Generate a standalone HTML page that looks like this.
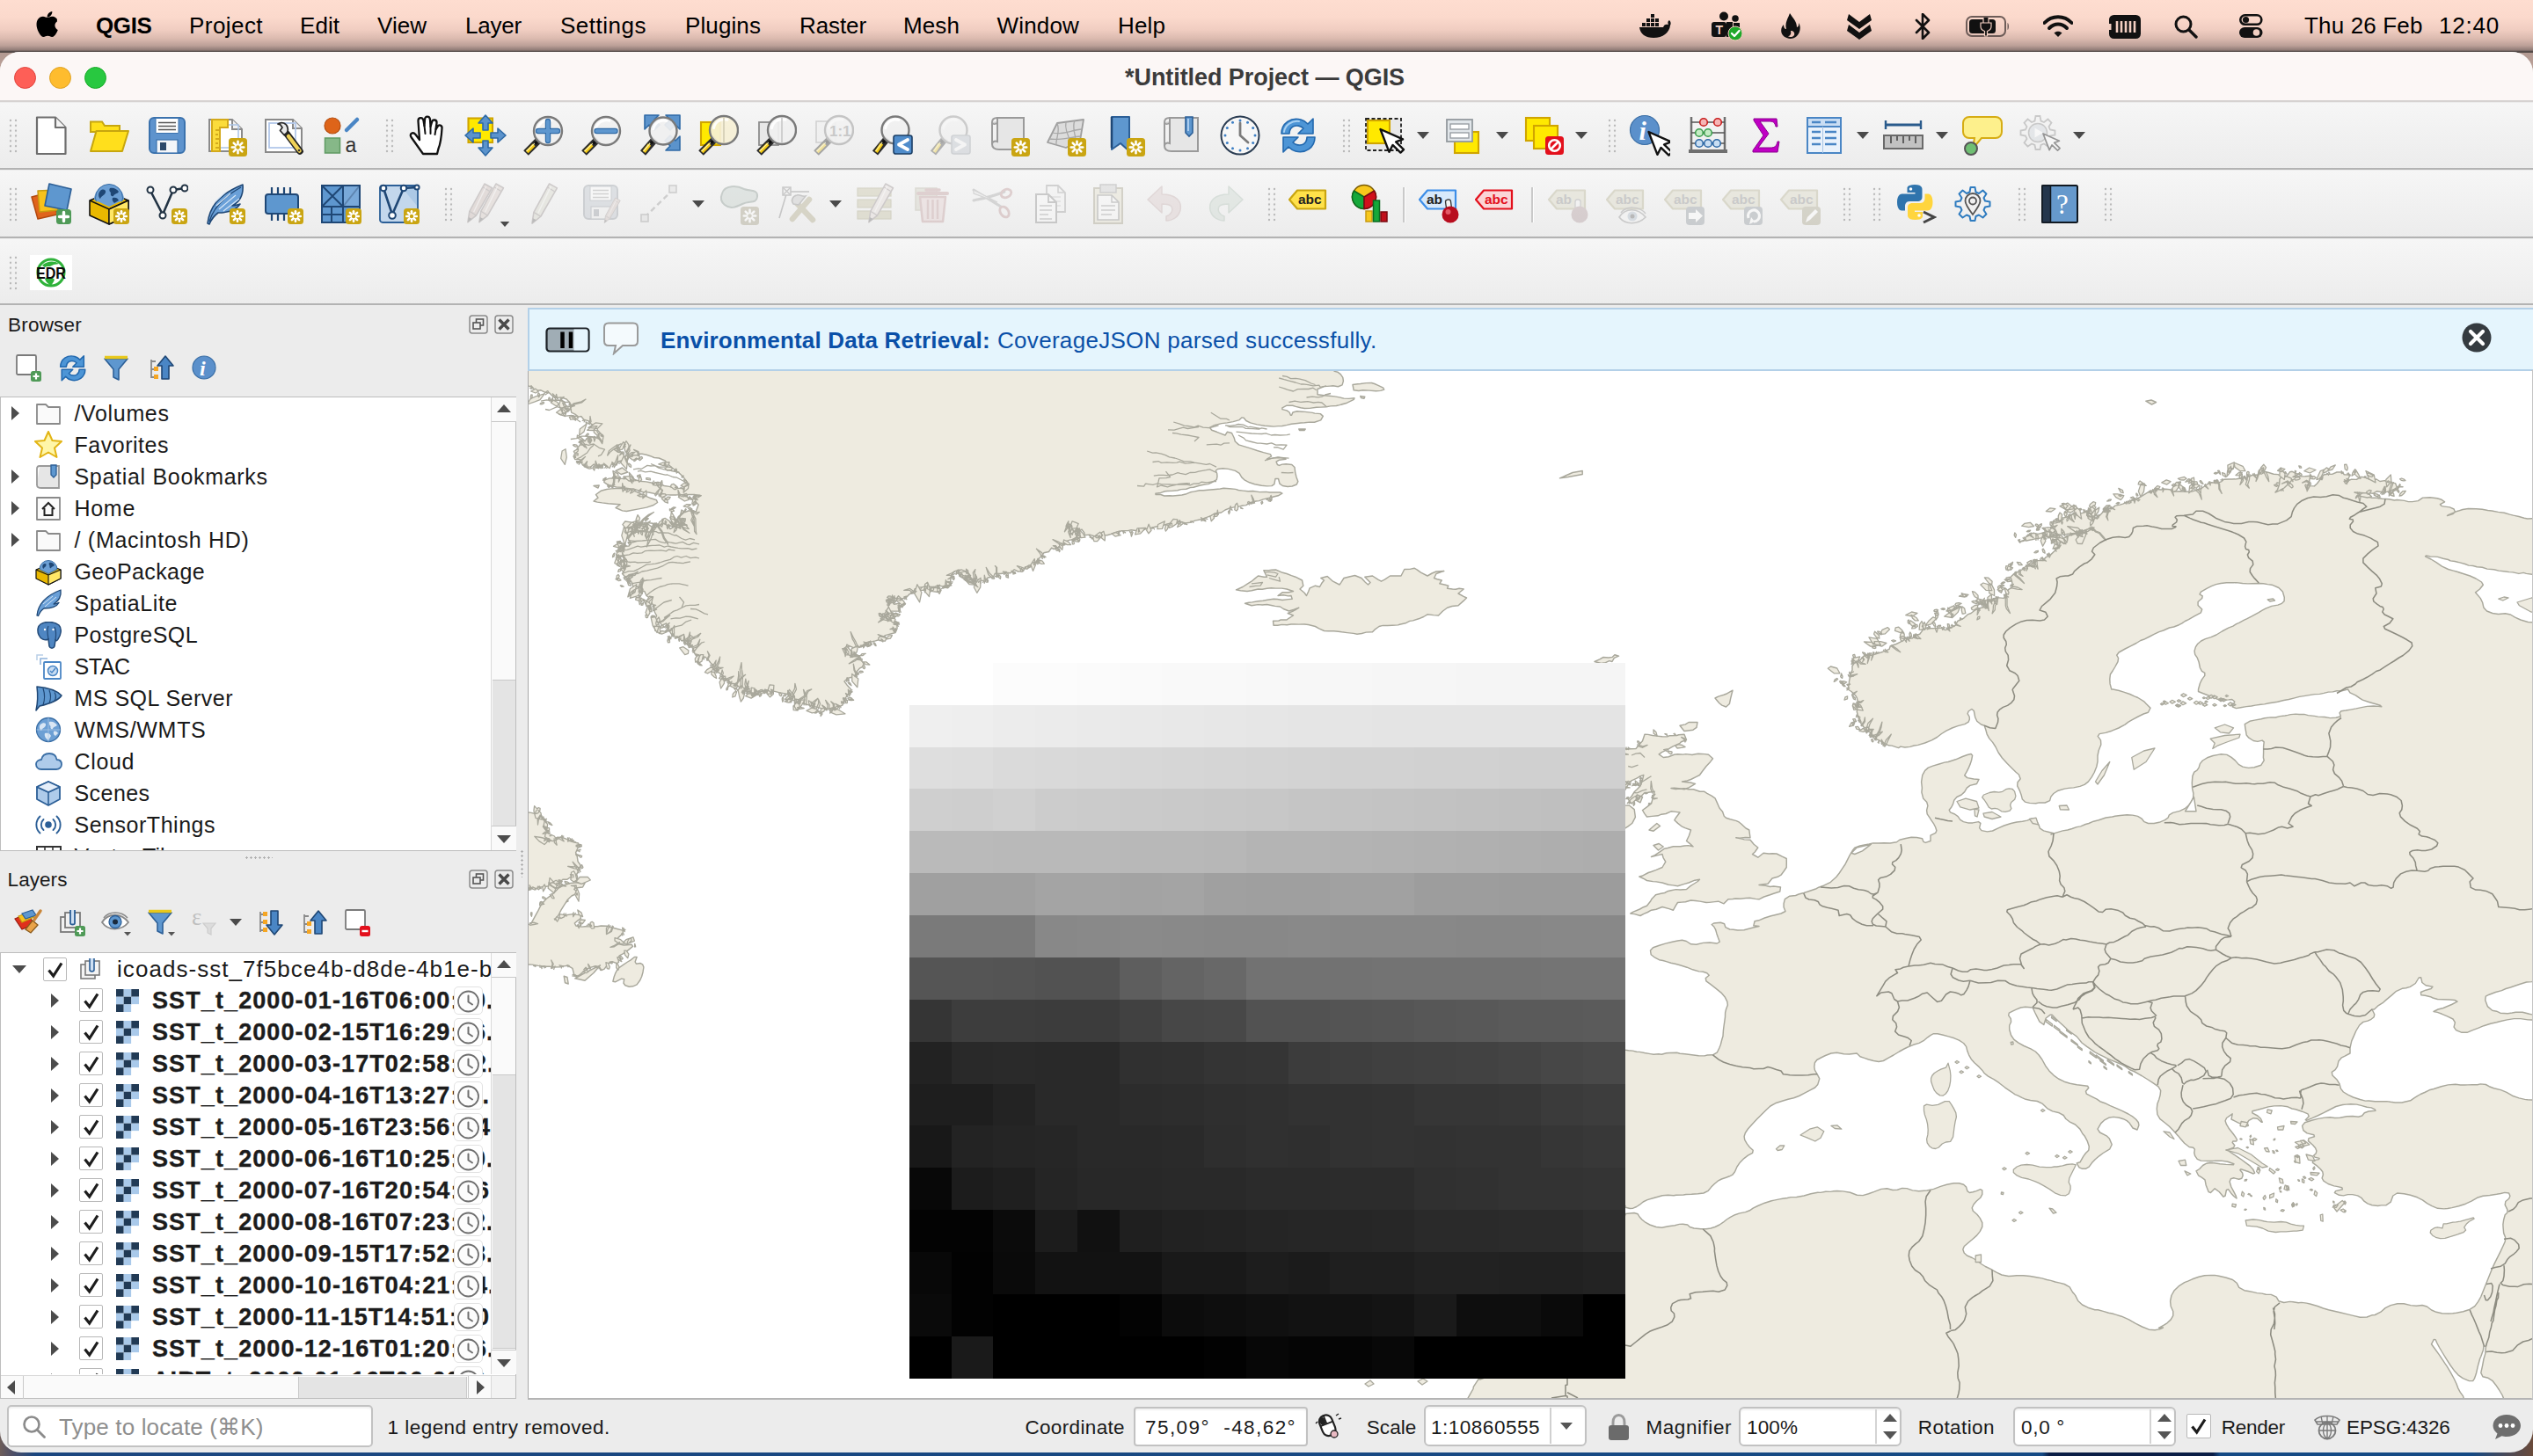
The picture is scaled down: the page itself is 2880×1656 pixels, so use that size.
<!DOCTYPE html><html><head><meta charset="utf-8"><title>QGIS</title><style>
*{box-sizing:border-box}
html,body{margin:0;padding:0}
body{width:2880px;height:1656px;position:relative;overflow:hidden;background:#0e3c78;font-family:"Liberation Sans",sans-serif}
.t{position:absolute;white-space:pre;line-height:1}
.menubar{position:absolute;left:0;top:0;width:2880px;height:100px;background:linear-gradient(#feddd0 0px,#fbd9cc 20px,#f0cdc1 34px,#dbbaaf 44px,#bb9f97 52px,#8f7b76 57px,#3a3433 59.2px,#b39a92 60.5px,#c4a79e 100px)}
.deskbottom{position:absolute;left:0;top:1600px;width:2880px;height:56px;background:linear-gradient(90deg,#6d5d5a 0px,#4f4f66 14px,#1b467f 40px,#154a84 2322px,#0a1d45 2330px,#0a1d45 2516px,#154a84 2524px,#154a84 2810px,#4a4a58 2850px,#6a4a3a 2880px)}
.win{position:absolute;left:0;top:59px;width:2880px;height:1593px;border-radius:22px 24px 26px 24px;background:#ececec;overflow:hidden}
.win>*{position:absolute}
.titlebar{left:0;top:0;width:2880px;height:57px;background:#fcf7f6;border-bottom:2px solid #d6d2d1}
.tl{top:17px;width:25px;height:25px;border-radius:50%}
.win .tb{left:0;width:2880px;background:linear-gradient(#f6f6f6,#ececec)}
.win .tb,.win .hl{margin-top:-59px}
.hl{left:0;width:2880px;height:2.2px;background:#b3b3b3}
.handle{position:absolute;width:12px;height:41px;background-image:radial-gradient(circle,#b9b9b9 1.1px,transparent 1.6px);background-size:6px 5.85px;background-position:0 0}
.vsep{position:absolute;width:3px;height:40px;background:linear-gradient(90deg,#c9c9c9 0 1.5px,#fdfdfd 1.5px 3px)}
.dd{position:absolute;width:0;height:0;border-left:7.5px solid transparent;border-right:7.5px solid transparent;border-top:8.5px solid #4a4a4a}
.ic{position:absolute}
</style></head><body><div class="menubar"></div>
<div class="deskbottom"></div>
<svg style="position:absolute;left:40px;top:11px" width="28" height="34" viewBox="0 0 28 34"><path fill="#000" d="M19.2 0c.2 1.7-.5 3.4-1.5 4.6-1 1.3-2.700 2.200-4.300 2.100-.2-1.600.600-3.400 1.500-4.400C15.900 1.100 17.700.200 19.200 0zM24.900 11.600c-2.900 1.700-3.700 6.300-.100 8.800.300.200.700.400 1.000.600-.500 1.500-1.200 2.900-2.100 4.200-1.300 1.900-2.600 3.800-4.700 3.800-2.000.000-2.600-1.200-4.900-1.200-2.300.000-3.000 1.200-4.900 1.200-2.000.100-3.600-2.100-4.900-4.000C1.700 21.200-.400 14.300 2.300 9.600 3.600 7.300 6.000 5.800 8.600 5.800c2.000.000 3.800 1.300 5.000 1.300 1.200.000 3.400-1.600 5.800-1.400 1.000.000 3.800.400 5.500 3.000z" transform="translate(0.5,2) scale(0.98,1.0)"/></svg>
<span class="t " id="t0" style="left:109px;top:16.3px;font-size:26px;letter-spacing:-0.379px;color:#000;font-weight:bold">QGIS</span>
<span class="t " id="t1" style="left:215px;top:16.3px;font-size:26px;letter-spacing:0.440px;color:#000;">Project</span>
<span class="t " id="t2" style="left:341px;top:16.3px;font-size:26px;letter-spacing:0.047px;color:#000;">Edit</span>
<span class="t " id="t3" style="left:429px;top:16.3px;font-size:26px;letter-spacing:0.027px;color:#000;">View</span>
<span class="t " id="t4" style="left:529px;top:16.3px;font-size:26px;letter-spacing:-0.209px;color:#000;">Layer</span>
<span class="t " id="t5" style="left:637px;top:16.3px;font-size:26px;letter-spacing:0.506px;color:#000;">Settings</span>
<span class="t " id="t6" style="left:779px;top:16.3px;font-size:26px;letter-spacing:0.103px;color:#000;">Plugins</span>
<span class="t " id="t7" style="left:909px;top:16.3px;font-size:26px;letter-spacing:-0.096px;color:#000;">Raster</span>
<span class="t " id="t8" style="left:1027px;top:16.3px;font-size:26px;letter-spacing:0.105px;color:#000;">Mesh</span>
<span class="t " id="t9" style="left:1133.6px;top:16.3px;font-size:26px;letter-spacing:0.153px;color:#000;">Window</span>
<span class="t " id="t10" style="left:1271px;top:16.3px;font-size:26px;letter-spacing:0.129px;color:#000;">Help</span>
<span class="t " id="t11" style="left:2620px;top:16.3px;font-size:26px;letter-spacing:0.162px;color:#000">Thu 26 Feb</span>
<span class="t " id="t12" style="left:2773px;top:16.3px;font-size:26px;letter-spacing:0.784px;color:#000">12:40</span>
<svg class="ic" style="left:1862.5px;top:15.0px" width="37" height="30" viewBox="0 0 37 30"><path d="M1 16H28C29 13 31 12 34 13C33 11 33 9 35 8C37 10 37 12 36 14C35 22 28 28 17 28C8 28 2 24 1 16Z" fill="#111"/><g fill="#111"><rect x="4" y="11" width="4" height="4"/><rect x="9" y="11" width="4" height="4"/><rect x="14" y="11" width="4" height="4"/><rect x="19" y="11" width="4" height="4"/><rect x="9" y="6" width="4" height="4"/><rect x="14" y="6" width="4" height="4"/><rect x="19" y="6" width="4" height="4"/><rect x="14" y="1" width="4" height="4"/></g></svg>
<svg class="ic" style="left:1946.0px;top:13.0px" width="36" height="34" viewBox="0 0 36 34"><circle cx="14" cy="5.500" r="5" fill="#111"/><circle cx="27" cy="8" r="3.800" fill="#111"/><rect x="0" y="12" width="17" height="17" rx="3" fill="#111"/><path d="M17 12H24V24C24 27 21 29 17 29Z" fill="#111"/><path d="M25 13H32V21C32 25 29 27 25 26Z" fill="#111"/><text x="4.500" y="26" font-family="Liberation Sans,sans-serif" font-weight="bold" font-size="14" fill="#f6d3c6">T</text><circle cx="27" cy="25" r="8" fill="#1fa82a" stroke="#f1c9bc" stroke-width="1"/><path d="M23 25L26 28L31.500 22" fill="none" stroke="#fff" stroke-width="2.400" stroke-linecap="round" stroke-linejoin="round"/></svg>
<svg class="ic" style="left:2024.0px;top:15.0px" width="24" height="30" viewBox="0 0 24 30"><path d="M11 0C14 5 19 9 19 16C22 15 21 11 21 11C24 15 23 22 19 26C15 30 7 30 3 25C0 21 1 16 4 13C4 16 5 18 7 18C5 11 9 6 11 0Z" fill="#111"/><path d="M12 20C15 20 17 22 16 25C15 27 11 28 9 26C11 26 13 24 12 20Z" fill="#efc6b9"/></svg>
<svg class="ic" style="left:2100.0px;top:14.5px" width="28" height="31" viewBox="0 0 28 31"><path d="M2 2L14 11L26 2L28 9L14 19L0 9Z" fill="#111" transform="translate(0,-1)"/><path d="M2 14L14 23L26 14L28 21L14 31L0 21Z" fill="#111" transform="translate(0,-1)"/></svg>
<svg class="ic" style="left:2177.0px;top:15.0px" width="18" height="30" viewBox="0 0 18 30"><path d="M2 8L16 22L9 29V1L16 8L2 22" fill="none" stroke="#111" stroke-width="2.600" stroke-linejoin="round" stroke-linecap="round"/></svg>
<svg class="ic" style="left:2234.5px;top:18.0px" width="51" height="24" viewBox="0 0 51 24"><rect x="1" y="1" width="44" height="22" rx="6" fill="none" stroke="#6d5c58" stroke-width="2"/><path d="M47.500 8C49.500 9 49.500 15 47.500 16Z" fill="#6d5c58"/><rect x="4" y="4" width="30" height="16" rx="3.500" fill="#111"/><path d="M20 2V8H26V2M17 8H29V12C29 16 26 17 24.500 17.500V23H21.500V17.500C20 17 17 16 17 12Z" fill="#111" stroke="#f3cfc2" stroke-width="1.200"/></svg>
<svg class="ic" style="left:2323.0px;top:17.0px" width="34" height="26" viewBox="0 0 34 26"><path d="M1.500 9C10 0 24 0 32.500 9" fill="none" stroke="#111" stroke-width="4" stroke-linecap="round"/><path d="M7 15C13 9 21 9 27 15" fill="none" stroke="#111" stroke-width="4" stroke-linecap="round"/><path d="M12.500 20.500C15 18 19 18 21.500 20.500L17 25Z" fill="#111"/></svg>
<svg class="ic" style="left:2397.5px;top:16.5px" width="36" height="27" viewBox="0 0 36 27"><rect x="0" y="0" width="36" height="27" rx="5.500" fill="#111"/><path d="M9 7V20M14 7V20M19 7V20M24 7V20M29 7V20" stroke="#f3cfc2" stroke-width="2.600"/><path d="M0 10H2.500V17H0Z" fill="#f3cfc2"/></svg>
<svg class="ic" style="left:2471.5px;top:16.5px" width="27" height="27" viewBox="0 0 27 27"><circle cx="10.500" cy="10.500" r="8.500" fill="none" stroke="#111" stroke-width="3"/><path d="M17 17L25 25" stroke="#111" stroke-width="3.400" stroke-linecap="round"/></svg>
<svg class="ic" style="left:2545.5px;top:16.0px" width="27" height="28" viewBox="0 0 27 28"><rect x="1.300" y="1.300" width="24" height="10.500" rx="5.250" fill="none" stroke="#111" stroke-width="2.600"/><circle cx="7.500" cy="6.500" r="3.600" fill="#111"/><rect x="0" y="15" width="26.500" height="12" rx="6" fill="#111"/><circle cx="19.500" cy="21" r="3.800" fill="#f3cfc2"/></svg>
<div class="win">
<div class="titlebar"></div>
<div class="tl" style="left:16px;background:#fe5f57;border:1px solid #e0443e"></div><div class="tl" style="left:56px;background:#febc2e;border:1px solid #dea123"></div><div class="tl" style="left:96px;background:#28c840;border:1px solid #1aab29"></div>
<div class="tb" style="top:117px;height:75px"></div><div class="hl" style="top:191px"></div>
<div class="tb" style="top:193.5px;height:76px"></div><div class="hl" style="top:269px"></div>
<div class="tb" style="top:271.5px;height:74px"></div><div class="hl" style="top:345px"></div>
</div>
<span class="t " id="t13" style="left:1279px;top:75.1px;font-size:27px;letter-spacing:-0.064px;color:#3b3b3b;font-weight:bold">*Untitled Project — QGIS</span>
<div class="handle" style="left:9px;top:134px"></div>
<div class="handle" style="left:437px;top:134px"></div>
<div class="handle" style="left:1525px;top:134px"></div>
<div class="handle" style="left:1827px;top:134px"></div>
<div class="handle" style="left:9px;top:212px"></div>
<div class="handle" style="left:504px;top:212px"></div>
<div class="handle" style="left:1440px;top:212px"></div>
<div class="handle" style="left:2094px;top:212px"></div>
<div class="handle" style="left:2128px;top:212px"></div>
<div class="handle" style="left:2293px;top:212px"></div>
<div class="handle" style="left:2391px;top:212px"></div>
<div class="handle" style="left:9px;top:290px"></div>
<div class="vsep" style="left:1595px;top:213px"></div><div class="vsep" style="left:1741px;top:213px"></div>
<svg class="ic" style="left:34.0px;top:130.0px" width="48" height="48" viewBox="0 0 48 48"><path d="M8 3.500H29L40.500 15V45H8Z" fill="#fff" stroke="#6e6e6e" stroke-width="2.200" stroke-linejoin="round"/><path d="M29 3.500V15H40.500" fill="#f4f4f4" stroke="#6e6e6e" stroke-width="2.200" stroke-linejoin="round"/></svg>
<svg class="ic" style="left:100.0px;top:130.0px" width="48" height="48" viewBox="0 0 48 48"><path d="M3 8.500H16L19 13H36V20H3Z" fill="#ffe01a" stroke="#c7a60e" stroke-width="2"/><path d="M3 42L9.500 19H46L39 42Z" fill="#ffdf1c" stroke="#c7a60e" stroke-width="2" stroke-linejoin="round"/></svg>
<svg class="ic" style="left:166.0px;top:130.0px" width="48" height="48" viewBox="0 0 48 48"><rect x="4" y="4" width="40" height="40" rx="5" fill="#5e93cd" stroke="#3b72ad" stroke-width="2"/><rect x="11" y="4.500" width="26" height="17" rx="1" fill="#fff" stroke="#3b72ad" stroke-width="1"/><path d="M14 9.500H34M14 13.500H34M14 17.500H34" stroke="#555" stroke-width="1.600"/><rect x="12" y="29" width="24" height="15" fill="#f4f6f9" stroke="#3b72ad" stroke-width="1.200"/><rect x="16" y="32" width="7" height="9" fill="#2d4a6b"/></svg>
<svg class="ic" style="left:233.0px;top:130.0px" width="48" height="48" viewBox="0 0 48 48"><path d="M5 6H31L42 17V42H5Z" fill="#fff" stroke="#8a8a8a" stroke-width="2"/><path d="M31 6V17H42" fill="#f1f1f1" stroke="#8a8a8a" stroke-width="2"/><rect x="10" y="12" width="28" height="26" fill="none" stroke="#aac4e6" stroke-width="1.500"/><path d="M8 6H26V15H17V42H8Z" fill="#fbdc3c" stroke="#d3a91a" stroke-width="2"/><path d="M12 18H16M12 23H15M12 28H16M12 33H15M12 38H16" stroke="#c79a10" stroke-width="1.500"/><g opacity="1"><rect x="27" y="27" width="21" height="21" rx="3.5" fill="#caa512"/><path d="M37.5 37.5L44.2 37.5" stroke="#fff" stroke-width="2.6" stroke-linecap="round"/><path d="M37.5 37.5L42.3 42.3" stroke="#fff" stroke-width="2.6" stroke-linecap="round"/><path d="M37.5 37.5L37.5 44.2" stroke="#fff" stroke-width="2.6" stroke-linecap="round"/><path d="M37.5 37.5L32.7 42.3" stroke="#fff" stroke-width="2.6" stroke-linecap="round"/><path d="M37.5 37.5L30.8 37.5" stroke="#fff" stroke-width="2.6" stroke-linecap="round"/><path d="M37.5 37.5L32.7 32.7" stroke="#fff" stroke-width="2.6" stroke-linecap="round"/><path d="M37.5 37.5L37.5 30.8" stroke="#fff" stroke-width="2.6" stroke-linecap="round"/><path d="M37.5 37.5L42.3 32.7" stroke="#fff" stroke-width="2.6" stroke-linecap="round"/><circle cx="37.5" cy="37.5" r="2.2" fill="#caa512"/></g></svg>
<svg class="ic" style="left:298.0px;top:130.0px" width="48" height="48" viewBox="0 0 48 48"><path d="M4 6H35L45 16V43H4Z" fill="#fff" stroke="#8a8a8a" stroke-width="2"/><path d="M35 6V16H45" fill="#f1f1f1" stroke="#8a8a8a" stroke-width="2"/><rect x="8" y="10" width="30" height="28" fill="none" stroke="#b3c8ea" stroke-width="1.800"/><path d="M28 22L43 42" stroke="#222" stroke-width="7.500" stroke-linecap="round"/><path d="M30 25L42.500 41.500" stroke="#f0d257" stroke-width="4.500" stroke-linecap="round"/><path d="M18 11C22 8 28 10 29 15C30 19 28 22 25 23.500L20.500 18.500L23 15L20.500 11.500Z" fill="#e9e9e9" stroke="#2a2a2a" stroke-width="1.800" stroke-linejoin="round"/><circle cx="42" cy="41" r="1.300" fill="#333"/></svg>
<svg class="ic" style="left:364.0px;top:130.0px" width="48" height="48" viewBox="0 0 48 48"><circle cx="14" cy="13" r="9" fill="#de6419" stroke="#b54d0e" stroke-width="1.200"/><path d="M30 18L42 6" stroke="#4a86c5" stroke-width="4.500" stroke-linecap="round"/><rect x="5.500" y="27" width="17" height="17" fill="#86b888" stroke="#5f9a63" stroke-width="1.500"/><text x="28.500" y="43" font-family="Liberation Sans,sans-serif" font-size="23" fill="#333">a</text></svg>
<svg class="ic" style="left:462.0px;top:130.0px" width="48" height="48" viewBox="0 0 48 48"><path d="M19 45C14 38 9 31 5.500 26C3 22 7.500 19.500 10.500 23L15 29L13.500 8C13 3.500 18.500 2.500 19.500 7L20.500 13L21 6C21 1.500 26.500 1.500 27 6L27.500 14L29 9C30 5 35 6 34.500 10L33.500 17L35.500 14C37 11 41 12.500 40.500 16C40 24 39 33 36.500 39L35 45Z" fill="#fff" stroke="#111" stroke-width="2.300" stroke-linejoin="round"/><path d="M20.500 13L21.500 22M27.500 14L27.500 22M33.500 17L32.500 23" stroke="#111" stroke-width="2" stroke-linecap="round"/></svg>
<svg class="ic" style="left:528.0px;top:130.0px" width="48" height="48" viewBox="0 0 48 48"><rect x="4.500" y="4.500" width="27.500" height="27.500" fill="#ffe900" stroke="#d0a500" stroke-width="2.100"/><g fill="#5b93cc" stroke="#2f6aa6" stroke-width="1.600" stroke-linejoin="round"><path d="M24 1L32 10H27V18H21V10H16Z"/><path d="M24 47L32 38H27V30H21V38H16Z"/><path d="M1 24L10 16V21H18V27H10V32Z"/><path d="M47 24L38 16V21H30V27H38V32Z"/></g></svg>
<svg class="ic" style="left:593.0px;top:130.0px" width="48" height="48" viewBox="0 0 48 48"><g opacity="1"><path d="M20.6 28.4L5 44" stroke="#2c2c2c" stroke-width="8" stroke-linecap="butt"/><path d="M14.1 34.9L6.200 42.800" stroke="#f5cb14" stroke-width="4" stroke-linecap="butt"/><path d="M15.1 32.9L5.500 42" stroke="#fff3a8" stroke-width="1.200" stroke-linecap="butt"/><circle cx="30" cy="19" r="16" fill="#f0f0f0" fill-opacity="0.93" stroke="#7a7a7a" stroke-width="2.400"/><circle cx="16.5" cy="32.5" r="1.900" fill="#111"/><path d="M18.5 16.6A12.2 12.2 0 0 1 34.0 7.2" fill="none" stroke="#fff" stroke-width="3" stroke-linecap="round" opacity="0.9"/></g><path d="M30 8V30M19 19H41" stroke="#2f6aa6" stroke-width="6.400" stroke-linecap="round"/><path d="M30 8V30M19 19H41" stroke="#5e97cf" stroke-width="4.200" stroke-linecap="round"/></svg>
<svg class="ic" style="left:659.0px;top:130.0px" width="48" height="48" viewBox="0 0 48 48"><g opacity="1"><path d="M20.6 28.4L5 44" stroke="#2c2c2c" stroke-width="8" stroke-linecap="butt"/><path d="M14.1 34.9L6.200 42.800" stroke="#f5cb14" stroke-width="4" stroke-linecap="butt"/><path d="M15.1 32.9L5.500 42" stroke="#fff3a8" stroke-width="1.200" stroke-linecap="butt"/><circle cx="30" cy="19" r="16" fill="#f0f0f0" fill-opacity="0.93" stroke="#7a7a7a" stroke-width="2.400"/><circle cx="16.5" cy="32.5" r="1.900" fill="#111"/><path d="M18.5 16.6A12.2 12.2 0 0 1 34.0 7.2" fill="none" stroke="#fff" stroke-width="3" stroke-linecap="round" opacity="0.9"/></g><path d="M19.500 19H40.500" stroke="#2f6aa6" stroke-width="6.400" stroke-linecap="round"/><path d="M19.500 19H40.500" stroke="#5e97cf" stroke-width="4.200" stroke-linecap="round"/></svg>
<svg class="ic" style="left:726.0px;top:130.0px" width="48" height="48" viewBox="0 0 48 48"><g fill="#5b93cc" stroke="#2f6aa6" stroke-width="1.600" stroke-linejoin="round"><path d="M7 1H23L18 6L24 12L18 18L12 12L7 17Z"/><path d="M47 1V17L42 12L36 18L30 12L36 6L31 1Z"/><path d="M47 41V25L42 30L36 24L30 30L36 36L31 41Z"/></g><g opacity="1"><path d="M19.0 28.0L5 44" stroke="#2c2c2c" stroke-width="8" stroke-linecap="butt"/><path d="M12.5 34.5L6.200 42.800" stroke="#f5cb14" stroke-width="4" stroke-linecap="butt"/><path d="M13.5 32.5L5.500 42" stroke="#fff3a8" stroke-width="1.200" stroke-linecap="butt"/><circle cx="28" cy="19" r="15.5" fill="#f0f0f0" fill-opacity="0.93" stroke="#7a7a7a" stroke-width="2.400"/><circle cx="14.9" cy="32.1" r="1.900" fill="#111"/><path d="M16.8 16.7A11.8 11.8 0 0 1 31.9 7.5" fill="none" stroke="#fff" stroke-width="3" stroke-linecap="round" opacity="0.9"/></g></svg>
<svg class="ic" style="left:792.0px;top:130.0px" width="48" height="48" viewBox="0 0 48 48"><rect x="5" y="9" width="22" height="26" fill="#ffe900" stroke="#d0a500" stroke-width="2.100"/><g opacity="1"><path d="M21.6 27.4L5 44" stroke="#2c2c2c" stroke-width="8" stroke-linecap="butt"/><path d="M15.1 33.9L6.200 42.800" stroke="#f5cb14" stroke-width="4" stroke-linecap="butt"/><path d="M16.1 31.9L5.500 42" stroke="#fff3a8" stroke-width="1.200" stroke-linecap="butt"/><circle cx="31" cy="18" r="16" fill="#f6f0d6" fill-opacity="0.93" stroke="#7a7a7a" stroke-width="2.400"/><circle cx="17.5" cy="31.5" r="1.900" fill="#111"/><path d="M19.5 15.6A12.2 12.2 0 0 1 35.0 6.2" fill="none" stroke="#fff" stroke-width="3" stroke-linecap="round" opacity="0.9"/></g><path d="M31 3V33" stroke="#cfcab0" stroke-width="1.500"/></svg>
<svg class="ic" style="left:858.0px;top:130.0px" width="48" height="48" viewBox="0 0 48 48"><rect x="5" y="9" width="22" height="26" fill="#e8e8e8" stroke="#8d8d8d" stroke-width="1.800"/><g opacity="1"><path d="M21.6 27.4L5 44" stroke="#2c2c2c" stroke-width="8" stroke-linecap="butt"/><path d="M15.1 33.9L6.200 42.800" stroke="#f5cb14" stroke-width="4" stroke-linecap="butt"/><path d="M16.1 31.9L5.500 42" stroke="#fff3a8" stroke-width="1.200" stroke-linecap="butt"/><circle cx="31" cy="18" r="16" fill="#f0f0f0" fill-opacity="0.93" stroke="#7a7a7a" stroke-width="2.400"/><circle cx="17.5" cy="31.5" r="1.900" fill="#111"/><path d="M19.5 15.6A12.2 12.2 0 0 1 35.0 6.2" fill="none" stroke="#fff" stroke-width="3" stroke-linecap="round" opacity="0.9"/></g><path d="M31 3V33" stroke="#c4c4c4" stroke-width="1.500"/></svg>
<svg class="ic" style="left:923.0px;top:130.0px" width="48" height="48" viewBox="0 0 48 48"><g opacity="0.38"><rect x="5" y="8" width="22" height="24" fill="#eee" stroke="#999" stroke-width="1.500"/><g opacity="1"><path d="M21.6 27.4L5 44" stroke="#2c2c2c" stroke-width="8" stroke-linecap="butt"/><path d="M15.1 33.9L6.200 42.800" stroke="#f5cb14" stroke-width="4" stroke-linecap="butt"/><path d="M16.1 31.9L5.500 42" stroke="#fff3a8" stroke-width="1.200" stroke-linecap="butt"/><circle cx="31" cy="18" r="16" fill="#f0f0f0" fill-opacity="0.93" stroke="#7a7a7a" stroke-width="2.400"/><circle cx="17.5" cy="31.5" r="1.900" fill="#111"/><path d="M19.5 15.6A12.2 12.2 0 0 1 35.0 6.2" fill="none" stroke="#fff" stroke-width="3" stroke-linecap="round" opacity="0.9"/></g><text x="20" y="25" font-family="Liberation Sans,sans-serif" font-weight="bold" font-size="17" fill="#888">1:1</text></g></svg>
<svg class="ic" style="left:990.0px;top:130.0px" width="48" height="48" viewBox="0 0 48 48"><g opacity="1"><path d="M19.0 27.0L5 44" stroke="#2c2c2c" stroke-width="8" stroke-linecap="butt"/><path d="M12.5 33.5L6.200 42.800" stroke="#f5cb14" stroke-width="4" stroke-linecap="butt"/><path d="M13.5 31.5L5.500 42" stroke="#fff3a8" stroke-width="1.200" stroke-linecap="butt"/><circle cx="28" cy="18" r="15.5" fill="#f0f0f0" fill-opacity="0.93" stroke="#7a7a7a" stroke-width="2.400"/><circle cx="14.9" cy="31.1" r="1.900" fill="#111"/><path d="M16.8 15.7A11.8 11.8 0 0 1 31.9 6.5" fill="none" stroke="#fff" stroke-width="3" stroke-linecap="round" opacity="0.9"/></g><rect x="26" y="24" width="21" height="21" rx="2.500" fill="#4f8ccb" stroke="#1c3f66" stroke-width="1.600"/><path d="M42 29L32 34.500L42 40" fill="none" stroke="#fff" stroke-width="3.800" stroke-linecap="round" stroke-linejoin="round"/></svg>
<svg class="ic" style="left:1056.0px;top:130.0px" width="48" height="48" viewBox="0 0 48 48"><g opacity="0.32"><g opacity="1"><path d="M19.0 27.0L5 44" stroke="#2c2c2c" stroke-width="8" stroke-linecap="butt"/><path d="M12.5 33.5L6.200 42.800" stroke="#f5cb14" stroke-width="4" stroke-linecap="butt"/><path d="M13.5 31.5L5.500 42" stroke="#fff3a8" stroke-width="1.200" stroke-linecap="butt"/><circle cx="28" cy="18" r="15.5" fill="#f0f0f0" fill-opacity="0.93" stroke="#7a7a7a" stroke-width="2.400"/><circle cx="14.9" cy="31.1" r="1.900" fill="#111"/><path d="M16.8 15.7A11.8 11.8 0 0 1 31.9 6.5" fill="none" stroke="#fff" stroke-width="3" stroke-linecap="round" opacity="0.9"/></g><rect x="26" y="24" width="21" height="21" rx="2.500" fill="#b5bcc6" stroke="#8d949c" stroke-width="1.600"/><path d="M31 29L41 34.500L31 40" fill="none" stroke="#fff" stroke-width="3.800" stroke-linecap="round" stroke-linejoin="round"/></g></svg>
<svg class="ic" style="left:1124.0px;top:130.0px" width="48" height="48" viewBox="0 0 48 48"><path d="M10 4H40V40H12C7 40 4 38 4 34C4 31 7 30 10 31Z" fill="#e6e6e6" stroke="#9a9a9a" stroke-width="2"/><path d="M10 4C6 4 4 6 4 9V34" fill="none" stroke="#9a9a9a" stroke-width="2"/><path d="M4 9C4 12 10 12 10 8" fill="#cfcfcf" stroke="#9a9a9a" stroke-width="1.500"/><g opacity="1"><rect x="26" y="27" width="21" height="21" rx="3.5" fill="#caa512"/><path d="M36.5 37.5L43.2 37.5" stroke="#fff" stroke-width="2.6" stroke-linecap="round"/><path d="M36.5 37.5L41.3 42.3" stroke="#fff" stroke-width="2.6" stroke-linecap="round"/><path d="M36.5 37.5L36.5 44.2" stroke="#fff" stroke-width="2.6" stroke-linecap="round"/><path d="M36.5 37.5L31.7 42.3" stroke="#fff" stroke-width="2.6" stroke-linecap="round"/><path d="M36.5 37.5L29.8 37.5" stroke="#fff" stroke-width="2.6" stroke-linecap="round"/><path d="M36.5 37.5L31.7 32.7" stroke="#fff" stroke-width="2.6" stroke-linecap="round"/><path d="M36.5 37.5L36.5 30.8" stroke="#fff" stroke-width="2.6" stroke-linecap="round"/><path d="M36.5 37.5L41.3 32.7" stroke="#fff" stroke-width="2.6" stroke-linecap="round"/><circle cx="36.5" cy="37.5" r="2.2" fill="#caa512"/></g></svg>
<svg class="ic" style="left:1188.0px;top:130.0px" width="48" height="48" viewBox="0 0 48 48"><path d="M3 32L14 10L44 6L40 30L24 38Z" fill="#dcdcdc" stroke="#9e9e9e" stroke-width="1.800" stroke-linejoin="round"/><path d="M9 21C18 24 30 18 42 17M24 9C22 18 28 28 31 34M14 10C18 20 12 28 13 35M34 7C30 16 36 24 35 33M5 28C16 30 28 26 41 25" fill="none" stroke="#a8a8a8" stroke-width="1.300"/><g opacity="1"><rect x="26" y="27" width="21" height="21" rx="3.5" fill="#caa512"/><path d="M36.5 37.5L43.2 37.5" stroke="#fff" stroke-width="2.6" stroke-linecap="round"/><path d="M36.5 37.5L41.3 42.3" stroke="#fff" stroke-width="2.6" stroke-linecap="round"/><path d="M36.5 37.5L36.5 44.2" stroke="#fff" stroke-width="2.6" stroke-linecap="round"/><path d="M36.5 37.5L31.7 42.3" stroke="#fff" stroke-width="2.6" stroke-linecap="round"/><path d="M36.5 37.5L29.8 37.5" stroke="#fff" stroke-width="2.6" stroke-linecap="round"/><path d="M36.5 37.5L31.7 32.7" stroke="#fff" stroke-width="2.6" stroke-linecap="round"/><path d="M36.5 37.5L36.5 30.8" stroke="#fff" stroke-width="2.6" stroke-linecap="round"/><path d="M36.5 37.5L41.3 32.7" stroke="#fff" stroke-width="2.6" stroke-linecap="round"/><circle cx="36.5" cy="37.5" r="2.2" fill="#caa512"/></g></svg>
<svg class="ic" style="left:1256.0px;top:130.0px" width="48" height="48" viewBox="0 0 48 48"><path d="M10 3H30V42L20 33L10 40Z" fill="#5e97cf" stroke="#2c5f97" stroke-width="2" stroke-linejoin="round" transform="translate(-2,0)"/><path d="M8 3V38" stroke="#1f4775" stroke-width="2.500"/><g opacity="1"><rect x="25" y="27" width="21" height="21" rx="3.5" fill="#caa512"/><path d="M35.5 37.5L42.2 37.5" stroke="#fff" stroke-width="2.6" stroke-linecap="round"/><path d="M35.5 37.5L40.3 42.3" stroke="#fff" stroke-width="2.6" stroke-linecap="round"/><path d="M35.5 37.5L35.5 44.2" stroke="#fff" stroke-width="2.6" stroke-linecap="round"/><path d="M35.5 37.5L30.7 42.3" stroke="#fff" stroke-width="2.6" stroke-linecap="round"/><path d="M35.5 37.5L28.8 37.5" stroke="#fff" stroke-width="2.6" stroke-linecap="round"/><path d="M35.5 37.5L30.7 32.7" stroke="#fff" stroke-width="2.6" stroke-linecap="round"/><path d="M35.5 37.5L35.5 30.8" stroke="#fff" stroke-width="2.6" stroke-linecap="round"/><path d="M35.5 37.5L40.3 32.7" stroke="#fff" stroke-width="2.6" stroke-linecap="round"/><circle cx="35.5" cy="37.5" r="2.2" fill="#caa512"/></g></svg>
<svg class="ic" style="left:1320.0px;top:130.0px" width="48" height="48" viewBox="0 0 48 48"><path d="M10 4H42V42H12C7 42 4 40 4 36C4 33 7 32 10 33Z" fill="#e6e6e6" stroke="#9a9a9a" stroke-width="2"/><path d="M10 4C6 4 4 6 4 9V36" fill="none" stroke="#9a9a9a" stroke-width="2"/><path d="M4 9C4 12 10 12 10 8" fill="#cfcfcf" stroke="#9a9a9a" stroke-width="1.500"/><path d="M28 3H36V21L32 25L28 21Z" fill="#5e97cf" stroke="#2c5f97" stroke-width="1.600"/><path d="M31 5V19" stroke="#a9cbee" stroke-width="2"/></svg>
<svg class="ic" style="left:1386.0px;top:130.0px" width="48" height="48" viewBox="0 0 48 48"><circle cx="24" cy="24" r="21.500" fill="#f7f7f7" stroke="#2a3c52" stroke-width="2"/><circle cx="41.0" cy="24.0" r="1.500" fill="#3d7fc4"/><circle cx="38.7" cy="32.5" r="1.500" fill="#3d7fc4"/><circle cx="32.5" cy="38.7" r="1.500" fill="#3d7fc4"/><circle cx="24.0" cy="41.0" r="1.500" fill="#3d7fc4"/><circle cx="15.5" cy="38.7" r="1.500" fill="#3d7fc4"/><circle cx="9.3" cy="32.5" r="1.500" fill="#3d7fc4"/><circle cx="7.0" cy="24.0" r="1.500" fill="#3d7fc4"/><circle cx="9.3" cy="15.5" r="1.500" fill="#3d7fc4"/><circle cx="15.5" cy="9.3" r="1.500" fill="#3d7fc4"/><circle cx="24.0" cy="7.0" r="1.500" fill="#3d7fc4"/><circle cx="32.5" cy="9.3" r="1.500" fill="#3d7fc4"/><circle cx="38.7" cy="15.5" r="1.500" fill="#3d7fc4"/><path d="M24 10V24L33 32" fill="none" stroke="#7b7b7b" stroke-width="2.800" stroke-linecap="round" stroke-linejoin="round"/></svg>
<svg class="ic" style="left:1452.0px;top:130.0px" width="48" height="48" viewBox="0 0 48 48"><g fill="#4d95d6" stroke="#2268ae" stroke-width="1.600" stroke-linejoin="round"><path d="M5 22C5 10 16 3 27 6C31 7 33 9 35 11L41 5V22H24L30 16C27 13 22 12 18 14C15 16 14 19 14 22Z"/><path d="M43 26C43 38 32 45 21 42C17 41 15 39 13 37L7 43V26H24L18 32C21 35 26 36 30 34C33 32 34 29 34 26Z"/></g><path d="M8 20C9 12 17 7 25 8" fill="none" stroke="#a9d1f3" stroke-width="2" stroke-linecap="round"/></svg>
<svg class="ic" style="left:1550.0px;top:130.0px" width="48" height="48" viewBox="0 0 48 48"><rect x="3" y="5" width="40" height="36" fill="#e9e9e9" stroke="#222" stroke-width="1.800" stroke-dasharray="4 2.500"/><rect x="5" y="7" width="25" height="26" fill="#ffe900" stroke="#d0a500" stroke-width="2.100"/><path transform="translate(19.5,17) scale(1.32) rotate(-21)" d="M0 0L0 21L5 16.500L9 25L12.500 23.500L8.500 15L15 15Z" fill="#fff" stroke="#111" stroke-width="1.800" stroke-linejoin="round" opacity="1"/></svg>
<svg class="ic" style="left:1641.0px;top:130.0px" width="48" height="48" viewBox="0 0 48 48"><rect x="13" y="20" width="27" height="24" fill="#ffe900" stroke="#d0a500" stroke-width="2.100"/><rect x="4" y="6" width="29" height="25" fill="#e1e6ea" stroke="#93999e" stroke-width="1.800"/><rect x="8" y="11" width="21" height="6" fill="#fff" stroke="#93999e" stroke-width="1.300"/><rect x="8" y="21" width="21" height="6" fill="#fff" stroke="#93999e" stroke-width="1.300"/></svg>
<svg class="ic" style="left:1732.0px;top:130.0px" width="48" height="48" viewBox="0 0 48 48"><rect x="3" y="4" width="27" height="26" fill="#ffe900" stroke="#d0a500" stroke-width="2.100"/><rect x="12" y="13" width="27" height="26" fill="#ffe900" stroke="#d0a500" stroke-width="2.100"/><rect x="25" y="25" width="21" height="21" rx="3.500" fill="#e3101c"/><circle cx="35.500" cy="35.500" r="6.300" fill="none" stroke="#fff" stroke-width="2.600"/><path d="M31 40L40 31" stroke="#fff" stroke-width="2.600"/></svg>
<svg class="ic" style="left:1851.0px;top:130.0px" width="48" height="48" viewBox="0 0 48 48"><circle cx="19" cy="18" r="16.500" fill="#5b90cb" stroke="#3a6ea5" stroke-width="1.200"/><text x="12.500" y="29" font-family="Liberation Serif,serif" font-style="italic" font-weight="bold" font-size="30" fill="#fff">i</text><path transform="translate(23.5,20) scale(1.32) rotate(-21)" d="M0 0L0 21L5 16.500L9 25L12.500 23.500L8.500 15L15 15Z" fill="#fff" stroke="#111" stroke-width="1.800" stroke-linejoin="round" opacity="1"/></svg>
<svg class="ic" style="left:1918.0px;top:130.0px" width="48" height="48" viewBox="0 0 48 48"><path d="M5 3V40M43 3V40" stroke="#6f6f6f" stroke-width="2.500"/><path d="M2 42H46" stroke="#6f6f6f" stroke-width="4"/><path d="M5 9H43M5 21H43M5 33H43" stroke="#555" stroke-width="1.500"/><g stroke-width="1.600"><circle cx="19" cy="9" r="4.300" fill="#f6b5b5" stroke="#c81e1e"/><circle cx="35" cy="9" r="4.300" fill="#f6b5b5" stroke="#c81e1e"/><circle cx="14" cy="21" r="4.300" fill="#c4ecc4" stroke="#3c9c4c"/><circle cx="24" cy="21" r="4.300" fill="#c4ecc4" stroke="#3c9c4c"/><circle cx="14" cy="33" r="4.300" fill="#c9def2" stroke="#2f6aa6"/><circle cx="24" cy="33" r="4.300" fill="#c9def2" stroke="#2f6aa6"/><circle cx="34" cy="33" r="4.300" fill="#c9def2" stroke="#2f6aa6"/></g></svg>
<svg class="ic" style="left:1984.0px;top:130.0px" width="48" height="48" viewBox="0 0 48 48"><path d="M10 5H36L37 14H35C34 9 32 8 27 8H17L27 22L15 38H29C34 38 36 36 37 31H39L37 43H9V41L21 24L10 7Z" fill="#c000c4" stroke="#8a008e" stroke-width="1"/></svg>
<svg class="ic" style="left:2050.0px;top:130.0px" width="48" height="48" viewBox="0 0 48 48"><rect x="5" y="4" width="38" height="40" fill="#eaf2fb" stroke="#4a86c5" stroke-width="2"/><rect x="5" y="4" width="38" height="10" fill="#c9ddf3" stroke="#4a86c5" stroke-width="2"/><g stroke="#4a86c5" stroke-width="2.400"><path d="M10 9H20M25 9H38M10 20H20M25 20H38M10 27H20M25 27H38M10 34H20M25 34H38"/></g><path d="M22.500 14V44" stroke="#a9c6e6" stroke-width="1"/></svg>
<svg class="ic" style="left:2140.0px;top:130.0px" width="48" height="48" viewBox="0 0 48 48"><path d="M3 12H45" stroke="#2a5b8c" stroke-width="2.800"/><path d="M4 7V17M44 7V17" stroke="#2a5b8c" stroke-width="2.400"/><rect x="2" y="24" width="44" height="15" fill="#c2c2c2" stroke="#6a6a6a" stroke-width="2"/><path d="M10 25V33M17 25V30M24 25V33M31 25V30M38 25V33" stroke="#555" stroke-width="1.800"/></svg>
<svg class="ic" style="left:2230.0px;top:130.0px" width="48" height="48" viewBox="0 0 48 48"><path d="M8 3H38C42 3 45 6 45 10V20C45 24 42 27 38 27H22L12 39L14 27H8C4 27 1 24 1 20V10C1 6 4 3 8 3Z" fill="#fdf08c" stroke="#d6ac14" stroke-width="2" transform="translate(1,0)"/><circle cx="11" cy="39" r="7" fill="#6fbf73" stroke="#555" stroke-width="2"/></svg>
<svg class="ic" style="left:2296.0px;top:130.0px" width="48" height="48" viewBox="0 0 48 48"><g opacity="0.4"><path d="M21.500 3H26.500L27.500 8.500L31 10L35.500 6.500L39.500 10.500L36.500 15L38 18.500L43.500 19.500V24.500L38 25.500L36.500 29L39.500 33.500L35.500 37.500L31 34.500L27.500 36L26.500 41H21.500L20.500 36L17 34.500L12.500 37.500L8.500 33.500L11.500 29L10 25.500L4.500 24.500V19.500L10 18.500L11.500 15L8.500 10.500L12.500 6.500L17 10L20.500 8.500Z" fill="#f2f2f2" stroke="#8c8c8c" stroke-width="1.800" transform="translate(-3,-1)"/><circle cx="21" cy="21" r="10.500" fill="#d0d6dc" stroke="#8c8c8c" stroke-width="1.500"/><path d="M17.500 15.500V26.500L27 21Z" fill="#fff"/><path transform="translate(27,22) scale(0.95) rotate(-21)" d="M0 0L0 21L5 16.500L9 25L12.500 23.500L8.500 15L15 15Z" fill="#fff" stroke="#111" stroke-width="1.800" stroke-linejoin="round" opacity="1"/></g></svg>
<div class="dd" style="left:1611px;top:150px"></div>
<div class="dd" style="left:1701px;top:150px"></div>
<div class="dd" style="left:1791px;top:150px"></div>
<div class="dd" style="left:2111px;top:150px"></div>
<div class="dd" style="left:2201px;top:150px"></div>
<div class="dd" style="left:2357px;top:150px"></div>
<svg class="ic" style="left:34.0px;top:208.0px" width="48" height="48" viewBox="0 0 48 48"><g stroke-linejoin="round"><path d="M2 16L25 10L31 36L9 41Z" fill="#e0641c" stroke="#b24a10" stroke-width="1.500"/><path d="M9 9L31 8L32 31L11 33Z" fill="#f8c21c" stroke="#c79a10" stroke-width="1.500"/><path d="M22 1L47 7L42 31L17 26Z" fill="#5e97cf" stroke="#2c5f97" stroke-width="1.600"/></g><rect x="30" y="30" width="17" height="17" rx="3.500" fill="#4f9a57"/><path d="M38.500 33.500V43.500M33.500 38.500H43.500" stroke="#fff" stroke-width="3.400" stroke-linecap="round"/></svg>
<svg class="ic" style="left:100.0px;top:208.0px" width="48" height="48" viewBox="0 0 48 48"><path d="M2 20L24 11L46 20V37L24 47L2 37Z" fill="#e9b800" stroke="#111" stroke-width="1.600" stroke-linejoin="round"/><path d="M2 20L24 30L46 20" fill="none" stroke="#111" stroke-width="1.400"/><path d="M24 30V47" stroke="#111" stroke-width="1.400"/><path d="M24 30L46 20V37L24 47Z" fill="#ffe766" stroke="#111" stroke-width="1.400" stroke-linejoin="round"/><path d="M7 19A17 17 0 0 1 41 19L24 27Z" fill="#6c9fd4"/><circle cx="24" cy="17" r="15.500" fill="#6c9fd4" stroke="#3a6ea5" stroke-width="1" clip-path="inset(0 0 37% 0)"/><path d="M14 9C17 6 21 8 20 11C19 14 15 15 14 18C12 17 11 12 14 9ZM25 6C29 5 33 7 35 10C33 13 30 12 29 15C27 16 25 14 26 11C24 10 24 7 25 6ZM28 17C31 16 34 17 35 20L30 23C28 21 27 19 28 17Z" fill="#1f4775"/><g opacity="1"><rect x="29" y="29" width="18" height="18" rx="3.5" fill="#caa512"/><path d="M38.0 38.0L43.8 38.0" stroke="#fff" stroke-width="2.6" stroke-linecap="round"/><path d="M38.0 38.0L42.1 42.1" stroke="#fff" stroke-width="2.6" stroke-linecap="round"/><path d="M38.0 38.0L38.0 43.8" stroke="#fff" stroke-width="2.6" stroke-linecap="round"/><path d="M38.0 38.0L33.9 42.1" stroke="#fff" stroke-width="2.6" stroke-linecap="round"/><path d="M38.0 38.0L32.2 38.0" stroke="#fff" stroke-width="2.6" stroke-linecap="round"/><path d="M38.0 38.0L33.9 33.9" stroke="#fff" stroke-width="2.6" stroke-linecap="round"/><path d="M38.0 38.0L38.0 32.2" stroke="#fff" stroke-width="2.6" stroke-linecap="round"/><path d="M38.0 38.0L42.1 33.9" stroke="#fff" stroke-width="2.6" stroke-linecap="round"/><circle cx="38.0" cy="38.0" r="2.2" fill="#caa512"/></g></svg>
<svg class="ic" style="left:166.0px;top:208.0px" width="48" height="48" viewBox="0 0 48 48"><path d="M5 9L19 36L31 8L44 6" fill="none" stroke="#234" stroke-width="2.600" stroke-linejoin="round"/><g fill="#fff" stroke="#234" stroke-width="2"><circle cx="5" cy="8" r="3.500"/><circle cx="19" cy="37" r="3.500"/><circle cx="31" cy="8" r="3.500"/><circle cx="44" cy="6" r="3.500"/></g><g opacity="1"><rect x="29" y="29" width="18" height="18" rx="3.5" fill="#caa512"/><path d="M38.0 38.0L43.8 38.0" stroke="#fff" stroke-width="2.6" stroke-linecap="round"/><path d="M38.0 38.0L42.1 42.1" stroke="#fff" stroke-width="2.6" stroke-linecap="round"/><path d="M38.0 38.0L38.0 43.8" stroke="#fff" stroke-width="2.6" stroke-linecap="round"/><path d="M38.0 38.0L33.9 42.1" stroke="#fff" stroke-width="2.6" stroke-linecap="round"/><path d="M38.0 38.0L32.2 38.0" stroke="#fff" stroke-width="2.6" stroke-linecap="round"/><path d="M38.0 38.0L33.9 33.9" stroke="#fff" stroke-width="2.6" stroke-linecap="round"/><path d="M38.0 38.0L38.0 32.2" stroke="#fff" stroke-width="2.6" stroke-linecap="round"/><path d="M38.0 38.0L42.1 33.9" stroke="#fff" stroke-width="2.6" stroke-linecap="round"/><circle cx="38.0" cy="38.0" r="2.2" fill="#caa512"/></g></svg>
<svg class="ic" style="left:232.0px;top:208.0px" width="48" height="48" viewBox="0 0 48 48"><path d="M4 46C6 30 14 14 44 2C45 14 40 22 32 26C36 26 38 25 41 24C36 32 26 34 16 34C12 37 8 42 6 47Z" fill="#6aa0d8" stroke="#1f4775" stroke-width="1.600" stroke-linejoin="round"/><path d="M6 44C10 30 22 16 42 5" fill="none" stroke="#1f4775" stroke-width="1.300"/><path d="M14 26L30 12M17 30L36 14M22 32L40 18M12 22L24 11" stroke="#d6e6f6" stroke-width="1.200"/><g opacity="1"><rect x="29" y="29" width="18" height="18" rx="3.5" fill="#caa512"/><path d="M38.0 38.0L43.8 38.0" stroke="#fff" stroke-width="2.6" stroke-linecap="round"/><path d="M38.0 38.0L42.1 42.1" stroke="#fff" stroke-width="2.6" stroke-linecap="round"/><path d="M38.0 38.0L38.0 43.8" stroke="#fff" stroke-width="2.6" stroke-linecap="round"/><path d="M38.0 38.0L33.9 42.1" stroke="#fff" stroke-width="2.6" stroke-linecap="round"/><path d="M38.0 38.0L32.2 38.0" stroke="#fff" stroke-width="2.6" stroke-linecap="round"/><path d="M38.0 38.0L33.9 33.9" stroke="#fff" stroke-width="2.6" stroke-linecap="round"/><path d="M38.0 38.0L38.0 32.2" stroke="#fff" stroke-width="2.6" stroke-linecap="round"/><path d="M38.0 38.0L42.1 33.9" stroke="#fff" stroke-width="2.6" stroke-linecap="round"/><circle cx="38.0" cy="38.0" r="2.2" fill="#caa512"/></g></svg>
<svg class="ic" style="left:298.0px;top:208.0px" width="48" height="48" viewBox="0 0 48 48"><rect x="4" y="13" width="37" height="22" rx="3" fill="#5e97cf" stroke="#1f4775" stroke-width="2"/><path d="M11 5V13M18 5V13M25 5V13M32 5V13M11 35V43M18 35V43M25 35V43" stroke="#1f4775" stroke-width="2.200"/><g opacity="1"><rect x="29" y="29" width="18" height="18" rx="3.5" fill="#caa512"/><path d="M38.0 38.0L43.8 38.0" stroke="#fff" stroke-width="2.6" stroke-linecap="round"/><path d="M38.0 38.0L42.1 42.1" stroke="#fff" stroke-width="2.6" stroke-linecap="round"/><path d="M38.0 38.0L38.0 43.8" stroke="#fff" stroke-width="2.6" stroke-linecap="round"/><path d="M38.0 38.0L33.9 42.1" stroke="#fff" stroke-width="2.6" stroke-linecap="round"/><path d="M38.0 38.0L32.2 38.0" stroke="#fff" stroke-width="2.6" stroke-linecap="round"/><path d="M38.0 38.0L33.9 33.9" stroke="#fff" stroke-width="2.6" stroke-linecap="round"/><path d="M38.0 38.0L38.0 32.2" stroke="#fff" stroke-width="2.6" stroke-linecap="round"/><path d="M38.0 38.0L42.1 33.9" stroke="#fff" stroke-width="2.6" stroke-linecap="round"/><circle cx="38.0" cy="38.0" r="2.2" fill="#caa512"/></g></svg>
<svg class="ic" style="left:364.0px;top:208.0px" width="48" height="48" viewBox="0 0 48 48"><rect x="2" y="3" width="43" height="42" fill="#5e97cf" stroke="#1f4775" stroke-width="2"/><path d="M2 3L26 27M26 3L2 27M26 27L45 3M2 27H45M26 3V45M13 27V45M2 36H26" stroke="#1f4775" stroke-width="2"/><path d="M27 4H44V26H27Z" fill="#8fb8e2" opacity="0.55"/><g opacity="1"><rect x="29" y="29" width="18" height="18" rx="3.5" fill="#caa512"/><path d="M38.0 38.0L43.8 38.0" stroke="#fff" stroke-width="2.6" stroke-linecap="round"/><path d="M38.0 38.0L42.1 42.1" stroke="#fff" stroke-width="2.6" stroke-linecap="round"/><path d="M38.0 38.0L38.0 43.8" stroke="#fff" stroke-width="2.6" stroke-linecap="round"/><path d="M38.0 38.0L33.9 42.1" stroke="#fff" stroke-width="2.6" stroke-linecap="round"/><path d="M38.0 38.0L32.2 38.0" stroke="#fff" stroke-width="2.6" stroke-linecap="round"/><path d="M38.0 38.0L33.9 33.9" stroke="#fff" stroke-width="2.6" stroke-linecap="round"/><path d="M38.0 38.0L38.0 32.2" stroke="#fff" stroke-width="2.6" stroke-linecap="round"/><path d="M38.0 38.0L42.1 33.9" stroke="#fff" stroke-width="2.6" stroke-linecap="round"/><circle cx="38.0" cy="38.0" r="2.2" fill="#caa512"/></g></svg>
<svg class="ic" style="left:430.0px;top:208.0px" width="48" height="48" viewBox="0 0 48 48"><rect x="2" y="3" width="43" height="42" rx="3" fill="#c3d7ec" stroke="#2c5f97" stroke-width="1.800"/><path d="M26 4H44V26Z" fill="#9dbfe2" opacity="0.6"/><path d="M6 6L16 36L29 6L44 5" fill="none" stroke="#1f4775" stroke-width="2.600" stroke-linejoin="round"/><g fill="#fff" stroke="#1f4775" stroke-width="2"><circle cx="6" cy="6" r="3.300"/><circle cx="16" cy="37" r="3.800"/><circle cx="29" cy="6" r="3.300"/><circle cx="44" cy="5" r="2.600"/></g><g opacity="1"><rect x="29" y="29" width="18" height="18" rx="3.5" fill="#caa512"/><path d="M38.0 38.0L43.8 38.0" stroke="#fff" stroke-width="2.6" stroke-linecap="round"/><path d="M38.0 38.0L42.1 42.1" stroke="#fff" stroke-width="2.6" stroke-linecap="round"/><path d="M38.0 38.0L38.0 43.8" stroke="#fff" stroke-width="2.6" stroke-linecap="round"/><path d="M38.0 38.0L33.9 42.1" stroke="#fff" stroke-width="2.6" stroke-linecap="round"/><path d="M38.0 38.0L32.2 38.0" stroke="#fff" stroke-width="2.6" stroke-linecap="round"/><path d="M38.0 38.0L33.9 33.9" stroke="#fff" stroke-width="2.6" stroke-linecap="round"/><path d="M38.0 38.0L38.0 32.2" stroke="#fff" stroke-width="2.6" stroke-linecap="round"/><path d="M38.0 38.0L42.1 33.9" stroke="#fff" stroke-width="2.6" stroke-linecap="round"/><circle cx="38.0" cy="38.0" r="2.2" fill="#caa512"/></g></svg>
<svg class="ic" style="left:528.0px;top:208.0px" width="48" height="48" viewBox="0 0 48 48"><g opacity="0.42"><g transform="translate(2,1) scale(0.95)" opacity="1"><path d="M22 0L31 5L12 38L2 46L4 33Z" fill="#cdbdb8" stroke="#9c9494" stroke-width="1.600" stroke-linejoin="round"/><path d="M4 33L12 38" stroke="#9c9494" stroke-width="1.300"/><path d="M2 46L3 40L7 42Z" fill="#777"/><path d="M20 4L28 9" stroke="#9c9494" stroke-width="1.300"/><path d="M24 3L9 34" stroke="#fff" stroke-width="1.500" opacity="0.6"/></g><g transform="translate(15,1) scale(0.95)" opacity="1"><path d="M22 0L31 5L12 38L2 46L4 33Z" fill="#d8ccc6" stroke="#9c9494" stroke-width="1.600" stroke-linejoin="round"/><path d="M4 33L12 38" stroke="#9c9494" stroke-width="1.300"/><path d="M2 46L3 40L7 42Z" fill="#777"/><path d="M20 4L28 9" stroke="#9c9494" stroke-width="1.300"/><path d="M24 3L9 34" stroke="#fff" stroke-width="1.500" opacity="0.6"/></g></g></svg>
<svg class="ic" style="left:594.0px;top:208.0px" width="48" height="48" viewBox="0 0 48 48"><g opacity="0.42"><g transform="translate(9,1) scale(0.98)" opacity="1"><path d="M22 0L31 5L12 38L2 46L4 33Z" fill="#d8d8cc" stroke="#9c9494" stroke-width="1.600" stroke-linejoin="round"/><path d="M4 33L12 38" stroke="#9c9494" stroke-width="1.300"/><path d="M2 46L3 40L7 42Z" fill="#777"/><path d="M20 4L28 9" stroke="#9c9494" stroke-width="1.300"/><path d="M24 3L9 34" stroke="#fff" stroke-width="1.500" opacity="0.6"/></g></g></svg>
<svg class="ic" style="left:660.0px;top:208.0px" width="48" height="48" viewBox="0 0 48 48"><g opacity="0.36"><rect x="4" y="3" width="38" height="38" rx="5" fill="#b9c0c9" stroke="#8d949c" stroke-width="2"/><rect x="11" y="4" width="24" height="16" fill="#fff" stroke="#8d949c" stroke-width="1"/><path d="M14 8.500H32M14 12.500H32M14 16.500H32" stroke="#999" stroke-width="1.500"/><rect x="12" y="27" width="22" height="14" fill="#eee" stroke="#8d949c" stroke-width="1.200"/><rect x="15" y="30" width="6" height="8" fill="#8d949c"/><g transform="translate(26,17) scale(0.62)" opacity="1"><path d="M22 0L31 5L12 38L2 46L4 33Z" fill="#cdbdb8" stroke="#9c9494" stroke-width="1.600" stroke-linejoin="round"/><path d="M4 33L12 38" stroke="#9c9494" stroke-width="1.300"/><path d="M2 46L3 40L7 42Z" fill="#777"/><path d="M20 4L28 9" stroke="#9c9494" stroke-width="1.300"/><path d="M24 3L9 34" stroke="#fff" stroke-width="1.500" opacity="0.6"/></g></g></svg>
<svg class="ic" style="left:726.0px;top:208.0px" width="48" height="48" viewBox="0 0 48 48"><g opacity="0.4"><path d="M7 39L39 8" stroke="#9a9a9a" stroke-width="2.400" stroke-dasharray="6 4"/><rect x="3" y="36" width="8" height="8" fill="#ddd" stroke="#9a9a9a" stroke-width="1.600"/><rect x="35" y="3" width="8" height="8" fill="#ddd" stroke="#9a9a9a" stroke-width="1.600"/></g></svg>
<svg class="ic" style="left:816.0px;top:208.0px" width="48" height="48" viewBox="0 0 48 48"><g opacity="0.42"><path d="M5 12C8 2 22 3 30 7C38 10 46 7 45 16C44 24 36 20 28 24C20 28 14 30 8 25C3 21 3 17 5 12Z" fill="#c5d0cb" stroke="#8c9a94" stroke-width="2"/><g opacity="1"><rect x="26" y="27" width="21" height="21" rx="3.5" fill="#a9a48c"/><path d="M36.5 37.5L43.2 37.5" stroke="#fff" stroke-width="2.6" stroke-linecap="round"/><path d="M36.5 37.5L41.3 42.3" stroke="#fff" stroke-width="2.6" stroke-linecap="round"/><path d="M36.5 37.5L36.5 44.2" stroke="#fff" stroke-width="2.6" stroke-linecap="round"/><path d="M36.5 37.5L31.7 42.3" stroke="#fff" stroke-width="2.6" stroke-linecap="round"/><path d="M36.5 37.5L29.8 37.5" stroke="#fff" stroke-width="2.6" stroke-linecap="round"/><path d="M36.5 37.5L31.7 32.7" stroke="#fff" stroke-width="2.6" stroke-linecap="round"/><path d="M36.5 37.5L36.5 30.8" stroke="#fff" stroke-width="2.6" stroke-linecap="round"/><path d="M36.5 37.5L41.3 32.7" stroke="#fff" stroke-width="2.6" stroke-linecap="round"/><circle cx="36.5" cy="37.5" r="2.2" fill="#a9a48c"/></g></g></svg>
<svg class="ic" style="left:882.0px;top:208.0px" width="48" height="48" viewBox="0 0 48 48"><g opacity="0.42"><path d="M9 10H38" stroke="#8e8e8e" stroke-width="1.600"/><path d="M12 13L4 40" stroke="#8e8e8e" stroke-width="1.600"/><rect x="8" y="5" width="9" height="9" fill="#eee" stroke="#8e8e8e" stroke-width="1.500"/><path d="M9 6L16 13M16 6L9 13" stroke="#8e8e8e" stroke-width="1.300"/><path d="M19 41L38 19" stroke="#b4ae8e" stroke-width="6.500" stroke-linecap="round"/><path d="M21 20L42 42" stroke="#b4ae8e" stroke-width="6.500" stroke-linecap="round"/><path d="M20 24C17 20 19 15 24 14C28 13 30 16 34 15L26 25Z" fill="#c9c9c9" stroke="#8e8e8e" stroke-width="1.500"/></g></svg>
<svg class="ic" style="left:972.0px;top:208.0px" width="48" height="48" viewBox="0 0 48 48"><g opacity="0.42"><rect x="3" y="6" width="38" height="9" fill="#c9c5a8" stroke="#b1ad90" stroke-width="1.200"/><rect x="3" y="19" width="38" height="9" fill="#c9c5a8" stroke="#b1ad90" stroke-width="1.200"/><rect x="3" y="32" width="38" height="9" fill="#c9c5a8" stroke="#b1ad90" stroke-width="1.200"/><g transform="translate(14,1) scale(0.95)" opacity="1"><path d="M22 0L31 5L12 38L2 46L4 33Z" fill="#e4dcd8" stroke="#9c9494" stroke-width="1.600" stroke-linejoin="round"/><path d="M4 33L12 38" stroke="#9c9494" stroke-width="1.300"/><path d="M2 46L3 40L7 42Z" fill="#777"/><path d="M20 4L28 9" stroke="#9c9494" stroke-width="1.300"/><path d="M24 3L9 34" stroke="#fff" stroke-width="1.500" opacity="0.6"/></g></g></svg>
<svg class="ic" style="left:1036.0px;top:208.0px" width="48" height="48" viewBox="0 0 48 48"><g opacity="0.38"><rect x="5" y="6" width="24" height="25" fill="#d0cfc0" stroke="#b6b4a2" stroke-width="1.500"/><path d="M8 12H41" stroke="#c09a9a" stroke-width="4" stroke-linecap="round"/><path d="M17 8H32" stroke="#c09a9a" stroke-width="3.500" stroke-linecap="round"/><path d="M10 16H39L36 44H13Z" fill="#e4cfcf" stroke="#c09a9a" stroke-width="2.500" stroke-linejoin="round"/><path d="M19 19V41M24.500 19V41M30 19V41" stroke="#c09a9a" stroke-width="2.500"/></g></svg>
<svg class="ic" style="left:1104.0px;top:208.0px" width="48" height="48" viewBox="0 0 48 48"><g opacity="0.4"><path d="M3 8L34 27M3 20C12 18 24 16 38 10" stroke="#a9a9a9" stroke-width="3" stroke-linecap="round"/><path d="M3 8L30 22L3 12Z" fill="#e6e6e6" stroke="#a9a9a9" stroke-width="1.200"/><ellipse cx="40" cy="12" rx="6" ry="4.500" fill="none" stroke="#c09a9a" stroke-width="2.800" transform="rotate(-25 40 12)"/><ellipse cx="38" cy="33" rx="4.500" ry="6.500" fill="none" stroke="#c09a9a" stroke-width="2.800" transform="rotate(-35 38 33)"/></g></svg>
<svg class="ic" style="left:1170.0px;top:208.0px" width="48" height="48" viewBox="0 0 48 48"><g opacity="0.4"><path d="M20 3H33L41 11V33H20Z" fill="#f4f4f4" stroke="#9e9e9e" stroke-width="1.800"/><path d="M33 3V11H41" fill="none" stroke="#9e9e9e" stroke-width="1.500"/><path d="M24 16H36M24 21H36M24 26H36" stroke="#c4c4c4" stroke-width="1.500"/><path d="M8 13H22L31 22V45H8Z" fill="#fafafa" stroke="#8e8e8e" stroke-width="2"/><path d="M22 13V22H31" fill="none" stroke="#8e8e8e" stroke-width="1.800"/><path d="M12 26H26M12 31H26M12 36H22M12 41H26" stroke="#9a9a9a" stroke-width="1.600"/></g></svg>
<svg class="ic" style="left:1236.0px;top:208.0px" width="48" height="48" viewBox="0 0 48 48"><g opacity="0.4"><rect x="8" y="6" width="32" height="40" fill="#e4e0cc" stroke="#a5a08a" stroke-width="2"/><rect x="15" y="2" width="18" height="9" fill="#cfcfcf" stroke="#9a9a9a" stroke-width="1.500"/><path d="M12 14H28L36 22V42H12Z" fill="#fafafa" stroke="#8e8e8e" stroke-width="1.600"/><path d="M28 14V22H36" fill="none" stroke="#8e8e8e" stroke-width="1.400"/><path d="M16 26H32M16 31H32M16 36H28" stroke="#9a9a9a" stroke-width="1.600"/></g></svg>
<svg class="ic" style="left:1302.0px;top:208.0px" width="48" height="48" viewBox="0 0 48 48"><g opacity="0.36"><path d="M3 19L19 4V13C34 13 42 20 40 31C38 39 31 43 24 43V38C30 36 32 31 30 27C28 24 24 24 19 24V34Z" fill="#d9c6c6" stroke="#c2aaaa" stroke-width="1.500" stroke-linejoin="round"/></g></svg>
<svg class="ic" style="left:1368.0px;top:208.0px" width="48" height="48" viewBox="0 0 48 48"><g opacity="0.36"><path d="M45 19L29 4V13C14 13 6 20 8 31C10 39 17 43 24 43V38C18 36 16 31 18 27C20 24 24 24 29 24V34Z" fill="#c9d6cd" stroke="#aabdb0" stroke-width="1.500" stroke-linejoin="round"/></g></svg>
<svg class="ic" style="left:1463.0px;top:208.0px" width="48" height="48" viewBox="0 0 48 48"><g opacity="1"><path d="M12 8.5H44V29.5H12L3 19.0Z" fill="#ffe14a" stroke="#c9a510" stroke-width="2.200" stroke-linejoin="round"/><text x="13" y="24.3" font-family="Liberation Sans,sans-serif" font-weight="bold" font-size="15.5" fill="#222">abc</text></g></svg>
<svg class="ic" style="left:1532.0px;top:208.0px" width="48" height="48" viewBox="0 0 48 48"><circle cx="19" cy="16" r="13.500" fill="#f8c81c" stroke="#7a5a00" stroke-width="1.500"/><path d="M19 16L7.500 9A13.500 13.500 0 0 0 19 29.500Z" fill="#16a83a" stroke="#0b6a20" stroke-width="1.500" stroke-linejoin="round"/><path d="M19 16L19 29.500A13.500 13.500 0 0 0 30.500 9Z" fill="#d1101c" stroke="#7a0a10" stroke-width="1.500" stroke-linejoin="round"/><rect x="21" y="32" width="7" height="12" fill="#f8c81c" stroke="#c79a10" stroke-width="1.500"/><rect x="29.500" y="20" width="7" height="24" fill="#16a83a" stroke="#0b6a20" stroke-width="1.500"/><rect x="38" y="33" width="7" height="11" fill="#c1101c" stroke="#7a0a10" stroke-width="1.500"/></svg>
<svg class="ic" style="left:1611.0px;top:208.0px" width="48" height="48" viewBox="0 0 48 48"><g opacity="1"><path d="M12 8.5H44V29.5H12L3 19.0Z" fill="#d7e9fb" stroke="#3c8ee8" stroke-width="2.200" stroke-linejoin="round"/><text x="11" y="24.3" font-family="Liberation Sans,sans-serif" font-weight="bold" font-size="15.5" fill="#222">ab</text></g><rect x="33" y="19" width="6" height="13" rx="2.500" fill="#f2f2f2" stroke="#333" stroke-width="1.300" transform="rotate(-8 36 25)"/><circle cx="38" cy="36" r="9.500" fill="#b80d1e"/><circle cx="35.500" cy="33" r="3" fill="#e45a68"/></svg>
<svg class="ic" style="left:1675.0px;top:208.0px" width="48" height="48" viewBox="0 0 48 48"><g opacity="1"><path d="M12 8.5H44V29.5H12L3 19.0Z" fill="#fbd4d6" stroke="#e3101c" stroke-width="2.200" stroke-linejoin="round"/><text x="13" y="24.3" font-family="Liberation Sans,sans-serif" font-weight="bold" font-size="15.5" fill="#e3101c">abc</text></g></svg>
<svg class="ic" style="left:1758.0px;top:208.0px" width="48" height="48" viewBox="0 0 48 48"><g opacity="0.45"><g opacity="1"><path d="M12 8.5H44V29.5H12L3 19.0Z" fill="#dcdac8" stroke="#bdb99c" stroke-width="2.200" stroke-linejoin="round"/><text x="11" y="24.3" font-family="Liberation Sans,sans-serif" font-weight="bold" font-size="15.5" fill="#9a9a9a">ab</text></g><rect x="33" y="19" width="6" height="13" rx="2.500" fill="#f2f2f2" stroke="#aaa" stroke-width="1.300"/><circle cx="38" cy="36" r="9.500" fill="#b9a5a8"/></g></svg>
<svg class="ic" style="left:1824.0px;top:208.0px" width="48" height="48" viewBox="0 0 48 48"><g opacity="0.45"><g opacity="1"><path d="M12 8.5H44V29.5H12L3 19.0Z" fill="#dcdac8" stroke="#bdb99c" stroke-width="2.200" stroke-linejoin="round"/><text x="13" y="24.3" font-family="Liberation Sans,sans-serif" font-weight="bold" font-size="15.5" fill="#9a9a9a">abc</text></g><path d="M17 39C24 28 38 28 47 39C38 48 24 48 17 39Z" fill="#f4f4f4" stroke="#9e9e9e" stroke-width="1.600"/><circle cx="32" cy="38" r="5.500" fill="#b9c4d0"/><circle cx="32" cy="38" r="2.500" fill="#777"/><path d="M19 34C25 26 40 26 47 35" fill="none" stroke="#9e9e9e" stroke-width="1.500"/></g></svg>
<svg class="ic" style="left:1890.0px;top:208.0px" width="48" height="48" viewBox="0 0 48 48"><g opacity="0.45"><g opacity="1"><path d="M12 8.5H44V29.5H12L3 19.0Z" fill="#dcdac8" stroke="#bdb99c" stroke-width="2.200" stroke-linejoin="round"/><text x="13" y="24.3" font-family="Liberation Sans,sans-serif" font-weight="bold" font-size="15.5" fill="#9a9a9a">abc</text></g><rect x="27" y="27" width="21" height="21" rx="4" fill="#9ea4aa"/><path d="M30 34H38V30L46 37.500L38 45V41H30Z" fill="#fff"/></g></svg>
<svg class="ic" style="left:1956.0px;top:208.0px" width="48" height="48" viewBox="0 0 48 48"><g opacity="0.45"><g opacity="1"><path d="M12 8.5H44V29.5H12L3 19.0Z" fill="#dcdac8" stroke="#bdb99c" stroke-width="2.200" stroke-linejoin="round"/><text x="13" y="24.3" font-family="Liberation Sans,sans-serif" font-weight="bold" font-size="15.5" fill="#9a9a9a">abc</text></g><rect x="27" y="27" width="21" height="21" rx="4" fill="#9ea4aa"/><path d="M32 40A6.500 6.500 0 1 1 38 44" fill="none" stroke="#fff" stroke-width="3.200"/><path d="M33 47L39 44L35 39Z" fill="#fff"/></g></svg>
<svg class="ic" style="left:2022.0px;top:208.0px" width="48" height="48" viewBox="0 0 48 48"><g opacity="0.45"><g opacity="1"><path d="M12 8.5H44V29.5H12L3 19.0Z" fill="#dcdac8" stroke="#bdb99c" stroke-width="2.200" stroke-linejoin="round"/><text x="13" y="24.3" font-family="Liberation Sans,sans-serif" font-weight="bold" font-size="15.5" fill="#9a9a9a">abc</text></g><rect x="27" y="27" width="21" height="21" rx="4" fill="#b4b09a"/><path d="M31 45L33 39L42 30L45 33L36 42Z" fill="#fff"/></g></svg>
<svg class="ic" style="left:2154.0px;top:208.0px" width="48" height="48" viewBox="0 0 48 48"><path d="M23 2C14 2 14.500 6 14.500 6V11H23.500V12.500H9C9 12.500 3 12 3 22C3 32 8.500 31.500 8.500 31.500H12V26.500C12 26.500 11.700 21 17.500 21H26.500C26.500 21 31.500 21 31.500 16V7.500C31.500 7.500 32.500 2 23 2Z" fill="#2f74ad"/><circle cx="18.500" cy="7" r="1.800" fill="#fff"/><path d="M23.500 42C32.500 42 32 38 32 38V33H23V31.500H37.500C37.500 31.500 43.500 32 43.500 22C43.500 12 38 12.500 38 12.500H34.500V17.500C34.500 17.500 34.800 23 29 23H20C20 23 15 23 15 28V36.500C15 36.500 14 42 23.500 42Z" fill="#ffd53d"/><circle cx="28" cy="37" r="1.800" fill="#fff"/><path d="M33 33L45 39L33 45" fill="none" stroke="#444" stroke-width="3"/></svg>
<svg class="ic" style="left:2219.0px;top:208.0px" width="48" height="48" viewBox="0 0 48 48"><path d="M21.500 3H26.500L27.500 8.500L31 10L35.500 6.500L39.500 10.500L36.500 15L38 18.500L43.500 19.500V24.500L38 25.500L36.500 29L39.500 33.500L35.500 37.500L31 34.500L27.500 36L26.500 41H21.500L20.500 36L17 34.500L12.500 37.500L8.500 33.500L11.500 29L10 25.500L4.500 24.500V19.500L10 18.500L11.500 15L8.500 10.500L12.500 6.500L17 10L20.500 8.500Z" fill="none" stroke="#2f7cc0" stroke-width="2" stroke-linejoin="round" transform="translate(0,2) scale(1.0)"/><path d="M24 36C18 28 15.500 24 15.500 20.500A8.500 8.500 0 0 1 32.500 20.500C32.500 24 30 28 24 36Z" fill="none" stroke="#555" stroke-width="1.800"/><circle cx="24" cy="20.500" r="4" fill="none" stroke="#555" stroke-width="1.800"/></svg>
<svg class="ic" style="left:2318.0px;top:208.0px" width="48" height="48" viewBox="0 0 48 48"><rect x="4" y="3" width="40" height="42" rx="1.500" fill="#6699cc" stroke="#101820" stroke-width="2"/><rect x="4" y="3" width="9.500" height="42" fill="#24364c" stroke="#101820" stroke-width="1.500"/><text x="20" y="35" font-family="Liberation Serif,serif" font-size="31" fill="#fff">?</text></svg>
<div class="dd" style="left:787px;top:228px"></div>
<div class="dd" style="left:943px;top:228px"></div>
<div class="dd" style="left:567px;top:251px;transform:scale(0.75)"></div>
<svg class="ic" style="left:34.0px;top:290.0px" width="48" height="40" viewBox="0 0 48 40"><rect x="0" y="0" width="48" height="40" fill="#fff"/><circle cx="24" cy="20" r="15" fill="#fff" stroke="#2fb23a" stroke-width="3"/><path d="M14 12C18 7 28 6 33 10C30 11 28 10 25 12C22 14 20 12 17 14ZM17 27C20 24 26 25 28 28C27 31 25 33 24 35C21 33 18 31 17 27Z" fill="#2fb23a"/><text x="7" y="27" font-family="Liberation Sans,sans-serif" font-weight="bold" font-size="17.500" fill="#0a0a0a" textLength="34" lengthAdjust="spacingAndGlyphs">EDR</text></svg><span class="t " id="t14" style="left:9px;top:358.5px;font-size:22.5px;letter-spacing:0.210px;color:#1a1a1a">Browser</span>
<svg class="ic" style="left:533.0px;top:358.0px" width="22" height="22" viewBox="0 0 22 22"><rect x="1" y="1" width="20" height="20" rx="3" fill="#ececec" stroke="#8a8a8a" stroke-width="1.500"/><rect x="8.500" y="5" width="8" height="7" fill="none" stroke="#555" stroke-width="1.600"/><rect x="5" y="9" width="8" height="7" fill="#ececec" stroke="#555" stroke-width="1.600"/></svg>
<svg class="ic" style="left:562.0px;top:358.0px" width="22" height="22" viewBox="0 0 22 22"><rect x="1" y="1" width="20" height="20" rx="3" fill="#ececec" stroke="#8a8a8a" stroke-width="1.500"/><path d="M5.500 5.500L16.500 16.500M16.500 5.500L5.500 16.500" stroke="#4a4a4a" stroke-width="3.400"/></svg>
<svg class="ic" style="left:16.0px;top:402.0px" width="32" height="32" viewBox="0 0 32 32"><rect x="3" y="2" width="22" height="22" rx="1.500" fill="#fff" stroke="#7a7a7a" stroke-width="1.800"/><rect x="19" y="20" width="12" height="12" rx="2.500" fill="#4f9a57"/><path d="M25.0 22.5V29.5M21.5 26.0H28.5" stroke="#fff" stroke-width="2.200"/></svg>
<svg class="ic" style="left:66.5px;top:402.5px" width="31" height="31" viewBox="0 0 31 31"><g transform="translate(-2,-2) scale(0.74)" fill="#4d95d6" stroke="#2268ae" stroke-width="2" stroke-linejoin="round"><path d="M5 22C5 10 16 3 27 6C31 7 33 9 35 11L41 5V22H24L30 16C27 13 22 12 18 14C15 16 14 19 14 22Z"/><path d="M43 26C43 38 32 45 21 42C17 41 15 39 13 37L7 43V26H24L18 32C21 35 26 36 30 34C33 32 34 29 34 26Z"/></g></svg>
<svg class="ic" style="left:117.0px;top:402.5px" width="30" height="31" viewBox="0 0 30 31"><path d="M2 5H28L18 17V29L12 26V17Z" fill="#5e97cf" stroke="#2c5f97" stroke-width="1.600" stroke-linejoin="round"/><path d="M2 3.500H28" stroke="#e8c81c" stroke-width="3.500"/></svg>
<svg class="ic" style="left:166.5px;top:403.0px" width="32" height="30" viewBox="0 0 32 30"><path d="M5 6V27M5 8H10M5 17H10M5 26H10" stroke="#8a8a8a" stroke-width="1.800" fill="none"/><rect x="8" y="14" width="5" height="5" fill="#f5a623"/><rect x="8" y="23" width="5" height="5" fill="#f5a623"/><path d="M21 2L30 13H25V28H17V13H12Z" fill="#4a86c5" stroke="#1f4775" stroke-width="1.600" stroke-linejoin="round"/></svg>
<svg class="ic" style="left:218.0px;top:404.0px" width="28" height="28" viewBox="0 0 28 28"><circle cx="14" cy="14" r="13" fill="#5b90cb" stroke="#3a6ea5" stroke-width="1.200"/><text x="9" y="23" font-family="Liberation Serif,serif" font-style="italic" font-weight="bold" font-size="24" fill="#fff">i</text></svg>
<div class="tree" style="left:0;top:451px;width:587px;height:517px"></div>
<div class="clip" style="left:1px;top:452px;width:557px;height:515px">
<div class="arr-r" style="left:12px;top:10px"></div>
<svg class="ic" style="left:39.0px;top:3.0px" width="30" height="30" viewBox="0 0 30 30"><path d="M2 5H12L15 8H28V27H2Z" fill="#fafafa" stroke="#8a8a8a" stroke-width="1.800" stroke-linejoin="round"/></svg>
<span class="t " id="t15" style="left:83.5px;top:5.8px;font-size:25px;letter-spacing:0.657px;color:#1a1a1a">/Volumes</span>
<svg class="ic" style="left:38.0px;top:38.0px" width="32" height="32" viewBox="0 0 32 32"><path d="M16 1L20.500 11L31 12L23 19.500L25.500 30L16 24.500L6.500 30L9 19.500L1 12L11.500 11Z" fill="#fff6a8" stroke="#e2b414" stroke-width="2" stroke-linejoin="round"/></svg>
<span class="t " id="t16" style="left:83.5px;top:41.8px;font-size:25px;letter-spacing:0.521px;color:#1a1a1a">Favorites</span>
<div class="arr-r" style="left:12px;top:82px"></div>
<svg class="ic" style="left:39.0px;top:75.0px" width="30" height="30" viewBox="0 0 30 30"><path d="M5 3H27V28H7C4 28 2 27 2 24.500" fill="#e6e6e6" stroke="#9a9a9a" stroke-width="1.800"/><path d="M5 3C3 3 2 4 2 6V25" fill="none" stroke="#9a9a9a" stroke-width="1.800"/><path d="M18 2H24V13L21 16L18 13Z" fill="#5e97cf" stroke="#2c5f97" stroke-width="1.300"/></svg>
<span class="t " id="t17" style="left:83.5px;top:77.8px;font-size:25px;letter-spacing:0.692px;color:#1a1a1a">Spatial Bookmarks</span>
<div class="arr-r" style="left:12px;top:118px"></div>
<svg class="ic" style="left:39.0px;top:111.0px" width="30" height="30" viewBox="0 0 30 30"><path d="M2 3H28V28H2Z" fill="#fafafa" stroke="#8a8a8a" stroke-width="1.800" stroke-linejoin="round"/><path d="M8 16L15 9L22 16M10.500 15V23H19.500V15" fill="none" stroke="#222" stroke-width="2"/></svg>
<span class="t " id="t18" style="left:83.5px;top:113.8px;font-size:25px;letter-spacing:0.703px;color:#1a1a1a">Home</span>
<div class="arr-r" style="left:12px;top:154px"></div>
<svg class="ic" style="left:39.0px;top:147.0px" width="30" height="30" viewBox="0 0 30 30"><path d="M2 5H12L15 8H28V27H2Z" fill="#fafafa" stroke="#8a8a8a" stroke-width="1.800" stroke-linejoin="round"/></svg>
<span class="t " id="t19" style="left:83.5px;top:149.8px;font-size:25px;letter-spacing:0.722px;color:#1a1a1a">/ (Macintosh HD)</span>
<svg class="ic" style="left:39.0px;top:182.5px" width="30" height="31" viewBox="0 0 30 31"><path d="M1 13L15 7L29 13V23L15 30L1 23Z" fill="#e9b800" stroke="#111" stroke-width="1.200" stroke-linejoin="round"/><path d="M15 19L29 13V23L15 30Z" fill="#ffe766" stroke="#111" stroke-width="1.100" stroke-linejoin="round"/><path d="M1 13L15 19" stroke="#111" stroke-width="1.100"/><path d="M5 12.500A10 10 0 0 1 25 12.500L15 17.500Z" fill="#6c9fd4" stroke="#3a6ea5" stroke-width="1"/><path d="M9 7C11 5 13 6 12.500 8C12 10 10 10 9.500 12C8 11 8 8 9 7ZM16 5C19 4 21 6 22 8C20 10 19 9 18 11C17 12 16 10 16.500 8.500C15.500 7.500 15.500 6 16 5Z" fill="#1f4775"/></svg>
<span class="t " id="t20" style="left:83.5px;top:185.8px;font-size:25px;letter-spacing:0.395px;color:#1a1a1a">GeoPackage</span>
<svg class="ic" style="left:38.5px;top:218.0px" width="31" height="32" viewBox="0 0 31 32"><path d="M2 30C3 20 8 9 29 1C30 9 26 14 21 17C24 17 25 16 27 15.500C24 21 17 22 10 22C7 24 5 27 3.500 30.500Z" fill="#6aa0d8" stroke="#1f4775" stroke-width="1.300" stroke-linejoin="round"/><path d="M9 17L20 8M11 20L24 9" stroke="#d6e6f6" stroke-width="1"/></svg>
<span class="t " id="t21" style="left:83.5px;top:221.8px;font-size:25px;letter-spacing:0.630px;color:#1a1a1a">SpatiaLite</span>
<svg class="ic" style="left:38.5px;top:254.5px" width="31" height="31" viewBox="0 0 31 31"><path d="M6 3C12 -1 22 0 27 4C31 8 29 16 26 20C25 22 24 22 23 21L22 28C21 31 17 31 16 28L15 20C11 22 6 20 4 15C2 10 3 5 6 3Z" fill="#4f86c2" stroke="#234a78" stroke-width="1.500"/><path d="M15 5C13 9 14 14 15 20M22 6C24 10 24 15 23 21" fill="none" stroke="#234a78" stroke-width="1.200"/><circle cx="11" cy="9" r="1.200" fill="#fff"/><circle cx="20.500" cy="9" r="1.200" fill="#fff"/></svg>
<span class="t " id="t22" style="left:83.5px;top:257.8px;font-size:25px;letter-spacing:0.431px;color:#1a1a1a">PostgreSQL</span>
<svg class="ic" style="left:38.5px;top:290.5px" width="31" height="31" viewBox="0 0 31 31"><path d="M2 8V2H9" fill="none" stroke="#b9cfe8" stroke-width="1.500"/><path d="M6 13V6H14" fill="none" stroke="#8fb3db" stroke-width="1.600"/><rect x="10" y="10" width="19" height="19" rx="1" fill="#fff" stroke="#4a86c5" stroke-width="1.800"/><circle cx="20" cy="20" r="5.500" fill="#c9ddf3" stroke="#4a86c5" stroke-width="1.500"/><path d="M17 20L19 22L23 17" fill="none" stroke="#4a86c5" stroke-width="1.500"/></svg>
<span class="t " id="t23" style="left:83.5px;top:293.8px;font-size:25px;letter-spacing:-0.457px;color:#1a1a1a">STAC</span>
<svg class="ic" style="left:38.5px;top:326.5px" width="31" height="31" viewBox="0 0 31 31"><path d="M2 2C14 3 24 6 30 12C26 18 14 22 5 24L1 29C3 20 3 10 2 2Z" fill="#5e97cf" stroke="#1f4775" stroke-width="1.500" stroke-linejoin="round"/><path d="M9 4C11 10 11 17 9 23M16 6C18 11 18 16 16 21M22 8.500C24 12 24 15 22 18" fill="none" stroke="#1f4775" stroke-width="1.200"/></svg>
<span class="t " id="t24" style="left:83.5px;top:329.8px;font-size:25px;letter-spacing:0.490px;color:#1a1a1a">MS SQL Server</span>
<svg class="ic" style="left:39.0px;top:363.0px" width="30" height="30" viewBox="0 0 30 30"><circle cx="15" cy="15" r="13.500" fill="#6c9fd4" stroke="#3a6ea5" stroke-width="1.300"/><path d="M6 9C9 6 13 7 12 10C11 13 8 13 7 16C5 15 4 11 6 9ZM16 6C20 5 23 7 25 10C23 12 21 11 20 14C18 15 17 13 17.500 11C16 10 15.500 7 16 6ZM11 19C14 18 17 19 18 22L15 27C12 25 10 22 11 19ZM21 17C23 16 25 17 26 19L23 22C21 21 20.500 19 21 17Z" fill="#d9e6f4"/><path d="M1.500 15H28.500M15 1.500V28.500" stroke="#a9c6e6" stroke-width="0.800"/></svg>
<span class="t " id="t25" style="left:83.5px;top:365.8px;font-size:25px;letter-spacing:0.697px;color:#1a1a1a">WMS/WMTS</span>
<svg class="ic" style="left:38.5px;top:399.0px" width="31" height="30" viewBox="0 0 31 30"><path d="M7 24C3 24 1 21 1 18C1 15 4 13 7 13C8 8 12 6 16 6C21 6 24 9 24.500 13C28 13 30 15 30 18.500C30 22 27 24 24 24Z" fill="#aecbea" stroke="#3a6ea5" stroke-width="1.800" stroke-linejoin="round"/></svg>
<span class="t " id="t26" style="left:83.5px;top:401.8px;font-size:25px;letter-spacing:0.634px;color:#1a1a1a">Cloud</span>
<svg class="ic" style="left:39.0px;top:434.5px" width="30" height="31" viewBox="0 0 30 31"><path d="M15 2L28 8V22L15 29L2 22V8Z" fill="#aecbea" stroke="#2c5f97" stroke-width="1.800" stroke-linejoin="round"/><path d="M2 8L15 14L28 8M15 14V29" fill="none" stroke="#2c5f97" stroke-width="1.600"/><path d="M15 2L28 8L15 14L2 8Z" fill="#e4eef9" stroke="#2c5f97" stroke-width="1.600" stroke-linejoin="round"/></svg>
<span class="t " id="t27" style="left:83.5px;top:437.8px;font-size:25px;letter-spacing:0.435px;color:#1a1a1a">Scenes</span>
<svg class="ic" style="left:39.0px;top:471.0px" width="30" height="30" viewBox="0 0 30 30"><circle cx="15" cy="15" r="3.800" fill="#2c5f97"/><path d="M9.500 9A8 8 0 0 0 9.500 21M20.500 9A8 8 0 0 1 20.500 21M5.500 5.500A13 13 0 0 0 5.500 24.500M24.500 5.500A13 13 0 0 1 24.500 24.500" fill="none" stroke="#2c5f97" stroke-width="1.900" stroke-linecap="round"/></svg>
<span class="t " id="t28" style="left:83.5px;top:473.8px;font-size:25px;letter-spacing:0.521px;color:#1a1a1a">SensorThings</span>
<svg class="ic" style="left:38.5px;top:506.5px" width="31" height="31" viewBox="0 0 31 31"><rect x="2" y="4" width="27" height="24" fill="#fff" stroke="#333" stroke-width="2"/><path d="M11 4V28M20 4V28M2 12H29M2 20H29" stroke="#333" stroke-width="1.600"/></svg>
<span class="t " id="t29" style="left:83.5px;top:509.8px;font-size:25px;letter-spacing:0.022px;color:#1a1a1a">Vector Tiles</span>
</div>
<div class="vsb" style="left:558px;top:452px;height:515px"><div class="sbu"></div><div class="thumb" style="top:321px;height:167px"></div><div class="sbd"></div></div>
<div class="splitdots" style="left:278px;top:974px"></div>
<span class="t " id="t30" style="left:8.6px;top:990.0px;font-size:22.5px;letter-spacing:0.059px;color:#1a1a1a">Layers</span>
<svg class="ic" style="left:533.0px;top:988.5px" width="22" height="22" viewBox="0 0 22 22"><rect x="1" y="1" width="20" height="20" rx="3" fill="#ececec" stroke="#8a8a8a" stroke-width="1.500"/><rect x="8.500" y="5" width="8" height="7" fill="none" stroke="#555" stroke-width="1.600"/><rect x="5" y="9" width="8" height="7" fill="#ececec" stroke="#555" stroke-width="1.600"/></svg>
<svg class="ic" style="left:562.0px;top:988.5px" width="22" height="22" viewBox="0 0 22 22"><rect x="1" y="1" width="20" height="20" rx="3" fill="#ececec" stroke="#8a8a8a" stroke-width="1.500"/><path d="M5.500 5.500L16.500 16.500M16.500 5.500L5.500 16.500" stroke="#4a4a4a" stroke-width="3.400"/></svg>
<svg class="ic" style="left:15.0px;top:1033.0px" width="34" height="32" viewBox="0 0 34 32"><path d="M2 12L16 6L24 18L10 24Z" fill="#e0301c" stroke="#9a1c10" stroke-width="1.200"/><path d="M6 9L20 4L24 10L10 16Z" fill="#f8c21c" stroke="#c79a10" stroke-width="1.200"/><path d="M10 6L22 2L26 8L14 12Z" fill="#5e97cf" stroke="#2c5f97" stroke-width="1.200"/><path d="M14 24L22 14L28 19L20 28Z" fill="#e9a44a" stroke="#8a5a1c" stroke-width="1.300"/><path d="M24 13L31 3" stroke="#c9863a" stroke-width="3.500" stroke-linecap="round"/></svg>
<svg class="ic" style="left:66.0px;top:1032.5px" width="32" height="33" viewBox="0 0 32 33"><rect x="3" y="10" width="17" height="17" fill="#f1f1f1" stroke="#7a7a7a" stroke-width="1.800"/><rect x="8" y="5" width="17" height="17" fill="#f1f1f1" stroke="#7a7a7a" stroke-width="1.800"/><path d="M14 2V17C14 19 19 19 19 17V2" fill="#cfe0f3" stroke="#2c5f97" stroke-width="1.800"/><rect x="19" y="20" width="12" height="12" rx="2.500" fill="#4f9a57"/><path d="M25.0 22.5V29.5M21.5 26.0H28.5" stroke="#fff" stroke-width="2.200"/></svg>
<svg class="ic" style="left:114.0px;top:1032.5px" width="36" height="33" viewBox="0 0 36 33"><path d="M2 16C9 5 24 5 32 16C24 26 9 26 2 16Z" fill="#fff" stroke="#8a8a8a" stroke-width="1.800"/><circle cx="17" cy="15.500" r="7" fill="#5e97cf" stroke="#2c5f97" stroke-width="1.300"/><circle cx="17" cy="15.500" r="3" fill="#1a2a3c"/><path d="M4 11C10 3 24 3 31 11" fill="none" stroke="#8a8a8a" stroke-width="1.600"/><path d="M27 27H35L31 31.500Z" fill="#555"/></svg>
<svg class="ic" style="left:166.5px;top:1032.5px" width="33" height="33" viewBox="0 0 33 33"><path d="M2 5H28L18 17V29L12 26V17Z" fill="#5e97cf" stroke="#2c5f97" stroke-width="1.600" stroke-linejoin="round"/><path d="M2 3.500H28" stroke="#e8c81c" stroke-width="3.500"/><path d="M24 27H32L28 31.500Z" fill="#555"/></svg>
<svg class="ic" style="left:217.0px;top:1033.0px" width="30" height="32" viewBox="0 0 30 32"><g opacity="0.45"><text x="1" y="19" font-family="Liberation Serif,serif" font-size="27" fill="#8a8a8a">ε</text><path d="M14 17H28L23 23V30L19 28V23Z" fill="#c9c9c9" stroke="#a9a9a9" stroke-width="1.200"/></g></svg>
<svg class="ic" style="left:291.0px;top:1033.0px" width="32" height="32" viewBox="0 0 32 32"><path d="M5 4V27M5 7H10M5 16H10M5 25H10" stroke="#8a8a8a" stroke-width="1.800" fill="none"/><rect x="8" y="13" width="5" height="5" fill="#f5a623"/><rect x="8" y="22" width="5" height="5" fill="#f5a623"/><rect x="8" y="4" width="5" height="5" fill="#f5a623"/><path d="M21 30L30 19H25V3H17V19H12Z" fill="#4a86c5" stroke="#1f4775" stroke-width="1.600" stroke-linejoin="round"/></svg>
<svg class="ic" style="left:341.0px;top:1034.0px" width="32" height="30" viewBox="0 0 32 30"><path d="M5 6V27M5 8H10M5 17H10M5 26H10" stroke="#8a8a8a" stroke-width="1.800" fill="none"/><rect x="8" y="14" width="5" height="5" fill="#f5a623"/><rect x="8" y="23" width="5" height="5" fill="#f5a623"/><path d="M21 2L30 13H25V28H17V13H12Z" fill="#4a86c5" stroke="#1f4775" stroke-width="1.600" stroke-linejoin="round"/></svg>
<svg class="ic" style="left:390.0px;top:1032.5px" width="32" height="33" viewBox="0 0 32 33"><rect x="3" y="2" width="22" height="22" rx="1.500" fill="#fff" stroke="#7a7a7a" stroke-width="1.800"/><rect x="19" y="20" width="12" height="12" rx="2.500" fill="#e3101c"/><path d="M21.500 26H28.500" stroke="#fff" stroke-width="2.400"/></svg>
<div class="dd" style="left:261px;top:1045px"></div>
<div class="tree" style="left:0;top:1083px;width:587px;height:508px"></div>
<div class="clip" style="left:1px;top:1084px;width:557px;height:479px">
<div class="arr-d" style="left:13px;top:14px"></div>
<div class="cb" style="left:48px;top:5px"><svg width="26" height="26" viewBox="0 0 26 26" style="position:absolute;left:0;top:0"><path d="M5.500 13.500l5.200 6.500L20 5.500" fill="none" stroke="#1d1d1d" stroke-width="3.200" stroke-linecap="butt" stroke-linejoin="miter"/></svg></div>
<svg class="ic" style="left:89.0px;top:4.0px" width="26" height="28" viewBox="0 0 26 28"><rect x="2" y="9" width="16" height="16" fill="#f4f4f4" stroke="#7a7a7a" stroke-width="1.600"/><rect x="7" y="5" width="16" height="16" fill="#f4f4f4" stroke="#7a7a7a" stroke-width="1.600"/><path d="M12 2V15C12 17.500 17 17.500 17 15V2" fill="#cfe0f3" stroke="#2c5f97" stroke-width="1.600"/></svg>
<span class="t " id="t31" style="left:132px;top:5.3px;font-size:26px;letter-spacing:0.000px;color:#1a1a1a;letter-spacing:1.05px">icoads-sst_7f5bce4b-d8de-4b1e-b3a2</span>
<div class="arr-r" style="left:56.5px;top:46px"></div>
<div class="cb" style="left:88.5px;top:40px"><svg width="26" height="26" viewBox="0 0 26 26" style="position:absolute;left:0;top:0"><path d="M5.500 13.500l5.200 6.500L20 5.500" fill="none" stroke="#1d1d1d" stroke-width="3.200" stroke-linecap="butt" stroke-linejoin="miter"/></svg></div>
<svg class="ic" style="left:131.0px;top:41.0px" width="26" height="26" viewBox="0 0 26 26"><rect x="0.0" y="0.0" width="8.700" height="8.700" fill="#213a55"/><rect x="8.7" y="0.0" width="8.700" height="8.700" fill="#a9c9ea"/><rect x="17.3" y="0.0" width="8.700" height="8.700" fill="#213a55"/><rect x="0.0" y="8.7" width="8.700" height="8.700" fill="#a9c9ea"/><rect x="8.7" y="8.7" width="8.700" height="8.700" fill="#213a55"/><rect x="17.3" y="8.7" width="8.700" height="8.700" fill="#a9c9ea"/><rect x="0.0" y="17.3" width="8.700" height="8.700" fill="#213a55"/><rect x="8.7" y="17.3" width="8.700" height="8.700" fill="#a9c9ea"/><rect x="17.3" y="17.3" width="8.700" height="8.700" fill="#ffffff"/></svg>
<span class="t " id="t32" style="left:172px;top:40.7px;font-size:27px;letter-spacing:0.000px;color:#1c1c1c;font-weight:bold;letter-spacing:1.1px;-webkit-text-stroke:0.35px #1c1c1c">SST_t_2000-01-16T06:00:</span>
<span class="t " id="t33" style="left:536px;top:40.7px;font-size:27px;letter-spacing:0.000px;color:#1c1c1c;font-weight:bold;letter-spacing:1.1px;-webkit-text-stroke:0.35px #1c1c1c">0.</span>
<div class="clk" style="left:515px;top:38px"><svg width="32" height="32" viewBox="0 0 32 32"><circle cx="15.500" cy="16" r="11.500" fill="#fcfcfc" stroke="#6f6f6f" stroke-width="1.800"/><path d="M15.500 9.500v7l4.500 3" fill="none" stroke="#6f6f6f" stroke-width="2" stroke-linecap="round"/></svg></div>
<div class="arr-r" style="left:56.5px;top:82px"></div>
<div class="cb" style="left:88.5px;top:76px"><svg width="26" height="26" viewBox="0 0 26 26" style="position:absolute;left:0;top:0"><path d="M5.500 13.500l5.200 6.500L20 5.500" fill="none" stroke="#1d1d1d" stroke-width="3.200" stroke-linecap="butt" stroke-linejoin="miter"/></svg></div>
<svg class="ic" style="left:131.0px;top:77.0px" width="26" height="26" viewBox="0 0 26 26"><rect x="0.0" y="0.0" width="8.700" height="8.700" fill="#213a55"/><rect x="8.7" y="0.0" width="8.700" height="8.700" fill="#a9c9ea"/><rect x="17.3" y="0.0" width="8.700" height="8.700" fill="#213a55"/><rect x="0.0" y="8.7" width="8.700" height="8.700" fill="#a9c9ea"/><rect x="8.7" y="8.7" width="8.700" height="8.700" fill="#213a55"/><rect x="17.3" y="8.7" width="8.700" height="8.700" fill="#a9c9ea"/><rect x="0.0" y="17.3" width="8.700" height="8.700" fill="#213a55"/><rect x="8.7" y="17.3" width="8.700" height="8.700" fill="#a9c9ea"/><rect x="17.3" y="17.3" width="8.700" height="8.700" fill="#ffffff"/></svg>
<span class="t " id="t34" style="left:172px;top:76.7px;font-size:27px;letter-spacing:0.000px;color:#1c1c1c;font-weight:bold;letter-spacing:1.1px;-webkit-text-stroke:0.35px #1c1c1c">SST_t_2000-02-15T16:29:</span>
<span class="t " id="t35" style="left:536px;top:76.7px;font-size:27px;letter-spacing:0.000px;color:#1c1c1c;font-weight:bold;letter-spacing:1.1px;-webkit-text-stroke:0.35px #1c1c1c">6.</span>
<div class="clk" style="left:515px;top:74px"><svg width="32" height="32" viewBox="0 0 32 32"><circle cx="15.500" cy="16" r="11.500" fill="#fcfcfc" stroke="#6f6f6f" stroke-width="1.800"/><path d="M15.500 9.500v7l4.500 3" fill="none" stroke="#6f6f6f" stroke-width="2" stroke-linecap="round"/></svg></div>
<div class="arr-r" style="left:56.5px;top:118px"></div>
<div class="cb" style="left:88.5px;top:112px"><svg width="26" height="26" viewBox="0 0 26 26" style="position:absolute;left:0;top:0"><path d="M5.500 13.500l5.200 6.500L20 5.500" fill="none" stroke="#1d1d1d" stroke-width="3.200" stroke-linecap="butt" stroke-linejoin="miter"/></svg></div>
<svg class="ic" style="left:131.0px;top:113.0px" width="26" height="26" viewBox="0 0 26 26"><rect x="0.0" y="0.0" width="8.700" height="8.700" fill="#213a55"/><rect x="8.7" y="0.0" width="8.700" height="8.700" fill="#a9c9ea"/><rect x="17.3" y="0.0" width="8.700" height="8.700" fill="#213a55"/><rect x="0.0" y="8.7" width="8.700" height="8.700" fill="#a9c9ea"/><rect x="8.7" y="8.7" width="8.700" height="8.700" fill="#213a55"/><rect x="17.3" y="8.7" width="8.700" height="8.700" fill="#a9c9ea"/><rect x="0.0" y="17.3" width="8.700" height="8.700" fill="#213a55"/><rect x="8.7" y="17.3" width="8.700" height="8.700" fill="#a9c9ea"/><rect x="17.3" y="17.3" width="8.700" height="8.700" fill="#ffffff"/></svg>
<span class="t " id="t36" style="left:172px;top:112.7px;font-size:27px;letter-spacing:0.000px;color:#1c1c1c;font-weight:bold;letter-spacing:1.1px;-webkit-text-stroke:0.35px #1c1c1c">SST_t_2000-03-17T02:58:</span>
<span class="t " id="t37" style="left:537px;top:112.7px;font-size:27px;letter-spacing:0.000px;color:#1c1c1c;font-weight:bold;letter-spacing:1.1px;-webkit-text-stroke:0.35px #1c1c1c">2.</span>
<div class="clk" style="left:515px;top:110px"><svg width="32" height="32" viewBox="0 0 32 32"><circle cx="15.500" cy="16" r="11.500" fill="#fcfcfc" stroke="#6f6f6f" stroke-width="1.800"/><path d="M15.500 9.500v7l4.500 3" fill="none" stroke="#6f6f6f" stroke-width="2" stroke-linecap="round"/></svg></div>
<div class="arr-r" style="left:56.5px;top:154px"></div>
<div class="cb" style="left:88.5px;top:148px"><svg width="26" height="26" viewBox="0 0 26 26" style="position:absolute;left:0;top:0"><path d="M5.500 13.500l5.200 6.500L20 5.500" fill="none" stroke="#1d1d1d" stroke-width="3.200" stroke-linecap="butt" stroke-linejoin="miter"/></svg></div>
<svg class="ic" style="left:131.0px;top:149.0px" width="26" height="26" viewBox="0 0 26 26"><rect x="0.0" y="0.0" width="8.700" height="8.700" fill="#213a55"/><rect x="8.7" y="0.0" width="8.700" height="8.700" fill="#a9c9ea"/><rect x="17.3" y="0.0" width="8.700" height="8.700" fill="#213a55"/><rect x="0.0" y="8.7" width="8.700" height="8.700" fill="#a9c9ea"/><rect x="8.7" y="8.7" width="8.700" height="8.700" fill="#213a55"/><rect x="17.3" y="8.7" width="8.700" height="8.700" fill="#a9c9ea"/><rect x="0.0" y="17.3" width="8.700" height="8.700" fill="#213a55"/><rect x="8.7" y="17.3" width="8.700" height="8.700" fill="#a9c9ea"/><rect x="17.3" y="17.3" width="8.700" height="8.700" fill="#ffffff"/></svg>
<span class="t " id="t38" style="left:172px;top:148.7px;font-size:27px;letter-spacing:0.000px;color:#1c1c1c;font-weight:bold;letter-spacing:1.1px;-webkit-text-stroke:0.35px #1c1c1c">SST_t_2000-04-16T13:27:</span>
<span class="t " id="t39" style="left:547.5px;top:148.7px;font-size:27px;letter-spacing:0.000px;color:#1c1c1c;font-weight:bold;letter-spacing:1.1px;-webkit-text-stroke:0.35px #1c1c1c">.1</span>
<div class="clk" style="left:515px;top:146px"><svg width="32" height="32" viewBox="0 0 32 32"><circle cx="15.500" cy="16" r="11.500" fill="#fcfcfc" stroke="#6f6f6f" stroke-width="1.800"/><path d="M15.500 9.500v7l4.500 3" fill="none" stroke="#6f6f6f" stroke-width="2" stroke-linecap="round"/></svg></div>
<div class="arr-r" style="left:56.5px;top:190px"></div>
<div class="cb" style="left:88.5px;top:184px"><svg width="26" height="26" viewBox="0 0 26 26" style="position:absolute;left:0;top:0"><path d="M5.500 13.500l5.200 6.500L20 5.500" fill="none" stroke="#1d1d1d" stroke-width="3.200" stroke-linecap="butt" stroke-linejoin="miter"/></svg></div>
<svg class="ic" style="left:131.0px;top:185.0px" width="26" height="26" viewBox="0 0 26 26"><rect x="0.0" y="0.0" width="8.700" height="8.700" fill="#213a55"/><rect x="8.7" y="0.0" width="8.700" height="8.700" fill="#a9c9ea"/><rect x="17.3" y="0.0" width="8.700" height="8.700" fill="#213a55"/><rect x="0.0" y="8.7" width="8.700" height="8.700" fill="#a9c9ea"/><rect x="8.7" y="8.7" width="8.700" height="8.700" fill="#213a55"/><rect x="17.3" y="8.7" width="8.700" height="8.700" fill="#a9c9ea"/><rect x="0.0" y="17.3" width="8.700" height="8.700" fill="#213a55"/><rect x="8.7" y="17.3" width="8.700" height="8.700" fill="#a9c9ea"/><rect x="17.3" y="17.3" width="8.700" height="8.700" fill="#ffffff"/></svg>
<span class="t " id="t40" style="left:172px;top:184.7px;font-size:27px;letter-spacing:0.000px;color:#1c1c1c;font-weight:bold;letter-spacing:1.1px;-webkit-text-stroke:0.35px #1c1c1c">SST_t_2000-05-16T23:56:</span>
<span class="t " id="t41" style="left:541px;top:184.7px;font-size:27px;letter-spacing:0.000px;color:#1c1c1c;font-weight:bold;letter-spacing:1.1px;-webkit-text-stroke:0.35px #1c1c1c">4</span>
<div class="clk" style="left:515px;top:182px"><svg width="32" height="32" viewBox="0 0 32 32"><circle cx="15.500" cy="16" r="11.500" fill="#fcfcfc" stroke="#6f6f6f" stroke-width="1.800"/><path d="M15.500 9.500v7l4.500 3" fill="none" stroke="#6f6f6f" stroke-width="2" stroke-linecap="round"/></svg></div>
<div class="arr-r" style="left:56.5px;top:226px"></div>
<div class="cb" style="left:88.5px;top:220px"><svg width="26" height="26" viewBox="0 0 26 26" style="position:absolute;left:0;top:0"><path d="M5.500 13.500l5.200 6.500L20 5.500" fill="none" stroke="#1d1d1d" stroke-width="3.200" stroke-linecap="butt" stroke-linejoin="miter"/></svg></div>
<svg class="ic" style="left:131.0px;top:221.0px" width="26" height="26" viewBox="0 0 26 26"><rect x="0.0" y="0.0" width="8.700" height="8.700" fill="#213a55"/><rect x="8.7" y="0.0" width="8.700" height="8.700" fill="#a9c9ea"/><rect x="17.3" y="0.0" width="8.700" height="8.700" fill="#213a55"/><rect x="0.0" y="8.7" width="8.700" height="8.700" fill="#a9c9ea"/><rect x="8.7" y="8.7" width="8.700" height="8.700" fill="#213a55"/><rect x="17.3" y="8.7" width="8.700" height="8.700" fill="#a9c9ea"/><rect x="0.0" y="17.3" width="8.700" height="8.700" fill="#213a55"/><rect x="8.7" y="17.3" width="8.700" height="8.700" fill="#a9c9ea"/><rect x="17.3" y="17.3" width="8.700" height="8.700" fill="#ffffff"/></svg>
<span class="t " id="t42" style="left:172px;top:220.7px;font-size:27px;letter-spacing:0.000px;color:#1c1c1c;font-weight:bold;letter-spacing:1.1px;-webkit-text-stroke:0.35px #1c1c1c">SST_t_2000-06-16T10:25:</span>
<span class="t " id="t43" style="left:536px;top:220.7px;font-size:27px;letter-spacing:0.000px;color:#1c1c1c;font-weight:bold;letter-spacing:1.1px;-webkit-text-stroke:0.35px #1c1c1c">0.</span>
<div class="clk" style="left:515px;top:218px"><svg width="32" height="32" viewBox="0 0 32 32"><circle cx="15.500" cy="16" r="11.500" fill="#fcfcfc" stroke="#6f6f6f" stroke-width="1.800"/><path d="M15.500 9.500v7l4.500 3" fill="none" stroke="#6f6f6f" stroke-width="2" stroke-linecap="round"/></svg></div>
<div class="arr-r" style="left:56.5px;top:262px"></div>
<div class="cb" style="left:88.5px;top:256px"><svg width="26" height="26" viewBox="0 0 26 26" style="position:absolute;left:0;top:0"><path d="M5.500 13.500l5.200 6.500L20 5.500" fill="none" stroke="#1d1d1d" stroke-width="3.200" stroke-linecap="butt" stroke-linejoin="miter"/></svg></div>
<svg class="ic" style="left:131.0px;top:257.0px" width="26" height="26" viewBox="0 0 26 26"><rect x="0.0" y="0.0" width="8.700" height="8.700" fill="#213a55"/><rect x="8.7" y="0.0" width="8.700" height="8.700" fill="#a9c9ea"/><rect x="17.3" y="0.0" width="8.700" height="8.700" fill="#213a55"/><rect x="0.0" y="8.7" width="8.700" height="8.700" fill="#a9c9ea"/><rect x="8.7" y="8.7" width="8.700" height="8.700" fill="#213a55"/><rect x="17.3" y="8.7" width="8.700" height="8.700" fill="#a9c9ea"/><rect x="0.0" y="17.3" width="8.700" height="8.700" fill="#213a55"/><rect x="8.7" y="17.3" width="8.700" height="8.700" fill="#a9c9ea"/><rect x="17.3" y="17.3" width="8.700" height="8.700" fill="#ffffff"/></svg>
<span class="t " id="t44" style="left:172px;top:256.7px;font-size:27px;letter-spacing:0.000px;color:#1c1c1c;font-weight:bold;letter-spacing:1.1px;-webkit-text-stroke:0.35px #1c1c1c">SST_t_2000-07-16T20:54:</span>
<span class="t " id="t45" style="left:540px;top:256.7px;font-size:27px;letter-spacing:0.000px;color:#1c1c1c;font-weight:bold;letter-spacing:1.1px;-webkit-text-stroke:0.35px #1c1c1c">6</span>
<div class="clk" style="left:515px;top:254px"><svg width="32" height="32" viewBox="0 0 32 32"><circle cx="15.500" cy="16" r="11.500" fill="#fcfcfc" stroke="#6f6f6f" stroke-width="1.800"/><path d="M15.500 9.500v7l4.500 3" fill="none" stroke="#6f6f6f" stroke-width="2" stroke-linecap="round"/></svg></div>
<div class="arr-r" style="left:56.5px;top:298px"></div>
<div class="cb" style="left:88.5px;top:292px"><svg width="26" height="26" viewBox="0 0 26 26" style="position:absolute;left:0;top:0"><path d="M5.500 13.500l5.200 6.500L20 5.500" fill="none" stroke="#1d1d1d" stroke-width="3.200" stroke-linecap="butt" stroke-linejoin="miter"/></svg></div>
<svg class="ic" style="left:131.0px;top:293.0px" width="26" height="26" viewBox="0 0 26 26"><rect x="0.0" y="0.0" width="8.700" height="8.700" fill="#213a55"/><rect x="8.7" y="0.0" width="8.700" height="8.700" fill="#a9c9ea"/><rect x="17.3" y="0.0" width="8.700" height="8.700" fill="#213a55"/><rect x="0.0" y="8.7" width="8.700" height="8.700" fill="#a9c9ea"/><rect x="8.7" y="8.7" width="8.700" height="8.700" fill="#213a55"/><rect x="17.3" y="8.7" width="8.700" height="8.700" fill="#a9c9ea"/><rect x="0.0" y="17.3" width="8.700" height="8.700" fill="#213a55"/><rect x="8.7" y="17.3" width="8.700" height="8.700" fill="#a9c9ea"/><rect x="17.3" y="17.3" width="8.700" height="8.700" fill="#ffffff"/></svg>
<span class="t " id="t46" style="left:172px;top:292.7px;font-size:27px;letter-spacing:0.000px;color:#1c1c1c;font-weight:bold;letter-spacing:1.1px;-webkit-text-stroke:0.35px #1c1c1c">SST_t_2000-08-16T07:23:</span>
<span class="t " id="t47" style="left:536px;top:292.7px;font-size:27px;letter-spacing:0.000px;color:#1c1c1c;font-weight:bold;letter-spacing:1.1px;-webkit-text-stroke:0.35px #1c1c1c">2.</span>
<div class="clk" style="left:515px;top:290px"><svg width="32" height="32" viewBox="0 0 32 32"><circle cx="15.500" cy="16" r="11.500" fill="#fcfcfc" stroke="#6f6f6f" stroke-width="1.800"/><path d="M15.500 9.500v7l4.500 3" fill="none" stroke="#6f6f6f" stroke-width="2" stroke-linecap="round"/></svg></div>
<div class="arr-r" style="left:56.5px;top:334px"></div>
<div class="cb" style="left:88.5px;top:328px"><svg width="26" height="26" viewBox="0 0 26 26" style="position:absolute;left:0;top:0"><path d="M5.500 13.500l5.200 6.500L20 5.500" fill="none" stroke="#1d1d1d" stroke-width="3.200" stroke-linecap="butt" stroke-linejoin="miter"/></svg></div>
<svg class="ic" style="left:131.0px;top:329.0px" width="26" height="26" viewBox="0 0 26 26"><rect x="0.0" y="0.0" width="8.700" height="8.700" fill="#213a55"/><rect x="8.7" y="0.0" width="8.700" height="8.700" fill="#a9c9ea"/><rect x="17.3" y="0.0" width="8.700" height="8.700" fill="#213a55"/><rect x="0.0" y="8.7" width="8.700" height="8.700" fill="#a9c9ea"/><rect x="8.7" y="8.7" width="8.700" height="8.700" fill="#213a55"/><rect x="17.3" y="8.7" width="8.700" height="8.700" fill="#a9c9ea"/><rect x="0.0" y="17.3" width="8.700" height="8.700" fill="#213a55"/><rect x="8.7" y="17.3" width="8.700" height="8.700" fill="#a9c9ea"/><rect x="17.3" y="17.3" width="8.700" height="8.700" fill="#ffffff"/></svg>
<span class="t " id="t48" style="left:172px;top:328.7px;font-size:27px;letter-spacing:0.000px;color:#1c1c1c;font-weight:bold;letter-spacing:1.1px;-webkit-text-stroke:0.35px #1c1c1c">SST_t_2000-09-15T17:52:</span>
<span class="t " id="t49" style="left:536px;top:328.7px;font-size:27px;letter-spacing:0.000px;color:#1c1c1c;font-weight:bold;letter-spacing:1.1px;-webkit-text-stroke:0.35px #1c1c1c">8.</span>
<div class="clk" style="left:515px;top:326px"><svg width="32" height="32" viewBox="0 0 32 32"><circle cx="15.500" cy="16" r="11.500" fill="#fcfcfc" stroke="#6f6f6f" stroke-width="1.800"/><path d="M15.500 9.500v7l4.500 3" fill="none" stroke="#6f6f6f" stroke-width="2" stroke-linecap="round"/></svg></div>
<div class="arr-r" style="left:56.5px;top:370px"></div>
<div class="cb" style="left:88.5px;top:364px"><svg width="26" height="26" viewBox="0 0 26 26" style="position:absolute;left:0;top:0"><path d="M5.500 13.500l5.200 6.500L20 5.500" fill="none" stroke="#1d1d1d" stroke-width="3.200" stroke-linecap="butt" stroke-linejoin="miter"/></svg></div>
<svg class="ic" style="left:131.0px;top:365.0px" width="26" height="26" viewBox="0 0 26 26"><rect x="0.0" y="0.0" width="8.700" height="8.700" fill="#213a55"/><rect x="8.7" y="0.0" width="8.700" height="8.700" fill="#a9c9ea"/><rect x="17.3" y="0.0" width="8.700" height="8.700" fill="#213a55"/><rect x="0.0" y="8.7" width="8.700" height="8.700" fill="#a9c9ea"/><rect x="8.7" y="8.7" width="8.700" height="8.700" fill="#213a55"/><rect x="17.3" y="8.7" width="8.700" height="8.700" fill="#a9c9ea"/><rect x="0.0" y="17.3" width="8.700" height="8.700" fill="#213a55"/><rect x="8.7" y="17.3" width="8.700" height="8.700" fill="#a9c9ea"/><rect x="17.3" y="17.3" width="8.700" height="8.700" fill="#ffffff"/></svg>
<span class="t " id="t50" style="left:172px;top:364.7px;font-size:27px;letter-spacing:0.000px;color:#1c1c1c;font-weight:bold;letter-spacing:1.1px;-webkit-text-stroke:0.35px #1c1c1c">SST_t_2000-10-16T04:21:</span>
<span class="t " id="t51" style="left:538px;top:364.7px;font-size:27px;letter-spacing:0.000px;color:#1c1c1c;font-weight:bold;letter-spacing:1.1px;-webkit-text-stroke:0.35px #1c1c1c">4.</span>
<div class="clk" style="left:515px;top:362px"><svg width="32" height="32" viewBox="0 0 32 32"><circle cx="15.500" cy="16" r="11.500" fill="#fcfcfc" stroke="#6f6f6f" stroke-width="1.800"/><path d="M15.500 9.500v7l4.500 3" fill="none" stroke="#6f6f6f" stroke-width="2" stroke-linecap="round"/></svg></div>
<div class="arr-r" style="left:56.5px;top:406px"></div>
<div class="cb" style="left:88.5px;top:400px"><svg width="26" height="26" viewBox="0 0 26 26" style="position:absolute;left:0;top:0"><path d="M5.500 13.500l5.200 6.500L20 5.500" fill="none" stroke="#1d1d1d" stroke-width="3.200" stroke-linecap="butt" stroke-linejoin="miter"/></svg></div>
<svg class="ic" style="left:131.0px;top:401.0px" width="26" height="26" viewBox="0 0 26 26"><rect x="0.0" y="0.0" width="8.700" height="8.700" fill="#213a55"/><rect x="8.7" y="0.0" width="8.700" height="8.700" fill="#a9c9ea"/><rect x="17.3" y="0.0" width="8.700" height="8.700" fill="#213a55"/><rect x="0.0" y="8.7" width="8.700" height="8.700" fill="#a9c9ea"/><rect x="8.7" y="8.7" width="8.700" height="8.700" fill="#213a55"/><rect x="17.3" y="8.7" width="8.700" height="8.700" fill="#a9c9ea"/><rect x="0.0" y="17.3" width="8.700" height="8.700" fill="#213a55"/><rect x="8.7" y="17.3" width="8.700" height="8.700" fill="#a9c9ea"/><rect x="17.3" y="17.3" width="8.700" height="8.700" fill="#ffffff"/></svg>
<span class="t " id="t52" style="left:172px;top:400.7px;font-size:27px;letter-spacing:0.000px;color:#1c1c1c;font-weight:bold;letter-spacing:1.1px;-webkit-text-stroke:0.35px #1c1c1c">SST_t_2000-11-15T14:51:</span>
<span class="t " id="t53" style="left:540px;top:400.7px;font-size:27px;letter-spacing:0.000px;color:#1c1c1c;font-weight:bold;letter-spacing:1.1px;-webkit-text-stroke:0.35px #1c1c1c">0</span>
<div class="clk" style="left:515px;top:398px"><svg width="32" height="32" viewBox="0 0 32 32"><circle cx="15.500" cy="16" r="11.500" fill="#fcfcfc" stroke="#6f6f6f" stroke-width="1.800"/><path d="M15.500 9.500v7l4.500 3" fill="none" stroke="#6f6f6f" stroke-width="2" stroke-linecap="round"/></svg></div>
<div class="arr-r" style="left:56.5px;top:442px"></div>
<div class="cb" style="left:88.5px;top:436px"><svg width="26" height="26" viewBox="0 0 26 26" style="position:absolute;left:0;top:0"><path d="M5.500 13.500l5.200 6.500L20 5.500" fill="none" stroke="#1d1d1d" stroke-width="3.200" stroke-linecap="butt" stroke-linejoin="miter"/></svg></div>
<svg class="ic" style="left:131.0px;top:437.0px" width="26" height="26" viewBox="0 0 26 26"><rect x="0.0" y="0.0" width="8.700" height="8.700" fill="#213a55"/><rect x="8.7" y="0.0" width="8.700" height="8.700" fill="#a9c9ea"/><rect x="17.3" y="0.0" width="8.700" height="8.700" fill="#213a55"/><rect x="0.0" y="8.7" width="8.700" height="8.700" fill="#a9c9ea"/><rect x="8.7" y="8.7" width="8.700" height="8.700" fill="#213a55"/><rect x="17.3" y="8.7" width="8.700" height="8.700" fill="#a9c9ea"/><rect x="0.0" y="17.3" width="8.700" height="8.700" fill="#213a55"/><rect x="8.7" y="17.3" width="8.700" height="8.700" fill="#a9c9ea"/><rect x="17.3" y="17.3" width="8.700" height="8.700" fill="#ffffff"/></svg>
<span class="t " id="t54" style="left:172px;top:436.7px;font-size:27px;letter-spacing:0.000px;color:#1c1c1c;font-weight:bold;letter-spacing:1.1px;-webkit-text-stroke:0.35px #1c1c1c">SST_t_2000-12-16T01:20:</span>
<span class="t " id="t55" style="left:537px;top:436.7px;font-size:27px;letter-spacing:0.000px;color:#1c1c1c;font-weight:bold;letter-spacing:1.1px;-webkit-text-stroke:0.35px #1c1c1c">6.</span>
<div class="clk" style="left:515px;top:434px"><svg width="32" height="32" viewBox="0 0 32 32"><circle cx="15.500" cy="16" r="11.500" fill="#fcfcfc" stroke="#6f6f6f" stroke-width="1.800"/><path d="M15.500 9.500v7l4.500 3" fill="none" stroke="#6f6f6f" stroke-width="2" stroke-linecap="round"/></svg></div>
<div class="arr-r" style="left:56.5px;top:478px"></div>
<div class="cb" style="left:88.5px;top:472px"><svg width="26" height="26" viewBox="0 0 26 26" style="position:absolute;left:0;top:0"><path d="M5.500 13.500l5.200 6.500L20 5.500" fill="none" stroke="#1d1d1d" stroke-width="3.200" stroke-linecap="butt" stroke-linejoin="miter"/></svg></div>
<svg class="ic" style="left:131.0px;top:473.0px" width="26" height="26" viewBox="0 0 26 26"><rect x="0.0" y="0.0" width="8.700" height="8.700" fill="#213a55"/><rect x="8.7" y="0.0" width="8.700" height="8.700" fill="#a9c9ea"/><rect x="17.3" y="0.0" width="8.700" height="8.700" fill="#213a55"/><rect x="0.0" y="8.7" width="8.700" height="8.700" fill="#a9c9ea"/><rect x="8.7" y="8.7" width="8.700" height="8.700" fill="#213a55"/><rect x="17.3" y="8.7" width="8.700" height="8.700" fill="#a9c9ea"/><rect x="0.0" y="17.3" width="8.700" height="8.700" fill="#213a55"/><rect x="8.7" y="17.3" width="8.700" height="8.700" fill="#a9c9ea"/><rect x="17.3" y="17.3" width="8.700" height="8.700" fill="#ffffff"/></svg>
<span class="t " id="t56" style="left:172px;top:472.7px;font-size:27px;letter-spacing:0.000px;color:#1c1c1c;font-weight:bold;letter-spacing:1.1px;-webkit-text-stroke:0.35px #1c1c1c">AIRT_t_2000-01-16T06:00:</span>
<span class="t " id="t57" style="left:536px;top:472.7px;font-size:27px;letter-spacing:0.000px;color:#1c1c1c;font-weight:bold;letter-spacing:1.1px;-webkit-text-stroke:0.35px #1c1c1c">0.</span>
<div class="clk" style="left:515px;top:470px"><svg width="32" height="32" viewBox="0 0 32 32"><circle cx="15.500" cy="16" r="11.500" fill="#fcfcfc" stroke="#6f6f6f" stroke-width="1.800"/><path d="M15.500 9.500v7l4.500 3" fill="none" stroke="#6f6f6f" stroke-width="2" stroke-linecap="round"/></svg></div>
</div>
<div class="vsb" style="left:558px;top:1084px;height:479px"><div class="sbu"></div><div class="thumb" style="top:138px;height:312px"></div><div class="sbd"></div></div>
<div class="hsb" style="left:1px;top:1564px;width:557px"><div class="sbl"></div><div class="thumbh" style="left:338px;width:192px"></div><div class="sbr"></div></div>
<div class="sbcorner" style="left:558px;top:1564px"></div>
<div class="splitdotsv" style="left:592px;top:966px"></div>
<div class="msgbar"></div>
<svg class="ic" style="left:619.5px;top:371.5px" width="51" height="29" viewBox="0 0 51 29"><rect x="1.500" y="1.500" width="48" height="26" rx="3.500" fill="#a0adb5" stroke="#1c2126" stroke-width="2.200"/><path d="M32.500 2.600H46C47.500 2.600 48.400 3.500 48.400 5V24C48.400 25.500 47.500 26.400 46 26.400H32.500Z" fill="#e6f5fd"/><path d="M19.500 5.500V24M29 5.500V24" stroke="#000" stroke-width="4.500"/></svg>
<svg class="ic" style="left:686.0px;top:366.0px" width="40" height="38" viewBox="0 0 40 38"><path d="M6 1.500H34C37 1.500 39 3.500 39 6.500V22C39 25 37 27 34 27H22L12 36L14 27H6C3 27 1 25 1 22V6.500C1 3.500 3 1.500 6 1.500Z" fill="#f4fafd" stroke="#9a9a9a" stroke-width="2"/></svg>
<span class="t " id="t58" style="left:751px;top:373.5px;font-size:26px;letter-spacing:0.169px;color:#0a50a8;font-weight:bold">Environmental Data Retrieval:</span>
<span class="t " id="t59" style="left:1134px;top:373.5px;font-size:26px;letter-spacing:0.304px;color:#0a50a8">CoverageJSON parsed successfully.</span>
<svg class="ic" style="left:2798px;top:366px" width="36" height="36" viewBox="0 0 36 36"><circle cx="18" cy="18" r="16.500" fill="#353b40"/><path d="M11 11l14 14M25 11l-14 14" stroke="#fff" stroke-width="4.200" stroke-linecap="round"/></svg>
<div style="position:absolute;left:600px;top:422px;width:1.500px;height:1169px;background:#a9a9a9"></div>
<div style="position:absolute;left:600px;top:1590px;width:2280px;height:2px;background:#b4b4b4"></div>
<div style="position:absolute;left:2878px;top:421px;width:2px;height:1170px;background:#c4c4c4"></div>
<div class="inp" style="left:8px;top:1598px;width:416px;height:48px;border-radius:5px"></div>
<svg class="ic" style="left:24px;top:1608px" width="30" height="30" viewBox="0 0 30 30"><circle cx="12" cy="12" r="8.500" fill="none" stroke="#8b8b8b" stroke-width="2.600"/><path d="M18.500 18.500l8 8" stroke="#8b8b8b" stroke-width="2.800" stroke-linecap="round"/></svg>
<span class="t " id="t60" style="left:67px;top:1609.5px;font-size:26px;letter-spacing:0.149px;color:#8e8e8e">Type to locate (⌘K)</span>
<span class="t " id="t61" style="left:440.6px;top:1612.5px;font-size:22.5px;letter-spacing:0.450px;color:#1a1a1a">1 legend entry removed.</span>
<span class="t " id="t62" style="left:1165.4px;top:1612.5px;font-size:22.5px;letter-spacing:0.352px;color:#1a1a1a">Coordinate</span>
<div class="inp" style="left:1289px;top:1600px;width:198px;height:45px"></div>
<span class="t " id="t63" style="left:1302px;top:1612.5px;font-size:22.5px;letter-spacing:1.426px;color:#1a1a1a">75,09°  -48,62°</span>
<svg class="ic" style="left:1495.0px;top:1604.0px" width="32" height="36" viewBox="0 0 32 36"><g transform="rotate(-22 15 18)"><rect x="7" y="5" width="15" height="24" rx="7" fill="#fff" stroke="#222" stroke-width="2.200"/><path d="M14.500 5V15M7 15H22" stroke="#222" stroke-width="1.800"/><rect x="8" y="6" width="6" height="9" rx="3" fill="#222"/></g><circle cx="22" cy="27" r="4" fill="#e9b9c2" stroke="#222" stroke-width="1.300"/><path d="M24 6L27 4M27 10L30 9M3 13L1 15" stroke="#222" stroke-width="1.500"/></svg>
<span class="t " id="t64" style="left:1553.7px;top:1612.5px;font-size:22.5px;letter-spacing:0.101px;color:#1a1a1a">Scale</span>
<div class="inp" style="left:1619px;top:1598px;width:185px;height:47px;border-radius:6px"></div>
<div style="position:absolute;left:1762px;top:1601px;width:2px;height:41px;background:#d0d0d0"></div>
<div class="dd" style="left:1774px;top:1618px;border-top-color:#555"></div>
<span class="t " id="t65" style="left:1627px;top:1612.5px;font-size:22.5px;letter-spacing:0.512px;color:#1a1a1a">1:10860555</span>
<svg class="ic" style="left:1827.5px;top:1607.5px" width="25" height="31" viewBox="0 0 25 31"><path d="M6 14V10C6 4 9 1.500 12.500 1.500C16 1.500 19 4 19 10V14" fill="none" stroke="#9b9b9b" stroke-width="3"/><rect x="1" y="13" width="23" height="17" rx="3" fill="#6b6b6b"/></svg>
<span class="t " id="t66" style="left:1871.5px;top:1612.5px;font-size:22.5px;letter-spacing:0.550px;color:#1a1a1a">Magnifier</span>
<div class="inp" style="left:1976.500px;top:1600px;width:185px;height:45px;border-radius:6px"></div>
<span class="t " id="t67" style="left:1986px;top:1612.5px;font-size:22.5px;letter-spacing:0.113px;color:#1a1a1a">100%</span>
<div style="position:absolute;left:2132px;top:1603px;width:2px;height:39px;background:#d4d4d4"></div><div class="du" style="left:2132px;top:1608px"></div><div class="ddn" style="left:2132px;top:1628px"></div>
<span class="t " id="t68" style="left:2180.8px;top:1612.5px;font-size:22.5px;letter-spacing:0.423px;color:#1a1a1a">Rotation</span>
<div class="inp" style="left:2289px;top:1600px;width:185px;height:45px;border-radius:6px"></div>
<span class="t " id="t69" style="left:2298px;top:1612.5px;font-size:22.5px;letter-spacing:0.694px;color:#1a1a1a">0,0 °</span>
<div style="position:absolute;left:2444px;top:1603px;width:2px;height:39px;background:#d4d4d4"></div><div class="du" style="left:2444px;top:1608px"></div><div class="ddn" style="left:2444px;top:1628px"></div>
<div class="cb" style="left:2486px;top:1608px;width:28px;height:28px"><svg width="26" height="26" viewBox="0 0 26 26" style="position:absolute;left:0;top:0"><path d="M5.500 13.500l5.200 6.500L20 5.500" fill="none" stroke="#1d1d1d" stroke-width="3.200" stroke-linecap="butt" stroke-linejoin="miter"/></svg></div>
<span class="t " id="t70" style="left:2525.75px;top:1612.5px;font-size:22.5px;letter-spacing:-0.258px;color:#1a1a1a">Render</span>
<svg class="ic" style="left:2630.0px;top:1606.0px" width="32" height="32" viewBox="0 0 32 32"><path d="M2 9C8 3 24 3 30 9L27 14H5Z" fill="none" stroke="#7a7a7a" stroke-width="1.600"/><path d="M16 4V14M9 5L11 14M23 5L21 14M4 11H28" stroke="#7a7a7a" stroke-width="1.300" fill="none"/><circle cx="16" cy="21" r="9.500" fill="none" stroke="#7a7a7a" stroke-width="1.800"/><path d="M16 11.500V30.500M6.500 21H25.500M16 11.500C10 16 10 26 16 30.500C22 26 22 16 16 11.500" fill="none" stroke="#7a7a7a" stroke-width="1.400"/></svg>
<span class="t " id="t71" style="left:2668px;top:1612.5px;font-size:22.5px;letter-spacing:-0.120px;color:#1a1a1a">EPSG:4326</span>
<svg class="ic" style="left:2834.0px;top:1608.0px" width="33" height="30" viewBox="0 0 33 30"><path d="M16 1C25 1 32 6.500 32 13.500C32 20.500 25 26 16 26C14 26 12 25.700 10.500 25.200L3 29L5.500 22.500C2.500 20 0.500 17 0.500 13.500C0.500 6.500 7 1 16 1Z" fill="#6e6e6e"/><circle cx="9" cy="13.500" r="2.400" fill="#fff"/><circle cx="16" cy="13.500" r="2.400" fill="#fff"/><circle cx="23" cy="13.500" r="2.400" fill="#fff"/></svg><style>
.tree{position:absolute;background:#fff;border:1px solid #bdbdbd}
.clip{position:absolute;overflow:hidden}
.clip>*{position:absolute}
.arr-r{position:absolute;width:0;height:0;border-top:8px solid transparent;border-bottom:8px solid transparent;border-left:9.500px solid #4c4c4c}
.arr-d{position:absolute;width:0;height:0;border-left:8px solid transparent;border-right:8px solid transparent;border-top:9.500px solid #4c4c4c}
.cb{position:absolute;width:27px;height:27px;background:#fff;border:1.500px solid #b8b8b8;border-radius:2px}
.clk{position:absolute;width:33px;height:32px;background:#fff;border:1px solid #e2e2e2;border-radius:5px}
.vsb{position:absolute;width:28px;background:#fafafa;border-left:1px solid #d9d9d9}
.vsb .thumb{position:absolute;left:1px;width:26px;background:#e4e4e4;border-top:1px solid #c9c9c9;border-bottom:1px solid #c9c9c9}
.sbu,.sbd{position:absolute;left:0;width:28px;height:28px;background:#fafafa}
.sbu{top:0;border-bottom:1px solid #c9c9c9}.sbd{bottom:0;border-top:1px solid #c9c9c9}
.sbu:after{content:"";position:absolute;left:6px;top:8px;border-left:8px solid transparent;border-right:8px solid transparent;border-bottom:9px solid #4c4c4c}
.sbd:after{content:"";position:absolute;left:6px;top:10px;border-left:8px solid transparent;border-right:8px solid transparent;border-top:9px solid #4c4c4c}
.hsb{position:absolute;height:26px;background:#fafafa;border-top:1px solid #d9d9d9}
.hsb .thumbh{position:absolute;top:1px;height:24px;background:#e4e4e4;border-left:1px solid #c9c9c9;border-right:1px solid #c9c9c9}
.sbl,.sbr{position:absolute;top:0;width:26px;height:26px}
.sbl{left:0;border-right:1px solid #c9c9c9}.sbr{right:0;border-left:1px solid #c9c9c9}
.sbl:after{content:"";position:absolute;left:7px;top:5px;border-top:8px solid transparent;border-bottom:8px solid transparent;border-right:9px solid #4c4c4c}
.sbr:after{content:"";position:absolute;left:9px;top:5px;border-top:8px solid transparent;border-bottom:8px solid transparent;border-left:9px solid #4c4c4c}
.sbcorner{position:absolute;width:28px;height:26px;background:#f2f2f2;border-left:1px solid #d9d9d9;border-top:1px solid #d9d9d9}
.splitdots{position:absolute;width:32px;height:3px;background-image:radial-gradient(circle,#b0b0b0 1px,transparent 1.400px);background-size:5px 3px}
.splitdotsv{position:absolute;width:3px;height:32px;background-image:radial-gradient(circle,#b0b0b0 1px,transparent 1.400px);background-size:3px 5px}
.msgbar{position:absolute;left:600px;top:350px;width:2280px;height:72px;background:#e5f5fd;border:2px solid #b3d0e8;border-right:none}
.inp{position:absolute;background:#fff;border:2px solid #c2c2c2;border-radius:4px;box-shadow:inset 0 2px 2px rgba(0,0,0,0.06)}
.du{position:absolute;margin-left:9px;border-left:8px solid transparent;border-right:8px solid transparent;border-bottom:9px solid #555;width:0;height:0}
.ddn{position:absolute;margin-left:9px;border-left:8px solid transparent;border-right:8px solid transparent;border-top:9px solid #555;width:0;height:0}
</style><svg class="mapsvg" width="2278" height="1168" viewBox="0 0 2278 1168" style="position:absolute;left:601px;top:422px;background:#fff;overflow:hidden">
<g fill="#eeebe0" stroke="#a9a89c" stroke-width="1.45" stroke-linejoin="round">
<path d="M2299.0,169.0 L2293.8,164.5 L2288.0,166.4 L2282.5,167.8 L2278.6,167.8 L2272.8,168.0 L2269.0,167.3 L2263.0,165.5 L2256.6,164.1 L2252.6,163.1 L2246.4,161.2 L2239.4,160.4 L2232.2,159.0 L2227.6,158.5 L2221.2,157.3 L2214.4,156.8 L2205.5,156.5 L2199.0,157.5 L2191.8,159.8 L2188.7,161.1 L2182.7,163.7 L2181.5,164.6 L2188.0,162.6 L2190.4,160.2 L2189.1,157.0 L2184.3,154.9 L2178.4,154.1 L2175.2,153.6 L2173.4,151.7 L2178.6,148.8 L2175.1,146.3 L2170.1,144.8 L2161.9,143.7 L2153.6,144.1 L2148.4,147.6 L2141.8,148.6 L2137.2,148.6 L2132.7,147.4 L2124.3,146.5 L2121.4,147.0 L2115.2,145.8 L2107.4,145.2 L2101.1,144.3 L2096.0,144.2 L2092.0,143.3 L2084.1,141.8 L2080.3,139.2 L2076.0,138.0 L2081.0,138.1 L2087.1,138.7 L2092.9,138.9 L2097.4,139.2 L2101.7,136.7 L2108.5,138.0 L2113.0,137.4 L2118.6,135.7 L2121.7,134.2 L2126.0,131.3 L2131.0,131.8 L2124.0,131.5 L2122.5,127.6 L2116.0,126.8 L2110.3,124.6 L2105.0,125.5 L2101.0,123.0 L2093.3,123.4 L2087.5,120.6 L2083.5,120.5 L2078.3,123.4 L2072.8,123.1 L2069.8,124.2 L2066.0,128.0 L2068.9,122.7 L2071.0,118.0 L2064.3,117.8 L2062.0,114.9 L2056.0,115.0 L2050.6,117.4 L2045.4,117.3 L2041.0,118.0 L2037.5,122.7 L2033.5,128.0 L2030.4,130.9 L2025.2,130.6 L2023.8,128.9 L2024.9,124.0 L2026.0,119.2 L2020.0,119.7 L2014.5,119.9 L2011.7,119.8 L2006.0,120.5 L2009.4,118.6 L2014.8,116.8 L2010.4,116.9 L2005.2,114.3 L2002.5,114.8 L1999.4,119.1 L1993.5,119.3 L1991.0,123.0 L1990.6,129.1 L1988.5,134.9 L1986.0,138.0 L1992.1,135.4 L1996.0,133.0 L1999.7,129.5 L2002.1,127.1 L2004.8,124.3 L2004.3,122.2 L1999.1,119.8 L1995.0,120.9 L1989.0,117.6 L1984.1,117.2 L1978.5,115.5 L1973.3,114.2 L1966.2,118.2 L1961.0,118.0 L1953.4,121.0 L1948.5,121.8 L1941.8,122.8 L1937.0,123.0 L1933.5,123.0 L1927.4,123.3 L1925.0,125.6 L1920.1,127.5 L1913.5,126.8 L1909.0,128.5 L1902.0,133.5 L1896.0,135.5 L1890.9,137.1 L1883.7,137.3 L1878.5,136.8 L1870.5,137.1 L1866.0,134.8 L1861.0,134.2 L1856.0,135.0 L1849.1,134.2 L1846.0,136.8 L1841.3,137.8 L1835.6,141.4 L1832.7,143.2 L1828.5,145.5 L1822.5,147.3 L1817.9,148.9 L1812.7,151.1 L1809.3,152.1 L1803.9,153.1 L1799.8,156.8 L1793.5,156.8 L1790.4,159.9 L1785.4,165.2 L1783.5,168.0 L1778.3,165.3 L1772.8,165.5 L1771.6,163.7 L1772.9,159.8 L1771.9,158.8 L1766.9,161.5 L1760.9,161.9 L1757.0,162.0 L1751.0,165.5 L1745.9,166.8 L1738.3,168.1 L1733.5,170.5 L1733.1,176.3 L1731.0,181.8 L1727.0,182.1 L1721.2,184.1 L1716.2,185.4 L1711.0,184.2 L1705.3,186.1 L1702.7,188.3 L1700.0,193.2 L1694.8,194.2 L1700.2,192.5 L1702.9,193.0 L1709.0,191.8 L1714.1,190.6 L1718.3,190.1 L1722.2,189.6 L1728.7,188.1 L1733.7,187.7 L1738.3,186.6 L1743.7,185.6 L1748.7,185.4 L1753.5,185.0 L1757.7,184.5 L1763.4,184.0 L1766.8,183.8 L1773.2,182.2 L1780.0,178.0 L1775.5,179.0 L1767.5,181.8 L1763.8,183.9 L1757.5,185.5 L1750.3,187.5 L1745.0,190.5 L1741.7,193.2 L1740.0,200.5 L1736.6,203.2 L1730.6,208.9 L1725.0,211.8 L1722.0,215.5 L1714.7,215.6 L1710.0,218.0 L1706.1,222.0 L1702.6,221.7 L1698.7,225.5 L1695.7,227.5 L1691.8,229.1 L1688.8,230.9 L1685.0,234.2 L1686.4,238.4 L1687.5,245.5 L1682.4,248.7 L1680.0,255.5 L1677.1,258.4 L1669.1,257.6 L1665.0,260.5 L1659.7,260.3 L1656.5,260.8 L1651.5,262.4 L1647.5,263.0 L1652.8,265.3 L1657.5,268.0 L1650.7,269.5 L1644.9,271.7 L1640.0,275.5 L1636.2,276.9 L1632.4,280.6 L1629.7,282.4 L1625.0,284.2 L1622.1,289.4 L1615.0,293.0 L1610.8,294.6 L1605.6,292.2 L1601.1,292.6 L1593.2,292.7 L1590.0,291.8 L1585.2,294.6 L1581.7,299.2 L1577.5,300.5 L1572.9,304.1 L1566.7,303.6 L1563.6,304.6 L1559.9,308.2 L1555.0,310.5 L1548.3,312.7 L1547.1,316.3 L1540.0,319.2 L1535.2,320.9 L1526.8,323.2 L1522.5,323.0 L1517.8,324.4 L1513.8,328.7 L1508.4,330.7 L1505.0,335.5 L1505.0,340.0 L1503.1,345.1 L1501.5,352.9 L1501.4,355.6 L1500.0,362.0 L1504.0,364.5 L1508.6,368.9 L1510.4,371.9 L1511.5,377.0 L1512.4,382.0 L1510.2,387.0 L1512.0,394.5 L1514.0,399.5 L1517.8,404.5 L1521.5,409.5 L1526.7,411.4 L1529.0,417.0 L1536.2,420.3 L1541.5,423.4 L1546.5,425.8 L1550.2,426.1 L1557.6,428.6 L1559.9,427.1 L1564.9,428.0 L1570.7,427.4 L1575.3,426.0 L1579.8,425.4 L1587.6,423.0 L1595.4,419.8 L1601.4,416.5 L1606.6,412.5 L1612.0,409.2 L1618.5,406.0 L1625.1,403.6 L1632.9,401.6 L1637.1,399.2 L1638.4,396.0 L1638.1,393.0 L1636.2,389.8 L1637.1,387.0 L1640.9,384.5 L1643.3,386.5 L1644.7,393.7 L1646.8,398.2 L1651.5,402.0 L1655.2,403.2 L1656.9,408.2 L1658.1,412.8 L1660.8,417.9 L1664.7,422.4 L1668.0,427.5 L1671.2,434.0 L1675.4,440.0 L1681.3,446.5 L1687.3,452.5 L1691.1,456.3 L1694.4,459.0 L1696.2,463.8 L1693.0,467.7 L1692.7,471.9 L1695.3,477.1 L1697.1,481.9 L1698.4,487.1 L1701.4,490.1 L1706.6,491.4 L1713.8,491.7 L1717.7,490.9 L1724.2,491.0 L1729.6,488.6 L1730.9,484.1 L1733.9,480.5 L1739.1,477.2 L1746.3,475.1 L1750.9,474.4 L1756.7,473.9 L1763.9,472.4 L1769.1,470.4 L1773.3,467.1 L1777.2,461.9 L1780.2,456.5 L1782.8,450.0 L1784.0,444.0 L1784.0,437.5 L1785.2,431.5 L1787.8,425.0 L1787.5,419.9 L1784.2,415.4 L1786.1,412.6 L1793.2,411.4 L1800.1,409.2 L1807.9,406.0 L1815.1,402.1 L1819.0,399.1 L1822.9,396.9 L1830.1,393.0 L1836.2,390.0 L1841.5,388.2 L1844.0,383.2 L1839.5,378.8 L1836.4,375.6 L1829.8,371.5 L1825.7,369.9 L1820.7,367.5 L1812.9,364.9 L1808.5,363.5 L1801.5,362.0 L1799.8,362.0 L1798.1,355.9 L1797.8,350.4 L1798.4,345.0 L1801.1,341.0 L1803.8,336.5 L1807.0,330.7 L1807.6,326.5 L1805.7,323.2 L1808.1,320.0 L1815.2,316.0 L1821.5,312.8 L1828.0,309.5 L1832.8,306.5 L1836.4,305.3 L1843.1,302.0 L1848.1,299.4 L1853.9,296.6 L1858.9,295.0 L1865.5,292.0 L1870.6,291.0 L1876.5,288.7 L1879.6,287.1 L1883.4,284.5 L1887.4,282.6 L1894.3,278.7 L1901.4,274.8 L1902.7,270.9 L1898.1,266.4 L1898.1,262.5 L1902.7,258.5 L1903.2,255.9 L1900.0,253.9 L1901.5,251.2 L1908.0,247.3 L1913.4,244.6 L1918.6,242.6 L1924.0,241.5 L1930.5,240.8 L1938.3,240.8 L1941.8,240.6 L1948.7,241.5 L1954.9,241.9 L1959.5,241.8 L1967.4,241.5 L1972.5,241.8 L1977.4,242.6 L1982.1,243.2 L1989.9,246.5 L1994.4,251.0 L1996.3,257.5 L1996.1,261.7 L1993.4,264.3 L1988.9,266.1 L1981.8,267.4 L1974.9,270.1 L1971.2,272.2 L1967.1,274.6 L1959.3,278.9 L1954.0,281.6 L1950.2,283.4 L1944.8,286.3 L1941.8,287.6 L1937.9,290.1 L1932.7,292.1 L1925.5,296.0 L1919.0,300.0 L1913.0,302.6 L1906.5,304.6 L1901.7,307.0 L1897.8,310.2 L1895.4,313.9 L1894.1,318.4 L1894.7,322.3 L1897.3,326.2 L1899.1,331.0 L1900.4,337.5 L1902.5,341.4 L1905.8,343.4 L1905.8,346.4 L1902.5,350.9 L1900.4,355.2 L1898.5,362.0 L1898.5,364.5 L1903.4,366.5 L1908.0,368.3 L1914.0,370.7 L1920.5,373.3 L1927.7,374.2 L1933.0,373.9 L1936.8,373.5 L1939.8,376.0 L1937.2,381.8 L1941.4,383.6 L1946.6,382.7 L1953.1,381.6 L1958.8,381.0 L1963.3,380.1 L1969.6,379.3 L1973.7,378.9 L1978.8,377.8 L1983.9,377.0 L1988.5,376.3 L1995.6,374.5 L2001.3,373.5 L2006.9,372.1 L2013.5,370.4 L2020.1,369.4 L2026.1,368.4 L2030.8,367.6 L2036.6,367.4 L2041.2,366.4 L2046.2,365.1 L2051.4,364.9 L2055.9,363.7 L2061.6,363.9 L2068.5,362.0 L2071.0,365.8 L2077.4,368.8 L2082.4,372.4 L2085.3,374.1 L2091.7,376.2 L2096.7,377.7 L2100.3,378.8 L2105.3,380.3 L2106.8,381.7 L2103.1,381.4 L2097.7,381.0 L2090.5,381.4 L2084.0,382.6 L2078.0,383.9 L2071.5,385.1 L2066.1,386.0 L2060.9,386.7 L2059.1,388.8 L2060.4,392.7 L2055.0,394.2 L2048.3,394.6 L2042.0,393.5 L2034.5,393.1 L2030.6,392.4 L2023.4,391.6 L2018.9,390.4 L2013.0,390.5 L2009.3,390.1 L2003.4,390.6 L2000.2,391.4 L1997.0,392.0 L1991.2,392.6 L1986.2,394.0 L1980.8,393.9 L1973.8,394.8 L1970.1,395.7 L1962.4,397.1 L1956.9,398.3 L1951.3,401.6 L1951.9,406.1 L1952.6,410.0 L1953.2,414.0 L1955.9,417.2 L1961.1,420.5 L1965.9,421.4 L1971.1,420.1 L1973.2,421.9 L1972.6,427.1 L1972.6,433.7 L1972.4,439.7 L1973.2,442.8 L1969.9,448.2 L1962.1,450.8 L1955.5,451.4 L1949.0,450.1 L1944.2,447.4 L1940.3,442.9 L1936.1,439.4 L1930.9,436.4 L1924.3,435.8 L1921.1,436.4 L1915.2,437.5 L1908.6,439.8 L1903.4,443.0 L1900.4,446.6 L1899.1,451.1 L1897.0,454.1 L1893.8,456.1 L1891.9,460.6 L1891.3,468.4 L1891.6,474.7 L1892.9,480.5 L1892.6,485.4 L1890.7,489.9 L1887.7,493.8 L1883.1,497.7 L1877.4,500.4 L1869.6,502.4 L1865.4,504.8 L1864.1,508.0 L1860.5,510.7 L1854.0,513.3 L1848.0,514.5 L1841.5,514.5 L1837.0,512.7 L1833.8,508.8 L1829.6,506.4 L1823.7,505.1 L1817.4,504.8 L1809.6,505.5 L1803.7,506.2 L1800.6,507.0 L1793.3,508.0 L1788.9,509.5 L1785.2,510.7 L1779.3,512.2 L1773.9,514.5 L1770.2,515.5 L1764.6,517.9 L1760.2,518.6 L1755.0,520.5 L1749.8,522.0 L1744.3,522.9 L1736.7,525.1 L1731.0,527.0 L1734.0,525.8 L1728.9,524.5 L1722.6,522.9 L1718.4,520.2 L1717.1,516.3 L1715.3,513.0 L1712.7,509.8 L1709.1,509.1 L1703.9,511.1 L1698.5,512.3 L1692.0,513.0 L1685.4,514.5 L1677.6,517.0 L1671.0,519.8 L1664.5,523.0 L1658.5,523.9 L1652.0,522.6 L1649.6,519.6 L1650.9,514.4 L1648.5,512.6 L1642.0,513.9 L1636.6,513.9 L1631.4,512.6 L1627.8,510.3 L1625.2,506.7 L1621.6,504.0 L1616.4,501.8 L1615.2,499.2 L1617.8,496.0 L1619.6,492.4 L1620.9,487.9 L1623.9,484.5 L1629.1,482.0 L1632.7,478.6 L1635.3,474.1 L1638.9,471.4 L1646.5,469.5 L1649.0,464.5 L1643.2,464.0 L1635.7,462.6 L1632.7,459.9 L1635.3,455.4 L1637.4,451.1 L1639.3,446.6 L1640.7,442.2 L1641.6,437.3 L1640.1,435.5 L1635.9,436.5 L1630.4,438.5 L1622.6,441.8 L1614.2,444.5 L1610.0,445.1 L1603.8,447.0 L1596.6,449.1 L1591.4,451.1 L1587.7,454.4 L1584.8,459.6 L1583.6,467.4 L1584.4,474.1 L1583.9,479.1 L1585.8,486.3 L1589.7,490.2 L1590.9,494.4 L1589.6,499.6 L1590.2,503.8 L1592.8,507.7 L1595.2,511.3 L1597.8,515.2 L1599.6,518.8 L1600.9,522.7 L1599.7,525.4 L1594.0,528.2 L1594.0,534.5 L1588.3,536.4 L1585.9,535.3 L1584.6,531.7 L1578.3,530.5 L1572.2,530.3 L1565.9,531.5 L1558.8,533.2 L1555.5,535.8 L1548.0,537.0 L1541.3,536.8 L1535.0,537.0 L1528.6,536.9 L1524.2,537.9 L1517.5,539.2 L1513.8,539.9 L1507.8,542.2 L1505.2,545.5 L1502.2,550.6 L1498.3,558.4 L1497.0,561.0 L1493.5,566.2 L1490.3,571.0 L1487.0,575.3 L1480.4,581.3 L1472.6,585.2 L1466.9,587.2 L1464.2,588.7 L1459.0,590.5 L1453.8,592.3 L1450.0,593.5 L1444.2,595.0 L1440.6,596.5 L1433.8,597.2 L1428.4,600.6 L1427.1,605.8 L1427.1,609.8 L1429.0,614.5 L1424.0,617.0 L1416.9,618.8 L1412.6,619.8 L1405.4,622.0 L1398.7,624.8 L1394.0,625.8 L1392.8,630.8 L1399.0,631.5 L1393.3,632.8 L1388.5,634.0 L1382.0,635.7 L1374.8,636.0 L1369.5,635.3 L1365.7,635.0 L1360.9,632.7 L1359.6,628.8 L1355.4,627.3 L1347.6,628.0 L1345.2,629.5 L1347.8,632.0 L1349.6,635.3 L1350.9,639.9 L1352.4,644.3 L1354.3,649.2 L1351.3,651.0 L1342.9,650.0 L1335.4,650.4 L1327.6,652.3 L1321.6,651.8 L1316.4,648.5 L1311.6,647.3 L1306.4,648.0 L1300.4,649.2 L1292.6,651.1 L1285.7,653.2 L1278.5,655.8 L1275.5,659.1 L1276.2,663.7 L1280.7,667.2 L1285.5,669.7 L1289.8,670.5 L1293.6,671.6 L1298.8,673.2 L1303.7,674.2 L1309.2,675.8 L1317.0,678.2 L1323.5,680.8 L1330.7,682.9 L1335.4,683.3 L1339.8,684.8 L1342.2,687.2 L1338.3,690.5 L1338.9,693.8 L1344.1,697.7 L1349.5,701.9 L1356.0,707.1 L1360.2,711.9 L1362.8,717.1 L1363.4,721.1 L1361.5,726.0 L1361.5,726.0 L1360.6,729.8 L1360.5,734.6 L1359.6,741.2 L1358.9,746.0 L1358.4,750.2 L1358.0,756.5 L1357.1,759.3 L1355.3,766.2 L1353.8,770.0 L1351.5,774.8 L1346.5,777.8 L1340.3,778.0 L1337.0,778.9 L1330.4,778.8 L1322.6,777.7 L1314.8,776.7 L1309.0,776.2 L1305.7,775.3 L1297.3,775.5 L1293.6,775.7 L1288.2,777.2 L1284.9,776.7 L1279.2,777.2 L1275.3,776.6 L1268.8,775.5 L1263.1,774.4 L1259.8,774.2 L1255.4,773.1 L1250.7,772.8 L1244.2,771.9 L1240.5,772.0 L1234.3,771.6 L1230.3,772.2 L1224.5,770.5 L1219.0,770.9 L1215.0,770.4 L1209.5,770.0 L1205.1,770.2 L1200.6,770.5 L1193.8,772.7 L1188.0,775.5 L1185.4,776.7 L1183.0,779.4 L1178.2,780.3 L1173.3,783.8 L1170.7,792.0 L1173.3,797.7 L1174.5,800.7 L1177.3,805.2 L1178.2,810.4 L1180.0,816.3 L1180.3,822.7 L1180.0,828.8 L1180.1,833.3 L1178.4,840.3 L1177.2,844.7 L1175.8,849.5 L1175.0,852.8 L1174.0,858.8 L1171.2,864.1 L1171.1,866.2 L1170.2,870.8 L1167.9,876.8 L1167.2,881.4 L1167.6,886.1 L1167.2,893.0 L1168.9,897.0 L1169.3,900.4 L1170.7,907.7 L1172.2,910.2 L1173.4,916.6 L1174.1,919.4 L1176.0,924.5 L1181.4,927.4 L1183.5,929.5 L1187.9,929.1 L1192.8,928.5 L1198.2,927.3 L1201.5,927.1 L1207.5,926.3 L1214.2,926.4 L1219.1,927.7 L1223.4,929.2 L1227.6,931.2 L1231.9,932.9 L1235.1,935.2 L1239.7,938.5 L1242.4,943.7 L1247.0,949.5 L1246.5,951.0 L1246.5,958.5 L1247.0,959.0 L1246.1,962.1 L1243.1,966.2 L1242.1,970.8 L1239.2,977.3 L1237.1,981.6 L1236.4,983.3 L1233.8,987.3 L1232.9,992.3 L1230.3,996.6 L1225.9,1001.9 L1222.3,1004.4 L1218.2,1006.6 L1214.8,1007.1 L1210.9,1009.0 L1204.0,1011.7 L1200.9,1012.8 L1198.2,1014.0 L1192.7,1016.6 L1188.6,1018.5 L1182.9,1023.1 L1180.0,1026.0 L1175.4,1029.6 L1172.2,1033.8 L1168.4,1040.4 L1165.3,1043.4 L1163.1,1047.0 L1160.7,1052.4 L1158.7,1056.6 L1157.0,1061.6 L1156.4,1068.0 L1157.2,1072.0 L1157.0,1078.3 L1157.7,1081.7 L1157.8,1087.0 L1158.0,1091.9 L1157.6,1095.9 L1155.5,1101.9 L1152.5,1106.2 L1149.3,1110.6 L1144.8,1114.3 L1141.3,1117.8 L1136.3,1120.8 L1133.8,1122.3 L1128.5,1125.7 L1125.8,1128.1 L1120.4,1130.6 L1115.0,1133.7 L1109.7,1136.0 L1104.9,1137.7 L1101.1,1139.7 L1097.1,1141.2 L1092.3,1142.7 L1086.3,1145.3 L1081.8,1147.0 L1080.5,1146.0 L1078.7,1148.7 L1074.3,1155.4 L1074.1,1157.5 L1071.0,1162.8 L1066.8,1170.4 L1064.2,1175.6 L1059.6,1182.8 L1054.7,1189.2 L1052.4,1193.2 L1055.0,1198.0 L1060.1,1197.6 L1064.1,1197.9 L1066.8,1198.0 L1072.5,1198.6 L1079.2,1198.4 L1080.6,1197.6 L1085.5,1198.7 L1091.2,1198.3 L1095.7,1197.9 L1100.9,1198.0 L1102.9,1198.5 L1108.2,1197.8 L1113.0,1197.5 L1118.8,1197.8 L1122.2,1198.0 L1126.8,1197.5 L1132.7,1197.8 L1137.3,1198.2 L1139.9,1198.2 L1144.3,1197.4 L1147.9,1198.0 L1155.4,1198.1 L1157.8,1198.7 L1163.4,1197.5 L1166.2,1198.1 L1173.5,1197.4 L1178.2,1197.5 L1181.1,1197.6 L1183.9,1198.7 L1190.2,1198.1 L1193.1,1198.1 L1197.6,1197.5 L1202.2,1198.0 L1209.4,1197.7 L1214.3,1198.0 L1216.1,1198.1 L1221.6,1197.5 L1225.3,1198.5 L1231.1,1198.7 L1234.3,1198.1 L1240.0,1198.2 L1243.3,1198.0 L1247.1,1198.0 L1254.1,1197.9 L1259.3,1198.5 L1262.4,1198.2 L1264.8,1197.4 L1270.9,1197.9 L1275.4,1197.6 L1280.0,1197.6 L1285.8,1197.8 L1288.6,1198.4 L1292.6,1197.3 L1299.0,1197.8 L1301.2,1198.1 L1308.8,1198.0 L1311.2,1197.8 L1316.7,1197.7 L1318.9,1198.0 L1324.8,1198.3 L1330.3,1197.8 L1333.1,1197.8 L1338.4,1198.6 L1341.5,1198.4 L1347.7,1197.6 L1353.2,1198.0 L1356.1,1198.0 L1361.0,1197.4 L1366.4,1198.2 L1370.7,1198.1 L1374.7,1197.8 L1377.6,1198.4 L1384.9,1198.2 L1388.2,1198.3 L1391.0,1198.4 L1396.5,1198.0 L1403.1,1197.8 L1407.6,1197.5 L1410.7,1198.5 L1414.5,1198.0 L1419.2,1197.9 L1424.3,1197.8 L1429.0,1198.1 L1432.0,1197.5 L1438.5,1197.9 L1440.8,1198.0 L1445.3,1197.5 L1453.0,1197.3 L1454.7,1198.0 L1460.7,1198.0 L1464.5,1198.0 L1470.8,1197.3 L1473.5,1197.5 L1479.0,1198.3 L1482.9,1198.7 L1486.7,1197.3 L1491.2,1197.5 L1496.3,1197.8 L1499.9,1197.9 L1506.9,1197.4 L1509.0,1197.9 L1515.0,1198.7 L1517.8,1198.0 L1522.6,1197.8 L1529.3,1198.0 L1530.8,1198.1 L1537.8,1197.5 L1542.8,1197.5 L1546.2,1198.6 L1551.8,1198.7 L1556.2,1198.7 L1559.8,1198.3 L1563.2,1198.6 L1569.1,1197.5 L1573.4,1197.6 L1578.2,1198.3 L1581.3,1197.4 L1588.0,1198.3 L1591.1,1198.0 L1594.0,1197.8 L1600.3,1198.5 L1602.7,1198.1 L1607.5,1198.2 L1611.4,1198.3 L1619.3,1198.8 L1624.0,1197.9 L1625.9,1198.2 L1632.6,1197.8 L1636.6,1197.7 L1639.6,1197.5 L1643.0,1198.2 L1649.2,1197.5 L1655.2,1198.0 L1658.4,1197.6 L1663.3,1197.4 L1668.5,1197.5 L1670.7,1198.0 L1674.6,1198.5 L1680.6,1197.7 L1684.6,1198.1 L1688.3,1198.7 L1694.3,1197.8 L1697.4,1198.6 L1704.9,1197.9 L1707.8,1198.0 L1711.5,1197.9 L1717.8,1198.5 L1720.1,1198.0 L1725.4,1198.4 L1728.5,1198.3 L1736.5,1197.8 L1739.2,1197.9 L1743.7,1198.7 L1749.7,1197.3 L1753.0,1198.0 L1757.6,1197.6 L1761.2,1197.7 L1767.5,1198.8 L1771.9,1197.4 L1775.9,1198.7 L1778.4,1198.0 L1785.1,1197.7 L1787.6,1198.4 L1794.6,1197.5 L1798.3,1197.9 L1801.2,1197.3 L1806.4,1198.1 L1809.9,1198.0 L1814.0,1197.3 L1819.4,1198.6 L1826.2,1198.2 L1828.3,1198.2 L1834.7,1198.0 L1839.4,1198.1 L1844.5,1198.1 L1845.5,1198.2 L1851.7,1197.7 L1856.1,1197.4 L1860.7,1198.1 L1866.9,1197.3 L1869.9,1197.6 L1874.8,1197.5 L1879.1,1197.6 L1883.0,1198.5 L1888.7,1197.6 L1892.1,1197.6 L1897.2,1197.9 L1901.8,1198.6 L1905.5,1198.4 L1909.9,1198.4 L1913.7,1198.5 L1918.3,1198.4 L1925.6,1197.7 L1927.1,1198.8 L1934.6,1197.4 L1938.7,1197.4 L1942.7,1197.8 L1946.6,1198.6 L1951.1,1198.5 L1953.7,1198.4 L1961.1,1197.8 L1964.6,1197.7 L1968.9,1198.5 L1971.9,1197.7 L1976.7,1198.0 L1982.8,1197.6 L1987.4,1198.1 L1990.3,1198.0 L1997.0,1198.3 L2001.1,1198.2 L2003.1,1198.1 L2010.1,1197.2 L2015.4,1197.8 L2019.3,1197.8 L2024.2,1198.1 L2028.1,1197.8 L2033.2,1197.6 L2035.7,1197.9 L2041.5,1198.1 L2047.1,1198.0 L2050.7,1198.3 L2053.1,1197.4 L2060.4,1198.0 L2061.8,1197.8 L2068.3,1198.0 L2071.1,1198.7 L2076.5,1198.0 L2082.3,1197.5 L2087.3,1198.0 L2090.3,1197.9 L2096.2,1198.0 L2097.7,1198.0 L2102.5,1198.3 L2107.4,1198.6 L2111.4,1198.6 L2118.7,1197.8 L2122.4,1197.9 L2125.1,1198.7 L2132.5,1197.5 L2134.9,1198.6 L2141.0,1197.6 L2145.0,1198.2 L2147.5,1198.2 L2152.8,1198.2 L2157.6,1197.6 L2160.9,1198.0 L2167.4,1198.0 L2173.1,1198.1 L2177.3,1198.3 L2181.4,1197.3 L2184.1,1198.7 L2191.0,1198.6 L2195.0,1198.1 L2198.1,1198.7 L2203.0,1198.0 L2207.4,1197.9 L2210.3,1197.7 L2218.0,1198.1 L2221.8,1198.0 L2223.8,1197.9 L2229.3,1197.3 L2233.7,1197.4 L2238.2,1198.0 L2242.5,1198.0 L2249.1,1197.9 L2253.7,1197.7 L2257.1,1198.7 L2262.0,1198.6 L2264.2,1197.9 L2271.6,1197.4 L2274.9,1197.9 L2278.7,1197.9 L2282.9,1197.8 L2289.6,1198.1 L2293.0,1198.0 L2299.0,1192.0 L2298.3,1185.8 L2299.2,1184.0 L2298.5,1179.9 L2299.6,1173.9 L2298.9,1169.2 L2299.6,1165.5 L2299.2,1160.4 L2298.6,1157.1 L2298.8,1151.1 L2298.3,1145.4 L2298.9,1144.2 L2299.5,1136.6 L2299.1,1132.0 L2299.3,1128.7 L2298.8,1124.2 L2298.8,1118.7 L2299.0,1115.9 L2299.0,1111.6 L2298.9,1105.3 L2299.6,1100.8 L2299.3,1098.9 L2299.5,1093.6 L2299.7,1089.9 L2298.6,1085.1 L2298.8,1080.3 L2299.3,1074.2 L2299.1,1071.8 L2299.2,1065.7 L2299.6,1059.9 L2299.2,1055.4 L2298.7,1053.7 L2299.0,1048.6 L2299.2,1044.6 L2299.0,1037.2 L2299.0,1035.2 L2299.0,1031.0 L2298.9,1024.4 L2299.1,1021.5 L2299.1,1017.9 L2298.6,1013.2 L2299.0,1007.0 L2299.3,1002.7 L2299.7,997.6 L2299.6,994.9 L2298.3,989.2 L2299.2,984.0 L2299.2,980.7 L2299.3,974.7 L2298.7,971.1 L2298.5,968.2 L2299.8,961.9 L2298.4,959.4 L2299.3,952.5 L2299.0,947.0 L2298.3,942.7 L2298.8,940.7 L2299.5,933.9 L2298.8,931.0 L2298.9,924.4 L2299.0,920.5 L2298.3,918.5 L2299.1,911.1 L2298.2,909.0 L2299.3,903.5 L2298.4,898.6 L2299.2,895.1 L2299.0,891.6 L2298.3,886.9 L2298.3,879.7 L2299.2,878.0 L2299.2,872.2 L2299.0,868.8 L2298.9,862.0 L2298.7,859.2 L2299.0,853.9 L2298.7,849.9 L2298.8,846.2 L2299.0,839.7 L2299.0,836.9 L2298.4,832.2 L2298.7,827.8 L2299.2,823.9 L2298.5,818.5 L2298.3,814.6 L2298.3,809.0 L2299.5,805.7 L2298.9,800.4 L2299.6,794.6 L2298.7,791.3 L2298.4,788.2 L2298.6,780.9 L2299.1,778.1 L2299.0,774.1 L2299.6,769.4 L2298.9,762.9 L2298.5,758.0 L2298.4,754.0 L2299.5,751.9 L2298.7,746.6 L2298.5,740.3 L2299.3,738.2 L2299.0,733.1 L2299.0,728.1 L2298.9,724.4 L2298.9,717.7 L2298.7,714.7 L2299.3,709.8 L2298.5,705.2 L2299.4,702.1 L2299.5,695.2 L2299.2,692.6 L2298.9,687.3 L2298.3,682.3 L2298.9,678.7 L2299.7,674.1 L2299.0,669.9 L2299.7,663.0 L2298.9,659.6 L2299.4,654.4 L2298.8,651.4 L2299.1,645.0 L2299.4,641.9 L2298.9,638.7 L2299.6,631.4 L2299.0,627.9 L2299.5,623.8 L2299.0,619.3 L2299.7,616.6 L2299.5,609.0 L2299.0,607.7 L2298.8,603.3 L2299.3,597.1 L2299.0,590.9 L2299.0,588.9 L2299.0,582.1 L2298.9,578.8 L2299.1,574.9 L2298.9,568.8 L2298.6,566.5 L2299.0,561.8 L2298.4,557.5 L2299.3,551.1 L2298.4,547.5 L2299.0,541.6 L2298.3,538.9 L2299.0,533.0 L2299.5,528.5 L2299.0,525.4 L2298.6,521.6 L2298.3,515.2 L2299.0,512.7 L2299.7,505.3 L2298.8,500.8 L2298.8,498.1 L2299.7,494.7 L2299.0,488.8 L2299.3,483.3 L2298.9,479.6 L2299.6,474.2 L2299.0,471.7 L2299.4,467.3 L2298.8,461.5 L2298.7,458.4 L2298.3,453.5 L2299.0,448.6 L2298.3,444.7 L2299.5,438.8 L2299.0,434.9 L2298.4,430.5 L2298.7,425.2 L2299.0,422.0 L2298.9,415.4 L2298.5,411.5 L2299.7,408.2 L2298.7,404.8 L2298.3,399.2 L2299.6,392.9 L2298.9,391.0 L2299.0,386.1 L2298.7,379.0 L2299.5,375.7 L2299.3,373.3 L2298.5,367.1 L2298.7,362.1 L2299.0,359.9 L2299.5,353.0 L2298.5,349.0 L2299.6,346.5 L2299.2,340.1 L2299.1,336.9 L2299.5,330.4 L2298.4,327.1 L2299.0,320.5 L2299.0,317.1 L2299.4,313.7 L2299.3,310.0 L2299.1,304.5 L2299.1,298.3 L2298.8,294.1 L2299.0,289.7 L2299.0,285.0 L2299.0,281.5 L2299.6,277.1 L2298.6,272.3 L2299.2,266.6 L2298.9,264.3 L2299.2,258.1 L2298.8,255.1 L2299.2,248.3 L2298.3,246.4 L2299.7,239.7 L2299.3,236.6 L2299.5,232.7 L2299.5,228.4 L2299.7,223.0 L2298.7,220.2 L2299.5,214.9 L2298.4,210.0 L2299.6,203.8 L2298.6,200.1 L2298.9,195.2 L2299.3,191.8 L2298.7,186.1 L2298.3,184.1 L2299.1,178.2 L2299.1,173.0Z M-35.0,-22.0 L-36.7,-17.8 L-31.8,-14.0 L-29.5,-10.5 L-27.0,-7.8 L-24.9,-6.1 L-20.2,-1.9 L-17.8,0.1 L-15.1,2.9 L-10.6,7.4 L-8.2,9.5 L-3.9,14.4 L-1.0,16.8 L4.2,18.4 L8.2,22.3 L14.0,21.8 L18.6,24.1 L23.5,24.8 L27.8,29.1 L31.5,30.5 L36.6,29.9 L43.1,32.0 L46.5,35.5 L47.3,39.0 L48.7,47.2 L52.8,49.2 L56.6,52.1 L59.8,51.5 L62.8,55.3 L67.8,56.6 L71.5,60.5 L76.5,61.6 L78.6,67.4 L81.2,70.2 L84.0,73.0 L79.3,74.4 L76.4,75.4 L69.1,74.4 L66.2,76.6 L64.2,79.6 L59.0,80.5 L58.9,83.4 L55.5,87.8 L53.7,91.6 L51.2,96.8 L52.8,100.5 L58.1,100.6 L61.5,106.8 L65.1,109.5 L68.8,110.5 L74.2,106.0 L76.6,109.9 L81.5,109.2 L85.4,106.5 L92.0,110.5 L94.5,105.5 L100.2,106.8 L100.6,103.1 L106.4,101.8 L109.0,96.8 L106.3,93.1 L101.6,89.6 L100.2,85.5 L104.8,82.9 L109.0,84.2 L112.4,87.4 L113.3,91.4 L114.0,96.8 L120.4,98.5 L125.1,94.2 L129.0,94.2 L133.9,95.3 L138.5,96.7 L142.8,98.5 L148.2,99.0 L155.2,102.0 L157.8,105.2 L162.6,109.5 L167.0,113.0 L170.4,115.3 L175.8,120.4 L179.1,124.7 L181.5,128.0 L180.2,134.2 L174.4,133.5 L168.0,133.1 L164.1,132.4 L160.0,131.4 L154.2,130.5 L150.6,128.9 L143.8,128.0 L139.4,127.0 L133.6,125.9 L126.2,125.3 L121.9,123.9 L115.5,122.3 L111.1,122.6 L104.9,122.2 L99.4,121.7 L91.6,122.1 L86.4,124.1 L85.8,126.3 L89.7,129.2 L96.3,131.1 L99.7,131.9 L106.7,132.4 L109.9,133.0 L115.7,133.9 L119.0,133.9 L124.8,135.9 L129.4,137.5 L133.8,137.6 L137.7,138.2 L144.2,139.6 L152.6,140.6 L160.4,140.9 L168.2,140.9 L173.8,140.7 L177.3,140.6 L183.3,140.5 L189.0,140.5 L189.3,145.0 L188.8,147.4 L193.1,151.9 L191.1,157.4 L190.2,160.5 L186.0,159.0 L181.6,159.0 L177.9,160.7 L174.0,158.0 L172.5,164.3 L171.0,168.7 L166.5,170.5 L172.7,167.8 L177.8,170.5 L175.3,174.4 L171.5,178.0 L168.8,175.7 L160.9,179.7 L159.3,176.6 L152.5,172.5 L149.0,175.5 L144.6,177.7 L140.3,177.3 L136.3,174.5 L132.1,173.9 L125.0,176.3 L121.5,174.2 L125.6,175.9 L129.6,178.6 L134.0,180.5 L131.1,181.6 L123.3,181.8 L119.3,180.4 L116.5,184.9 L111.5,185.5 L113.5,191.4 L116.5,195.5 L114.0,199.1 L108.3,199.3 L104.0,200.5 L100.5,205.6 L100.2,211.8 L107.9,210.9 L111.5,215.5 L110.0,220.6 L109.6,225.7 L106.5,230.5 L110.5,234.7 L114.8,236.5 L117.7,241.1 L119.0,245.5 L123.9,245.0 L127.2,250.2 L131.8,250.5 L134.0,255.5 L137.8,258.2 L140.7,265.0 L142.8,268.0 L143.3,274.0 L145.6,278.3 L144.0,281.8 L147.3,283.6 L151.8,289.1 L156.7,287.0 L159.0,293.0 L161.5,298.0 L164.5,301.8 L169.3,301.9 L174.0,306.8 L179.9,306.2 L182.3,314.6 L186.5,313.0 L187.3,315.9 L189.0,321.8 L193.9,323.0 L196.2,326.8 L200.9,325.2 L204.0,328.0 L206.8,331.7 L210.8,335.4 L208.9,338.9 L214.0,341.8 L218.9,344.7 L222.4,347.7 L224.0,350.5 L228.3,353.0 L230.2,355.2 L235.1,355.8 L239.0,359.2 L243.6,361.1 L249.0,359.2 L251.5,362.0 L247.0,361.3 L239.1,362.0 L237.4,362.6 L241.9,363.9 L250.0,364.3 L252.9,363.8 L259.4,364.4 L263.8,363.5 L268.0,363.5 L273.4,363.7 L279.9,364.4 L284.8,365.6 L293.1,367.1 L300.2,370.0 L302.8,374.0 L308.2,377.0 L311.3,378.0 L317.3,379.5 L325.1,381.6 L332.9,383.6 L341.3,383.9 L345.4,383.2 L351.7,382.6 L357.1,379.9 L358.4,375.4 L360.8,371.1 L366.5,364.5 L366.5,362.0 L361.9,356.9 L359.0,353.0 L363.2,349.3 L368.6,348.0 L371.5,345.5 L373.2,341.7 L376.3,338.2 L381.5,335.5 L380.4,331.9 L377.0,327.9 L374.0,323.0 L370.1,321.9 L366.9,317.6 L362.1,320.3 L359.0,315.5 L364.3,312.5 L369.3,314.7 L373.6,313.9 L378.5,313.8 L381.5,310.5 L386.7,308.0 L391.0,307.8 L394.4,306.9 L399.0,305.5 L402.6,302.8 L405.6,300.6 L412.6,298.8 L417.0,297.6 L419.0,293.0 L419.0,285.5 L414.3,283.6 L409.8,284.1 L407.9,281.5 L402.4,280.8 L399.0,278.0 L403.1,276.0 L407.7,276.4 L412.1,273.1 L415.9,273.1 L421.5,273.0 L420.1,269.1 L421.5,264.2 L415.5,265.2 L412.5,259.3 L406.5,260.5 L412.5,260.7 L414.1,257.0 L421.2,260.3 L423.5,259.1 L429.0,258.0 L433.0,253.7 L437.8,252.1 L439.0,248.0 L444.3,245.9 L448.4,246.3 L453.4,244.1 L456.5,245.5 L461.7,245.5 L465.8,243.7 L470.3,244.9 L475.2,244.0 L479.0,244.2 L479.5,240.7 L480.1,235.1 L480.5,232.3 L484.0,228.0 L489.7,226.1 L494.1,229.0 L499.0,229.2 L500.4,234.2 L496.5,238.0 L499.7,237.7 L507.3,235.6 L509.5,236.7 L514.9,238.1 L519.0,239.2 L522.2,235.0 L528.5,234.0 L530.3,230.3 L536.5,230.5 L542.0,229.8 L544.4,229.5 L547.9,229.7 L552.2,225.8 L556.5,228.0 L562.2,227.7 L564.6,222.8 L568.6,223.9 L572.2,220.4 L576.5,218.0 L579.0,214.5 L582.8,211.0 L585.8,206.8 L591.5,205.5 L594.6,201.1 L597.3,202.5 L601.7,201.0 L605.6,197.4 L609.0,195.5 L611.9,193.4 L615.4,192.1 L620.0,192.1 L624.0,188.0 L621.5,183.0 L619.8,179.8 L614.7,178.8 L611.5,175.5 L615.6,174.3 L619.7,178.5 L624.5,183.2 L629.0,180.1 L632.0,184.2 L632.0,186.8 L637.9,186.1 L643.7,188.0 L647.0,188.0 L651.0,186.8 L657.7,186.7 L662.0,185.5 L668.8,183.0 L674.5,181.8 L681.4,181.6 L685.1,180.7 L692.0,181.8 L697.3,181.7 L704.3,178.5 L707.6,178.5 L714.5,176.8 L720.8,175.8 L726.2,173.9 L730.6,173.0 L737.0,173.0 L740.7,171.2 L746.8,173.0 L752.0,172.3 L758.5,169.9 L762.0,169.2 L765.6,168.4 L772.5,165.9 L777.0,164.2 L780.2,162.0 L787.5,161.0 L792.0,158.0 L796.6,156.1 L803.0,154.6 L805.5,154.6 L812.0,153.0 L815.7,152.6 L820.1,149.8 L827.0,148.0 L830.6,147.6 L835.4,145.9 L842.7,144.1 L847.0,143.0 L852.2,141.8 L856.9,139.2 L854.5,138.0 L847.3,138.0 L842.5,138.0 L838.5,137.4 L831.0,137.6 L823.6,136.5 L818.0,136.7 L812.3,136.1 L807.2,135.5 L803.8,134.4 L796.8,133.8 L790.2,133.3 L786.3,134.0 L778.5,134.7 L775.1,135.0 L767.1,135.7 L763.0,135.8 L756.2,137.1 L752.5,137.8 L748.1,139.7 L742.8,141.0 L738.0,141.5 L732.3,142.0 L728.9,141.8 L722.8,142.0 L718.1,140.2 L713.0,140.5 L712.9,139.1 L718.8,138.4 L723.7,136.8 L726.4,136.5 L731.1,136.4 L737.8,135.8 L741.8,134.6 L747.7,134.2 L752.2,132.6 L756.0,132.2 L762.8,130.3 L768.8,129.0 L772.7,128.6 L776.2,127.0 L782.3,123.7 L783.0,119.8 L782.7,116.5 L781.3,113.2 L783.5,111.5 L789.3,110.8 L795.6,111.4 L803.4,113.4 L808.2,116.4 L810.8,120.9 L814.4,124.2 L819.6,126.8 L825.6,128.7 L833.4,130.3 L839.5,130.9 L845.0,130.6 L847.9,128.6 L849.0,122.5 L852.5,122.5 L854.0,128.2 L857.2,130.5 L863.0,131.5 L868.2,131.0 L873.3,129.0 L874.8,125.6 L872.9,120.4 L871.7,115.3 L871.0,109.5 L867.8,106.5 L861.2,105.8 L856.8,106.1 L853.5,107.4 L851.4,106.5 L850.1,103.2 L853.1,101.3 L860.9,100.4 L860.9,99.5 L853.1,98.5 L846.5,98.9 L840.0,100.9 L839.4,100.2 L844.6,97.0 L843.4,94.6 L835.6,92.6 L828.4,90.5 L820.6,87.9 L814.0,85.9 L807.5,83.9 L803.3,80.0 L802.2,76.0 L799.5,70.5 L794.5,69.2 L792.0,73.0 L785.7,70.6 L782.5,69.3 L776.8,67.3 L774.4,64.3 L779.6,61.7 L787.9,59.6 L794.3,58.9 L801.1,57.6 L808.2,55.6 L810.8,52.9 L813.2,53.2 L815.8,56.5 L820.6,58.9 L828.4,60.9 L836.8,62.2 L843.4,62.7 L847.2,63.1 L852.1,62.6 L856.8,62.5 L862.4,61.4 L867.2,60.3 L874.2,59.5 L878.0,59.0 L882.3,58.7 L888.1,58.1 L893.5,58.3 L900.7,55.9 L903.3,51.4 L900.3,48.6 L893.9,48.1 L891.2,47.4 L882.8,46.4 L879.5,46.2 L873.7,45.8 L868.9,47.0 L867.6,50.2 L866.4,50.2 L865.1,47.0 L862.1,44.9 L856.9,43.6 L856.9,41.8 L862.1,39.2 L868.7,39.2 L872.2,40.4 L877.8,41.8 L882.3,42.5 L888.0,42.4 L895.9,41.2 L901.0,41.1 L906.9,40.7 L911.8,39.9 L918.4,39.5 L922.2,38.6 L930.6,36.2 L938.4,32.3 L939.0,30.8 L932.5,31.4 L927.1,31.1 L921.9,29.9 L916.5,28.9 L910.0,28.3 L904.6,27.7 L897.0,26.8 L897.0,20.5 L904.6,17.6 L911.2,17.1 L914.6,16.8 L920.3,17.7 L925.1,15.9 L926.4,11.4 L925.8,7.4 L923.2,3.6 L920.2,1.3 L916.3,0.4 L913.9,-2.9 L912.6,-9.1 L908.9,-14.4 L902.1,-19.6 L896.5,-21.9 L893.0,-22.0 L887.3,-22.0 L883.9,-22.5 L879.8,-22.1 L873.8,-22.2 L870.9,-22.6 L864.4,-22.3 L861.5,-21.7 L857.4,-22.5 L851.9,-22.3 L847.7,-22.3 L842.9,-22.0 L838.4,-22.5 L834.9,-22.7 L829.4,-22.8 L824.5,-22.6 L821.9,-22.2 L816.2,-22.3 L812.1,-21.5 L806.6,-22.1 L804.4,-21.7 L798.1,-22.8 L794.8,-22.0 L787.7,-21.5 L784.5,-21.6 L780.1,-21.7 L776.0,-21.4 L770.2,-22.3 L767.9,-22.4 L763.5,-22.5 L758.3,-22.0 L752.2,-22.0 L748.7,-22.0 L742.9,-22.0 L738.1,-22.3 L737.1,-22.2 L730.3,-22.7 L726.9,-21.7 L720.6,-21.9 L716.7,-21.7 L712.5,-21.5 L707.4,-22.0 L705.4,-22.1 L698.4,-21.8 L695.8,-22.0 L691.7,-21.5 L684.2,-21.3 L680.4,-21.9 L678.3,-22.6 L672.7,-22.0 L667.0,-21.7 L662.2,-21.4 L659.0,-21.9 L653.1,-22.0 L648.9,-21.7 L643.7,-22.5 L639.4,-21.8 L634.5,-22.3 L630.7,-22.1 L627.3,-21.8 L623.9,-21.6 L616.9,-21.2 L612.1,-22.8 L608.8,-22.8 L605.4,-21.7 L599.8,-22.1 L596.1,-22.0 L592.3,-22.7 L585.8,-21.4 L582.2,-22.3 L576.8,-22.5 L573.0,-21.8 L568.5,-21.4 L565.2,-22.5 L558.7,-21.3 L556.4,-21.7 L551.7,-21.6 L546.2,-22.0 L541.0,-21.4 L537.1,-22.5 L532.1,-22.1 L527.7,-22.5 L522.9,-21.6 L517.9,-22.6 L513.9,-22.4 L509.5,-22.0 L507.3,-21.6 L502.5,-22.4 L496.7,-22.1 L491.4,-21.8 L488.6,-22.1 L481.3,-22.2 L480.1,-21.4 L474.1,-22.4 L468.6,-22.4 L463.9,-22.0 L459.5,-22.4 L456.0,-21.7 L450.6,-22.0 L445.9,-22.6 L442.8,-22.0 L439.4,-22.5 L433.6,-22.3 L427.4,-22.1 L425.8,-22.0 L421.6,-22.7 L414.8,-22.2 L410.0,-22.0 L408.3,-21.4 L401.0,-22.0 L398.3,-22.0 L393.7,-21.9 L387.4,-22.3 L383.4,-22.1 L378.6,-22.1 L375.3,-21.6 L370.8,-22.0 L366.0,-21.7 L362.4,-22.3 L357.2,-21.5 L351.6,-21.8 L348.6,-22.3 L343.9,-21.3 L340.4,-21.8 L334.6,-22.6 L329.8,-22.0 L323.8,-22.3 L321.3,-22.3 L317.5,-22.4 L310.9,-22.1 L306.0,-21.6 L303.6,-21.8 L298.4,-22.2 L293.7,-22.0 L288.1,-22.5 L284.6,-22.0 L279.2,-21.9 L275.1,-22.7 L270.3,-22.2 L265.8,-22.1 L262.6,-22.0 L256.6,-22.5 L252.2,-21.7 L247.5,-22.5 L243.7,-22.6 L240.4,-21.9 L233.5,-21.6 L230.1,-21.4 L227.8,-21.7 L222.5,-22.1 L215.6,-22.1 L213.0,-21.6 L208.0,-21.8 L204.1,-22.0 L197.9,-22.5 L194.2,-21.7 L190.2,-22.4 L187.3,-21.6 L180.0,-22.3 L176.6,-21.9 L173.7,-22.2 L168.6,-22.1 L162.7,-21.7 L158.5,-22.2 L153.1,-22.1 L148.5,-22.6 L144.0,-22.4 L141.3,-22.6 L137.9,-22.1 L133.0,-22.0 L128.8,-22.0 L123.4,-22.0 L116.9,-21.6 L113.7,-21.3 L109.8,-22.3 L104.5,-21.9 L100.2,-21.4 L95.7,-21.8 L92.0,-22.4 L87.7,-21.6 L81.0,-22.2 L77.4,-22.1 L74.5,-21.9 L70.2,-22.1 L65.6,-22.3 L60.1,-21.3 L55.4,-22.2 L50.0,-21.3 L47.7,-22.6 L39.8,-21.5 L36.8,-22.2 L32.4,-21.9 L27.8,-21.7 L24.6,-22.1 L17.4,-21.7 L12.9,-22.0 L9.1,-21.4 L5.0,-21.5 L0.5,-22.0 L-3.8,-21.6 L-9.5,-22.5 L-12.9,-22.1 L-15.6,-22.2 L-22.5,-22.1 L-26.7,-22.1 L-30.8,-22.1Z M76.5,140.5 L82.2,136.3 L88.8,134.5 L93.9,133.9 L99.2,133.5 L107.6,133.6 L115.4,134.9 L122.6,137.3 L130.4,141.2 L137.6,144.2 L145.4,146.8 L146.6,149.5 L141.4,152.8 L134.2,155.1 L129.2,156.1 L123.8,157.1 L116.6,158.5 L111.4,159.5 L106.6,158.9 L99.0,155.5 L104.0,151.8 L96.8,151.3 L90.7,150.8 L83.5,149.9 L78.2,149.1 L74.0,148.0 L79.0,144.2Z M99.0,113.5 L106.5,110.0 L112.8,115.0 L105.2,117.5Z M74.0,130.5 L80.2,130.0 L79.0,133.0Z M937.0,15.5 L942.6,14.8 L945.9,14.5 L952.2,13.6 L958.5,13.5 L961.8,14.5 L966.0,16.3 L971.8,19.2 L972.7,21.1 L968.8,22.4 L963.4,22.7 L955.6,22.1 L948.7,21.8 L943.9,22.5 L938.2,21.8Z M945.8,28.5 L950.8,29.2 L950.0,31.2 L946.5,30.5Z M875.8,66.0 L883.2,66.0 L882.0,67.5 L876.5,67.5Z M804.5,248.8 L812.0,245.5 L817.2,242.2 L822.0,239.2 L826.0,235.9 L829.5,233.0 L836.1,234.2 L839.5,234.2 L835.8,226.8 L841.5,226.6 L844.8,226.3 L849.5,226.0 L857.3,229.3 L862.0,230.5 L867.4,232.6 L872.0,234.2 L879.5,238.0 L880.8,244.2 L877.0,248.0 L882.1,252.2 L884.5,255.5 L886.7,250.7 L888.2,246.8 L894.5,244.2 L899.5,245.5 L901.8,241.3 L904.5,238.0 L900.8,235.5 L908.2,233.5 L914.5,239.2 L922.0,243.0 L923.9,240.3 L927.0,235.5 L934.1,233.7 L939.5,232.5 L947.0,235.5 L951.1,240.0 L954.5,243.0 L957.0,240.5 L950.8,234.2 L959.5,233.0 L965.8,237.1 L969.5,239.2 L973.4,237.2 L979.5,233.0 L984.1,232.9 L992.0,233.0 L995.8,225.5 L1002.1,225.4 L1007.0,224.2 L1010.0,225.8 L1014.5,229.2 L1022.0,233.0 L1027.2,230.0 L1032.0,228.0 L1040.8,227.5 L1038.1,228.4 L1032.0,230.5 L1029.5,235.5 L1033.1,236.7 L1038.2,238.0 L1035.8,241.8 L1042.5,243.2 L1045.8,244.2 L1044.5,247.2 L1050.5,248.0 L1054.1,248.2 L1058.1,247.2 L1063.2,248.0 L1057.0,253.0 L1063.1,256.3 L1066.5,258.0 L1063.0,261.4 L1057.0,266.8 L1049.9,267.5 L1044.5,269.2 L1039.2,273.3 L1034.5,278.0 L1028.9,277.6 L1022.0,276.8 L1017.6,279.5 L1012.0,281.8 L1005.4,283.9 L1001.8,284.4 L997.0,286.8 L990.4,288.2 L988.6,288.9 L982.0,289.2 L976.6,289.5 L971.3,289.4 L967.0,290.5 L962.0,294.2 L959.5,296.8 L952.2,297.1 L947.3,298.5 L942.0,299.2 L937.9,298.4 L930.7,297.6 L924.5,296.8 L920.6,296.2 L915.5,295.8 L909.3,295.8 L904.5,295.5 L898.7,292.8 L894.5,290.5 L886.6,288.5 L882.0,288.0 L875.5,288.1 L870.9,287.9 L867.0,288.0 L862.2,288.7 L856.5,288.4 L851.7,289.3 L847.0,289.2 L846.5,284.2 L852.9,284.0 L855.3,282.9 L862.0,283.0 L864.2,281.3 L869.5,278.0 L863.2,275.5 L868.6,273.4 L871.9,271.5 L875.8,269.2 L870.3,271.2 L864.5,273.0 L858.2,270.5 L854.5,268.0 L848.6,267.4 L845.7,266.7 L839.5,265.5 L834.3,266.0 L829.4,265.6 L822.0,266.8 L814.5,264.2 L819.2,263.3 L822.8,262.9 L829.5,261.8 L834.9,261.3 L840.2,260.3 L847.0,259.2 L851.3,259.5 L857.0,260.5 L864.0,259.6 L868.2,259.2 L867.0,255.5 L863.8,255.9 L858.0,254.8 L852.0,255.5 L857.0,251.8 L863.9,251.7 L869.5,250.5 L862.0,248.0 L856.4,247.1 L849.3,247.1 L844.5,246.8 L839.6,247.2 L834.1,248.2 L829.5,248.0 L822.0,249.8 L817.0,250.5 L809.5,249.7Z M1172.5,121.8 L1187.0,115.5 L1198.2,113.5 L1198.2,117.5 L1182.0,120.5Z M1838.8,34.2 L1845.0,33.0 L1850.5,35.5 L1845.5,38.0Z M1212.0,330.5 L1217.8,327.9 L1222.0,325.5 L1227.9,326.0 L1232.1,325.4 L1234.9,322.7 L1239.5,324.2 L1234.3,326.4 L1232.0,330.5 L1228.8,329.6 L1224.5,331.7 L1219.5,332.5Z M-41.0,504.0 L-35.0,498.6 L-31.3,498.9 L-25.7,499.7 L-21.2,500.5 L-16.2,500.7 L-8.7,501.8 L-5.0,501.4 L2.8,502.4 L8.6,503.7 L14.0,507.0 L19.7,510.8 L20.3,513.5 L16.5,518.2 L20.0,522.7 L24.0,527.0 L18.6,532.1 L14.0,534.5 L19.0,535.5 L24.0,534.5 L28.0,533.5 L33.0,530.2 L39.0,530.8 L43.2,532.4 L47.9,534.7 L51.1,535.8 L56.5,537.0 L57.0,540.2 L53.6,547.8 L55.2,552.0 L56.1,557.9 L59.0,562.0 L56.5,569.5 L53.9,573.5 L49.4,574.5 L44.0,578.2 L38.9,578.3 L33.2,583.5 L27.9,585.7 L24.0,585.8 L18.0,586.5 L12.6,587.3 L8.7,588.4 L2.8,588.3 L-5.0,588.2 L-10.5,588.7 L-15.0,588.5 L-18.8,587.7 L-23.5,588.4 L-30.0,588.7 L-35.0,588.0 L-41.0,582.0 L-41.4,578.7 L-40.8,573.6 L-41.1,568.8 L-40.6,564.5 L-40.9,557.5 L-41.0,555.3 L-41.5,549.3 L-41.4,545.6 L-40.6,539.7 L-41.2,536.6 L-41.2,532.3 L-41.0,528.3 L-41.5,523.6 L-41.2,517.6 L-41.2,513.4 L-40.7,507.6Z M-41.0,634.0 L-35.0,628.6 L-30.9,629.0 L-25.9,629.5 L-18.3,630.2 L-15.6,629.8 L-11.5,631.0 L-5.0,631.4 L2.9,628.4 L7.1,620.6 L11.1,613.4 L13.6,608.3 L15.6,605.6 L19.9,600.5 L24.4,597.2 L28.9,593.4 L34.1,588.1 L40.1,584.7 L47.9,582.5 L54.5,581.7 L58.5,582.8 L64.0,582.5 L61.5,587.0 L53.0,588.0 L51.8,589.5 L55.0,592.0 L54.1,594.5 L48.9,597.0 L44.7,601.0 L40.8,606.8 L36.9,613.1 L34.1,618.7 L32.4,620.9 L34.1,622.7 L38.6,620.5 L42.6,618.8 L50.4,617.6 L58.9,618.9 L59.5,622.2 L55.5,625.4 L52.3,628.0 L53.8,631.0 L60.6,632.1 L64.2,631.7 L69.9,631.9 L73.2,631.7 L78.3,631.7 L82.3,631.0 L88.9,631.3 L94.1,632.7 L99.8,634.2 L107.0,636.1 L107.5,639.4 L101.7,644.6 L100.2,648.5 L102.8,651.8 L108.2,653.0 L111.8,652.7 L117.3,652.3 L118.5,654.4 L112.0,659.6 L107.2,662.9 L103.3,664.8 L101.8,667.8 L102.5,672.4 L100.4,673.6 L95.1,671.7 L90.6,673.8 L86.1,680.2 L82.8,681.5 L80.2,677.5 L76.0,676.7 L69.5,678.6 L63.2,682.2 L58.6,686.3 L56.0,688.0 L51.9,687.2 L49.9,679.3 L44.8,676.3 L41.6,676.6 L35.7,677.7 L27.3,678.0 L23.6,677.1 L18.2,677.3 L10.9,676.4 L4.1,675.1 L-0.3,674.9 L-5.0,675.0 L-8.9,675.6 L-14.7,675.8 L-20.7,676.2 L-26.3,676.4 L-31.7,677.1 L-35.0,677.5 L-41.0,672.0 L-41.0,665.9 L-40.6,661.4 L-41.5,657.5 L-41.0,654.5 L-41.1,648.2 L-41.8,645.3 L-40.9,639.1Z M100.6,681.3 L103.3,678.3 L107.2,675.7 L112.6,672.0 L115.8,670.1 L120.4,666.5 L123.1,666.5 L121.1,672.0 L122.4,674.2 L126.9,673.5 L129.6,674.8 L130.9,678.0 L130.0,683.7 L128.6,688.7 L126.8,692.8 L123.1,697.9 L118.6,699.8 L114.4,700.2 L109.9,698.8 L108.0,696.2 L108.7,691.6 L105.7,691.2 L98.5,694.8 L95.9,694.2 L97.1,689.3 L98.6,685.2Z M52.8,690.8 L64.0,684.5 L81.5,675.8 L74.0,684.5 L64.0,693.2Z M40.2,688.2 L44.0,689.5 L45.2,697.0 L41.5,695.8Z M1269.0,413.2 L1272.6,413.4 L1278.1,414.5 L1282.8,415.1 L1289.0,415.8 L1294.7,415.9 L1297.4,414.7 L1305.5,414.5 L1307.6,413.7 L1314.0,413.2 L1316.5,419.5 L1310.5,421.7 L1309.0,423.3 L1301.7,426.6 L1299.0,428.2 L1294.9,430.7 L1288.8,433.3 L1285.2,435.8 L1290.2,439.5 L1296.2,438.7 L1302.6,436.3 L1306.5,435.8 L1312.8,436.1 L1315.8,435.6 L1323.0,436.5 L1326.5,435.8 L1330.0,435.3 L1337.1,435.6 L1341.5,436.2 L1346.5,440.8 L1343.7,444.4 L1339.0,449.5 L1334.2,455.8 L1331.5,459.5 L1327.8,461.3 L1321.5,464.5 L1317.3,466.0 L1311.5,467.0 L1315.5,467.5 L1321.0,468.0 L1326.5,469.5 L1323.4,471.4 L1318.2,474.3 L1314.0,475.8 L1309.6,475.1 L1304.2,475.5 L1299.0,474.5 L1302.7,474.1 L1310.5,475.0 L1314.0,474.8 L1319.0,475.8 L1324.4,475.8 L1331.8,478.3 L1336.5,478.2 L1339.9,480.3 L1345.1,483.1 L1349.0,485.8 L1351.2,490.6 L1354.0,497.0 L1357.6,501.2 L1359.3,506.3 L1361.5,508.2 L1366.2,509.8 L1373.3,511.6 L1376.5,513.2 L1379.0,515.2 L1384.0,520.0 L1387.8,522.0 L1389.0,530.8 L1383.5,530.5 L1377.1,531.1 L1372.8,530.8 L1378.2,531.9 L1382.3,532.9 L1389.0,533.2 L1393.1,538.3 L1397.8,542.0 L1394.3,547.0 L1391.5,549.5 L1397.8,553.2 L1404.0,548.2 L1410.1,549.0 L1414.4,548.7 L1419.0,549.0 L1425.3,552.2 L1430.2,554.5 L1430.3,558.1 L1430.2,564.5 L1427.5,568.5 L1424.0,573.2 L1420.3,575.3 L1414.0,577.0 L1409.0,583.2 L1403.9,583.7 L1399.0,584.5 L1406.5,585.3 L1411.5,586.5 L1415.7,586.0 L1423.5,587.0 L1422.8,592.0 L1415.7,594.2 L1411.5,595.8 L1404.6,598.0 L1399.0,600.8 L1394.9,600.4 L1388.5,599.2 L1384.0,599.5 L1377.7,600.3 L1372.3,600.0 L1369.2,600.5 L1364.0,600.8 L1359.0,605.8 L1352.8,603.2 L1348.9,603.6 L1342.1,604.4 L1339.0,604.5 L1331.8,603.1 L1326.8,602.5 L1321.5,602.0 L1315.5,603.7 L1311.1,604.1 L1306.5,604.5 L1304.4,607.9 L1301.5,613.2 L1296.8,611.6 L1289.0,609.5 L1282.0,612.2 L1276.5,613.2 L1272.4,615.5 L1268.0,617.4 L1264.0,619.5 L1257.4,617.6 L1252.8,617.0 L1256.0,615.2 L1263.5,612.0 L1267.6,609.7 L1271.5,608.2 L1275.8,602.8 L1277.0,600.4 L1281.5,595.8 L1287.6,594.3 L1291.7,593.5 L1294.7,591.8 L1299.0,590.8 L1304.6,589.6 L1309.2,590.0 L1316.5,589.5 L1321.1,585.6 L1324.5,583.5 L1329.3,580.5 L1331.5,578.2 L1326.0,579.2 L1319.0,582.0 L1314.2,583.4 L1306.5,585.8 L1301.0,584.9 L1296.0,584.2 L1289.0,582.0 L1282.1,580.9 L1278.5,580.6 L1271.5,579.5 L1268.3,577.7 L1262.8,575.0 L1265.9,574.3 L1273.2,570.5 L1276.5,569.5 L1282.2,567.4 L1289.0,564.5 L1292.8,558.2 L1290.1,553.6 L1289.0,549.5 L1284.3,550.6 L1276.5,552.5 L1280.6,550.7 L1286.6,546.6 L1291.5,543.2 L1295.1,542.5 L1301.5,540.8 L1309.5,540.7 L1314.0,540.0 L1318.5,539.6 L1324.0,540.8 L1320.2,537.4 L1316.5,534.5 L1319.5,528.3 L1321.5,522.0 L1314.8,519.6 L1311.5,518.2 L1306.7,514.4 L1302.8,510.8 L1304.7,507.7 L1309.0,502.0 L1304.3,501.4 L1299.0,500.8 L1293.1,503.5 L1288.0,504.2 L1284.0,505.8 L1277.3,506.4 L1271.5,507.0 L1268.8,503.4 L1266.5,499.5 L1271.5,495.8 L1276.5,492.0 L1277.7,487.8 L1278.3,483.8 L1280.2,478.2 L1273.0,479.3 L1269.0,479.5 L1266.0,482.6 L1262.3,485.8 L1258.3,488.2 L1254.0,492.0 L1250.2,487.0 L1253.9,484.0 L1257.6,478.2 L1260.3,475.7 L1264.0,472.0 L1266.1,466.5 L1267.8,459.5 L1264.4,460.6 L1259.5,463.3 L1254.0,465.8 L1251.3,468.7 L1248.3,473.7 L1246.5,477.0 L1243.9,470.8 L1243.6,467.4 L1241.5,462.0 L1241.8,455.7 L1242.7,454.4 L1243.4,449.1 L1244.2,442.8 L1245.2,438.5 L1246.1,435.4 L1246.5,429.5 L1252.7,429.7 L1259.0,429.5 L1263.5,424.1 L1266.5,420.8Z M1254.9,514.2 L1258.4,507.3 L1257.2,498.6 L1251.4,494.0 L1247.1,494.1 L1240.2,492.8 L1235.8,492.5 L1229.0,492.2 L1224.4,492.7 L1220.5,492.2 L1213.4,492.3 L1211.0,492.7 L1206.1,492.9 L1200.3,492.2 L1193.2,494.6 L1189.1,495.1 L1183.6,498.4 L1179.9,500.8 L1176.3,502.2 L1173.4,503.6 L1168.3,507.0 L1166.4,508.3 L1160.0,510.9 L1156.5,513.2 L1153.6,517.9 L1150.5,522.1 L1149.4,526.0 L1149.7,531.4 L1149.1,536.1 L1148.5,542.3 L1147.0,545.6 L1146.9,550.0 L1145.2,556.9 L1145.5,559.3 L1144.8,565.3 L1147.5,570.4 L1148.7,574.1 L1154.4,577.2 L1158.6,580.3 L1162.2,580.8 L1169.1,581.9 L1175.1,580.2 L1178.9,579.6 L1182.7,579.2 L1188.9,577.6 L1192.4,577.0 L1196.7,575.9 L1202.1,574.6 L1207.4,573.2 L1209.8,572.8 L1213.9,572.8 L1220.2,570.6 L1225.8,569.4 L1229.4,568.9 L1234.0,567.7 L1238.5,562.4 L1241.5,560.7 L1243.2,554.9 L1245.3,548.2 L1245.2,544.1 L1245.9,537.9 L1244.4,534.3 L1243.4,527.9 L1246.2,520.4 L1250.1,517.9Z M1274.0,522.0 L1282.8,514.5 L1286.5,517.5 L1279.0,523.2Z M1279.0,539.5 L1285.2,537.5 L1290.2,541.0 L1284.5,545.0Z M1309.0,403.2 L1315.3,401.9 L1319.0,399.5 L1323.2,399.5 L1329.0,399.5 L1328.0,405.3 L1324.0,408.2 L1318.2,409.0 L1314.0,409.5Z M1349.0,372.0 L1352.8,370.1 L1359.0,368.2 L1362.9,366.7 L1369.0,363.2 L1367.8,367.8 L1366.5,373.2 L1365.4,378.5 L1361.5,382.0 L1356.8,380.1 L1353.8,377.7Z M1260.2,482.0 L1266.5,484.5 L1264.0,490.8 L1259.0,488.2Z"/>
</g>
<g fill="#fff" stroke="#a9a89c" stroke-width="1.45" stroke-linejoin="round">
<path d="M1229.0,951.6 L1233.2,949.5 L1239.5,950.5 L1242.3,950.5 L1248.3,951.5 L1252.2,952.5 L1255.8,952.2 L1259.7,950.5 L1263.3,948.2 L1267.2,945.0 L1272.0,942.6 L1278.5,940.7 L1283.9,939.2 L1289.1,937.8 L1295.7,937.2 L1301.9,937.8 L1304.8,937.2 L1313.2,937.0 L1316.0,936.5 L1322.3,936.3 L1329.5,935.7 L1336.0,935.0 L1340.8,932.7 L1344.7,928.1 L1348.3,924.5 L1352.2,921.2 L1356.4,919.0 L1361.6,917.3 L1365.5,915.8 L1368.8,914.2 L1371.5,910.8 L1374.0,905.0 L1377.3,900.2 L1381.9,895.6 L1386.4,892.2 L1391.6,889.3 L1392.2,886.3 L1388.3,882.7 L1385.3,878.9 L1382.7,874.3 L1382.1,870.5 L1383.4,866.5 L1386.4,862.0 L1391.6,856.2 L1396.7,850.8 L1402.5,845.0 L1407.3,840.3 L1411.9,836.0 L1417.6,832.8 L1425.4,830.2 L1432.0,828.3 L1438.5,826.7 L1444.5,824.5 L1451.0,821.2 L1456.7,818.2 L1462.6,815.0 L1465.8,811.4 L1467.8,804.8 L1465.2,799.8 L1462.4,795.0 L1461.8,791.4 L1462.4,786.8 L1464.8,783.5 L1469.4,781.0 L1474.5,778.5 L1481.0,776.0 L1487.6,775.3 L1495.4,776.7 L1501.7,777.0 L1510.2,776.0 L1514.0,779.8 L1518.8,781.4 L1523.5,783.0 L1529.2,784.5 L1535.1,785.5 L1540.4,784.5 L1546.3,781.2 L1552.0,778.0 L1558.5,774.0 L1563.9,771.0 L1569.1,768.5 L1574.5,766.3 L1581.0,764.4 L1586.1,761.7 L1590.7,757.8 L1594.2,755.3 L1597.5,753.7 L1602.0,753.7 L1608.5,755.3 L1614.5,756.9 L1621.0,758.8 L1626.4,761.2 L1631.6,764.5 L1634.6,768.4 L1635.9,773.6 L1637.7,778.1 L1640.3,782.7 L1643.9,786.8 L1649.1,791.4 L1652.7,795.2 L1655.3,798.8 L1659.5,802.1 L1666.0,805.6 L1672.0,809.7 L1678.5,814.8 L1685.1,819.3 L1690.2,822.8 L1692.9,823.9 L1698.3,826.7 L1702.2,828.3 L1707.6,829.5 L1715.4,830.5 L1721.4,833.4 L1726.6,838.6 L1732.6,841.9 L1740.4,843.8 L1745.2,846.5 L1747.8,850.5 L1752.0,853.8 L1758.5,857.0 L1763.9,862.1 L1766.9,867.5 L1769.1,869.9 L1772.4,876.2 L1774.3,882.0 L1773.8,886.2 L1770.5,889.5 L1767.8,893.1 L1764.0,899.8 L1760.2,901.0 L1763.1,905.8 L1766.1,907.2 L1770.7,907.2 L1774.2,905.2 L1777.5,900.6 L1781.1,896.7 L1785.7,892.8 L1790.2,889.5 L1797.8,884.8 L1800.2,879.8 L1797.4,873.1 L1794.1,869.8 L1786.5,866.0 L1784.0,862.2 L1787.8,855.6 L1791.4,852.2 L1796.6,849.3 L1802.0,848.4 L1808.5,849.3 L1813.3,850.7 L1817.2,852.6 L1820.2,855.3 L1824.0,861.0 L1829.0,863.0 L1830.9,857.7 L1830.3,854.5 L1827.7,851.2 L1824.1,848.2 L1818.9,845.0 L1811.7,841.4 L1805.5,838.6 L1801.3,836.8 L1797.8,835.4 L1792.3,832.7 L1786.7,830.7 L1783.2,828.1 L1776.6,824.8 L1771.4,822.2 L1770.5,819.2 L1773.8,815.3 L1772.6,813.2 L1766.7,812.5 L1760.4,811.7 L1752.6,810.3 L1746.0,808.2 L1739.5,805.0 L1734.1,801.1 L1728.9,795.9 L1724.7,790.2 L1720.8,783.0 L1717.2,778.0 L1713.3,774.0 L1707.9,770.8 L1700.1,767.5 L1694.1,764.2 L1688.9,760.3 L1685.6,755.5 L1683.7,749.0 L1683.7,744.2 L1685.6,740.3 L1685.3,736.7 L1682.7,732.8 L1683.3,730.1 L1687.2,728.2 L1691.4,726.2 L1696.6,724.0 L1701.7,723.2 L1710.2,724.0 L1712.8,729.8 L1715.6,735.4 L1717.8,739.8 L1722.8,743.5 L1725.2,736.0 L1730.2,732.2 L1732.2,732.2 L1736.5,736.7 L1740.8,740.8 L1747.1,746.5 L1751.5,750.9 L1754.9,753.0 L1760.2,756.9 L1762.7,759.9 L1766.0,764.0 L1771.8,768.3 L1777.6,772.3 L1780.8,774.7 L1785.0,776.8 L1791.2,779.8 L1794.5,781.7 L1799.6,783.8 L1807.4,787.0 L1812.1,789.2 L1815.8,791.2 L1820.2,794.5 L1826.2,797.0 L1831.6,800.1 L1834.0,801.5 L1840.5,805.5 L1846.5,809.3 L1853.0,813.9 L1855.7,818.4 L1855.1,823.6 L1853.8,828.4 L1851.9,833.6 L1851.3,839.0 L1851.9,845.5 L1854.9,850.6 L1860.8,855.2 L1865.6,859.3 L1870.2,863.9 L1875.6,869.9 L1878.3,873.2 L1882.7,878.3 L1888.1,882.5 L1892.7,883.2 L1894.4,885.3 L1893.8,889.2 L1894.7,892.7 L1897.3,896.3 L1901.5,898.1 L1908.0,898.4 L1915.2,898.4 L1918.2,898.3 L1924.3,898.1 L1931.8,899.2 L1938.9,901.8 L1938.3,902.8 L1929.9,902.4 L1923.0,901.8 L1916.5,900.7 L1911.7,900.5 L1907.8,901.2 L1903.6,903.5 L1899.8,907.5 L1896.0,909.8 L1898.5,914.8 L1902.3,917.2 L1906.0,919.8 L1907.2,926.0 L1910.1,933.6 L1912.5,934.5 L1917.2,929.8 L1922.2,933.5 L1927.0,939.2 L1929.1,938.0 L1930.4,931.5 L1932.5,930.6 L1935.8,935.2 L1938.8,938.5 L1942.0,941.0 L1941.1,937.8 L1938.8,933.3 L1935.9,928.0 L1934.1,922.0 L1935.4,918.8 L1938.7,917.8 L1944.6,919.2 L1947.8,918.2 L1949.2,915.0 L1948.6,912.0 L1945.9,908.8 L1946.8,907.8 L1951.4,909.2 L1955.9,910.8 L1961.1,913.0 L1962.6,912.1 L1960.7,907.9 L1957.3,904.2 L1952.2,900.3 L1947.7,897.0 L1943.1,893.8 L1938.6,890.8 L1933.4,887.5 L1933.4,885.1 L1938.6,883.2 L1939.8,880.8 L1937.2,877.5 L1937.8,876.0 L1941.7,876.0 L1942.6,874.5 L1940.7,871.2 L1937.7,867.0 L1933.1,861.2 L1930.4,856.7 L1929.1,852.8 L1930.6,849.5 L1937.2,844.8 L1936.0,851.0 L1943.6,854.8 L1948.4,856.9 L1953.6,858.8 L1955.4,858.2 L1954.1,855.0 L1955.9,852.3 L1961.1,849.7 L1965.6,850.3 L1970.2,854.2 L1971.3,854.2 L1969.4,850.3 L1965.8,847.0 L1959.9,843.8 L1959.9,841.7 L1965.8,840.3 L1971.5,838.8 L1978.0,836.9 L1984.6,835.9 L1992.4,835.6 L2000.2,836.8 L2005.1,839.0 L2009.3,839.7 L2016.5,842.2 L2023.0,844.8 L2024.2,847.8 L2020.3,851.7 L2021.5,852.3 L2028.0,849.7 L2034.0,847.0 L2040.5,843.8 L2047.1,840.5 L2054.9,836.5 L2062.7,834.5 L2066.8,834.1 L2071.8,833.8 L2078.4,834.1 L2083.6,835.4 L2090.2,837.2 L2095.2,837.9 L2099.3,839.8 L2099.9,841.3 L2092.1,842.0 L2087.3,843.8 L2084.7,847.0 L2080.5,848.2 L2074.0,847.5 L2067.4,847.8 L2059.6,849.2 L2053.6,849.5 L2048.4,848.8 L2042.4,849.1 L2034.6,850.4 L2027.4,852.2 L2019.6,854.8 L2016.6,858.4 L2017.9,863.6 L2022.1,866.9 L2029.9,868.8 L2030.5,870.7 L2024.0,872.6 L2023.4,875.6 L2028.6,880.2 L2031.6,883.8 L2032.9,887.0 L2032.3,889.7 L2029.7,892.3 L2030.9,894.1 L2036.1,895.4 L2035.5,896.6 L2029.0,897.9 L2028.4,900.3 L2033.6,904.2 L2037.2,907.5 L2039.8,910.8 L2040.4,914.0 L2039.1,918.0 L2040.9,921.2 L2046.1,924.5 L2052.7,926.9 L2055.8,927.4 L2061.8,928.8 L2062.4,930.7 L2054.6,932.6 L2053.4,934.7 L2058.6,937.3 L2063.4,937.9 L2068.6,936.6 L2073.7,936.6 L2079.6,937.9 L2083.8,940.3 L2087.0,944.2 L2090.9,946.9 L2096.1,948.8 L2102.7,949.5 L2106.4,948.9 L2111.8,948.8 L2117.2,945.2 L2119.8,938.0 L2124.6,935.0 L2132.4,935.7 L2139.6,937.2 L2147.4,939.8 L2153.4,942.8 L2158.6,946.7 L2164.0,949.7 L2170.5,952.3 L2177.7,952.9 L2181.9,952.5 L2186.8,951.6 L2194.6,949.8 L2202.4,947.2 L2209.0,944.2 L2215.5,940.3 L2222.1,938.2 L2229.9,937.5 L2237.7,936.3 L2242.2,935.5 L2246.8,934.4 L2251.6,935.0 L2252.9,938.2 L2251.7,941.2 L2247.8,944.5 L2247.2,948.4 L2249.8,953.6 L2249.8,957.2 L2247.2,959.8 L2245.7,965.2 L2244.9,970.7 L2245.1,974.3 L2245.7,980.6 L2247.6,985.2 L2247.3,990.0 L2244.7,995.8 L2242.3,1000.9 L2239.7,1006.1 L2237.3,1010.9 L2234.7,1016.1 L2232.3,1021.5 L2229.7,1028.0 L2227.3,1034.0 L2224.7,1040.5 L2222.3,1046.5 L2219.7,1053.0 L2216.7,1058.4 L2212.8,1063.6 L2207.4,1067.2 L2199.6,1069.8 L2191.8,1071.3 L2187.7,1071.7 L2182.7,1072.0 L2175.5,1071.7 L2169.0,1070.3 L2163.6,1068.0 L2158.4,1064.0 L2153.0,1062.5 L2146.5,1063.2 L2139.9,1062.6 L2132.1,1060.7 L2124.9,1060.7 L2117.1,1062.6 L2111.1,1065.6 L2105.9,1070.2 L2099.3,1073.5 L2095.8,1073.8 L2090.2,1076.0 L2082.4,1076.3 L2074.6,1074.4 L2067.4,1072.6 L2059.6,1070.7 L2053.0,1069.2 L2046.5,1067.8 L2040.5,1066.0 L2034.0,1063.5 L2026.2,1061.3 L2021.6,1060.1 L2015.8,1059.4 L2012.2,1059.7 L2006.2,1058.8 L2002.5,1058.4 L1995.8,1059.5 L1989.8,1057.7 L1987.2,1053.1 L1981.2,1050.4 L1975.3,1050.3 L1970.8,1049.1 L1965.2,1048.6 L1961.2,1047.6 L1955.5,1046.5 L1950.8,1045.7 L1944.8,1042.3 L1942.2,1037.2 L1937.4,1033.5 L1929.6,1031.0 L1921.8,1029.3 L1917.2,1028.4 L1912.7,1028.4 L1905.5,1028.7 L1899.0,1030.3 L1891.8,1032.8 L1886.6,1035.1 L1882.7,1036.7 L1876.1,1040.9 L1870.9,1046.1 L1867.9,1051.5 L1866.6,1058.0 L1867.2,1063.7 L1869.8,1069.5 L1869.8,1074.3 L1867.2,1078.9 L1863.0,1082.8 L1859.3,1085.2 L1853.5,1088.5 L1858.5,1088.0 L1854.5,1089.9 L1849.0,1090.8 L1842.4,1090.2 L1834.6,1087.0 L1827.4,1083.4 L1823.0,1080.9 L1819.6,1078.8 L1814.0,1076.4 L1811.2,1075.2 L1804.4,1073.1 L1800.8,1072.0 L1796.5,1071.2 L1791.2,1069.6 L1784.4,1067.8 L1780.8,1067.7 L1773.0,1065.2 L1766.5,1062.0 L1761.7,1057.5 L1758.7,1051.4 L1756.0,1048.0 L1756.0,1048.5 L1752.2,1041.8 L1746.2,1038.5 L1740.9,1037.1 L1735.8,1036.0 L1730.6,1034.4 L1726.2,1033.5 L1720.8,1031.9 L1715.8,1031.0 L1707.4,1029.5 L1699.6,1028.8 L1691.8,1028.8 L1686.8,1029.2 L1682.7,1029.5 L1674.9,1028.0 L1669.0,1025.1 L1663.5,1022.2 L1664.0,1022.2 L1656.4,1018.5 L1651.6,1015.5 L1646.4,1011.5 L1641.3,1008.5 L1635.4,1006.0 L1632.2,1003.0 L1630.8,999.0 L1632.3,995.5 L1636.9,991.5 L1641.4,987.7 L1646.6,983.1 L1650.2,978.6 L1652.8,973.4 L1652.8,968.6 L1650.2,963.4 L1646.9,959.2 L1642.3,955.3 L1641.2,951.7 L1643.1,947.8 L1646.1,944.2 L1650.7,940.3 L1652.8,936.4 L1652.8,931.8 L1650.7,930.7 L1646.1,932.6 L1642.2,933.8 L1638.3,934.5 L1635.9,932.7 L1634.6,928.1 L1631.6,925.3 L1626.4,923.7 L1620.4,923.7 L1612.6,925.3 L1605.4,927.4 L1597.6,930.4 L1589.8,932.0 L1583.8,932.5 L1580.7,932.7 L1573.5,931.9 L1567.0,929.6 L1561.6,929.4 L1556.4,931.3 L1551.0,931.5 L1544.5,929.8 L1537.9,930.4 L1530.1,933.4 L1523.5,935.7 L1517.0,937.6 L1510.4,937.2 L1502.6,934.3 L1494.2,932.9 L1487.8,932.5 L1483.8,932.8 L1480.3,933.4 L1474.8,933.2 L1468.9,934.4 L1465.7,934.3 L1457.9,935.8 L1450.1,938.0 L1441.7,939.5 L1435.1,939.6 L1431.3,940.5 L1425.9,941.3 L1422.3,941.9 L1416.2,943.1 L1413.2,943.8 L1405.4,946.2 L1397.6,949.5 L1392.2,952.2 L1388.3,954.8 L1383.5,956.6 L1377.0,957.9 L1371.6,959.7 L1366.4,962.3 L1362.2,965.0 L1358.3,968.2 L1354.1,971.0 L1348.9,973.5 L1344.1,975.0 L1338.9,975.7 L1332.9,975.7 L1325.1,975.0 L1320.3,973.5 L1317.7,971.0 L1312.3,970.3 L1308.3,970.4 L1303.2,971.7 L1295.7,972.8 L1288.5,974.2 L1282.0,973.5 L1274.8,971.0 L1269.7,968.2 L1265.8,965.0 L1263.1,962.0 L1261.2,958.8 L1257.0,957.5 L1249.8,958.2 L1242.3,958.9 L1238.8,958.6 L1233.2,959.6 L1229.0,957.4Z M2098.5,726.0 L2102.5,722.2 L2108.1,718.7 L2111.8,715.4 L2118.4,709.9 L2123.6,705.3 L2130.2,702.3 L2134.6,701.7 L2139.3,700.4 L2145.3,696.5 L2149.2,690.0 L2151.6,689.7 L2152.9,695.5 L2157.1,698.8 L2164.9,700.2 L2163.1,702.5 L2157.0,704.2 L2151.4,706.5 L2151.8,709.7 L2156.3,710.2 L2162.4,711.7 L2165.2,713.0 L2170.4,714.5 L2177.0,714.8 L2184.5,715.0 L2190.0,715.5 L2193.0,717.2 L2186.5,720.5 L2180.5,723.0 L2177.0,724.5 L2171.0,726.0 L2166.0,728.5 L2170.3,729.4 L2175.5,731.3 L2181.5,733.8 L2188.0,737.0 L2190.4,740.9 L2189.1,746.1 L2191.5,749.7 L2198.0,752.3 L2204.0,752.3 L2210.5,749.7 L2216.5,747.3 L2223.0,744.7 L2230.8,742.3 L2237.6,740.7 L2241.2,739.7 L2249.6,737.9 L2257.4,736.6 L2264.9,736.6 L2273.3,737.9 L2280.0,738.0 L2283.2,738.5 L2289.2,738.5 L2291.1,738.9 L2295.5,738.6 L2301.0,737.7 L2306.2,738.8 L2311.7,738.1 L2315.0,738.5 L2321.0,744.5 L2320.4,748.2 L2321.0,754.3 L2320.4,757.1 L2321.0,764.8 L2320.9,768.6 L2320.7,772.5 L2321.2,777.5 L2321.0,781.2 L2320.5,786.0 L2321.0,792.1 L2320.6,797.2 L2320.9,799.6 L2320.6,806.6 L2320.8,810.7 L2321.0,814.4 L2320.9,817.8 L2321.0,823.8 L2315.0,829.8 L2309.2,829.6 L2305.0,830.2 L2302.8,829.5 L2296.5,830.4 L2293.0,830.1 L2287.2,829.7 L2283.2,829.8 L2277.8,829.0 L2272.8,828.8 L2269.6,828.4 L2263.0,826.9 L2255.5,824.2 L2249.0,820.3 L2242.4,817.6 L2234.6,815.7 L2229.2,813.7 L2225.3,811.5 L2219.3,810.9 L2215.9,811.8 L2210.2,811.8 L2204.9,811.9 L2201.2,812.0 L2196.4,812.0 L2190.8,811.3 L2182.4,811.9 L2174.6,813.8 L2166.2,816.5 L2161.1,817.8 L2155.8,820.5 L2151.1,822.5 L2147.4,824.7 L2143.5,827.1 L2139.6,829.8 L2134.1,831.0 L2130.0,832.0 L2122.4,832.0 L2117.0,831.3 L2112.7,830.6 L2105.0,830.7 L2099.4,830.8 L2092.0,830.0 L2088.4,830.1 L2082.4,828.5 L2074.6,826.0 L2068.6,823.2 L2063.4,820.0 L2060.4,816.1 L2059.1,810.9 L2056.1,806.1 L2050.9,800.9 L2050.3,797.3 L2054.2,794.7 L2056.6,790.8 L2057.9,785.0 L2061.5,780.8 L2065.1,779.1 L2071.0,776.0 L2071.0,769.8 L2072.8,761.9 L2074.8,757.4 L2077.8,750.5 L2081.7,744.0 L2085.9,740.4 L2091.1,739.1 L2095.0,737.3 L2098.2,734.7 L2098.8,731.7 L2096.0,726.0Z M2321.0,699.2 L2315.0,693.2 L2311.6,692.6 L2306.9,692.5 L2300.0,693.3 L2296.8,693.4 L2290.7,693.7 L2289.0,692.5 L2283.2,693.2 L2277.6,694.6 L2271.6,695.0 L2264.4,697.3 L2259.2,699.0 L2253.4,701.0 L2248.1,702.5 L2243.4,704.6 L2236.4,706.5 L2229.2,709.2 L2225.3,711.1 L2224.7,715.4 L2227.3,722.6 L2232.7,727.3 L2237.6,728.2 L2241.8,730.2 L2250.2,730.8 L2255.2,730.0 L2259.3,729.2 L2267.1,729.3 L2274.9,731.2 L2279.0,732.1 L2284.5,732.0 L2289.5,731.9 L2294.0,732.6 L2299.5,731.8 L2304.0,732.2 L2310.8,731.6 L2315.0,732.0 L2321.0,726.0 L2321.0,720.4 L2320.3,716.2 L2320.5,710.4 L2321.6,702.8Z M2156.5,210.8 L2157.7,209.9 L2162.2,211.0 L2166.8,211.1 L2170.6,211.4 L2176.8,213.2 L2182.6,214.5 L2185.1,215.9 L2190.2,216.5 L2195.9,217.9 L2201.8,219.5 L2205.9,221.1 L2210.8,221.5 L2215.2,222.8 L2221.3,223.2 L2226.9,225.1 L2234.7,225.8 L2240.1,227.1 L2247.6,228.0 L2252.0,228.6 L2256.0,228.9 L2262.9,230.4 L2268.3,229.4 L2271.3,230.4 L2278.8,231.3 L2283.2,231.0 L2288.6,231.0 L2291.7,231.2 L2297.5,230.3 L2300.0,231.7 L2305.9,231.2 L2311.2,230.9 L2315.0,231.0 L2321.0,237.0 L2320.9,242.9 L2321.0,246.6 L2320.9,250.6 L2320.4,254.8 L2320.6,260.0 L2321.4,268.0 L2320.9,270.3 L2320.8,275.2 L2321.0,280.8 L2315.0,286.8 L2311.1,286.5 L2307.3,286.8 L2302.6,286.7 L2297.2,286.7 L2293.3,286.5 L2289.3,286.5 L2283.2,286.8 L2279.7,285.8 L2273.3,285.5 L2264.9,283.0 L2258.6,280.2 L2253.4,277.0 L2247.4,275.8 L2239.6,276.5 L2233.0,275.5 L2226.5,273.0 L2222.9,269.0 L2221.6,263.2 L2219.2,258.4 L2213.5,251.8 L2218.5,248.0 L2222.3,243.2 L2220.5,240.0 L2214.0,236.0 L2207.4,233.0 L2199.6,230.5 L2191.8,228.0 L2188.5,227.1 L2182.7,225.5 L2175.5,222.1 L2169.0,217.6 L2163.0,214.0Z M2163.5,1106.8 L2166.3,1101.4 L2168.2,1101.7 L2170.1,1106.0 L2172.8,1111.0 L2176.7,1117.5 L2180.6,1123.8 L2185.2,1131.0 L2189.3,1136.7 L2193.9,1141.8 L2199.3,1145.6 L2206.4,1148.6 L2210.7,1148.6 L2212.6,1145.6 L2214.4,1140.3 L2216.3,1131.9 L2218.6,1123.5 L2220.0,1120.3 L2222.4,1113.4 L2223.0,1109.2 L2225.5,1109.2 L2225.0,1113.8 L2224.8,1117.6 L2223.0,1123.5 L2221.5,1131.6 L2219.8,1139.4 L2221.9,1143.7 L2228.1,1145.3 L2232.8,1148.3 L2236.7,1153.2 L2240.3,1158.5 L2244.2,1165.0 L2247.2,1172.8 L2248.6,1179.0 L2249.8,1183.2 L2245.0,1188.0 L2239.2,1188.4 L2234.7,1188.1 L2230.7,1187.6 L2225.0,1188.4 L2220.0,1187.3 L2215.7,1187.6 L2209.5,1188.0 L2202.9,1183.2 L2202.4,1176.7 L2201.6,1172.8 L2199.5,1165.9 L2196.2,1161.3 L2193.8,1156.8 L2191.9,1151.7 L2189.2,1146.0 L2185.3,1138.8 L2181.1,1131.9 L2179.0,1128.9 L2175.9,1124.1 L2172.0,1118.4 L2167.2,1111.8Z M1893.5,484.5 L1896.0,500.8 L1883.5,500.8Z M1504.0,548.2 L1510.2,542.0 L1526.5,538.2 L1516.5,545.8 L1507.8,549.5Z"/>
</g>
<g fill="#eeebe0" stroke="#a9a89c" stroke-width="1.3" stroke-linejoin="round">
<path d="M1624.0,489.5 L1634.0,486.2 L1646.5,489.5 L1649.0,497.0 L1639.0,499.0 L1627.8,495.8Z M1652.7,484.8 L1654.5,482.0 L1661.0,479.5 L1666.4,478.5 L1671.6,479.2 L1675.8,478.3 L1679.7,475.7 L1683.3,474.8 L1687.2,475.5 L1689.6,478.1 L1690.9,483.4 L1689.7,487.2 L1685.8,490.5 L1684.6,493.8 L1685.9,497.7 L1684.1,500.1 L1678.9,501.4 L1674.7,500.8 L1670.8,498.2 L1667.2,497.3 L1663.3,498.0 L1660.3,496.1 L1657.7,491.6 L1655.3,488.0Z M1654.0,503.2 L1664.0,501.5 L1674.0,507.0 L1664.0,509.5 L1655.2,507.0Z M1781.5,467.0 L1789.0,454.5 L1797.8,444.5 L1791.5,459.5 L1784.0,470.0Z M1822.8,439.5 L1836.5,432.0 L1849.0,429.0 L1839.0,444.5 L1825.2,453.2Z M1740.2,494.5 L1749.0,494.0 L1751.5,499.0 L1741.5,498.8Z M1706.5,509.5 L1714.0,508.2 L1716.5,515.8 L1710.2,514.5Z M1917.2,405.8 L1928.5,402.0 L1938.5,405.8 L1933.5,412.0 L1923.5,410.8Z M1912.2,418.2 L1928.5,414.5 L1946.0,413.2 L1944.8,417.0 L1931.0,422.0 L1921.0,425.8 L1914.8,429.5 L1917.2,423.2Z M1644.0,498.2 L1649.0,499.0 L1647.0,507.0 L1644.5,505.8Z M2239.8,259.2 L2246.0,257.0 L2251.0,258.0 L2244.8,261.0Z M1977.2,260.0 L1983.5,259.0 L1985.5,261.0 L1979.8,262.0Z M1874.4,375.1 L1876.2,373.7 L1878.7,375.1 L1876.2,376.4Z M1906.0,376.1 L1907.3,375.1 L1909.0,376.1 L1907.3,377.0Z M1855.5,378.7 L1857.1,377.6 L1859.3,378.7 L1857.1,379.9Z M1873.9,380.7 L1875.9,379.3 L1878.6,380.7 L1875.9,382.1Z M1924.7,374.2 L1927.1,372.6 L1930.2,374.2 L1927.1,375.8Z M1866.0,376.2 L1868.8,374.3 L1872.4,376.2 L1868.8,378.1Z M1898.1,377.5 L1900.5,375.8 L1903.6,377.5 L1900.5,379.2Z M1859.2,377.7 L1861.4,376.1 L1864.4,377.7 L1861.4,379.3Z M1878.8,368.6 L1881.6,366.7 L1885.2,368.6 L1881.6,370.6Z M1893.4,377.2 L1896.2,375.3 L1899.8,377.2 L1896.2,379.2Z M1914.8,379.8 L1916.7,378.4 L1919.2,379.8 L1916.7,381.1Z M1921.2,373.8 L1924.1,371.8 L1927.8,373.8 L1924.1,375.8Z M1929.3,369.5 L1930.7,368.5 L1932.6,369.5 L1930.7,370.5Z M1872.5,380.3 L1874.4,378.9 L1877.0,380.3 L1874.4,381.7Z M1907.2,372.0 L1909.3,370.5 L1912.0,372.0 L1909.3,373.5Z M1886.5,372.6 L1888.8,371.1 L1891.7,372.6 L1888.8,374.2Z M1903.2,379.6 L1905.7,377.9 L1908.8,379.6 L1905.7,381.3Z M1932.0,379.0 L1935.0,376.9 L1938.8,379.0 L1935.0,381.0Z M1910.3,370.3 L1913.1,368.4 L1916.6,370.3 L1913.1,372.2Z M1935.8,379.6 L1938.0,378.0 L1940.9,379.6 L1938.0,381.1Z M1914.0,370.9 L1916.7,369.0 L1920.2,370.9 L1916.7,372.8Z M1903.4,371.8 L1904.8,370.9 L1906.5,371.8 L1904.8,372.7Z M1927.2,380.6 L1928.6,379.7 L1930.4,380.6 L1928.6,381.6Z M1922.6,373.4 L1924.1,372.4 L1926.0,373.4 L1924.1,374.4Z M1878.2,377.9 L1881.0,375.9 L1884.6,377.9 L1881.0,379.8Z M1858.5,375.9 L1859.8,375.0 L1861.4,375.9 L1859.8,376.8Z M2261.0,263.0 L2277.2,258.0 L2321.0,258.0 L2321.0,274.2 L2277.2,274.2 L2263.5,266.8Z M1614.0,787.2 L1616.3,795.8 L1616.9,801.5 L1616.6,808.0 L1615.6,813.4 L1613.7,818.6 L1611.2,822.0 L1608.0,824.2 L1604.7,823.9 L1600.8,821.1 L1598.4,818.2 L1597.1,815.0 L1595.9,811.7 L1594.6,807.8 L1594.6,804.5 L1595.9,801.2 L1598.3,798.5 L1602.2,796.0 L1605.8,794.2 L1611.5,792.2Z M1586.5,835.9 L1589.5,834.1 L1596.0,835.4 L1602.6,834.3 L1610.4,830.7 L1615.2,830.7 L1617.8,834.3 L1620.2,838.4 L1622.8,843.6 L1623.4,848.4 L1622.1,853.6 L1620.9,860.8 L1620.3,865.8 L1619.6,871.2 L1616.6,876.3 L1611.4,877.0 L1607.2,879.0 L1603.3,883.0 L1599.7,884.5 L1595.8,883.8 L1592.8,881.7 L1590.2,877.8 L1589.6,873.6 L1590.9,868.4 L1591.2,863.0 L1590.6,856.5 L1589.3,851.1 L1587.4,845.9 L1586.5,841.1Z M1688.3,911.4 L1688.3,908.2 L1692.2,905.0 L1697.0,903.2 L1703.5,902.5 L1710.1,903.2 L1717.9,905.1 L1725.7,905.7 L1731.4,905.6 L1734.8,905.0 L1737.7,905.0 L1744.1,903.8 L1748.9,902.5 L1755.2,901.9 L1759.3,902.8 L1757.4,906.7 L1755.0,911.5 L1751.8,918.0 L1751.2,922.8 L1753.1,926.7 L1753.1,930.8 L1751.2,935.7 L1747.6,937.8 L1741.7,937.4 L1736.0,935.2 L1729.5,930.6 L1722.3,926.4 L1717.2,923.6 L1713.2,921.8 L1705.4,919.0 L1697.6,917.3 L1692.2,914.9Z M1446.0,869.0 L1456.5,862.2 L1465.2,859.8 L1472.8,864.8 L1469.0,872.2 L1462.8,876.0 L1454.0,872.2Z M1481.0,858.5 L1487.8,857.8 L1492.8,862.2 L1485.2,861.5Z M1418.5,884.8 L1422.8,881.0 L1427.8,881.0 L1425.2,885.5 L1420.2,886.5Z M1729.0,952.2 L1732.8,953.0 L1737.0,957.2 L1733.5,958.0Z M1674.5,934.0 L1677.0,934.5 L1676.5,936.5 L1674.2,936.0Z M1645.2,1006.0 L1651.5,1004.8 L1651.5,1013.5 L1645.2,1013.5Z M1685.2,763.5 L1687.8,763.0 L1688.2,765.5 L1685.8,766.0Z M1929.8,886.0 L1943.5,883.5 L1958.5,891.0 L1971.0,901.0 L1977.2,904.8 L1971.0,906.0 L1958.5,898.5 L1943.5,889.8Z M1952.2,966.0 L1960.8,965.0 L1967.7,965.7 L1973.4,967.0 L1976.8,967.6 L1984.6,968.2 L1992.4,967.5 L1998.4,968.2 L2003.6,970.1 L2009.0,971.3 L2014.2,972.2 L2018.5,972.2 L2017.2,977.2 L2010.3,978.1 L2006.8,978.2 L1998.1,978.8 L1992.0,978.8 L1986.4,979.5 L1978.0,978.2 L1971.5,975.0 L1964.9,973.2 L1958.9,972.7 L1953.5,972.2Z M2052.2,951.0 L2062.2,943.5 L2064.8,946.0 L2056.0,956.0Z M2162.2,980.0 L2162.8,977.3 L2166.7,974.7 L2170.3,973.8 L2176.0,974.8 L2177.2,969.8 L2180.5,969.8 L2188.0,968.2 L2191.5,967.8 L2196.5,967.1 L2200.8,965.9 L2207.2,964.1 L2211.2,962.9 L2212.1,964.1 L2206.5,967.3 L2203.7,969.7 L2200.7,973.8 L2202.6,977.0 L2199.9,979.7 L2192.1,982.3 L2185.5,984.4 L2179.0,986.3 L2173.6,986.7 L2168.4,985.3 L2164.8,983.2Z M2008.5,877.2 L2018.5,874.8 L2024.8,879.8 L2016.0,882.2Z M2008.0,893.0 L2013.5,893.5 L2014.0,901.0 L2009.0,899.8Z M2026.0,911.5 L2036.0,912.2 L2033.5,914.8 L2026.5,914.0Z M1859.0,864.8 L1866.0,866.0 L1871.0,873.5 L1866.0,871.0Z M1876.0,898.5 L1883.5,897.2 L1884.8,903.5 L1878.5,903.5Z M1883.0,909.8 L1889.8,913.0 L1886.0,914.8Z M1947.2,853.5 L1954.8,854.8 L1952.2,859.8 L1946.0,858.5Z M1977.2,839.8 L1982.2,841.0 L1981.0,844.8 L1976.5,843.5Z M1988.5,859.8 L1996.0,858.5 L1994.8,863.0 L1989.0,863.0Z M2003.5,853.5 L2011.0,854.0 L2008.5,856.5 L2004.0,856.0Z M1997.2,926.0 L2001.0,927.2 L1999.8,932.2 L1996.0,930.5Z M1973.5,884.0 L1977.2,883.5 L1979.2,888.0 L1975.5,887.5Z M1937.2,947.2 L1941.5,948.0 L1940.5,951.0 L1936.8,950.0Z M2037.2,959.8 L2039.8,959.0 L2040.2,967.2 L2037.8,966.5Z M2021.0,891.0 L2028.5,893.0 L2031.0,898.5 L2023.5,897.2Z M1979.8,906.5 L1986.0,911.0 L1984.0,913.0 L1979.0,909.0Z M2006.3,945.6 L2007.0,946.7 L2006.4,948.0 L2005.6,947.1Z M1992.4,927.7 L1992.4,929.7 L1990.7,930.8 L1990.4,929.1Z M2008.1,947.4 L2007.8,949.7 L2005.5,950.8 L2005.4,948.7Z M1991.1,932.3 L1992.4,932.6 L1992.9,933.9 L1991.8,933.9Z M2025.2,931.2 L2026.8,930.3 L2028.5,931.4 L2027.2,932.3Z M2051.7,944.1 L2052.9,944.7 L2053.0,946.1 L2051.9,945.8Z M2014.4,875.4 L2018.2,875.0 L2020.6,878.3 L2017.4,879.1Z M1945.8,873.4 L1946.9,872.8 L1948.1,873.6 L1947.2,874.2Z M2004.7,947.4 L2006.4,948.3 L2006.4,950.3 L2004.9,949.7Z M2011.7,881.6 L2015.2,879.4 L2019.2,881.4 L2016.5,883.8Z M2011.6,919.8 L2012.9,919.9 L2013.6,921.3 L2012.4,921.3Z M2065.9,954.7 L2066.1,956.0 L2064.9,956.9 L2064.6,955.7Z M2023.9,918.9 L2026.8,917.5 L2029.7,919.3 L2027.4,920.9Z M1986.9,941.7 L1988.7,943.2 L1988.4,945.7 L1986.6,944.7Z M1992.1,955.1 L1993.9,953.6 L1996.3,954.4 L1994.9,955.9Z M1985.8,873.0 L1985.6,874.3 L1984.2,874.9 L1984.2,873.7Z M1948.4,933.2 L1950.7,935.6 L1949.7,939.1 L1947.4,937.3Z M1972.8,951.4 L1974.4,952.1 L1974.6,954.1 L1973.1,953.6Z M1953.3,953.3 L1952.4,954.4 L1950.9,954.2 L1951.5,953.2Z M1990.3,917.9 L1994.2,919.4 L1995.0,923.9 L1991.4,923.1Z M1959.8,873.8 L1962.3,872.3 L1964.9,873.8 L1963.0,875.3Z M1998.6,926.9 L2001.4,928.3 L2001.7,931.6 L1999.1,930.8Z M2031.1,932.1 L2033.7,934.7 L2032.6,938.6 L2030.1,936.6Z M1958.2,869.1 L1958.6,870.4 L1957.7,871.6 L1957.1,870.5Z M1954.8,936.4 L1955.9,935.5 L1957.4,936.0 L1956.5,936.9Z M1966.0,905.3 L1968.0,906.3 L1968.2,908.8 L1966.3,908.1Z M1966.4,905.6 L1968.8,908.9 L1967.1,912.9 L1964.6,910.4Z M2064.9,943.9 L2066.3,945.7 L2065.4,947.9 L2064.0,946.6Z M2010.8,946.7 L2011.1,947.9 L2010.2,949.0 L2009.7,947.9Z M2008.3,892.7 L2011.0,891.5 L2013.6,893.3 L2011.4,894.7Z M2030.4,904.9 L2031.0,906.9 L2029.6,908.6 L2028.8,907.0Z M1953.7,919.4 L1953.0,920.9 L1951.1,921.1 L1951.5,919.7Z M1974.3,937.4 L1975.3,940.1 L1973.3,942.6 L1972.0,940.4Z M2016.4,918.9 L2018.8,920.3 L2018.8,923.3 L2016.6,922.4Z M1953.0,883.0 L1954.2,882.3 L1955.5,883.0 L1954.6,883.8Z M1986.5,908.6 L1988.3,907.2 L1990.5,908.1 L1989.2,909.4Z M2060.0,954.3 L2063.1,953.0 L2066.2,955.1 L2063.6,956.7Z M1986.7,886.2 L1988.1,886.1 L1989.0,887.4 L1987.7,887.6Z M1957.0,873.5 L1960.9,875.3 L1961.4,879.9 L1957.9,878.8Z M2007.5,898.5 L2009.0,898.6 L2009.7,900.0 L2008.4,900.1Z M1957.4,937.3 L1958.7,937.4 L1959.4,938.6 L1958.2,938.7Z M1984.6,935.0 L1983.9,939.2 L1979.6,940.9 L1979.7,937.2Z M2057.3,948.3 L2055.3,951.3 L2051.3,951.2 L2052.7,948.3Z M1982.9,886.7 L1984.8,887.4 L1985.3,889.6 L1983.5,889.3Z M2017.6,916.5 L2019.5,916.2 L2020.8,917.8 L2019.2,918.3Z M2008.8,882.4 L2011.4,881.6 L2013.5,883.5 L2011.5,884.5Z M1725.5,737.5 L1732.6,743.0 L1732.3,745.1 L1725.0,739.9Z M1731.6,733.9 L1737.1,738.1 L1737.2,739.7 L1731.5,735.7Z M1734.5,744.2 L1740.9,749.1 L1740.8,750.9 L1734.3,746.2Z M1741.1,750.4 L1749.1,756.5 L1749.2,758.1 L1741.0,752.3Z M1748.6,748.4 L1754.1,752.7 L1754.3,754.2 L1748.6,750.1Z M1754.0,760.3 L1761.2,765.7 L1761.3,767.3 L1754.0,762.1Z M1761.5,767.4 L1766.2,771.1 L1766.3,772.7 L1761.4,769.2Z M1775.4,773.9 L1782.5,779.4 L1782.5,781.2 L1775.1,775.9Z M1782.4,778.0 L1790.4,784.0 L1790.4,785.6 L1782.3,779.8Z M1786.8,783.2 L1793.2,788.0 L1793.5,789.4 L1787.0,784.7Z M1795.3,782.8 L1802.5,788.2 L1802.5,789.8 L1795.2,784.6Z M1806.0,788.9 L1811.6,793.2 L1811.8,794.6 L1806.1,790.6Z M1791.0,790.6 L1794.1,793.1 L1794.3,794.5 L1791.1,792.2Z M1773.9,784.6 L1776.2,786.5 L1776.4,787.9 L1774.0,786.2Z M1819.3,796.6 L1823.3,799.6 L1823.5,801.0 L1819.4,798.1Z M1622.0,786.0 L1624.0,784.5 L1626.5,786.0 L1624.0,787.5Z M1633.2,792.2 L1635.2,790.8 L1637.8,792.2 L1635.2,793.8Z M1627.0,797.2 L1629.0,795.8 L1631.5,797.2 L1629.0,798.8Z M1647.0,802.2 L1649.0,800.8 L1651.5,802.2 L1649.0,803.8Z M1719.5,841.0 L1721.5,839.5 L1724.0,841.0 L1721.5,842.5Z M1750.8,888.0 L1752.8,886.5 L1755.2,888.0 L1752.8,889.5Z M1744.5,894.8 L1746.5,893.2 L1749.0,894.8 L1746.5,896.2Z M1735.8,893.0 L1737.8,891.5 L1740.2,893.0 L1737.8,894.5Z M1702.0,889.8 L1704.0,888.2 L1706.5,889.8 L1704.0,891.2Z M1687.0,966.0 L1689.0,964.5 L1691.5,966.0 L1689.0,967.5Z M1694.5,957.2 L1696.5,955.8 L1699.0,957.2 L1696.5,958.8Z M1675.8,907.2 L1677.8,905.8 L1680.2,907.2 L1677.8,908.8Z M1777.0,166.2 L1774.4,165.9 L1771.8,164.2 L1774.9,164.7Z M1777.1,165.5 L1775.4,165.4 L1771.6,164.0 L1772.1,161.8 L1774.4,162.1 L1777.1,163.9Z M1775.8,176.0 L1775.5,172.5 L1778.2,168.5 L1779.9,169.8 L1778.3,173.4Z M1766.9,183.4 L1759.8,183.6 L1749.7,176.6 L1761.8,178.5Z M1743.5,174.1 L1742.9,172.7 L1742.9,170.8 L1743.8,170.9 L1744.1,172.7Z M1749.2,170.9 L1748.9,168.1 L1751.0,166.1 L1751.0,168.9Z M1747.1,187.8 L1742.9,184.1 L1742.8,179.5 L1745.8,182.6Z M1744.5,183.9 L1743.1,183.7 L1742.9,181.2 L1743.8,180.4 L1745.4,182.8Z M1733.5,186.8 L1731.6,185.5 L1730.1,182.8 L1731.7,183.1 L1733.1,184.5Z M1738.2,198.2 L1731.6,194.0 L1729.7,188.1 L1736.8,189.7Z M1733.0,202.2 L1735.4,196.8 L1739.2,196.7 L1738.9,200.7Z M1720.8,189.2 L1721.7,187.1 L1724.0,186.1 L1724.9,186.8 L1723.1,189.1Z M1725.5,185.8 L1723.6,186.8 L1721.4,185.6 L1720.7,184.4 L1723.7,184.6Z M1731.4,196.2 L1731.4,194.5 L1733.8,192.2 L1735.7,192.2 L1734.9,194.1 L1733.3,195.4Z M1724.1,207.2 L1722.0,206.0 L1721.1,203.1 L1722.2,202.1 L1723.8,204.8Z M1711.9,206.5 L1713.7,205.0 L1716.4,204.3 L1716.2,205.6 L1714.2,206.8Z M1704.6,219.2 L1703.7,218.0 L1706.3,216.4 L1708.7,215.4 L1708.3,217.5 L1705.8,219.7Z M1698.3,220.6 L1694.6,220.5 L1692.3,217.3 L1696.1,217.8Z M1682.1,227.0 L1681.2,224.2 L1683.1,219.6 L1685.8,219.7 L1684.8,225.6Z M1687.5,223.9 L1685.6,226.1 L1680.0,226.0 L1679.4,223.9 L1679.9,221.7 L1684.5,222.6Z M1684.6,221.9 L1684.5,219.2 L1687.6,217.3 L1686.7,220.7Z M1670.2,248.8 L1673.6,245.6 L1678.5,247.0 L1674.6,250.1Z M1686.3,239.0 L1681.8,239.6 L1678.2,237.2 L1682.5,236.6Z M1679.7,237.3 L1680.1,235.2 L1683.4,234.3 L1684.6,235.3 L1681.7,238.0Z M1682.5,254.2 L1680.0,253.2 L1678.8,249.5 L1678.7,246.7 L1680.9,248.5 L1683.0,251.6Z M1674.5,252.3 L1671.4,250.2 L1670.5,245.5 L1672.3,243.9 L1675.9,248.8Z M1677.8,244.1 L1675.1,244.9 L1672.9,244.1 L1675.1,242.9Z M1674.1,241.5 L1676.7,239.9 L1678.7,240.1 L1677.1,241.5Z M1666.6,255.5 L1660.8,252.7 L1659.8,243.2 L1663.5,242.9 L1666.5,248.9Z M1659.2,262.7 L1658.9,257.5 L1663.3,254.0 L1663.6,259.7Z M1663.7,242.8 L1660.4,241.4 L1655.3,234.9 L1659.8,235.2 L1664.1,239.3Z M1663.8,249.7 L1657.1,249.4 L1650.9,243.0 L1654.0,241.0 L1661.6,243.4Z M1646.9,283.0 L1647.7,279.9 L1650.0,279.1 L1649.7,281.4Z M1648.1,258.9 L1644.4,256.8 L1642.6,253.8 L1641.5,250.7 L1644.3,251.4 L1648.0,255.1Z M1635.2,256.6 L1631.5,256.5 L1629.2,252.7 L1633.0,254.1Z M1647.5,263.5 L1646.2,264.7 L1643.0,263.7 L1641.0,262.2 L1643.3,261.4 L1646.2,262.1Z M1626.5,256.1 L1632.3,253.7 L1637.0,254.4 L1632.8,257.1Z M1656.6,264.4 L1651.8,265.1 L1645.7,260.9 L1648.5,259.1 L1653.6,260.5Z M1641.2,271.5 L1640.3,269.4 L1644.5,266.5 L1647.8,266.1 L1647.3,269.3 L1643.2,272.1Z M1609.8,279.1 L1617.7,273.3 L1627.4,268.7 L1625.1,274.4 L1618.8,280.5Z M1612.1,273.0 L1615.1,269.4 L1620.7,266.8 L1621.8,269.6 L1616.7,272.5Z M1632.0,276.0 L1630.2,276.2 L1629.3,272.0 L1629.8,267.8 L1632.7,270.1 L1633.8,275.4Z M1620.5,270.7 L1620.4,269.6 L1622.5,268.1 L1624.7,267.9 L1623.0,269.8 L1621.3,271.6Z M1621.9,265.6 L1623.0,264.2 L1626.1,263.6 L1629.1,264.4 L1625.9,265.8 L1623.1,266.9Z M1629.5,269.0 L1627.6,269.2 L1625.2,268.7 L1625.2,267.6 L1626.1,267.0 L1628.2,267.6Z M1603.3,277.1 L1600.0,278.2 L1598.7,275.4 L1601.2,275.1Z M1614.5,292.4 L1613.7,290.9 L1613.3,287.7 L1615.0,287.8 L1615.7,291.2Z M1617.9,279.7 L1617.6,278.6 L1618.5,276.1 L1619.8,276.6 L1619.1,279.3Z M1610.6,270.9 L1608.9,271.5 L1607.1,271.2 L1605.9,270.5 L1607.2,270.0 L1609.3,269.8Z M1618.4,277.9 L1614.0,273.7 L1613.7,269.1 L1616.8,272.1Z M1588.0,289.6 L1592.4,283.7 L1597.0,279.8 L1600.7,281.5 L1594.6,287.8Z M1597.8,272.9 L1598.5,271.7 L1601.0,271.2 L1602.6,271.8 L1601.5,273.0 L1599.0,273.6Z M1599.7,290.5 L1598.1,289.8 L1596.7,287.5 L1596.5,285.3 L1598.5,286.1 L1599.5,288.6Z M1600.2,283.0 L1599.6,279.0 L1599.9,275.7 L1601.8,272.3 L1602.9,275.7 L1602.2,279.9Z M1601.8,290.8 L1603.1,289.3 L1605.4,289.1 L1605.6,290.0 L1603.7,291.2Z M1587.6,294.3 L1584.4,290.4 L1587.1,285.5 L1588.8,290.1Z M1572.6,292.8 L1574.0,289.7 L1578.7,288.4 L1579.4,290.3 L1576.1,292.6Z M1565.8,277.6 L1572.5,274.0 L1579.0,275.4 L1573.3,279.0Z M1583.7,294.4 L1581.1,294.2 L1581.7,287.9 L1584.0,284.5 L1585.7,288.5 L1585.7,293.4Z M1580.3,283.8 L1576.3,283.8 L1573.4,281.0 L1572.0,277.4 L1578.0,280.5Z M1576.7,290.7 L1573.7,290.6 L1569.6,286.3 L1571.3,283.8 L1576.6,287.6Z M1566.7,303.7 L1563.3,304.6 L1558.8,303.0 L1560.9,301.7 L1563.6,301.8Z M1563.8,298.1 L1560.0,297.6 L1553.5,295.4 L1554.2,291.8 L1557.8,291.2 L1561.7,294.8Z M1562.0,307.5 L1559.8,305.7 L1559.5,300.3 L1561.4,296.3 L1564.2,299.3 L1564.1,305.6Z M1569.6,287.6 L1568.4,286.6 L1568.2,283.8 L1569.2,282.9 L1569.9,284.4 L1570.6,286.5Z M1571.5,303.3 L1570.5,301.3 L1569.9,299.0 L1570.8,297.0 L1572.0,298.8 L1572.5,301.6Z M1536.3,299.7 L1539.1,294.3 L1545.2,291.6 L1547.5,293.7 L1542.4,298.9Z M1543.9,309.5 L1538.6,313.1 L1530.9,311.1 L1530.1,307.6 L1537.3,307.7Z M1535.8,304.1 L1532.5,302.8 L1529.6,299.1 L1530.6,296.2 L1535.4,300.6Z M1554.5,306.9 L1551.7,308.1 L1549.7,306.6 L1551.8,305.9Z M1538.7,299.7 L1536.4,298.9 L1534.5,297.8 L1533.7,296.1 L1535.5,296.2 L1538.2,297.7Z M1537.4,311.6 L1528.9,310.8 L1524.0,302.8 L1533.1,304.4Z M1531.8,315.1 L1530.5,315.5 L1528.1,314.9 L1527.4,313.6 L1528.8,313.1 L1531.7,313.7Z M1533.4,312.3 L1525.7,313.1 L1518.5,308.0 L1527.1,308.4Z M1506.0,332.7 L1504.9,332.2 L1504.1,329.8 L1504.9,329.1 L1506.1,329.0 L1506.3,331.5Z M1504.1,333.5 L1506.4,326.3 L1513.7,324.9 L1510.8,331.2Z M1507.8,332.2 L1506.0,331.2 L1505.1,329.0 L1504.9,327.0 L1506.4,328.3 L1508.4,330.5Z M1507.6,325.5 L1506.5,325.7 L1505.6,323.0 L1506.6,322.6 L1507.6,322.3 L1508.4,324.9Z M1520.9,323.0 L1518.2,322.2 L1516.6,320.0 L1519.3,320.7Z M1484.2,353.4 L1485.2,350.9 L1487.6,349.5 L1488.6,350.3 L1486.7,352.1Z M1493.1,355.8 L1491.6,354.9 L1490.7,353.0 L1491.5,352.3 L1493.7,354.1Z M1490.9,343.8 L1484.3,343.8 L1477.3,338.3 L1480.5,336.0 L1487.7,338.0Z M1493.6,349.4 L1491.7,347.7 L1492.6,343.9 L1494.0,347.3Z M1495.2,356.7 L1494.1,356.2 L1492.6,354.3 L1492.9,352.7 L1494.4,353.3 L1495.3,355.5Z M1491.4,354.7 L1495.0,352.7 L1498.7,353.8 L1495.4,356.1Z M1497.2,358.6 L1495.3,358.6 L1493.6,356.9 L1495.9,357.3Z M1496.0,374.1 L1497.0,370.8 L1499.6,369.8 L1499.5,372.9Z M1508.6,373.9 L1506.5,372.9 L1505.1,369.4 L1508.2,371.6Z M1508.1,381.0 L1508.9,380.2 L1510.8,379.8 L1512.6,380.3 L1510.8,381.2 L1509.1,381.5Z M1508.8,385.1 L1506.8,385.3 L1505.5,381.1 L1506.1,378.7 L1508.3,379.4 L1510.9,384.1Z M1517.2,386.1 L1510.2,385.2 L1505.3,380.9 L1506.1,377.8 L1514.4,379.8Z M1501.6,404.3 L1504.0,400.0 L1508.0,399.0 L1506.6,403.0Z M1505.8,402.7 L1504.8,400.4 L1506.4,398.9 L1506.9,400.7Z M1509.6,398.5 L1506.9,397.8 L1505.7,396.0 L1508.2,395.7Z M1514.1,408.2 L1509.8,407.1 L1508.7,404.6 L1511.6,404.5Z M1512.9,409.3 L1517.1,406.6 L1523.1,405.0 L1524.8,408.2 L1517.5,410.4Z M1542.1,427.1 L1541.0,426.7 L1540.6,424.2 L1541.7,424.2 L1542.5,426.1Z M1528.4,421.9 L1527.5,421.5 L1526.6,419.2 L1527.7,419.0 L1528.5,419.2 L1529.0,421.1Z M1966.7,115.1 L1967.2,113.2 L1969.5,110.9 L1972.7,110.0 L1972.7,112.9 L1968.3,116.6Z M1970.1,117.3 L1968.1,115.5 L1969.7,109.6 L1972.9,106.3 L1975.5,109.7 L1972.4,116.0Z M1973.1,115.9 L1971.4,115.2 L1970.6,113.0 L1971.1,111.6 L1972.9,114.1Z M1955.2,119.5 L1953.5,119.1 L1953.6,115.2 L1954.9,114.3 L1956.2,115.1 L1955.9,117.8Z M1951.9,113.6 L1945.8,113.5 L1940.1,109.4 L1938.9,104.1 L1949.1,108.3Z M1941.0,118.6 L1944.9,115.2 L1948.3,115.6 L1946.4,118.8Z M1930.9,119.9 L1931.7,112.9 L1935.6,108.1 L1935.4,114.5Z M1946.7,122.5 L1945.3,121.4 L1945.3,117.9 L1946.6,114.9 L1948.4,117.3 L1947.8,121.1Z M1932.2,114.8 L1931.9,107.1 L1939.3,103.8 L1938.4,111.2Z M1933.2,115.7 L1932.6,113.1 L1934.4,109.6 L1935.8,110.0 L1937.3,110.6 L1935.4,113.8Z M1916.4,116.4 L1918.0,115.3 L1920.9,115.6 L1918.3,117.2Z M1923.5,117.6 L1922.0,115.9 L1920.6,113.4 L1922.1,113.2 L1923.2,115.3Z M1929.9,120.7 L1926.2,118.5 L1925.6,115.6 L1928.6,116.5Z M1889.7,133.3 L1895.4,128.4 L1900.0,130.0 L1896.8,132.6Z M1904.0,128.4 L1902.1,127.9 L1900.7,126.4 L1900.1,125.0 L1901.4,124.7 L1902.8,126.5Z M1891.9,130.6 L1890.4,127.6 L1890.4,122.3 L1893.5,121.1 L1894.0,128.1Z M1883.9,137.0 L1882.3,136.5 L1880.2,133.4 L1881.2,131.8 L1883.0,132.8 L1884.2,135.4Z M1883.6,136.4 L1878.5,135.1 L1875.2,130.4 L1876.6,128.0 L1880.9,131.7Z M1883.8,126.1 L1885.4,124.4 L1887.4,122.7 L1889.0,123.2 L1887.8,124.7 L1886.1,125.6Z M1890.3,127.3 L1891.6,125.5 L1896.9,125.9 L1897.7,128.7 L1891.9,128.8Z M1887.3,127.5 L1888.2,125.8 L1889.8,123.7 L1891.0,124.4 L1891.3,125.6 L1889.0,127.3Z M1887.8,138.7 L1888.6,131.0 L1894.0,126.6 L1893.7,133.6Z M1885.0,122.3 L1882.3,124.0 L1878.0,123.9 L1875.3,122.3 L1878.8,121.4 L1882.6,120.4Z M1856.8,126.9 L1862.2,123.9 L1867.0,125.7 L1862.8,129.1Z M1869.4,137.4 L1868.9,133.4 L1872.9,127.1 L1877.1,126.2 L1877.0,130.7 L1873.3,136.2Z M1878.4,127.1 L1877.5,127.6 L1875.6,127.4 L1873.7,126.3 L1876.2,126.2 L1878.4,125.9Z M1873.6,129.9 L1870.6,131.5 L1868.4,129.9 L1870.7,128.3Z M1848.6,133.7 L1852.1,130.5 L1854.9,131.7 L1853.3,134.1Z M1839.3,130.4 L1834.8,129.7 L1830.2,128.9 L1830.7,126.6 L1832.1,125.0 L1835.6,127.6Z M1829.2,142.0 L1828.3,141.9 L1827.8,140.0 L1828.1,139.0 L1829.0,139.8 L1829.9,141.4Z M1832.9,143.0 L1830.4,136.8 L1833.2,128.4 L1837.6,128.2 L1836.5,137.2Z M1813.2,138.6 L1810.3,137.9 L1807.8,133.4 L1812.4,135.7Z M1825.5,144.5 L1823.7,145.1 L1821.3,144.0 L1824.0,143.0Z M1808.0,141.6 L1809.9,140.4 L1811.8,141.4 L1810.0,142.6Z M1812.1,144.6 L1810.2,146.5 L1804.8,143.6 L1801.9,139.8 L1806.7,139.8 L1813.8,141.6Z M1805.1,150.6 L1807.0,149.5 L1808.8,150.0 L1807.3,151.3Z M1790.3,156.8 L1794.1,153.0 L1797.9,152.6 L1795.4,155.3Z M1794.7,148.0 L1797.3,146.1 L1799.4,146.2 L1797.9,147.7Z M1785.0,166.8 L1783.0,165.2 L1782.6,163.5 L1784.3,164.3Z M1774.9,161.4 L1773.7,158.1 L1779.1,152.9 L1782.0,154.7 L1778.4,161.5Z M1777.0,159.6 L1775.4,159.1 L1774.2,157.7 L1773.4,155.9 L1775.0,156.3 L1776.3,158.0Z M1774.5,153.8 L1775.5,151.6 L1779.0,148.7 L1781.7,149.5 L1781.2,152.3 L1776.6,154.8Z M1777.6,164.6 L1777.0,161.6 L1781.1,158.4 L1785.9,155.1 L1784.8,160.0 L1780.6,165.0Z M1776.4,169.6 L1773.1,167.4 L1773.2,157.4 L1777.6,154.5 L1781.6,157.8 L1780.2,168.0Z M1749.5,159.9 L1752.0,156.0 L1756.1,152.9 L1759.4,153.2 L1760.2,156.5 L1753.4,161.0Z M1765.7,168.2 L1758.0,161.8 L1756.9,152.2 L1763.9,158.5Z M1765.6,157.4 L1764.8,158.0 L1763.3,157.4 L1763.2,156.7 L1765.1,156.5Z M1758.2,156.7 L1748.4,157.9 L1741.0,153.6 L1749.8,150.1Z M1746.0,161.6 L1746.5,160.0 L1748.6,158.5 L1750.3,158.5 L1749.8,160.1 L1747.8,161.2Z M1747.8,166.1 L1745.9,162.8 L1746.9,159.9 L1749.4,162.3Z M1740.4,171.7 L1739.2,168.3 L1739.3,164.6 L1741.0,161.0 L1743.6,163.3 L1742.7,169.6Z M1725.3,159.5 L1730.0,155.8 L1735.9,156.7 L1731.1,160.0Z M1748.8,154.9 L1747.5,156.8 L1744.6,153.2 L1743.4,150.6 L1746.0,150.5 L1750.3,153.3Z M1731.4,176.3 L1730.0,174.7 L1730.1,171.8 L1731.4,171.5 L1732.4,174.4Z M1716.4,177.0 L1717.1,175.5 L1720.2,173.6 L1720.3,175.5 L1718.0,177.4Z M1714.4,180.5 L1715.1,178.7 L1717.2,177.6 L1719.4,176.8 L1718.1,178.7 L1716.4,180.1Z M1735.8,181.3 L1733.0,184.1 L1725.7,182.1 L1721.0,178.7 L1727.2,177.9 L1732.7,178.5Z M1724.7,181.3 L1722.7,180.2 L1721.8,178.3 L1724.1,178.9Z M1716.2,176.6 L1715.3,177.3 L1713.2,175.2 L1713.7,174.1 L1714.8,174.1 L1716.6,175.6Z M1717.8,180.5 L1716.3,181.2 L1714.5,181.0 L1714.5,180.1 L1716.5,179.6Z M1690.7,189.4 L1689.1,186.6 L1689.8,183.9 L1691.5,186.2Z M1703.4,182.5 L1704.8,181.5 L1707.7,181.1 L1706.7,182.4 L1705.2,182.8Z M1711.5,176.5 L1705.6,177.7 L1697.7,176.2 L1700.8,173.4 L1707.4,172.3Z M2090.2,139.6 L2089.8,137.3 L2093.2,135.4 L2095.3,136.0 L2092.4,140.3Z M2095.5,142.8 L2090.6,144.0 L2080.2,141.9 L2085.3,138.7 L2092.0,139.2Z M2103.2,144.7 L2102.6,142.5 L2104.2,141.0 L2105.2,143.2Z M2077.3,144.7 L2077.9,142.9 L2079.1,141.3 L2080.3,141.6 L2078.8,143.7Z M2104.3,141.6 L2101.3,142.6 L2098.3,141.2 L2098.1,139.7 L2101.5,139.9Z M2121.1,142.3 L2118.0,141.5 L2114.5,138.0 L2117.2,137.9 L2120.5,139.2Z M2126.5,138.3 L2125.2,137.1 L2123.9,135.5 L2124.3,134.1 L2125.6,134.9 L2126.8,136.9Z M2127.1,142.2 L2127.9,139.8 L2130.9,136.6 L2134.3,136.3 L2132.1,139.6 L2129.8,141.5Z M2133.9,124.5 L2131.9,124.9 L2129.2,124.3 L2127.6,122.8 L2129.6,122.0 L2132.3,123.1Z M2112.7,131.8 L2111.8,123.5 L2117.3,117.9 L2117.9,125.5Z M2097.2,119.2 L2095.7,120.4 L2092.5,119.3 L2090.3,117.7 L2091.6,115.7 L2095.7,117.8Z M2100.0,126.8 L2092.5,122.9 L2088.9,113.6 L2098.3,118.1Z M2073.0,119.2 L2073.9,115.7 L2076.7,111.7 L2078.3,113.5 L2076.0,117.3Z M2083.0,122.5 L2079.1,120.1 L2076.7,117.6 L2075.0,113.6 L2078.7,114.4 L2081.1,118.4Z M2067.5,128.5 L2065.4,127.3 L2064.0,125.2 L2065.3,125.2 L2067.3,126.2Z M2067.6,113.1 L2065.2,111.5 L2064.6,106.4 L2066.8,106.1 L2068.4,110.3Z M2045.8,113.4 L2048.8,109.2 L2054.3,106.9 L2050.9,112.0Z M2040.1,114.5 L2040.9,112.8 L2044.2,109.9 L2046.5,111.1 L2045.9,113.5 L2041.5,115.9Z M2032.9,123.6 L2035.2,118.1 L2037.3,113.6 L2041.4,112.0 L2039.9,116.7 L2037.5,122.1Z M2025.4,121.6 L2026.2,120.0 L2030.2,119.7 L2032.3,121.2 L2030.3,122.8 L2026.9,122.5Z M2018.8,113.7 L2024.7,110.0 L2032.0,112.5 L2025.3,116.0Z M2016.0,119.0 L2014.3,119.0 L2013.0,116.7 L2013.5,115.4 L2016.0,117.4Z M2007.7,122.8 L2008.8,121.3 L2013.3,120.5 L2014.2,122.5 L2012.2,123.7 L2008.9,124.2Z M2015.7,110.1 L2013.8,110.2 L2012.8,107.9 L2015.1,108.5Z M1988.6,113.3 L1992.4,110.0 L1996.9,111.5 L1993.3,114.5Z M1996.3,123.4 L1990.8,119.0 L1991.4,110.3 L1997.1,116.7Z M1989.2,130.1 L1987.4,131.4 L1985.3,130.4 L1984.7,129.5 L1987.2,129.1Z M2006.2,131.8 L2004.7,132.9 L2001.2,130.1 L1999.4,126.9 L2003.0,127.4 L2005.6,130.0Z M1721.6,199.2 L1719.2,193.0 L1722.6,186.2 L1724.8,193.4Z M1747.9,196.8 L1739.7,192.3 L1735.1,183.7 L1743.9,188.2Z M1742.4,194.8 L1737.9,195.1 L1733.7,193.6 L1734.0,191.3 L1739.5,191.7Z M1738.0,194.0 L1735.8,194.3 L1732.2,192.9 L1732.7,190.8 L1736.4,192.4Z M1749.3,194.7 L1745.8,196.6 L1740.4,193.0 L1738.1,190.1 L1741.7,189.5 L1746.3,191.5Z M1739.4,189.7 L1737.7,189.3 L1737.0,186.1 L1738.2,185.5 L1740.5,188.2Z M1761.2,196.3 L1759.2,191.9 L1765.8,183.6 L1771.2,185.0 L1766.4,196.5Z M2.8,31.6 L2.2,29.7 L2.9,26.8 L4.2,27.2 L4.0,29.9Z M11.2,23.2 L7.9,25.0 L2.6,23.0 L8.0,20.1Z M-1.4,37.8 L2.0,31.6 L9.3,28.4 L18.1,25.8 L13.1,32.7 L6.6,35.2Z M13.1,37.5 L14.2,36.3 L16.6,35.3 L17.6,36.1 L16.8,37.2 L14.8,37.8Z M11.6,29.7 L10.7,28.5 L10.5,26.4 L11.2,24.8 L12.3,25.9 L12.5,28.6Z M26.1,35.2 L25.2,34.4 L26.2,32.3 L27.3,30.6 L27.6,32.5 L27.1,34.5Z M23.6,34.0 L22.6,32.5 L23.1,30.2 L24.1,30.2 L24.4,32.4Z M41.6,49.1 L37.7,46.1 L34.6,38.6 L36.3,32.7 L41.2,36.0 L43.8,44.9Z M34.4,38.4 L31.3,39.8 L25.4,36.0 L25.8,32.1 L32.9,35.5Z M31.5,47.2 L37.1,43.1 L42.4,39.8 L48.2,40.7 L45.6,45.6 L36.4,49.6Z M41.4,51.6 L38.4,48.4 L38.3,43.6 L40.1,44.1 L42.7,47.4Z M45.1,45.2 L41.5,43.1 L38.6,36.1 L44.8,40.7Z M56.4,53.5 L53.5,54.7 L47.7,55.2 L46.4,52.3 L50.0,51.3 L54.8,51.1Z M57.6,73.3 L58.3,65.9 L66.1,59.9 L63.0,68.9Z M53.6,56.1 L50.7,54.4 L49.3,50.7 L51.0,50.7 L52.8,52.7Z M66.7,67.3 L71.8,62.9 L77.9,62.7 L73.7,67.5Z M83.7,82.6 L79.1,75.5 L80.6,70.8 L85.1,73.9Z M64.8,73.6 L65.8,72.3 L67.3,71.0 L68.3,71.5 L67.9,72.6 L66.2,73.8Z M79.6,72.7 L77.8,72.9 L74.3,69.7 L74.5,66.7 L77.5,67.9 L79.3,70.8Z M68.0,64.4 L76.4,58.8 L83.9,59.8 L78.4,65.4Z M64.1,79.5 L58.8,77.9 L55.2,75.8 L55.4,73.0 L60.0,75.9Z M41.3,106.3 L36.7,99.4 L38.1,91.0 L42.0,88.7 L43.3,98.0Z M52.0,92.6 L51.4,91.4 L53.8,89.8 L56.6,88.5 L56.1,91.2 L52.9,93.7Z M55.7,85.8 L53.7,86.1 L51.7,85.3 L50.4,84.1 L52.0,83.7 L54.7,84.2Z M74.8,113.0 L72.8,110.4 L73.9,108.4 L75.3,109.9Z M71.6,110.6 L69.8,111.2 L67.2,110.6 L67.0,109.5 L68.1,109.1 L70.3,109.2Z M116.5,109.5 L114.5,108.5 L113.0,105.2 L114.8,105.5 L116.5,107.3Z M111.4,111.6 L104.7,104.3 L108.2,96.9 L112.4,102.6Z M111.5,104.1 L109.3,98.8 L110.9,95.5 L113.8,98.5Z M112.3,94.2 L109.5,90.4 L108.6,83.6 L111.0,79.7 L113.7,83.7 L115.1,90.7Z M102.0,91.4 L100.5,90.2 L101.1,86.8 L102.7,89.8Z M103.2,89.8 L104.0,86.4 L107.8,80.7 L110.2,83.3 L106.5,89.1Z M103.7,92.5 L101.4,92.3 L97.5,89.5 L99.4,88.0 L103.7,90.1Z M111.3,101.0 L110.0,99.0 L110.6,95.7 L111.9,93.3 L113.2,95.4 L112.6,98.7Z M119.8,102.6 L120.3,100.8 L122.5,98.9 L123.6,99.9 L121.5,101.9Z M125.0,100.6 L125.3,99.0 L128.7,97.4 L129.5,99.0 L126.5,101.7Z M114.6,98.2 L118.8,95.7 L125.7,96.0 L126.7,99.5 L118.4,101.2Z M184.2,146.0 L183.0,144.7 L182.9,142.6 L184.6,144.2Z M187.1,153.0 L187.1,150.7 L188.3,148.4 L189.6,148.6 L188.7,151.3Z M188.1,152.6 L185.8,150.7 L187.4,144.1 L189.6,146.5 L190.6,151.0Z M186.5,146.5 L184.7,146.0 L182.6,145.4 L182.0,143.8 L183.7,143.7 L185.6,145.0Z M176.2,153.9 L179.6,151.7 L184.7,151.8 L180.3,154.9Z M185.9,157.0 L183.0,157.5 L181.5,156.0 L183.5,155.4Z M165.5,159.1 L163.3,159.7 L160.5,158.6 L160.4,157.0 L164.0,157.4Z M166.0,175.3 L161.3,168.7 L162.3,160.0 L166.6,167.4Z M166.2,168.4 L163.4,168.3 L160.8,167.0 L161.2,165.6 L165.1,166.0Z M162.6,156.3 L164.9,154.9 L167.2,155.2 L165.3,156.6Z M182.2,179.6 L174.9,177.7 L173.3,173.7 L177.6,173.6Z M165.1,183.5 L166.0,179.8 L168.8,177.9 L167.8,181.0Z M166.1,177.3 L169.0,174.8 L173.4,173.6 L174.4,175.2 L173.5,176.8 L169.8,178.1Z M173.3,175.8 L172.2,176.2 L170.6,174.7 L170.7,173.6 L173.1,174.6Z M164.0,174.6 L162.6,174.5 L160.7,172.3 L161.9,171.8 L163.9,173.1Z M147.5,176.0 L148.6,171.7 L153.3,168.7 L151.7,174.2Z M172.9,179.4 L169.5,177.7 L167.3,175.9 L166.9,173.9 L168.9,174.4 L171.8,176.3Z M156.1,174.1 L155.0,172.0 L155.5,170.1 L156.7,171.7Z M165.7,176.5 L158.9,176.0 L152.0,172.4 L151.8,168.7 L155.1,167.3 L160.7,171.1Z M168.6,175.6 L167.7,172.7 L173.4,168.6 L173.8,171.8 L171.3,175.6Z M172.8,177.7 L168.7,176.9 L167.6,174.3 L170.5,174.2Z M123.1,177.9 L121.9,172.7 L122.2,168.6 L124.1,163.6 L126.5,167.3 L125.1,172.9Z M132.6,170.4 L133.3,168.3 L135.2,167.4 L136.2,167.7 L134.7,169.4Z M127.8,175.3 L127.8,173.9 L128.7,171.7 L129.9,171.8 L129.9,173.1 L129.0,174.9Z M136.5,178.9 L131.1,181.3 L124.1,181.7 L121.5,178.7 L123.2,174.9 L130.8,176.7Z M129.2,186.5 L127.6,184.8 L127.5,181.2 L129.6,184.1Z M116.2,179.0 L120.1,175.3 L126.4,177.3 L121.1,181.6Z M110.6,184.7 L109.3,182.9 L110.5,178.2 L112.6,178.0 L113.8,179.6 L112.8,184.2Z M133.1,181.0 L131.6,179.7 L130.7,176.2 L131.7,173.5 L133.7,175.6 L135.2,180.3Z M118.8,183.8 L118.4,181.2 L122.2,178.9 L124.0,179.8 L121.5,183.6Z M121.7,176.2 L118.3,179.2 L109.8,178.2 L106.9,174.7 L109.7,171.0 L119.3,172.4Z M112.7,186.8 L112.5,183.9 L115.3,177.5 L120.4,176.4 L121.0,181.5 L115.5,186.7Z M111.0,178.7 L117.0,172.3 L124.2,169.8 L119.6,176.1Z M117.3,185.7 L116.9,181.5 L118.8,174.3 L123.8,171.9 L124.2,177.7 L120.9,184.1Z M109.6,197.9 L105.8,187.1 L108.6,176.8 L112.6,186.7Z M115.8,197.4 L114.5,197.5 L113.2,195.0 L114.2,194.6 L116.3,196.0Z M108.4,205.5 L103.4,202.1 L100.3,194.1 L104.1,193.3 L107.1,199.2Z M96.5,199.4 L104.3,194.6 L110.2,197.7 L105.1,201.7Z M105.6,196.0 L104.1,196.3 L101.8,195.4 L101.4,194.1 L102.9,194.0 L104.8,194.7Z M102.9,205.6 L100.8,206.1 L99.2,204.4 L101.4,204.3Z M95.5,211.8 L95.8,209.8 L96.6,208.1 L98.0,207.1 L97.7,208.9 L97.1,210.9Z M102.9,218.6 L103.0,217.3 L104.8,216.4 L105.6,216.9 L104.1,218.6Z M103.7,222.3 L101.0,221.2 L99.6,219.3 L102.0,219.9Z M99.8,219.8 L97.8,218.5 L99.3,213.9 L101.4,211.0 L103.0,213.8 L101.5,218.2Z M110.8,222.5 L108.8,219.3 L107.0,215.1 L109.0,214.0 L111.2,214.4 L111.8,219.2Z M109.5,225.5 L103.8,219.8 L99.3,212.1 L103.9,211.9 L107.9,217.7Z M101.7,228.3 L102.7,225.6 L105.8,224.6 L104.3,227.5Z M107.8,228.4 L104.9,225.5 L105.5,217.9 L108.5,215.2 L109.7,220.0 L110.1,224.7Z M101.2,237.0 L100.0,236.4 L100.3,232.8 L101.9,231.5 L103.2,233.1 L102.1,235.9Z M105.0,237.9 L102.7,238.7 L99.1,236.6 L100.5,235.4 L103.2,236.1Z M116.4,244.1 L113.6,243.5 L112.3,239.5 L115.7,241.8Z M108.1,245.1 L105.7,245.4 L104.3,244.0 L106.2,244.0Z M112.8,256.9 L115.4,247.8 L122.8,242.7 L121.0,251.6Z M115.2,258.4 L118.7,249.6 L128.1,244.9 L128.7,249.2 L124.5,255.7Z M131.5,261.3 L126.8,261.7 L121.6,260.2 L122.3,257.5 L128.2,258.2Z M125.2,257.5 L125.9,255.5 L128.2,254.6 L127.0,256.6Z M114.8,254.7 L115.5,252.0 L119.4,249.3 L119.9,251.4 L117.5,253.5Z M126.3,265.6 L125.5,261.9 L126.2,258.9 L127.5,259.4 L128.3,262.6Z M139.7,270.4 L134.0,267.1 L130.2,259.4 L137.8,263.9Z M133.9,267.5 L133.6,262.4 L137.6,256.1 L141.5,256.9 L139.1,266.4Z M128.1,266.3 L128.5,264.9 L130.5,263.5 L129.9,266.1Z M134.4,280.8 L133.3,280.2 L133.0,277.4 L134.1,277.3 L134.9,277.7 L135.5,280.2Z M139.9,271.6 L136.8,270.5 L136.5,267.8 L139.1,268.4Z M135.6,279.3 L133.1,274.8 L136.0,266.3 L138.0,274.9Z M143.5,279.4 L142.5,279.9 L140.6,280.3 L139.2,279.3 L140.4,278.2 L143.2,278.3Z M140.1,273.8 L138.2,273.2 L136.4,270.8 L137.5,269.7 L139.6,271.9Z M146.1,297.6 L141.2,289.6 L139.1,280.0 L143.9,279.5 L148.4,289.0Z M145.5,289.9 L144.7,286.8 L145.7,282.8 L148.1,280.0 L149.2,283.3 L147.6,287.3Z M148.1,298.4 L151.3,295.5 L157.4,296.7 L152.0,299.0Z M149.8,298.3 L143.9,295.5 L142.8,290.2 L149.2,290.9Z M149.0,290.9 L151.1,289.6 L153.6,290.0 L154.1,291.1 L151.0,292.3Z M155.0,296.5 L155.5,295.5 L157.3,294.3 L158.2,295.0 L157.4,296.0 L155.9,296.8Z M159.2,306.1 L159.0,304.2 L161.0,302.9 L162.4,302.8 L160.8,304.9Z M158.5,308.8 L157.9,306.8 L158.5,304.3 L160.1,301.3 L160.3,304.7 L160.5,308.5Z M161.8,304.6 L160.2,304.3 L158.2,301.9 L161.5,302.7Z M181.4,321.4 L177.7,322.6 L171.7,314.9 L175.9,313.7 L181.9,317.8Z M189.7,331.1 L189.3,327.1 L192.2,323.0 L194.3,323.8 L193.2,329.1Z M192.3,332.8 L192.9,327.1 L195.6,322.7 L198.8,322.7 L197.0,330.1Z M197.2,334.9 L194.6,334.5 L192.3,332.8 L195.2,333.0Z M194.1,332.5 L191.7,331.9 L191.5,330.1 L193.2,330.3Z M200.4,342.6 L202.9,339.6 L207.7,336.7 L209.9,338.5 L208.4,341.0 L203.6,343.9Z M213.6,349.5 L211.1,348.0 L207.9,345.1 L207.8,341.6 L211.2,342.8 L213.0,346.6Z M218.7,361.0 L217.1,353.8 L221.2,346.9 L222.6,354.8Z M224.5,351.5 L223.5,352.0 L221.4,351.4 L220.1,350.0 L221.5,349.0 L224.9,350.2Z M216.6,349.4 L218.4,347.5 L223.7,347.1 L223.8,349.7 L218.9,350.6Z M231.8,371.0 L232.2,367.5 L234.3,364.8 L236.7,364.6 L235.0,369.8Z M225.2,362.9 L224.8,362.0 L225.4,360.2 L226.7,359.1 L226.6,360.9 L226.1,362.5Z M226.3,354.8 L225.9,353.7 L227.5,351.4 L228.0,352.7 L227.3,354.4Z M226.1,359.8 L227.3,355.6 L231.1,353.1 L229.7,357.4Z M237.9,358.2 L235.9,361.3 L229.5,358.3 L229.3,355.3 L235.8,355.6Z M243.4,367.0 L244.0,365.5 L246.0,364.4 L245.2,366.8Z M147.8,105.8 L153.5,103.9 L160.1,103.6 L159.2,106.8 L153.4,107.7Z M154.2,107.6 L154.2,105.7 L155.1,104.4 L155.9,106.1Z M163.5,110.8 L162.6,112.5 L157.3,113.1 L154.9,110.7 L158.0,108.8 L162.1,109.5Z M180.5,127.6 L178.0,126.0 L176.5,123.6 L179.3,124.7Z M176.1,138.2 L177.3,131.2 L182.1,128.0 L181.5,133.6Z M167.6,134.5 L165.4,134.5 L161.3,131.2 L162.5,129.1 L164.8,128.3 L169.3,132.5Z M173.1,130.3 L176.4,127.8 L180.0,127.8 L182.3,129.3 L176.9,131.8Z M140.6,128.2 L145.3,126.6 L148.2,126.5 L150.6,127.4 L149.7,129.5 L144.0,130.2Z M150.9,131.3 L149.6,127.8 L151.6,124.6 L152.1,128.0Z M138.5,123.8 L136.5,123.6 L133.8,123.2 L133.7,121.6 L135.4,121.6 L138.2,122.2Z M123.5,120.0 L123.7,118.8 L127.0,117.8 L126.8,119.4 L124.5,120.8Z M125.7,126.3 L125.1,122.9 L127.2,119.2 L128.6,123.7Z M119.3,125.8 L115.4,122.7 L114.3,115.4 L119.2,120.9Z M95.2,121.3 L97.0,119.1 L100.1,119.9 L97.7,121.4Z M122.2,124.6 L114.0,125.0 L108.2,120.2 L115.8,119.4Z M102.3,122.2 L97.1,120.4 L95.9,113.6 L101.7,116.9Z M107.2,137.2 L106.5,133.8 L107.0,130.8 L108.3,131.2 L108.9,134.3Z M115.6,139.1 L117.1,136.4 L119.4,134.5 L121.3,135.2 L118.4,137.8Z M111.2,137.9 L112.1,135.5 L114.2,133.6 L115.5,134.4 L113.5,137.0Z M129.9,144.8 L130.0,139.3 L133.8,136.0 L134.2,141.2Z M133.8,141.9 L130.2,142.8 L126.9,142.9 L123.8,141.3 L127.6,140.5 L130.5,140.4Z M149.1,142.2 L150.9,139.5 L155.5,139.9 L156.3,141.6 L152.0,143.7Z M154.4,146.9 L158.1,143.1 L161.2,143.3 L159.6,145.9Z M158.4,150.1 L154.9,148.8 L151.3,145.0 L152.7,143.4 L154.7,144.0 L157.7,146.4Z M182.0,146.4 L177.4,148.0 L170.4,143.4 L172.4,140.5 L180.1,141.9Z M173.8,142.6 L175.3,140.7 L179.6,139.5 L180.6,141.6 L176.3,142.9Z M241.4,376.1 L239.8,370.8 L238.1,362.7 L242.5,357.8 L246.4,363.1 L244.3,372.0Z M253.8,369.3 L254.1,367.3 L255.4,366.3 L255.6,368.1Z M253.1,367.1 L251.4,367.1 L249.7,365.7 L249.2,364.4 L250.5,364.2 L253.0,365.5Z M246.7,369.7 L252.0,365.3 L261.3,367.3 L253.1,372.1Z M254.7,370.2 L253.6,369.3 L255.1,367.1 L256.4,365.8 L257.0,367.2 L255.8,369.2Z M262.5,370.2 L262.6,368.9 L263.3,367.1 L264.4,366.9 L265.0,367.9 L263.7,369.9Z M255.1,370.0 L253.1,367.8 L253.2,360.2 L257.0,360.8 L257.8,368.3Z M260.9,366.7 L261.3,364.6 L263.9,362.6 L265.9,362.4 L265.2,364.3 L263.2,365.7Z M267.8,366.8 L267.4,365.5 L267.8,363.4 L269.0,363.2 L269.1,366.1Z M276.2,367.1 L271.2,366.9 L268.4,362.2 L273.3,363.5Z M257.6,367.9 L261.8,364.9 L264.9,364.0 L267.6,365.2 L262.4,368.4Z M288.8,376.3 L288.3,373.8 L288.3,372.0 L289.0,370.9 L289.7,372.1 L289.9,374.3Z M291.6,373.3 L294.6,370.2 L300.6,369.6 L300.3,372.2 L296.3,373.2Z M293.7,376.8 L295.0,372.8 L302.0,369.3 L298.6,376.8Z M287.0,369.7 L285.4,368.7 L284.7,366.1 L285.8,365.8 L288.0,367.9Z M275.6,368.1 L275.6,364.8 L276.8,362.9 L277.2,365.1Z M289.5,369.8 L291.0,367.9 L293.1,367.6 L292.1,369.7Z M274.4,370.9 L270.9,366.8 L274.1,356.8 L278.9,357.3 L278.3,367.5Z M291.1,375.8 L295.1,373.4 L299.1,373.9 L296.0,377.1Z M302.8,375.1 L297.6,373.2 L294.4,366.2 L296.5,362.3 L302.4,369.6Z M301.2,385.6 L301.0,380.9 L308.0,374.3 L314.1,373.8 L310.5,380.1 L305.9,386.2Z M304.7,385.3 L302.3,381.7 L302.7,373.0 L306.9,373.6 L308.3,382.6Z M313.2,383.5 L308.4,384.4 L305.6,382.6 L308.7,382.0Z M325.6,389.0 L326.1,387.7 L328.6,385.8 L329.2,387.2 L327.0,388.9Z M332.1,392.6 L332.1,389.9 L333.3,387.2 L333.9,390.2Z M330.8,389.4 L332.7,384.1 L337.5,383.0 L335.7,387.2Z M316.0,386.4 L321.7,383.2 L327.5,384.6 L330.7,387.7 L322.2,388.8Z M342.6,386.4 L343.3,383.7 L346.4,383.0 L345.3,385.9Z M342.7,389.0 L343.2,386.1 L346.1,384.9 L344.8,387.5Z M348.0,386.0 L347.5,383.8 L350.4,381.3 L352.8,381.3 L350.0,384.9Z M359.9,389.8 L349.8,390.8 L343.3,388.2 L343.5,385.0 L351.4,384.7Z M360.6,377.6 L360.2,376.1 L361.4,373.9 L362.4,374.5 L362.3,377.5Z M363.8,374.1 L366.4,373.1 L368.4,373.2 L369.6,374.3 L366.6,374.5Z M367.8,372.6 L366.4,373.4 L363.9,373.4 L363.0,372.3 L364.3,371.5 L366.6,371.6Z M364.7,368.6 L364.0,367.5 L365.3,365.1 L366.1,366.0 L365.6,367.8Z M367.0,357.8 L365.1,356.5 L363.2,354.5 L364.6,354.0 L366.1,355.7Z M373.8,359.7 L367.8,352.9 L367.7,344.5 L374.8,350.1Z M375.7,342.3 L377.3,341.1 L379.6,341.3 L380.3,342.4 L377.3,343.3Z M381.8,338.7 L380.4,337.9 L379.8,335.0 L381.2,333.9 L382.6,337.4Z M387.8,334.0 L383.0,333.6 L380.3,330.8 L384.1,330.9Z M377.5,323.5 L379.0,321.6 L383.3,321.3 L379.8,323.6Z M363.2,314.3 L362.3,314.0 L361.6,312.4 L361.7,311.2 L362.9,311.5 L364.3,313.9Z M380.7,314.9 L380.3,312.0 L382.4,309.8 L382.3,312.7Z M382.1,312.9 L379.8,313.4 L377.2,312.1 L380.1,311.8Z M363.9,322.8 L360.2,322.9 L356.8,315.7 L360.4,315.8 L364.0,319.3Z M366.0,324.6 L367.4,315.7 L374.8,312.3 L373.1,319.8Z M368.0,325.5 L363.2,322.3 L358.7,316.1 L361.6,312.7 L368.0,320.0Z M390.5,310.9 L388.5,312.1 L383.4,311.9 L382.8,309.0 L389.1,308.8Z M388.4,312.6 L385.4,313.7 L383.6,312.0 L385.8,310.5Z M395.1,312.6 L393.5,311.7 L392.6,310.4 L392.2,308.9 L393.5,309.1 L394.7,311.0Z M386.4,313.2 L386.3,309.6 L388.7,306.9 L389.0,310.7Z M415.6,297.0 L415.4,295.0 L417.5,292.8 L417.1,295.8Z M406.6,304.7 L405.4,307.2 L398.9,306.5 L397.6,304.0 L399.4,301.8 L405.6,302.2Z M402.8,307.9 L400.9,306.8 L400.8,304.6 L402.6,305.7Z M406.1,305.2 L409.4,301.1 L413.4,300.7 L411.4,304.2Z M415.2,286.7 L411.8,284.2 L407.0,275.6 L412.1,275.2 L417.0,282.7Z M412.6,283.3 L410.1,282.9 L407.5,281.1 L407.1,279.2 L409.0,279.3 L411.1,281.0Z M408.6,284.8 L404.8,276.0 L409.3,268.3 L413.3,276.4Z M411.3,281.3 L411.4,277.5 L417.6,275.1 L420.0,277.0 L414.9,281.4Z M400.9,279.2 L399.5,279.1 L398.2,275.9 L399.7,275.6 L401.5,277.9Z M400.1,281.8 L406.7,276.6 L415.9,278.6 L408.1,283.8Z M414.1,278.2 L416.0,276.3 L419.7,276.0 L422.4,276.9 L420.7,278.8 L417.4,278.5Z M422.1,267.8 L422.5,266.9 L424.7,266.8 L425.1,267.6 L425.2,268.7 L422.5,268.7Z M424.5,266.8 L425.1,265.4 L427.3,263.9 L428.5,264.9 L425.9,267.2Z M425.0,268.1 L422.3,268.3 L419.8,266.8 L422.8,266.5Z M407.7,257.4 L409.2,256.0 L412.1,256.1 L412.4,257.1 L411.9,257.8 L409.5,258.4Z M415.0,264.5 L414.8,262.8 L416.5,261.2 L417.5,260.9 L417.6,261.9 L416.6,263.2Z M406.8,262.5 L410.0,260.8 L415.5,260.3 L415.0,263.0 L409.8,264.4Z M428.6,264.8 L424.5,266.0 L418.7,261.6 L418.4,258.6 L420.5,255.7 L425.7,260.8Z M406.8,261.4 L407.8,260.2 L410.0,260.1 L411.0,261.1 L408.3,261.9Z M424.5,260.4 L422.0,261.0 L419.7,260.0 L417.7,258.8 L419.7,258.2 L422.0,259.0Z M408.3,266.7 L407.9,265.9 L408.5,264.1 L409.6,263.5 L409.7,264.8 L409.2,266.6Z M438.0,252.6 L435.6,252.8 L434.5,251.8 L435.9,251.4Z M435.7,252.7 L437.6,250.3 L441.0,250.3 L438.8,252.8Z M455.5,256.5 L450.1,250.2 L450.6,242.5 L453.6,240.3 L456.7,248.1Z M444.6,262.9 L438.6,252.9 L441.9,242.7 L446.8,251.8Z M445.2,249.2 L446.6,246.4 L451.7,244.4 L448.8,249.3Z M450.6,251.9 L450.0,248.9 L450.8,247.1 L451.5,249.0Z M458.5,249.9 L457.0,250.2 L454.8,248.3 L456.1,247.9 L457.8,248.5Z M475.4,246.7 L475.8,245.4 L477.2,244.1 L479.1,243.3 L478.2,245.2 L476.7,246.8Z M467.1,253.4 L464.8,250.2 L464.8,243.5 L469.1,249.2Z M468.5,248.7 L465.9,251.5 L459.1,250.6 L455.9,248.2 L459.8,246.4 L465.0,246.6Z M456.3,251.5 L457.4,246.8 L460.6,245.5 L460.5,249.0Z M470.6,246.1 L471.5,245.1 L473.6,244.9 L476.3,245.3 L473.7,246.3 L471.6,246.9Z M483.1,237.5 L482.2,236.3 L482.2,233.2 L483.7,233.5 L484.2,236.4Z M486.0,231.3 L486.4,228.6 L488.1,226.0 L488.1,229.3Z M494.7,236.2 L489.8,233.3 L489.1,228.7 L493.0,230.9Z M501.7,231.8 L497.1,233.3 L489.8,231.2 L489.1,227.8 L491.8,225.8 L498.3,228.0Z M502.6,232.6 L494.7,236.1 L487.8,230.0 L496.1,227.9Z M509.4,243.4 L501.2,242.7 L496.5,237.5 L503.5,237.6Z M509.8,252.3 L506.3,245.7 L509.8,238.8 L514.1,235.3 L513.7,245.9Z M536.4,236.3 L534.7,234.7 L533.9,231.7 L535.4,232.2 L536.8,234.0Z M545.6,235.1 L543.1,234.4 L542.7,232.3 L544.9,232.5Z M545.4,233.5 L543.3,231.7 L542.7,229.7 L543.2,228.3 L545.2,230.8Z M553.2,230.3 L551.7,230.7 L550.5,228.9 L550.5,227.8 L553.2,228.7Z M565.5,225.2 L565.1,223.7 L567.2,221.7 L568.6,222.1 L567.1,225.1Z M560.9,228.4 L559.6,228.0 L559.3,225.3 L560.5,224.2 L561.6,227.4Z M573.5,227.4 L570.9,220.3 L575.3,213.7 L576.2,220.9Z M578.1,219.6 L577.4,217.6 L580.1,215.3 L581.1,216.2 L580.1,218.9Z M586.3,219.2 L582.6,219.3 L579.4,217.0 L579.0,214.4 L584.2,216.2Z M606.7,203.3 L604.5,201.1 L603.1,196.3 L605.1,195.6 L606.8,196.3 L607.4,200.0Z M601.3,204.3 L600.1,204.1 L599.3,201.8 L599.4,200.1 L600.8,200.6 L602.2,203.3Z M603.6,205.7 L602.7,204.1 L602.4,202.4 L603.2,202.3 L604.1,204.0Z M626.5,193.3 L624.8,192.3 L623.6,190.0 L624.8,189.5 L626.8,191.4Z M616.5,197.7 L612.3,197.6 L608.0,194.7 L608.7,192.0 L613.9,194.4Z M625.7,194.3 L622.6,193.8 L620.0,192.8 L620.0,191.5 L620.8,190.3 L624.2,191.9Z M617.5,191.9 L621.9,189.5 L627.0,189.6 L622.5,191.9Z M620.0,196.8 L618.4,196.9 L618.0,194.0 L618.8,192.8 L620.6,195.5Z M627.0,186.1 L625.3,186.5 L623.4,184.4 L623.8,183.1 L626.8,184.4Z M625.2,190.3 L622.9,189.3 L623.4,184.2 L624.8,179.2 L626.5,184.2 L627.8,189.4Z M620.7,183.2 L621.6,181.3 L623.6,180.2 L622.8,182.4Z M616.4,185.3 L614.9,179.8 L618.1,170.8 L621.7,172.1 L625.2,173.6 L621.3,182.4Z M615.9,183.0 L614.9,179.9 L615.1,176.7 L616.5,174.2 L617.9,176.4 L617.3,180.0Z M632.9,189.1 L628.5,189.7 L623.4,185.4 L617.7,179.2 L624.5,178.7 L630.4,184.9Z M618.3,186.3 L615.1,182.9 L613.7,178.6 L613.5,173.3 L616.9,176.8 L619.4,182.2Z M623.7,188.9 L621.6,185.5 L621.6,180.7 L623.4,179.7 L626.1,179.2 L625.0,184.7Z M642.9,193.5 L641.4,189.5 L649.6,183.2 L652.7,186.7 L646.6,193.6Z M650.8,189.6 L648.2,189.8 L645.2,189.5 L644.6,187.9 L646.4,187.3 L649.6,187.8Z M655.2,192.9 L651.6,190.0 L651.4,183.9 L653.9,182.3 L655.4,188.1Z M670.4,185.8 L670.3,184.0 L671.0,182.2 L672.0,182.4 L671.6,184.5Z M673.2,186.7 L667.0,188.1 L663.2,184.9 L667.8,183.7Z M685.4,188.2 L684.9,185.8 L685.0,183.4 L686.1,182.4 L687.1,183.6 L686.3,185.7Z M689.6,185.8 L692.0,178.9 L701.5,178.5 L695.7,184.9Z M704.9,184.7 L702.6,181.1 L705.1,174.2 L708.0,181.2Z M728.2,178.4 L727.9,174.9 L733.1,168.3 L737.8,168.8 L736.7,173.7 L731.9,177.1Z M724.4,182.1 L723.5,179.6 L724.6,175.0 L726.7,175.0 L727.3,177.0 L726.3,179.8Z M714.9,179.6 L715.6,174.5 L723.3,170.8 L720.6,179.3Z M737.7,177.5 L738.9,174.3 L742.7,171.6 L744.6,173.0 L741.0,176.0Z M770.0,170.8 L767.8,170.2 L766.6,168.2 L768.9,168.8Z M776.2,170.7 L774.9,165.2 L779.7,162.3 L779.5,167.2Z M778.8,165.8 L781.2,162.7 L784.0,162.6 L782.7,165.1Z M804.8,159.0 L802.8,157.7 L803.4,152.5 L805.5,150.3 L806.6,153.5 L806.4,157.2Z M796.3,162.6 L795.5,160.0 L797.0,158.3 L797.4,160.3Z M841.1,147.7 L841.2,146.2 L844.3,145.3 L845.0,146.3 L844.7,147.3 L842.6,148.1Z M843.4,148.3 L842.7,145.0 L844.1,141.4 L845.2,145.3Z M833.5,151.4 L832.8,149.4 L834.2,148.1 L834.8,149.9Z M15.3,510.1 L8.0,508.3 L5.9,500.1 L6.6,494.6 L14.0,502.6Z M7.6,503.7 L8.4,500.5 L11.0,496.5 L13.1,497.3 L13.0,499.5 L10.6,502.8Z M26.9,516.6 L23.8,515.4 L21.7,512.7 L24.8,514.1Z M20.7,523.3 L17.2,516.4 L18.5,510.4 L21.6,515.6Z M23.6,522.1 L21.6,523.1 L18.6,520.3 L16.6,517.6 L20.0,518.7 L23.5,519.9Z M24.7,533.7 L22.3,533.8 L19.6,533.7 L17.6,531.8 L20.2,531.1 L23.7,532.0Z M20.4,536.2 L18.0,538.5 L11.9,534.6 L6.8,529.3 L14.2,530.5 L22.1,532.7Z M31.9,533.5 L26.9,534.6 L18.5,529.8 L19.5,524.7 L29.4,529.0Z M60.3,540.6 L58.8,541.0 L56.6,538.8 L58.0,538.5 L60.1,539.0Z M59.7,540.9 L56.9,541.7 L54.0,540.7 L57.0,539.6Z M60.1,553.1 L58.8,553.1 L56.5,550.9 L58.2,550.7 L60.6,551.7Z M61.5,565.4 L60.1,565.5 L59.6,562.7 L60.5,561.6 L61.9,564.2Z M55.2,577.5 L54.2,576.0 L53.8,573.5 L55.0,573.1 L55.7,575.7Z M51.3,581.1 L47.9,578.5 L48.5,570.3 L51.5,568.7 L53.2,571.9 L54.9,578.9Z M39.8,584.9 L30.6,588.7 L22.7,583.9 L31.2,579.2Z M29.0,593.8 L22.2,588.2 L24.1,576.4 L32.1,585.4Z M46.6,582.5 L44.2,583.0 L41.5,582.2 L41.1,580.5 L44.5,581.2Z M16.6,591.9 L15.8,587.0 L18.2,583.9 L19.2,587.6Z M8.5,589.5 L6.7,590.0 L4.5,588.9 L3.6,587.7 L4.8,586.9 L7.1,588.1Z M11.7,589.8 L10.2,589.1 L10.4,586.2 L11.5,586.6 L12.5,588.4Z M3.4,620.3 L2.5,618.4 L2.6,615.8 L3.9,615.8 L3.9,618.1Z M17.6,606.4 L15.7,606.7 L12.8,605.1 L13.3,603.8 L14.4,603.4 L16.1,604.7Z M12.6,607.5 L12.7,605.5 L14.8,604.0 L16.6,604.0 L14.6,607.3Z M19.5,601.1 L17.8,600.5 L15.7,599.3 L15.9,597.9 L17.4,598.2 L19.3,599.5Z M35.1,587.2 L31.7,588.3 L27.0,585.7 L22.7,581.9 L28.2,582.2 L32.7,584.3Z M53.8,580.7 L58.3,575.5 L67.2,575.3 L70.3,579.0 L60.2,583.3Z M57.0,603.2 L52.7,595.3 L55.2,588.6 L57.6,594.6Z M35.0,620.6 L35.5,617.6 L40.8,618.7 L40.8,620.6 L36.7,622.7Z M32.6,626.1 L30.3,622.9 L32.2,620.4 L34.6,622.6Z M61.6,620.7 L57.2,618.3 L55.8,613.0 L60.1,616.1Z M58.9,631.8 L58.4,629.9 L58.3,628.1 L59.0,627.1 L60.1,627.8 L59.7,630.1Z M56.9,627.8 L59.2,624.0 L64.4,624.4 L61.3,628.5Z M72.0,634.1 L70.2,632.4 L70.2,627.4 L72.2,626.3 L74.0,627.7 L74.7,633.7Z M71.8,631.3 L70.6,631.4 L69.0,630.3 L68.0,628.9 L69.7,629.3 L71.0,630.1Z M109.3,637.6 L106.9,635.0 L106.6,633.2 L108.4,634.1Z M109.4,651.2 L102.9,651.3 L98.0,647.9 L98.0,644.7 L104.7,646.7Z M112.2,651.8 L112.4,649.3 L114.2,645.8 L116.7,645.1 L116.9,647.8 L114.5,650.3Z M107.8,649.7 L110.9,646.7 L118.9,643.8 L120.4,648.2 L111.5,651.8Z M112.8,667.7 L109.6,664.1 L108.8,659.1 L111.0,659.2 L113.9,663.1Z M106.4,669.2 L105.2,668.7 L103.6,666.5 L104.3,665.3 L105.6,666.1 L107.3,668.1Z M105.8,671.7 L103.4,670.5 L101.5,668.8 L100.9,666.7 L103.0,666.9 L104.4,669.3Z M101.9,681.3 L99.7,678.5 L99.8,674.3 L101.5,674.8 L102.9,677.8Z M95.2,673.4 L94.5,674.0 L92.5,673.2 L92.1,672.2 L93.3,672.0 L95.5,672.4Z M91.5,680.0 L89.3,679.6 L88.4,675.9 L87.9,672.7 L90.5,673.3 L92.3,677.8Z M68.0,683.1 L65.7,684.7 L61.8,683.1 L65.7,681.4Z M1256.4,494.2 L1255.9,492.3 L1257.4,490.0 L1257.7,492.8Z M1263.4,471.2 L1262.6,471.9 L1260.6,470.9 L1260.1,470.0 L1260.7,469.0 L1262.5,470.3Z M1261.3,471.3 L1258.7,469.4 L1258.2,466.0 L1260.9,468.1Z M1247.8,486.6 L1248.8,485.0 L1250.6,484.7 L1249.7,486.3Z M1260.2,470.3 L1259.0,471.6 L1255.9,470.9 L1255.6,469.4 L1258.7,469.5Z M1242.8,446.1 L1241.5,445.1 L1241.2,443.0 L1241.7,442.4 L1242.7,442.1 L1243.1,444.4Z M1263.4,423.9 L1262.3,423.9 L1261.1,422.5 L1260.6,421.0 L1262.0,421.0 L1263.7,422.9Z M1283.2,415.1 L1279.2,412.3 L1279.0,407.9 L1282.0,410.8Z M1315.1,427.5 L1310.9,428.3 L1306.1,429.0 L1303.8,426.3 L1307.1,424.7 L1311.8,425.5Z M1300.1,434.8 L1298.7,435.8 L1296.4,434.3 L1295.0,432.2 L1299.9,432.8Z M951.0,1152.0 L957.0,1148.0 L961.0,1152.0 L955.0,1155.0Z M1011.0,1149.0 L1017.0,1146.0 L1022.0,1149.0 L1016.0,1153.0Z"/>
</g>
<path fill="none" stroke="#a9a89c" stroke-width="1.3" stroke-linejoin="round" d="M703.2,91.0 L709.5,93.2 L713.2,92.9 L719.5,94.2 L724.1,95.7 L728.5,97.8 L734.8,99.0 L739.5,100.5 L745.1,102.9 L752.3,102.8 L757.0,104.2 L761.8,104.8 L770.5,106.4 L774.5,105.5 L782.0,109.2 M709.5,103.5 L716.4,102.7 L719.5,104.4 L725.8,103.9 L732.6,104.4 L737.0,104.2 L740.1,103.1 L746.7,105.1 L750.0,104.9 L757.0,104.2 M692.0,130.5 L699.6,131.1 L701.5,128.1 L709.9,129.4 L714.5,128.0 L719.3,128.6 L726.2,128.8 L730.0,129.0 L737.0,129.2 L741.6,128.9 L749.0,129.1 L752.2,129.9 L756.1,128.2 L762.0,128.0 L764.9,126.2 L771.3,126.8 L778.5,125.7 L782.0,125.5 M710.8,119.2 L716.2,118.3 L721.8,118.4 L725.0,118.6 L732.0,118.0 L738.1,115.7 L740.9,116.4 L747.1,117.7 L752.0,115.5 L757.7,115.4 L761.9,114.1 L770.4,112.7 L774.5,111.8 L782.0,115.5 M724.5,114.2 L729.5,120.5 L724.9,121.6 L717.0,121.8 L716.2,125.4 L714.5,131.8 L719.3,130.0 L726.5,131.8 L729.5,130.9 L735.0,129.7 L739.6,128.4 L748.3,127.7 L752.0,128.0 M733.2,58.0 L739.5,59.9 L745.6,62.2 L749.5,62.5 L757.0,63.8 L761.2,62.2 L767.0,64.2 L773.6,64.7 L777.3,63.9 L784.5,61.8 M727.0,66.8 L734.0,67.1 L737.3,66.2 L744.4,64.2 L749.5,65.5 L756.8,64.3 L762.0,63.5 M732.0,70.5 L736.5,70.8 L741.9,72.2 L749.5,73.0 L755.2,74.2 L762.0,75.5 L757.0,80.0 M770.8,83.8 L778.0,83.3 L782.4,83.1 L787.0,84.2 L790.7,82.1 L797.0,81.8 M775.8,47.2 L781.0,50.5 L787.0,54.2 L793.6,54.4 L797.0,56.0 M853.2,8.0 L859.2,9.7 L864.6,11.1 L872.0,13.0 L878.1,15.0 L880.6,14.9 L886.3,15.7 L892.0,16.8 L898.8,16.2 L900.2,18.3 L907.0,16.8 M857.0,5.5 L862.2,6.4 L866.6,8.6 L872.3,8.4 L877.0,9.2 L883.1,10.6 L889.7,14.0 L894.5,15.5 M853.2,18.0 L859.3,19.8 L862.6,21.2 L869.5,23.0 L874.4,20.6 L881.9,20.4 L886.8,20.5 L892.0,19.2 L895.8,21.8 M884.5,30.0 L891.1,29.2 L897.6,29.8 L902.0,29.2 L905.7,27.0 L912.0,25.5 M864.5,35.5 L871.1,34.2 L877.9,35.4 L882.0,35.0 L886.0,34.7 L892.6,36.0 L897.8,35.4 L902.0,36.0 L907.0,40.5 M793.2,61.8 L797.4,63.6 L804.3,63.3 L812.0,63.5 L815.4,65.4 L823.6,65.6 L830.4,66.1 L833.4,64.8 L839.5,66.0 M804.5,69.2 L810.3,69.6 L816.0,70.3 L822.0,71.0 L828.3,71.4 L833.8,71.5 L838.2,70.9 L844.5,73.0 L848.4,72.5 L854.4,73.0 L862.3,72.7 L865.8,71.8 M807.0,73.0 L813.1,76.1 L815.6,78.9 L822.0,80.5 L828.6,82.1 L832.1,82.2 L839.5,83.0 L844.7,81.8 L849.7,84.1 L855.6,83.9 L862.0,84.2 L858.2,89.2 L851.1,86.7 L847.0,86.8 M837.0,101.8 L842.4,99.6 L845.8,99.2 L852.0,98.0 L858.2,98.6 L864.5,99.2 M855.8,115.5 L863.8,115.8 L869.5,115.5 M792.0,61.8 L797.8,62.4 L803.7,61.4 L807.0,60.5 L812.6,61.1 L818.2,63.9 L820.7,63.3 L829.0,64.8 L832.0,65.5 M14.0,34.2 L20.5,32.9 L25.6,33.6 L31.5,33.0 L37.8,33.4 L41.4,35.4 L46.5,35.5 M19.0,43.5 L23.5,44.5 L32.5,40.7 L36.5,41.8 L41.4,41.9 L49.0,44.2 M34.0,49.2 L40.7,51.1 L42.2,51.1 L49.0,50.5 L53.7,54.2 L59.0,58.0 M47.8,77.5 L54.6,76.6 L60.4,74.1 L64.0,74.2 L70.7,74.9 L76.9,75.8 L81.5,78.0 M59.0,84.2 L65.7,83.5 L67.9,84.4 L74.0,83.0 L80.3,87.3 L86.5,89.2 L82.5,95.3 L79.0,96.8 M54.0,100.5 L59.5,97.8 L66.5,93.0 L70.0,87.8 L74.0,84.2 M119.0,111.8 L124.8,110.9 L128.1,111.5 L135.0,107.4 L139.0,108.0 L143.5,107.7 L147.7,108.8 L154.0,109.2 L159.0,108.0 M124.0,114.2 L127.6,113.4 L132.7,114.9 L138.9,114.2 L144.0,115.5 L147.9,116.4 L155.4,118.2 L158.0,118.0 L164.0,120.5 L168.7,121.2 L176.3,125.3 L179.0,128.0 M139.0,105.5 L143.4,107.4 L147.9,110.2 L154.0,111.8 L159.2,112.9 L167.5,114.5 L171.5,115.5 M120.2,175.0 L125.7,174.5 L133.2,172.2 L139.0,173.0 L143.3,173.5 L149.0,176.0 M111.5,184.2 L115.5,182.5 L123.5,183.4 L126.8,182.4 L134.0,183.0 L140.1,182.7 L145.0,182.6 L147.5,184.0 L153.8,184.0 L159.0,184.2 L165.9,187.0 L167.7,186.6 L174.0,190.5 L178.5,192.2 L183.4,190.5 L189.0,191.8 M116.5,195.5 L120.8,193.5 L129.3,193.0 L134.2,192.5 L139.0,191.8 L144.2,191.4 L149.0,194.2 L155.3,195.6 L157.1,194.2 L164.0,195.5 L167.5,196.2 L175.0,194.4 L180.3,197.1 L182.8,197.7 L187.5,195.3 L194.0,196.8 M101.5,205.5 L107.7,203.9 L112.1,203.4 L120.0,200.7 L124.0,199.2 L127.8,200.2 L134.5,199.0 L140.9,198.4 L143.8,198.3 L149.0,198.0 L154.3,200.2 L158.3,199.0 L162.2,200.0 L169.9,201.3 L174.0,201.8 L181.2,201.7 L185.9,203.0 L191.5,201.8 M100.2,211.8 L106.8,210.0 L114.5,208.9 L119.0,206.8 L123.6,207.3 L128.9,206.9 L132.3,204.7 L139.0,204.2 L143.1,204.3 L150.4,203.8 L156.5,204.9 L159.2,203.0 L166.5,204.2 M104.0,215.5 L110.0,216.3 L115.4,217.5 L120.9,217.2 L124.0,218.0 L130.0,217.6 L135.8,217.6 L139.0,216.8 M106.5,230.5 L113.9,227.7 L119.8,227.6 L125.0,225.1 L129.0,223.0 L134.1,220.1 L139.8,219.7 L144.2,219.1 L149.0,218.0 L154.3,216.1 L161.1,214.4 L165.0,211.7 L169.0,210.5 L173.5,212.1 L179.1,210.5 L184.0,212.6 L189.9,211.8 L194.0,213.0 M109.0,234.2 L112.5,233.5 L120.4,230.9 L124.3,230.4 L129.0,228.0 L134.4,227.1 L139.1,225.8 L146.5,224.2 L153.3,221.3 L159.0,218.0 L163.5,217.3 L168.8,218.0 L176.0,218.6 L177.4,218.0 L184.0,216.8 M116.5,241.8 L122.1,240.8 L126.6,240.1 L134.0,238.0 L139.4,237.6 L144.4,236.7 L151.5,235.5 M134.0,255.5 L138.2,251.8 L143.2,248.4 L149.0,245.5 L154.6,244.2 L158.3,242.6 L164.0,241.8 L171.2,241.9 L177.2,243.2 L181.5,244.2 M144.0,270.5 L150.2,265.8 L154.0,263.0 L162.8,260.5 M154.0,280.5 L158.0,278.0 L165.0,273.1 L169.0,271.8 L174.7,269.0 L179.0,266.8 L183.5,266.4 L189.3,266.4 L194.0,265.5 M171.5,256.8 L176.5,263.0 L174.0,269.2 M184.0,270.5 L190.2,270.9 L194.1,272.7 L200.0,275.8 L204.0,276.8 M161.5,281.8 L167.5,280.8 L172.0,281.2 L179.0,279.2 L184.1,279.5 L192.8,281.8 M161.5,293.0 L167.6,290.7 L174.0,289.2 L178.5,285.4 L185.2,283.0 M174.0,306.8 L179.2,304.8 L184.0,300.5 L189.0,304.2 M189.0,318.0 L192.4,313.7 L196.5,309.2 L200.2,308.0 M822.0,241.8 L826.8,241.3 L834.5,240.5 L832.0,244.2 L826.5,244.4 L819.5,245.5 M837.0,229.2 L841.8,228.4 L848.1,229.1 L852.0,230.5 L849.5,234.2 L846.2,233.4 L839.5,231.8 M842.0,235.5 L847.4,237.1 L854.5,239.2 L853.2,234.2 M1254.0,437.0 L1258.9,435.2 L1264.0,434.5 L1269.0,439.5 M1250.2,449.5 L1254.3,450.6 L1261.5,448.2 M1254.0,472.0 L1261.8,469.1 L1266.5,467.0 L1272.2,463.4 L1276.5,460.8 M1256.5,479.5 L1260.4,479.8 L1266.4,477.1 L1271.5,475.8 M1249.0,492.0 L1253.8,486.6 L1257.5,484.0 L1261.5,482.0 M1774.9,177.5 L1776.2,179.1 L1778.6,181.5 L1775.1,179.9 L1773.8,178.3 M1776.9,176.8 L1782.1,182.0 L1786.2,183.5 L1791.2,189.2 L1793.5,192.7 L1790.4,190.0 L1785.5,184.4 L1781.4,182.8 L1776.1,177.7 M1760.6,182.2 L1762.7,186.5 L1767.3,188.6 L1762.1,187.2 L1759.9,182.9 M1762.8,181.4 L1760.8,185.2 L1762.0,189.1 L1758.8,184.7 L1760.8,180.9 M1766.2,180.1 L1767.7,183.2 L1766.1,187.6 L1766.1,183.1 L1764.6,180.0 M1749.8,186.4 L1750.2,188.6 L1749.6,193.1 L1749.0,188.8 L1748.5,186.6 M1753.4,185.0 L1755.0,185.3 L1754.5,187.0 L1753.3,186.1 L1751.6,185.8 M1739.1,197.9 L1740.3,199.7 L1742.2,198.0 L1739.9,201.9 L1738.6,200.1 M1735.2,201.6 L1735.9,202.3 L1737.1,205.2 L1735.0,202.4 L1734.3,201.7 M1737.5,199.9 L1739.6,200.4 L1738.4,201.8 L1737.6,201.6 L1735.5,201.1 M1728.5,206.6 L1728.8,207.4 L1730.5,209.7 L1726.7,208.2 L1726.4,207.4 M1727.7,207.2 L1730.2,209.3 L1729.4,212.0 L1728.3,210.5 L1725.9,208.4 M1714.5,214.0 L1712.2,221.0 L1713.3,224.8 L1710.3,220.7 L1712.6,213.7 M1719.4,211.9 L1720.5,213.9 L1724.1,215.6 L1719.4,215.4 L1718.3,213.4 M1720.8,211.3 L1722.1,213.2 L1725.5,216.2 L1721.2,214.1 L1719.9,212.3 M1715.1,213.7 L1715.1,219.2 L1716.1,225.1 L1713.2,219.7 L1713.2,214.1 M1713.5,214.4 L1711.9,217.1 L1713.2,220.0 L1709.8,216.7 L1711.4,214.1 M1704.5,219.4 L1710.9,222.2 L1713.7,222.9 L1710.4,223.1 L1704.1,220.3 M1698.7,223.5 L1699.2,224.4 L1701.9,224.4 L1698.5,225.5 L1698.0,224.5 M1699.3,223.1 L1701.6,225.6 L1701.4,225.8 L1700.6,226.9 L1698.3,224.4 M1703.5,220.1 L1704.4,224.6 L1702.9,227.2 L1703.6,224.7 L1702.7,220.1 M1689.0,229.5 L1691.5,232.1 L1696.0,235.8 L1700.5,241.5 L1695.2,236.7 L1690.6,233.0 L1688.1,230.4 M1692.0,227.7 L1691.6,230.2 L1691.3,231.4 L1690.0,230.3 L1690.4,227.8 M1696.0,225.3 L1696.3,230.8 L1699.1,233.4 L1694.8,231.5 L1694.5,225.9 M1684.8,242.7 L1685.6,243.4 L1688.4,242.4 L1685.3,245.1 L1684.4,244.3 M1685.2,244.5 L1693.1,246.0 L1698.1,248.5 L1692.6,248.1 L1684.7,246.6 M1679.8,252.4 L1679.9,255.3 L1682.6,257.0 L1677.9,256.2 L1677.9,253.4 M1671.2,256.3 L1670.3,260.3 L1669.6,265.3 L1668.6,260.3 L1669.6,256.3 M1666.5,257.9 L1666.3,260.5 L1667.8,264.3 L1665.5,260.6 L1665.7,258.0 M1670.3,256.6 L1670.3,261.2 L1667.4,267.6 L1667.3,271.7 L1664.1,275.8 L1665.2,271.1 L1665.4,267.0 L1668.3,260.6 L1668.2,256.0 M1678.9,253.8 L1681.0,258.5 L1681.0,266.6 L1682.3,270.3 L1684.5,275.5 L1680.5,270.7 L1679.3,267.0 L1679.2,258.9 L1677.2,254.1 M1664.8,258.5 L1664.2,262.0 L1664.2,261.3 L1663.1,261.8 L1663.7,258.3 M1679.1,253.7 L1680.4,255.6 L1679.4,258.9 L1678.6,255.7 L1677.3,253.8 M1655.1,259.9 L1655.4,264.3 L1659.3,266.4 L1653.4,265.3 L1653.1,261.0 M1661.5,259.0 L1662.0,259.8 L1664.0,265.0 L1660.7,260.7 L1660.3,259.9 M1650.0,260.6 L1651.6,261.8 L1651.2,262.8 L1650.4,262.3 L1648.9,261.1 M1660.3,259.2 L1659.4,265.6 L1660.3,272.6 L1658.1,265.8 L1658.9,259.3 M1653.3,268.1 L1654.8,266.9 L1655.7,263.2 L1656.6,267.7 L1655.2,269.0 M1654.9,268.9 L1658.4,268.4 L1657.5,266.4 L1659.2,269.6 L1655.7,270.1 M1652.1,267.6 L1652.4,265.5 L1656.9,261.9 L1654.0,266.4 L1653.7,268.5 M1647.3,265.2 L1651.9,263.2 L1655.4,258.3 L1652.5,264.2 L1648.0,266.1 M1649.5,269.3 L1650.1,272.4 L1648.5,271.9 L1648.8,272.5 L1648.2,269.4 M1650.0,269.0 L1649.3,272.8 L1647.1,277.4 L1647.6,272.5 L1648.3,268.7 M1628.2,280.1 L1628.0,282.0 L1630.5,281.9 L1627.4,282.6 L1627.7,280.7 M1615.1,290.3 L1615.2,291.1 L1618.4,291.9 L1614.0,292.6 L1613.8,291.8 M1621.9,284.3 L1623.7,288.1 L1628.1,290.4 L1622.8,288.8 L1621.0,285.1 M1617.7,288.0 L1618.9,289.1 L1621.0,290.5 L1618.2,290.2 L1617.0,289.2 M1614.7,291.0 L1614.0,291.7 L1616.1,296.0 L1611.9,292.3 L1612.6,291.6 M1601.2,290.3 L1602.0,293.9 L1601.1,297.2 L1599.8,294.2 L1599.0,290.6 M1593.0,289.9 L1593.7,292.4 L1590.1,293.8 L1592.2,291.7 L1591.4,289.2 M1608.0,290.6 L1610.1,291.5 L1607.7,294.4 L1608.1,292.2 L1606.0,291.4 M1577.0,298.4 L1580.5,302.4 L1582.9,304.6 L1579.4,304.2 L1575.9,300.2 M1566.0,303.4 L1566.7,304.7 L1566.5,308.4 L1564.4,305.2 L1563.7,304.0 M1576.2,298.9 L1575.8,302.7 L1579.6,304.6 L1574.4,303.2 L1574.8,299.4 M1575.6,299.2 L1577.8,300.5 L1578.0,299.5 L1577.1,301.5 L1574.9,300.1 M1569.9,301.7 L1571.7,302.1 L1570.7,304.4 L1570.1,302.6 L1568.2,302.2 M1569.3,302.0 L1568.9,304.2 L1570.1,307.3 L1567.1,304.2 L1567.4,301.9 M1541.9,315.8 L1544.1,318.6 L1545.8,319.8 L1542.4,319.7 L1540.3,316.9 M1549.5,311.4 L1556.6,316.6 L1559.7,319.8 L1555.8,317.7 L1548.8,312.5 M1523.9,320.6 L1524.8,324.8 L1522.2,332.5 L1523.5,324.6 L1522.6,320.5 M1532.3,318.8 L1532.6,320.3 L1535.4,320.0 L1531.3,321.5 L1531.1,320.0 M1529.8,319.4 L1528.5,324.5 L1526.6,329.1 L1527.7,324.2 L1529.0,319.1 M1522.5,321.0 L1524.2,322.3 L1524.4,323.3 L1523.6,322.9 L1521.8,321.6 M1526.4,320.1 L1526.6,321.5 L1525.0,322.8 L1525.0,321.5 L1524.7,320.1 M1511.9,328.1 L1515.4,331.7 L1520.2,333.4 L1514.5,333.0 L1510.9,329.4 M1516.6,324.8 L1518.7,328.1 L1516.7,330.6 L1517.9,328.3 L1515.8,325.0 M1520.3,322.1 L1522.2,324.0 L1521.9,326.3 L1519.9,324.6 L1518.0,322.8 M1510.1,329.4 L1511.8,333.6 L1512.1,337.2 L1510.8,333.7 L1509.1,329.5 M1501.8,341.7 L1502.0,343.5 L1506.5,342.0 L1501.8,344.3 L1501.6,342.5 M1501.5,343.3 L1502.5,345.6 L1506.4,347.2 L1501.1,347.2 L1500.1,345.0 M1499.0,356.6 L1498.9,356.5 L1502.7,356.1 L1499.4,357.7 L1499.5,357.8 M1500.9,346.5 L1504.5,345.8 L1510.8,344.7 L1505.0,347.4 L1501.4,348.0 M1498.1,361.1 L1498.5,360.6 L1501.7,360.4 L1498.9,362.9 L1498.6,363.4 M1509.7,377.9 L1514.7,375.9 L1517.7,374.6 L1515.2,376.9 L1510.3,378.9 M1504.4,369.1 L1505.3,366.9 L1510.3,364.3 L1506.3,368.0 L1505.4,370.2 M1509.2,377.1 L1511.9,375.8 L1513.1,375.7 L1512.6,376.9 L1509.9,378.1 M1508.9,381.5 L1510.7,381.2 L1515.8,382.4 L1510.2,382.4 L1508.5,382.7 M1509.7,392.3 L1510.1,390.9 L1514.0,393.9 L1509.6,392.8 L1509.3,394.1 M1511.2,397.1 L1514.4,398.0 L1513.4,395.2 L1515.1,399.3 L1511.9,398.5 M1517.7,407.7 L1520.9,407.8 L1520.8,405.2 L1521.7,409.3 L1518.4,409.3 M1519.0,409.5 L1521.1,406.7 L1523.0,400.4 L1528.5,395.3 L1524.9,401.7 L1523.1,408.0 L1520.9,410.7 M1514.6,403.7 L1518.5,398.0 L1519.4,393.8 L1519.5,398.7 L1515.6,404.4 M1520.1,411.0 L1524.1,407.3 L1529.2,407.5 L1524.7,408.5 L1520.7,412.2 M1524.3,415.2 L1530.3,414.0 L1539.3,410.2 L1535.1,414.5 L1530.6,415.3 L1524.7,416.5 M1524.0,414.9 L1525.9,410.7 L1528.2,407.7 L1527.2,411.2 L1525.3,415.4 M1524.4,415.3 L1525.6,412.8 L1528.6,407.5 L1526.4,413.3 L1525.2,415.7 M1535.1,422.3 L1534.2,422.6 L1535.6,420.2 L1535.0,423.1 L1535.9,422.8 M1541.1,425.3 L1543.4,419.8 L1549.3,413.1 L1545.3,420.9 L1542.9,426.3 M1537.9,423.7 L1538.7,421.3 L1538.2,419.1 L1539.7,421.7 L1538.8,424.0 M1538.5,424.0 L1538.5,424.4 L1540.1,422.1 L1540.0,426.0 L1540.0,425.7 M1530.6,420.1 L1531.3,416.5 L1535.6,408.6 L1536.8,404.9 L1538.9,399.2 L1537.9,405.3 L1536.7,409.0 L1532.5,417.0 L1531.8,420.5 M1968.0,115.0 L1965.7,122.1 L1964.0,125.5 L1964.8,121.8 L1967.1,114.7 M1961.9,115.9 L1962.4,117.7 L1964.4,121.9 L1960.8,118.3 L1960.3,116.5 M1975.2,114.0 L1977.8,120.0 L1978.7,125.7 L1975.7,120.4 L1973.0,114.4 M1950.9,118.9 L1953.4,123.4 L1954.1,124.0 L1952.6,123.8 L1950.1,119.3 M1957.1,117.1 L1956.4,123.8 L1954.6,129.3 L1956.4,133.2 L1952.3,129.0 L1954.1,123.5 L1954.8,116.8 M1950.2,119.2 L1949.1,125.3 L1945.9,129.4 L1947.4,124.9 L1948.5,118.7 M1948.2,119.8 L1947.7,121.1 L1949.5,124.4 L1945.3,121.0 L1945.8,119.7 M1925.0,122.6 L1925.9,122.8 L1926.1,124.2 L1924.4,124.0 L1923.5,123.7 M1917.3,124.0 L1918.0,127.0 L1918.1,127.7 L1916.7,127.3 L1916.0,124.3 M1916.9,124.1 L1917.9,124.3 L1916.7,127.3 L1916.9,124.5 L1915.9,124.3 M1920.1,123.5 L1921.3,125.3 L1918.8,127.5 L1920.5,125.0 L1919.3,123.2 M1918.9,123.7 L1922.6,128.4 L1922.9,133.7 L1925.2,139.3 L1921.9,134.1 L1921.7,128.8 L1918.0,124.1 M1910.1,126.2 L1911.9,125.9 L1912.2,129.9 L1911.0,126.8 L1909.3,127.1 M1902.5,130.0 L1901.2,136.1 L1901.3,138.8 L1899.0,136.1 L1900.3,130.1 M1895.9,133.3 L1900.9,138.1 L1902.3,146.1 L1899.3,139.1 L1894.3,134.3 M1906.4,128.1 L1906.8,130.1 L1909.8,134.0 L1906.0,130.9 L1905.6,128.9 M1868.4,133.3 L1869.0,135.6 L1870.6,142.0 L1867.6,136.1 L1867.0,133.8 M1851.5,133.8 L1851.4,136.0 L1850.3,135.0 L1850.4,135.9 L1850.4,133.7 M1857.8,132.8 L1859.4,134.0 L1858.1,137.6 L1858.6,134.1 L1856.9,132.8 M1847.8,134.4 L1847.6,137.2 L1847.7,138.2 L1846.6,136.8 L1846.8,134.1 M1850.7,133.9 L1852.4,133.3 L1850.9,136.7 L1850.5,134.6 L1848.8,135.3 M1849.5,134.1 L1849.9,139.7 L1852.0,143.5 L1848.4,140.3 L1848.0,134.6 M1844.0,135.5 L1845.6,136.1 L1845.1,136.1 L1844.6,137.8 L1843.0,137.2 M1842.0,136.5 L1845.1,137.2 L1845.5,137.3 L1844.3,138.4 L1841.2,137.7 M1843.3,135.9 L1845.4,138.7 L1843.2,137.7 L1844.7,139.0 L1842.6,136.2 M1828.2,143.4 L1831.3,146.6 L1832.0,146.2 L1830.1,147.9 L1827.1,144.8 M1826.4,144.1 L1826.8,146.7 L1826.5,148.3 L1824.6,147.3 L1824.2,144.7 M1820.6,146.2 L1821.8,149.8 L1822.2,148.8 L1819.7,150.8 L1818.5,147.3 M1816.0,147.9 L1817.9,149.9 L1817.4,150.9 L1816.1,150.9 L1814.2,148.8 M1823.7,145.1 L1826.7,145.6 L1826.0,150.1 L1825.4,146.9 L1822.3,146.3 M1795.0,154.2 L1794.8,155.1 L1797.9,159.9 L1792.6,155.8 L1792.8,154.8 M1798.1,153.4 L1799.1,154.3 L1803.6,157.7 L1798.1,155.3 L1797.0,154.4 M1796.0,154.0 L1796.3,160.4 L1794.8,165.7 L1795.9,169.8 L1793.7,165.7 L1795.2,160.3 L1794.9,153.9 M1791.0,156.6 L1796.0,159.5 L1796.3,159.5 L1795.5,160.3 L1790.4,157.4 M1789.8,157.9 L1796.1,159.1 L1798.4,159.0 L1795.6,161.1 L1789.2,159.9 M1785.0,163.2 L1785.7,163.4 L1786.3,164.2 L1784.6,164.5 L1784.0,164.3 M1791.7,155.7 L1792.1,156.5 L1792.9,158.4 L1790.5,158.1 L1790.1,157.3 M1790.5,157.1 L1792.8,159.1 L1793.8,156.9 L1792.4,160.3 L1790.2,158.3 M1783.6,166.0 L1779.5,169.0 L1778.7,171.1 L1777.6,167.6 L1781.7,164.6 M1779.1,165.1 L1777.9,167.8 L1778.5,167.7 L1777.1,167.8 L1778.2,165.1 M1773.8,163.3 L1771.7,161.0 L1771.0,160.5 L1772.7,159.5 L1774.9,161.9 M1769.1,157.4 L1770.5,160.3 L1769.0,161.0 L1768.6,159.9 L1767.2,157.0 M1759.6,160.5 L1759.0,161.0 L1760.7,164.1 L1757.3,162.2 L1757.9,161.6 M1753.7,162.5 L1754.8,168.2 L1757.3,171.7 L1753.0,168.7 L1751.9,163.0 M1753.6,162.5 L1751.8,166.2 L1753.6,168.3 L1750.0,166.1 L1751.8,162.3 M1758.1,161.0 L1758.9,162.9 L1758.3,168.4 L1756.7,162.5 L1755.9,160.6 M1736.4,167.6 L1738.6,168.2 L1737.6,170.1 L1737.2,169.7 L1735.0,169.1 M1729.9,177.6 L1734.9,176.5 L1738.1,175.3 L1735.0,178.2 L1730.0,179.3 M1731.2,171.6 L1736.1,171.3 L1740.2,170.1 L1745.1,168.5 L1740.7,171.7 L1736.5,172.9 L1731.6,173.2 M1725.9,180.4 L1726.6,185.9 L1726.6,188.4 L1724.5,185.8 L1723.8,180.3 M1729.9,179.9 L1729.9,182.9 L1730.5,183.3 L1728.5,183.1 L1728.5,180.1 M1700.1,188.6 L1702.0,191.0 L1702.6,191.9 L1700.7,191.7 L1698.7,189.3 M1708.3,183.6 L1708.4,186.8 L1711.1,189.6 L1707.0,187.3 L1706.9,184.1 M1704.9,185.6 L1705.1,187.1 L1708.2,186.0 L1704.0,188.3 L1703.8,186.9 M1696.0,191.2 L1695.0,192.3 L1695.9,195.4 L1693.6,192.4 L1694.5,191.3 M2081.6,137.7 L2083.0,143.1 L2082.0,149.0 L2080.7,143.0 L2079.3,137.5 M2105.6,140.0 L2108.0,135.7 L2110.2,131.3 L2109.5,136.6 L2107.0,140.9 M2107.4,140.0 L2110.3,137.1 L2111.1,131.5 L2111.6,137.7 L2108.7,140.6 M2120.2,136.8 L2120.2,136.3 L2120.2,135.0 L2122.4,135.8 L2122.5,136.3 M2120.5,126.1 L2117.5,134.9 L2115.3,142.1 L2115.9,134.4 L2118.9,125.7 M2128.5,128.8 L2125.7,133.6 L2120.5,136.8 L2116.6,141.1 L2119.9,136.2 L2125.1,133.0 L2127.9,128.2 M2116.3,124.8 L2114.7,126.8 L2115.7,125.8 L2113.0,126.5 L2114.6,124.4 M2089.4,119.3 L2088.1,120.9 L2090.1,122.0 L2086.9,120.9 L2088.1,119.3 M2069.9,124.8 L2068.7,124.9 L2067.0,122.4 L2069.2,123.4 L2070.4,123.3 M2069.0,126.5 L2068.0,126.6 L2064.5,123.7 L2068.5,125.7 L2069.5,125.7 M2062.8,114.3 L2063.3,116.1 L2061.2,116.5 L2061.5,114.9 L2061.0,113.1 M2069.1,115.6 L2069.8,117.2 L2071.1,119.2 L2068.3,117.3 L2067.7,115.7 M2046.2,114.9 L2047.8,116.0 L2046.4,118.3 L2045.9,117.1 L2044.2,116.0 M2036.6,120.6 L2039.4,122.4 L2040.0,121.2 L2039.0,123.8 L2036.1,121.9 M2026.9,127.6 L2024.8,131.6 L2022.1,136.8 L2023.0,130.9 L2025.1,126.9 M2023.4,128.5 L2021.9,129.9 L2022.0,135.5 L2019.8,130.0 L2021.2,128.6 M2026.1,128.2 L2021.3,125.6 L2016.6,127.1 L2021.5,124.2 L2026.3,126.9 M2025.5,117.3 L2026.9,118.9 L2028.3,121.0 L2026.2,119.3 L2024.9,117.7 M2009.9,113.3 L2009.6,113.9 L2008.5,117.6 L2008.3,113.5 L2008.6,112.9 M1997.8,115.3 L1997.5,114.6 L1999.1,117.1 L1995.9,114.9 L1996.1,115.6 M1987.7,126.7 L1987.7,126.9 L1989.8,127.1 L1986.9,127.9 L1986.9,127.7 M1993.4,136.5 L1991.9,135.2 L1995.0,133.9 L1994.1,135.2 L1995.7,136.5 M2005.6,126.2 L2006.1,125.3 L2004.1,123.8 L2006.9,123.3 L2006.5,124.1 M2002.9,129.0 L1999.8,126.0 L1993.5,128.2 L2000.1,124.9 L2003.2,127.8 M1733.5,189.3 L1735.6,183.1 L1735.4,179.4 L1737.5,183.4 L1735.5,189.6 M1722.5,191.3 L1723.5,191.2 L1721.6,188.7 L1725.7,191.0 L1724.7,191.1 M1713.9,193.0 L1714.0,187.8 L1713.7,185.7 L1716.2,187.4 L1716.1,192.5 M1732.5,189.5 L1729.6,187.4 L1729.8,184.5 L1731.0,186.7 L1733.9,188.8 M1728.4,190.2 L1727.2,189.8 L1729.9,187.6 L1729.1,189.6 L1730.3,190.0 M1736.9,188.8 L1737.9,186.2 L1738.5,185.2 L1738.8,186.3 L1737.8,188.9 M1762.7,186.1 L1763.7,184.2 L1763.2,180.8 L1765.3,184.4 L1764.3,186.3 M1754.0,186.7 L1754.0,185.8 L1753.1,184.0 L1755.1,185.6 L1755.2,186.5 M1770.7,185.5 L1769.6,181.9 L1771.4,180.4 L1771.0,182.2 L1772.1,185.8 M1762.7,186.1 L1762.8,184.6 L1764.7,182.2 L1763.6,184.7 L1763.5,186.2 M1.0,19.5 L4.0,18.6 L2.9,16.6 L5.2,19.5 L2.2,20.5 M27.3,30.6 L28.4,28.3 L27.3,25.8 L30.3,28.7 L29.2,31.1 M17.5,25.8 L21.6,22.6 L22.2,23.0 L22.8,24.2 L18.7,27.3 M37.0,34.4 L36.2,31.1 L40.2,29.4 L37.6,31.8 L38.3,35.1 M31.7,32.7 L30.4,32.0 L31.6,26.5 L32.7,31.5 L33.9,32.2 M45.4,37.9 L49.4,38.3 L52.4,39.6 L49.4,40.4 L45.4,40.1 M46.9,41.2 L51.1,37.0 L59.9,34.8 L65.0,32.1 L60.4,35.9 L51.6,38.1 L47.4,42.3 M45.7,38.5 L48.0,38.0 L46.5,35.6 L49.0,39.9 L46.6,40.4 M67.8,60.6 L69.7,57.1 L70.0,51.5 L71.1,57.5 L69.2,61.0 M60.8,56.4 L61.4,56.4 L63.9,55.7 L63.2,57.9 L62.6,57.9 M66.1,59.6 L65.5,59.5 L65.0,57.8 L67.6,59.5 L68.1,59.5 M82.5,74.3 L83.2,73.5 L84.2,72.5 L83.9,74.1 L83.1,74.9 M82.6,74.4 L82.0,73.6 L82.5,72.2 L84.2,74.2 L84.7,74.9 M68.1,75.7 L69.2,80.3 L70.6,81.9 L67.9,80.9 L66.7,76.4 M59.3,78.3 L63.6,83.0 L66.1,87.8 L62.0,83.9 L57.7,79.2 M74.2,73.9 L76.2,75.6 L74.8,80.1 L74.1,76.2 L72.1,74.4 M60.5,78.0 L60.4,78.5 L61.1,79.8 L58.6,79.6 L58.6,79.0 M70.3,75.0 L71.8,79.1 L69.3,82.4 L70.3,79.0 L68.8,75.0 M79.4,72.3 L80.3,75.5 L84.0,80.5 L78.9,76.3 L78.0,73.0 M52.0,96.1 L53.6,98.2 L53.4,97.0 L52.4,99.2 L50.9,97.1 M52.9,93.3 L56.3,93.9 L56.0,94.7 L56.2,95.8 L52.8,95.2 M57.0,80.1 L59.7,81.1 L63.7,86.4 L59.2,81.9 L56.5,80.9 M54.9,104.5 L60.6,100.4 L64.5,97.4 L61.0,101.3 L55.3,105.3 M55.8,105.2 L57.4,103.1 L61.4,103.4 L58.3,104.7 L56.8,106.7 M54.4,104.2 L54.6,102.7 L58.1,102.4 L55.2,103.7 L55.1,105.3 M62.8,108.9 L63.9,108.8 L62.7,106.0 L65.0,108.5 L63.9,108.7 M77.9,110.8 L80.0,107.9 L80.0,105.7 L81.2,108.3 L79.2,111.2 M77.0,110.7 L77.8,108.2 L77.4,107.9 L79.3,107.8 L78.5,110.3 M65.7,109.3 L64.0,105.8 L66.6,102.7 L65.7,105.7 L67.3,109.2 M79.9,111.1 L76.0,106.5 L76.2,102.2 L77.5,105.9 L81.4,110.4 M82.3,111.2 L81.7,107.7 L76.9,106.8 L82.5,107.0 L83.2,110.5 M97.9,109.1 L95.0,105.8 L94.9,103.5 L96.3,104.8 L99.2,108.0 M82.9,111.1 L82.6,108.1 L84.2,106.1 L84.3,108.0 L84.6,111.0 M95.1,109.4 L99.2,102.3 L101.7,95.8 L101.1,103.1 L97.0,110.2 M86.5,110.6 L88.0,108.3 L85.5,105.0 L89.9,108.5 L88.5,110.8 M104.2,105.2 L101.0,104.7 L101.0,102.7 L102.1,102.8 L105.3,103.4 M102.9,85.7 L102.6,87.8 L100.3,85.7 L101.9,85.7 L102.3,83.5 M109.5,94.1 L106.4,93.5 L103.6,95.8 L106.0,91.8 L109.1,92.4 M102.4,85.0 L97.7,88.2 L92.6,92.3 L89.7,96.0 L91.4,90.8 L96.6,86.8 L101.2,83.5 M110.4,93.2 L113.7,87.0 L116.0,83.9 L114.5,87.6 L111.2,93.9 M107.3,85.4 L108.6,85.2 L110.3,85.9 L108.6,86.2 L107.3,86.4 M111.8,96.7 L117.0,92.7 L121.0,92.5 L117.8,94.3 L112.6,98.3 M117.3,98.2 L117.7,95.5 L117.6,96.8 L118.7,94.8 L118.3,97.5 M124.9,97.0 L123.8,92.4 L119.6,89.4 L124.9,91.6 L126.0,96.1 M187.1,141.7 L190.0,144.8 L192.4,146.7 L189.3,146.1 L186.4,143.0 M187.2,143.5 L189.3,140.7 L195.0,141.1 L190.1,142.3 L188.0,145.1 M188.2,159.7 L191.7,160.9 L194.2,160.5 L191.4,162.8 L187.9,161.5 M187.1,142.1 L190.4,142.1 L189.3,141.3 L190.1,143.7 L186.8,143.7 M187.2,143.7 L192.4,142.2 L196.3,141.6 L192.5,143.9 L187.3,145.4 M188.0,158.1 L187.4,163.0 L189.9,168.1 L190.0,174.4 L190.3,182.3 L191.0,185.6 L188.6,182.4 L188.4,174.5 L188.2,168.2 L185.7,163.1 L186.4,158.2 M185.4,157.7 L185.7,158.8 L185.7,163.4 L184.4,159.1 L184.1,158.1 M187.6,158.1 L187.0,160.4 L185.7,162.6 L185.1,159.3 L185.7,157.0 M186.3,157.9 L188.2,165.7 L186.5,169.4 L188.4,176.7 L184.7,169.6 L186.4,165.9 L184.5,158.1 M179.5,156.8 L177.7,160.1 L170.9,166.3 L169.4,169.7 L164.8,176.1 L163.3,178.0 L164.0,175.5 L168.6,169.1 L170.1,165.7 L176.9,159.5 L178.7,156.2 M166.0,167.4 L169.7,170.3 L173.9,174.9 L176.7,179.4 L182.9,184.3 L176.0,180.1 L173.2,175.7 L169.0,171.1 L165.3,168.1 M166.3,166.9 L167.3,168.5 L167.8,170.1 L165.5,169.5 L164.5,167.9 M175.3,172.5 L176.3,168.2 L173.9,167.5 L178.4,168.0 L177.4,172.3 M172.6,172.5 L172.9,169.6 L172.9,168.8 L174.3,169.7 L173.9,172.6 M174.2,171.6 L176.3,174.0 L180.3,175.8 L175.8,174.6 L173.7,172.3 M171.5,174.9 L174.7,173.8 L179.9,174.8 L174.4,175.7 L171.3,176.8 M161.2,174.8 L159.3,177.3 L157.9,179.4 L157.4,176.3 L159.3,173.8 M160.7,174.8 L158.4,177.9 L158.2,179.6 L157.1,177.1 L159.4,174.0 M153.0,173.9 L151.4,176.9 L151.7,177.1 L149.6,175.6 L151.3,172.6 M146.1,173.4 L147.9,176.8 L151.9,182.2 L154.5,189.7 L157.9,194.3 L158.6,197.3 L156.8,194.8 L153.4,190.3 L150.8,182.7 L146.9,177.3 L145.0,173.9 M130.0,172.6 L127.6,175.2 L126.6,179.1 L126.8,174.6 L129.2,172.1 M143.2,173.2 L141.7,180.8 L141.7,186.4 L140.1,180.5 L141.7,172.9 M147.8,173.4 L145.5,176.9 L141.7,182.8 L139.4,190.0 L138.4,192.4 L134.3,199.9 L136.3,191.2 L137.3,188.8 L139.6,181.6 L143.4,175.8 L145.7,172.3 M148.0,173.5 L147.0,175.4 L146.9,177.1 L144.8,175.0 L145.7,173.1 M145.7,173.3 L143.1,178.1 L142.1,178.1 L142.2,177.6 L144.8,172.8 M134.7,172.8 L135.7,179.6 L133.8,187.1 L134.3,191.3 L132.4,187.1 L134.2,179.5 L133.3,172.8 M145.7,173.3 L142.6,176.8 L140.1,182.4 L138.0,185.8 L134.5,190.4 L136.6,184.9 L138.7,181.4 L141.3,175.8 L144.3,172.4 M128.1,179.8 L131.3,177.1 L135.6,172.3 L138.3,170.8 L136.2,173.1 L131.9,177.8 L128.7,180.5 M122.0,176.8 L121.4,174.2 L121.2,175.6 L123.0,174.0 L123.6,176.6 M121.1,176.3 L127.7,171.2 L130.6,167.9 L136.5,163.3 L142.4,160.5 L137.3,164.3 L131.4,168.9 L128.5,172.2 L121.9,177.3 M119.5,181.7 L119.4,184.0 L120.2,188.4 L118.6,184.0 L118.6,181.7 M118.0,182.0 L118.5,181.9 L121.4,184.2 L117.4,183.1 L116.9,183.2 M124.8,180.5 L125.6,183.8 L124.8,185.3 L124.5,183.7 L123.7,180.4 M111.9,190.7 L115.7,185.5 L117.6,182.1 L116.9,186.2 L113.1,191.4 M112.8,192.7 L117.9,193.1 L123.6,193.7 L117.6,195.2 L112.6,194.8 M108.9,196.4 L109.1,201.0 L108.0,205.8 L108.0,201.0 L107.8,196.3 M105.2,197.9 L106.6,201.9 L106.1,204.5 L105.8,202.1 L104.4,198.1 M103.8,198.4 L105.8,200.5 L106.8,201.8 L104.9,201.6 L102.9,199.5 M101.7,201.2 L107.7,199.0 L111.2,198.7 L107.9,199.8 L101.9,202.0 M99.3,208.4 L102.3,210.2 L107.1,209.6 L102.1,211.6 L99.1,209.8 M101.4,201.9 L104.8,204.3 L105.3,204.9 L104.3,205.6 L100.9,203.1 M102.4,214.6 L101.8,211.4 L102.3,208.8 L103.6,211.6 L104.3,214.8 M110.8,217.4 L107.7,212.8 L106.2,205.7 L109.4,212.4 L112.5,216.9 M108.1,219.3 L109.4,221.8 L109.2,223.4 L108.2,222.8 L106.9,220.4 M107.0,222.6 L108.6,223.8 L109.6,225.2 L107.6,224.9 L106.0,223.7 M107.3,221.9 L110.0,220.6 L115.4,221.8 L109.8,223.0 L107.1,224.2 M110.5,238.4 L112.7,236.7 L113.5,236.8 L114.6,237.8 L112.4,239.5 M108.8,236.4 L113.9,231.7 L119.7,230.5 L124.3,228.2 L120.9,232.3 L115.0,233.4 L109.9,238.1 M111.7,239.9 L113.6,236.0 L118.3,234.1 L114.4,236.6 L112.5,240.4 M107.5,234.8 L108.4,235.1 L111.3,233.4 L109.2,236.8 L108.3,236.5 M112.8,241.2 L114.7,238.5 L113.7,238.6 L115.8,239.3 L113.9,241.9 M125.7,252.4 L127.0,248.6 L127.3,243.3 L129.9,236.6 L129.2,243.8 L128.9,249.0 L127.5,252.8 M128.1,254.0 L129.2,248.3 L127.7,245.6 L131.0,237.2 L128.6,245.7 L130.1,248.4 L129.1,254.1 M125.2,252.1 L125.6,244.6 L127.3,238.6 L130.0,235.2 L129.1,239.1 L127.4,245.1 L127.1,252.5 M140.6,268.4 L142.5,265.9 L144.6,266.4 L143.0,266.9 L141.1,269.4 M135.4,260.9 L138.7,257.6 L141.6,256.9 L139.9,259.4 L136.6,262.7 M140.9,269.9 L141.4,270.8 L145.6,271.2 L141.6,272.7 L141.1,271.7 M146.5,286.1 L152.3,283.9 L155.0,281.4 L160.8,277.8 L155.4,282.2 L152.7,284.7 L146.9,286.9 M157.1,294.1 L158.2,290.3 L159.7,289.3 L159.9,290.8 L158.8,294.6 M154.2,291.9 L155.5,290.1 L160.2,286.4 L156.8,290.9 L155.5,292.7 M158.0,295.4 L161.2,294.2 L164.0,292.2 L161.7,295.3 L158.5,296.5 M163.5,301.8 L163.4,293.5 L165.8,289.5 L165.5,293.7 L165.5,302.0 M163.1,301.5 L162.4,301.2 L165.8,297.9 L163.2,301.6 L163.9,301.9 M170.5,306.7 L170.8,304.8 L173.3,303.8 L171.5,305.9 L171.2,307.8 M165.6,303.3 L171.0,301.8 L176.7,299.4 L171.5,302.8 L166.1,304.3 M177.2,310.6 L181.4,304.4 L181.7,303.0 L183.5,297.0 L183.3,303.9 L182.9,305.3 L178.7,311.5 M180.6,312.3 L180.6,310.3 L182.4,309.0 L182.7,311.4 L182.7,313.4 M176.1,310.0 L182.5,305.5 L185.4,303.5 L191.4,301.1 L195.7,298.4 L192.4,302.5 L186.4,304.9 L183.5,307.0 L177.1,311.5 M176.6,310.3 L176.4,304.1 L176.9,300.6 L177.7,304.2 L177.9,310.4 M183.7,313.8 L182.5,311.6 L185.2,306.9 L183.6,311.6 L184.8,313.9 M184.0,314.0 L184.3,311.9 L186.4,311.6 L185.2,312.3 L184.9,314.4 M184.8,314.5 L191.8,311.6 L194.8,305.3 L192.8,313.1 L185.8,316.0 M186.2,319.3 L186.6,317.0 L189.2,318.1 L187.4,318.7 L187.1,321.0 M197.8,327.6 L197.9,326.8 L199.7,325.0 L199.2,327.7 L199.1,328.6 M202.2,329.4 L205.1,323.2 L203.4,318.8 L206.0,323.4 L203.1,329.6 M190.8,324.7 L190.7,323.8 L189.6,322.7 L192.6,323.6 L192.6,324.4 M206.4,334.7 L210.6,333.5 L213.2,329.1 L211.9,335.4 L207.8,336.6 M209.8,339.3 L212.8,335.4 L215.4,331.2 L217.7,325.0 L216.8,331.9 L214.2,336.1 L211.2,340.0 M211.0,341.0 L212.7,341.0 L215.9,336.1 L213.9,342.9 L212.2,342.9 M206.1,334.3 L208.4,334.1 L208.6,334.4 L208.6,336.3 L206.3,336.5 M210.1,339.7 L216.4,337.3 L221.1,337.5 L216.9,339.0 L210.5,341.5 M210.7,340.6 L213.6,341.5 L216.3,340.3 L213.8,343.3 L210.9,342.4 M217.5,347.4 L219.4,343.4 L220.1,339.9 L221.4,343.7 L219.5,347.8 M222.0,351.4 L229.2,348.4 L233.2,347.0 L229.7,349.9 L222.5,352.9 M232.6,357.8 L237.0,353.9 L241.7,348.7 L246.6,345.4 L242.4,349.4 L237.7,354.6 L233.3,358.6 M234.6,359.0 L237.5,353.5 L238.7,346.4 L238.6,341.6 L239.5,346.6 L238.4,353.7 L235.5,359.2 M246.3,362.9 L247.6,361.0 L247.5,361.2 L248.7,362.0 L247.4,363.9 M246.4,362.9 L248.0,358.2 L250.3,352.3 L249.2,358.7 L247.6,363.4 M246.7,363.0 L246.1,361.4 L250.2,358.6 L247.9,362.3 L248.5,363.9 M239.8,361.5 L241.2,356.5 L241.1,351.6 L241.5,345.0 L240.3,339.3 L242.0,331.6 L242.4,339.4 L243.6,345.2 L243.2,351.8 L243.3,356.7 L241.9,361.6 M247.6,363.2 L245.9,356.2 L246.8,350.2 L247.9,356.1 L249.5,363.1 M167.0,115.3 L167.2,114.7 L168.4,112.0 L168.3,116.2 L168.2,116.7 M165.3,114.0 L166.2,112.4 L167.8,111.1 L167.2,112.9 L166.3,114.5 M173.6,120.8 L175.0,119.6 L176.1,119.0 L175.5,120.4 L174.1,121.6 M168.4,130.8 L169.4,132.9 L166.3,132.7 L167.8,131.6 L166.9,129.6 M174.4,131.5 L176.9,132.5 L176.8,135.9 L174.9,133.3 L172.4,132.3 M144.0,125.9 L142.5,128.9 L141.8,129.9 L141.0,127.4 L142.5,124.5 M150.5,127.6 L149.8,131.6 L151.5,135.7 L147.4,131.5 L148.1,127.4 M148.0,126.9 L145.4,127.1 L147.0,131.2 L144.6,126.6 L147.2,126.4 M118.0,121.2 L117.9,124.8 L117.8,127.7 L115.5,124.7 L115.7,121.1 M104.5,120.1 L103.6,123.8 L102.3,126.1 L102.7,123.2 L103.6,119.5 M111.0,120.6 L110.0,121.3 L108.4,122.7 L108.0,120.4 L109.1,119.7 M86.5,121.9 L85.8,124.2 L88.2,121.9 L84.7,124.3 L85.4,122.0 M88.7,121.1 L87.2,122.7 L87.4,123.7 L86.3,122.5 L87.8,120.9 M90.1,131.9 L92.6,130.4 L97.9,129.4 L93.0,131.4 L90.4,132.9 M89.6,131.6 L90.3,129.0 L90.5,129.1 L91.4,130.0 L90.6,132.6 M94.5,132.9 L96.5,126.3 L96.7,120.8 L97.8,116.2 L98.0,121.0 L97.7,126.5 L95.7,133.0 M109.9,134.8 L108.7,135.4 L109.5,131.4 L109.9,135.7 L111.1,135.2 M107.0,134.4 L106.5,132.4 L106.7,127.7 L107.5,132.1 L108.0,134.2 M124.8,137.9 L124.9,136.5 L128.0,133.9 L126.7,137.1 L126.6,138.5 M147.6,142.3 L149.3,140.3 L152.5,135.2 L150.6,141.3 L148.9,143.3 M143.1,141.4 L145.8,137.4 L149.0,133.9 L147.0,138.4 L144.2,142.4 M171.1,142.8 L170.3,139.5 L169.9,135.2 L171.8,139.4 L172.6,142.7 M176.2,142.7 L178.1,141.8 L177.0,140.4 L180.4,142.4 L178.5,143.3 M235.9,364.3 L234.6,362.0 L233.9,361.2 L236.5,361.4 L237.8,363.7 M242.2,366.1 L243.4,363.1 L246.9,362.7 L244.4,364.1 L243.1,367.1 M243.4,366.4 L243.5,364.8 L244.0,363.6 L245.5,364.2 L245.4,365.8 M246.5,366.4 L248.1,366.6 L247.9,363.0 L248.9,367.0 L247.3,366.8 M256.6,366.0 L256.9,364.0 L257.3,362.1 L258.2,364.8 L257.9,366.8 M267.4,365.5 L269.5,364.1 L269.5,362.4 L271.2,364.6 L269.2,366.0 M259.3,365.9 L257.8,363.0 L256.5,362.2 L258.8,362.5 L260.3,365.3 M276.3,365.7 L276.1,363.3 L275.5,362.1 L277.9,363.5 L278.1,365.9 M295.1,369.5 L295.4,367.2 L294.6,363.4 L297.7,366.7 L297.4,369.1 M296.5,369.8 L297.2,368.8 L295.6,366.3 L298.1,368.6 L297.3,369.6 M277.0,365.9 L276.5,365.7 L277.1,362.4 L278.1,366.7 L278.6,366.9 M297.1,369.9 L300.4,365.4 L302.5,361.1 L302.9,355.4 L304.5,361.9 L302.3,366.2 L299.0,370.7 M302.0,376.4 L303.3,373.6 L304.8,374.1 L304.6,375.2 L303.3,378.0 M301.7,375.9 L302.6,376.2 L305.7,376.2 L303.0,377.9 L302.1,377.6 M320.3,382.5 L318.5,376.9 L318.4,374.8 L320.6,376.2 L322.5,381.8 M305.1,378.1 L307.6,373.4 L314.5,368.7 L316.7,363.5 L321.8,361.9 L317.9,364.5 L315.6,369.7 L308.7,374.3 L306.2,379.1 M307.7,378.9 L308.5,375.8 L310.2,371.6 L309.3,376.1 L308.4,379.2 M319.9,382.4 L323.5,376.3 L328.9,372.3 L324.8,377.7 L321.2,383.8 M313.0,380.4 L313.8,373.4 L314.0,369.8 L312.5,362.3 L316.3,369.9 L316.1,373.5 L315.3,380.5 M324.5,383.6 L323.4,381.9 L325.9,378.2 L324.5,382.2 L325.6,383.9 M322.2,383.0 L323.7,379.2 L321.5,376.3 L324.8,379.2 L323.3,382.9 M326.9,384.2 L329.6,378.0 L329.5,373.3 L331.6,378.6 L328.9,384.9 M353.7,384.4 L352.8,382.2 L348.8,378.4 L354.3,381.1 L355.2,383.3 M338.6,386.2 L335.7,382.9 L333.6,380.0 L336.7,382.1 L339.6,385.5 M346.6,385.3 L346.2,378.9 L343.7,375.9 L347.5,378.5 L347.9,384.9 M346.6,385.3 L348.7,383.3 L349.0,383.5 L349.9,383.9 L347.8,385.8 M339.3,386.2 L340.0,380.2 L337.6,374.3 L342.0,379.8 L341.3,385.8 M360.8,374.3 L359.6,373.7 L357.7,371.7 L360.5,372.4 L361.7,373.0 M359.7,378.0 L355.9,377.1 L356.0,378.2 L355.5,375.8 L359.3,376.6 M360.6,374.9 L359.1,375.9 L357.5,372.7 L359.6,374.2 L361.1,373.2 M363.4,371.2 L361.8,369.3 L360.5,366.5 L363.8,368.4 L365.5,370.2 M366.9,367.1 L363.7,366.7 L363.4,362.1 L365.1,364.9 L368.3,365.3 M368.5,364.4 L365.8,365.8 L365.4,364.7 L365.6,363.8 L368.3,362.5 M361.7,353.7 L361.4,351.2 L362.1,348.6 L363.6,351.2 L364.0,353.7 M371.0,348.1 L371.2,347.5 L371.3,346.2 L373.5,347.6 L373.3,348.2 M363.0,352.9 L361.6,351.6 L361.7,351.1 L363.5,350.4 L364.9,351.7 M373.1,346.7 L370.0,340.2 L369.3,333.2 L370.9,339.9 L373.9,346.4 M373.9,345.9 L374.4,344.6 L373.0,342.4 L375.5,344.1 L375.0,345.4 M377.4,324.8 L371.5,324.5 L365.8,325.5 L371.3,323.4 L377.2,323.7 M380.0,329.1 L373.2,328.2 L370.7,330.0 L364.3,332.8 L370.5,328.5 L373.0,326.7 L379.8,327.6 M378.2,326.1 L377.1,326.2 L374.0,327.0 L375.7,324.5 L376.8,324.4 M361.8,314.6 L360.1,315.8 L362.4,316.4 L358.4,315.6 L360.0,314.4 M369.9,318.7 L369.8,321.8 L366.7,324.0 L367.6,321.0 L367.6,317.9 M372.2,319.9 L372.2,323.5 L368.2,324.8 L370.7,322.9 L370.8,319.3 M361.3,314.4 L360.8,321.1 L360.1,324.6 L359.9,321.0 L360.3,314.3 M372.9,314.5 L370.1,307.9 L368.2,304.8 L366.1,296.6 L369.8,304.2 L371.7,307.3 L374.5,313.8 M375.9,313.8 L376.5,314.5 L375.2,313.6 L378.0,313.6 L377.4,312.9 M381.4,312.6 L383.5,309.4 L381.0,308.0 L384.5,309.6 L382.4,312.8 M385.2,311.5 L384.4,311.3 L384.1,310.1 L386.6,310.9 L387.5,311.2 M406.0,303.5 L401.2,302.1 L397.2,299.7 L401.6,301.1 L406.5,302.5 M416.0,297.2 L413.7,293.3 L411.0,293.7 L414.9,292.0 L417.3,295.9 M416.4,297.0 L416.6,295.5 L414.1,291.1 L417.6,295.2 L417.3,296.7 M421.0,290.5 L417.8,288.5 L415.0,288.0 L418.7,286.5 L421.9,288.4 M421.0,287.7 L419.5,288.4 L415.6,285.3 L419.7,287.6 L421.2,286.8 M421.0,286.9 L421.1,287.2 L418.4,285.8 L421.1,286.0 L421.0,285.7 M405.9,278.4 L403.3,282.6 L397.6,285.9 L402.3,281.4 L404.9,277.3 M407.0,278.9 L406.6,281.6 L407.2,281.7 L405.9,281.2 L406.3,278.5 M406.2,278.5 L406.9,277.0 L405.1,277.6 L408.3,276.6 L407.6,278.1 M408.4,278.0 L407.9,275.4 L406.1,272.2 L409.2,274.9 L409.7,277.4 M401.5,279.5 L402.7,279.2 L402.7,277.5 L403.9,279.2 L402.7,279.4 M414.3,276.6 L413.0,274.4 L414.5,276.1 L414.3,274.9 L415.6,277.1 M421.8,275.0 L420.9,272.9 L422.0,266.9 L422.5,272.7 L423.4,274.8 M400.5,279.7 L398.5,277.4 L398.9,275.4 L400.4,275.9 L402.3,278.2 M412.8,260.0 L412.7,262.3 L410.6,260.9 L411.6,261.1 L411.7,258.8 M411.9,259.8 L411.9,261.2 L410.4,266.2 L410.5,261.0 L410.6,259.5 M410.1,259.3 L411.1,262.2 L409.1,267.4 L409.5,262.2 L408.6,259.3 M411.9,261.9 L413.3,260.1 L413.6,254.9 L415.2,260.8 L413.8,262.6 M413.5,261.7 L414.9,260.5 L416.1,255.7 L416.1,260.8 L414.7,262.0 M428.3,260.1 L426.8,257.0 L429.7,256.2 L428.6,257.1 L430.1,260.2 M437.3,252.5 L433.1,249.3 L426.8,249.4 L433.6,247.4 L437.8,250.6 M438.2,251.7 L435.6,252.9 L437.0,251.3 L436.0,252.1 L438.5,250.8 M451.9,248.2 L452.3,246.2 L453.9,242.8 L453.7,246.3 L453.3,248.3 M465.7,247.0 L464.2,245.5 L467.3,243.2 L466.5,245.7 L468.0,247.2 M472.3,246.6 L473.8,242.7 L474.4,237.7 L475.4,243.0 L473.9,246.9 M482.0,241.3 L479.0,241.4 L474.4,239.1 L479.6,239.9 L482.6,239.9 M481.3,243.7 L475.6,245.2 L469.6,247.5 L475.3,244.0 L481.0,242.5 M485.5,230.0 L481.1,232.3 L475.3,232.3 L480.5,230.0 L484.9,227.8 M483.6,236.1 L481.5,235.0 L476.8,236.7 L481.7,233.5 L483.8,234.6 M498.0,231.2 L497.8,227.0 L497.5,225.2 L499.7,227.0 L499.9,231.2 M495.4,234.5 L497.5,234.1 L499.3,234.9 L497.3,236.3 L495.2,236.7 M496.1,232.0 L501.1,235.9 L505.6,237.4 L500.0,237.6 L495.0,233.7 M495.1,235.7 L500.1,238.8 L505.1,240.4 L510.9,245.8 L504.5,241.5 L499.5,239.9 L494.5,236.8 M506.7,240.6 L506.4,235.6 L505.3,229.4 L507.9,225.6 L507.2,229.3 L508.4,235.6 L508.7,240.5 M511.6,240.8 L511.9,239.1 L513.7,238.8 L514.0,240.1 L513.7,241.9 M516.5,241.1 L518.2,237.3 L518.3,232.1 L519.7,237.9 L518.1,241.7 M508.3,240.7 L508.9,239.8 L506.4,239.0 L510.1,239.5 L509.5,240.3 M506.5,240.6 L508.8,234.5 L507.9,231.3 L509.7,234.6 L507.4,240.7 M505.4,240.5 L501.7,235.1 L499.6,229.3 L502.8,234.7 L506.5,240.1 M528.5,236.7 L522.7,231.4 L520.2,223.4 L524.3,230.3 L530.1,235.6 M520.6,240.7 L521.4,238.3 L521.0,236.0 L522.6,238.4 L521.8,240.8 M528.3,236.9 L528.1,235.9 L526.8,235.9 L529.4,235.8 L529.5,236.7 M532.0,235.0 L531.7,228.7 L531.7,223.5 L530.4,221.6 L532.5,223.5 L532.5,228.7 L532.8,235.0 M532.3,234.8 L533.2,233.0 L530.3,233.4 L534.9,232.7 L534.0,234.5 M533.0,234.5 L532.5,232.6 L532.7,232.0 L533.5,232.5 L534.0,234.4 M540.4,232.0 L541.4,229.1 L539.4,228.1 L542.7,228.4 L541.7,231.3 M552.3,230.5 L551.0,231.0 L552.7,229.2 L553.0,230.3 L554.3,229.8 M550.7,230.7 L551.3,230.4 L548.9,227.2 L553.0,230.3 L552.4,230.6 M574.7,221.1 L573.7,217.9 L575.9,216.7 L575.2,217.7 L576.3,221.0 M570.7,223.2 L569.8,220.9 L569.9,220.8 L571.0,220.6 L571.8,222.8 M569.2,223.9 L567.8,221.8 L568.7,220.9 L569.9,221.2 L571.3,223.3 M563.5,226.8 L559.1,224.8 L555.4,221.7 L560.4,223.2 L564.8,225.1 M585.9,212.7 L586.4,212.2 L583.8,211.3 L588.0,211.5 L587.6,212.1 M579.0,218.5 L577.9,216.4 L579.1,213.1 L578.7,216.3 L579.9,218.3 M584.5,213.9 L581.8,207.9 L577.4,202.2 L583.6,206.6 L586.3,212.6 M586.7,212.1 L586.1,211.1 L582.2,210.1 L586.7,210.3 L587.3,211.3 M600.7,202.5 L598.8,199.9 L596.3,198.7 L599.4,198.7 L601.3,201.4 M603.2,201.1 L601.4,200.7 L603.3,200.5 L603.5,200.5 L605.3,200.9 M607.8,198.5 L608.5,197.9 L608.7,195.4 L610.1,197.6 L609.3,198.3 M606.9,199.0 L601.5,195.5 L596.0,191.6 L602.6,194.3 L608.0,197.8 M614.9,175.5 L613.3,177.9 L609.4,182.8 L611.6,177.0 L613.2,174.6 M618.2,178.1 L615.7,183.6 L616.2,189.4 L613.6,182.9 L616.1,177.4 M623.4,182.7 L625.5,182.7 L626.6,179.0 L626.9,184.5 L624.7,184.5 M612.2,178.0 L612.0,177.2 L612.5,175.0 L612.9,178.3 L613.1,179.1 M610.8,177.4 L612.3,173.5 L613.9,170.7 L613.6,174.2 L612.0,178.0 M637.6,189.2 L639.9,189.4 L637.2,186.8 L641.8,190.8 L639.5,190.6 M648.9,189.7 L647.6,188.7 L649.5,186.9 L649.2,188.1 L650.5,189.2 M684.3,183.8 L683.4,182.6 L684.7,184.3 L684.8,183.0 L685.7,184.1 M676.2,183.8 L676.6,184.6 L675.4,181.6 L678.6,183.9 L678.3,183.0 M693.1,183.6 L693.3,183.2 L693.7,179.3 L694.8,183.0 L694.6,183.4 M709.4,179.9 L708.9,179.3 L709.5,177.6 L711.3,179.7 L711.8,180.3 M729.5,176.3 L729.4,173.3 L731.4,173.2 L731.5,173.5 L731.5,176.5 M744.9,173.8 L746.6,174.2 L745.6,172.8 L748.7,174.6 L747.0,174.2 M738.5,174.8 L738.4,171.1 L740.4,169.7 L740.8,171.2 L740.9,174.9 M753.8,172.5 L752.5,171.1 L753.8,170.9 L754.9,171.4 L756.2,172.8 M764.2,170.6 L765.9,169.3 L764.6,166.6 L766.8,169.4 L765.1,170.7 M770.2,168.6 L770.5,168.0 L769.0,167.3 L771.8,168.3 L771.5,168.9 M783.5,163.7 L782.8,162.3 L783.4,158.2 L783.8,162.3 L784.5,163.7 M809.1,155.8 L810.7,156.0 L809.5,155.2 L812.1,156.5 L810.4,156.3 M798.3,158.5 L796.9,156.9 L798.1,153.6 L799.0,157.0 L800.4,158.6 M819.8,152.5 L817.6,149.9 L817.9,148.9 L818.9,148.5 L821.2,151.2 M824.5,150.9 L823.1,146.2 L821.8,141.1 L824.3,145.9 L825.7,150.6 M823.2,151.4 L822.7,149.8 L821.1,151.3 L824.2,148.3 L824.6,149.9 M839.1,147.0 L839.2,145.1 L839.5,145.8 L840.3,145.0 L840.2,146.9 M14.6,505.1 L11.3,510.3 L10.5,516.0 L10.2,509.9 L13.5,504.7 M17.2,506.7 L17.0,506.8 L16.8,510.7 L15.5,506.8 L15.7,506.7 M20.8,509.1 L19.0,510.7 L20.3,514.1 L17.1,510.6 L18.9,509.1 M15.2,505.4 L14.3,506.9 L12.0,507.6 L13.5,506.0 L14.4,504.6 M21.2,520.6 L18.2,519.8 L19.6,520.9 L17.9,518.9 L20.8,519.6 M24.7,524.7 L18.8,526.2 L16.0,526.4 L18.3,524.5 L24.2,523.0 M17.9,534.1 L18.1,534.7 L17.6,534.3 L18.5,533.6 L18.3,533.0 M25.0,528.8 L24.0,528.7 L25.1,528.8 L25.4,528.0 L26.4,528.1 M22.0,532.5 L22.9,534.5 L23.6,535.8 L21.9,534.6 L21.0,532.6 M31.1,530.7 L31.3,535.6 L32.2,539.2 L29.3,536.2 L29.1,531.2 M35.8,529.5 L37.7,531.1 L40.2,534.9 L35.8,532.5 L33.9,530.9 M33.1,530.2 L32.4,532.4 L33.9,532.1 L30.9,532.4 L31.6,530.2 M45.6,531.0 L46.2,531.0 L44.7,535.2 L44.6,530.8 L43.9,530.8 M50.7,532.8 L50.0,535.3 L48.0,534.0 L48.9,533.7 L49.5,531.3 M51.3,533.0 L50.7,534.8 L53.3,535.6 L49.3,535.0 L49.8,533.2 M40.3,529.1 L39.1,529.1 L38.1,531.9 L37.6,528.5 L38.8,528.5 M48.7,532.1 L49.0,534.9 L45.6,534.3 L47.8,534.0 L47.5,531.2 M57.6,547.3 L58.0,546.2 L54.8,545.6 L59.1,544.2 L58.7,545.4 M58.1,542.2 L56.8,539.2 L54.0,539.3 L57.3,538.4 L58.7,541.4 M57.2,551.5 L53.9,550.5 L54.4,550.8 L53.8,549.4 L57.0,550.4 M59.5,566.8 L52.0,565.9 L44.7,563.3 L52.4,563.9 L59.9,564.9 M49.1,577.1 L48.7,573.6 L47.4,572.7 L50.8,572.9 L51.2,576.4 M57.4,571.3 L54.4,565.7 L50.1,558.2 L56.2,564.5 L59.2,570.1 M36.2,583.3 L35.4,581.3 L33.8,578.9 L36.9,580.2 L37.6,582.3 M37.3,582.9 L34.2,580.6 L35.1,580.5 L35.6,578.7 L38.7,581.0 M33.4,584.4 L34.2,582.8 L31.8,582.4 L35.3,582.6 L34.4,584.1 M3.4,590.0 L1.7,588.5 L1.1,584.7 L3.0,587.8 L4.7,589.3 M1.2,590.2 L0.4,590.5 L1.0,587.2 L1.6,590.2 L2.4,589.9 M13.4,588.9 L12.6,588.3 L12.2,585.9 L14.0,588.4 L14.7,589.1 M0.9,628.0 L5.9,627.1 L10.5,628.7 L6.0,629.5 L1.0,630.3 M25.6,593.8 L28.8,598.5 L29.1,599.8 L27.0,599.7 L23.9,595.0 M37.0,583.5 L37.7,583.9 L35.8,586.8 L35.4,584.1 L34.7,583.7 M38.2,583.2 L38.1,584.1 L42.6,586.0 L36.4,585.3 L36.5,584.4 M52.7,590.0 L52.6,586.1 L48.3,585.3 L54.2,585.0 L54.3,589.0 M54.5,596.5 L54.3,594.1 L55.1,593.8 L55.5,594.1 L55.7,596.5 M45.4,603.4 L44.0,603.1 L42.6,604.1 L44.2,601.9 L45.6,602.3 M42.7,616.5 L41.6,618.5 L43.1,620.0 L39.5,618.4 L40.6,616.5 M30.5,622.2 L31.1,623.7 L30.4,624.1 L29.7,624.0 L29.1,622.5 M53.6,616.1 L52.5,617.7 L50.7,620.7 L50.5,616.9 L51.6,615.3 M56.1,629.2 L56.8,630.2 L57.3,633.7 L55.5,630.6 L54.8,629.6 M67.1,629.9 L69.0,629.7 L67.3,630.2 L67.6,630.1 L65.6,630.3 M96.5,631.2 L94.4,637.4 L89.3,640.2 L93.4,636.9 L95.5,630.6 M93.3,630.4 L90.1,634.6 L88.5,640.6 L88.4,633.7 L91.6,629.5 M110.4,635.0 L108.8,636.1 L108.8,635.7 L107.6,636.1 L109.2,634.9 M107.2,642.4 L105.7,639.9 L106.2,640.4 L107.2,639.0 L108.7,641.5 M104.3,650.5 L97.4,654.8 L92.9,655.4 L96.9,653.7 L103.8,649.4 M121.1,654.8 L120.6,655.0 L120.7,651.3 L121.7,654.8 L122.2,654.7 M79.6,680.3 L80.4,679.4 L80.2,678.1 L82.0,680.8 L81.2,681.7 M69.8,680.6 L68.1,676.7 L67.6,674.5 L69.2,676.6 L70.9,680.5 M75.5,678.9 L75.6,677.8 L75.0,678.0 L77.9,678.0 L77.8,679.0 M67.0,681.6 L64.6,679.3 L62.8,680.8 L65.1,678.3 L67.5,680.7 M49.6,686.4 L53.3,686.9 L55.1,689.3 L52.9,688.3 L49.3,687.9 M37.2,679.5 L37.6,678.0 L34.9,675.8 L39.6,676.8 L39.1,678.2 M45.3,678.3 L44.5,676.7 L43.9,675.7 L46.0,676.4 L46.8,678.0 M26.8,679.9 L27.4,678.0 L30.2,677.0 L29.1,679.1 L28.5,681.0 M25.4,679.8 L27.2,674.2 L25.7,670.0 L28.2,674.3 L26.4,680.0 M17.5,679.3 L18.7,678.1 L17.3,676.6 L20.0,677.5 L18.8,678.7 M13.3,678.9 L12.6,676.2 L16.5,677.6 L14.5,677.5 L15.2,680.2 M7.7,677.8 L6.1,676.0 L5.7,676.5 L7.3,675.6 L8.8,677.4 M1274.6,490.9 L1275.5,492.2 L1273.2,493.3 L1274.2,492.5 L1273.3,491.2 M1276.6,484.1 L1279.8,485.9 L1283.3,485.9 L1279.8,486.9 L1276.5,485.1 M1277.0,482.7 L1279.0,482.6 L1280.9,481.1 L1279.2,483.5 L1277.2,483.6 M1271.0,481.3 L1269.4,480.2 L1271.5,479.6 L1271.0,479.7 L1272.5,480.8 M1277.9,480.5 L1275.8,474.9 L1276.3,466.3 L1277.5,474.4 L1279.7,480.1 M1261.2,488.6 L1259.7,485.0 L1258.7,484.2 L1260.8,484.7 L1262.3,488.3 M1263.2,486.9 L1262.5,485.7 L1262.6,483.9 L1263.2,485.3 L1263.9,486.5 M1251.2,491.6 L1250.9,490.3 L1252.7,491.3 L1251.3,491.1 L1251.6,492.4 M1264.4,463.9 L1264.4,465.3 L1266.8,466.0 L1263.5,466.7 L1263.4,465.3 M1262.7,469.5 L1264.2,468.1 L1264.9,468.3 L1264.9,470.2 L1263.3,471.7 M1262.9,463.9 L1264.3,463.2 L1263.4,460.9 L1266.1,463.4 L1264.7,464.2 M1252.7,471.3 L1248.3,467.9 L1245.2,466.3 L1248.8,467.2 L1253.2,470.7 M1253.7,469.9 L1250.0,468.3 L1247.3,470.9 L1250.1,466.4 L1253.8,467.9 M1240.7,466.0 L1242.3,467.3 L1242.8,465.4 L1242.9,469.4 L1241.3,468.2 M1242.9,472.6 L1247.1,472.8 L1252.1,473.8 L1246.9,474.0 L1242.8,473.8 M1242.1,444.9 L1243.8,445.9 L1243.0,443.5 L1243.5,448.2 L1241.8,447.2 M1243.8,433.7 L1245.5,434.6 L1250.4,436.2 L1245.0,436.3 L1243.3,435.5 M1242.2,444.2 L1242.8,444.5 L1245.7,443.6 L1243.2,445.8 L1242.6,445.5 M1250.3,427.5 L1250.4,430.5 L1251.8,428.9 L1248.1,430.6 L1248.0,427.6 M1260.4,424.7 L1266.9,426.9 L1272.1,425.4 L1266.7,428.3 L1260.3,426.1 M1294.8,413.2 L1293.5,413.0 L1295.0,414.8 L1291.9,412.6 L1293.2,412.8 M1302.7,412.4 L1302.9,412.1 L1304.7,414.4 L1301.9,412.7 L1301.7,413.0 M1315.2,422.4 L1313.8,419.0 L1310.7,416.4 L1314.7,418.1 L1316.0,421.5 M1294.6,432.9 L1292.8,431.3 L1290.6,430.6 L1294.5,429.8 L1296.3,431.5"/>
<path fill="none" stroke="#8d8c81" stroke-width="1.55" stroke-linejoin="round" d="M1687.2,362.0 L1690.7,357.6 L1694.8,352.3 L1693.1,346.5 L1690.2,343.7 L1683.9,340.7 L1680.7,335.0 L1682.6,328.5 L1682.2,323.4 L1679.3,318.9 L1678.7,315.0 L1680.3,311.0 L1679.8,307.5 L1677.2,303.5 L1677.2,300.0 L1679.8,296.0 L1684.3,292.1 L1691.4,287.6 L1697.4,284.9 L1703.3,283.6 L1709.9,283.3 L1718.3,284.0 L1723.4,283.0 L1727.2,279.2 L1724.8,274.2 L1718.1,272.0 L1720.5,267.5 L1724.9,263.8 L1730.2,259.3 L1735.7,252.2 L1737.6,245.0 L1738.1,240.0 L1737.2,236.0 L1741.1,233.8 L1747.4,232.9 L1750.4,232.9 L1755.7,230.9 L1757.6,227.6 L1763.5,222.7 L1768.9,219.0 L1771.8,218.1 L1777.2,213.8 L1780.8,208.8 L1777.5,205.2 L1779.3,201.0 L1786.4,195.5 L1793.3,191.8 L1801.2,189.2 L1808.1,188.5 L1815.2,189.5 L1819.7,188.6 L1822.3,185.6 L1823.8,182.5 L1824.4,178.5 L1828.3,176.6 L1836.2,176.2 L1840.1,175.7 L1845.7,177.0 L1850.4,177.7 L1856.8,179.6 L1860.1,179.5 L1868.1,179.6 L1872.7,177.6 L1872.9,176.8 L1869.1,176.8 L1869.2,175.2 L1873.5,172.0 L1874.4,169.2 L1872.1,166.3 L1873.7,164.8 L1882.2,164.2 M1882.2,164.2 L1889.0,167.4 L1892.7,169.0 L1898.5,171.0 L1901.7,172.2 L1905.1,172.8 L1909.1,174.3 L1915.3,176.3 L1920.2,177.8 L1925.8,179.5 L1932.4,181.6 L1936.2,182.8 L1944.0,186.0 L1950.5,190.0 L1952.9,194.1 L1951.6,199.4 L1952.5,202.4 L1955.8,203.6 L1956.3,205.8 L1954.4,209.0 L1955.6,212.3 L1960.2,216.2 L1960.8,220.1 L1957.5,224.6 L1957.2,228.5 L1959.8,232.5 L1962.5,235.9 L1967.2,241.0 M1882.2,164.2 L1887.7,163.5 L1892.2,163.0 L1896.0,159.2 L1903.6,159.2 L1910.2,162.0 L1914.2,164.5 L1919.3,167.8 L1922.5,169.0 L1928.3,171.4 L1934.5,172.6 L1938.7,173.4 L1947.4,173.4 L1955.8,171.4 L1961.1,171.5 L1965.4,171.8 L1971.5,173.3 L1977.8,174.7 L1983.0,173.9 L1988.3,174.1 L1991.9,172.6 L1998.7,169.9 L2004.1,165.6 L2005.4,160.4 L2007.5,155.9 L2010.8,151.4 L2015.6,147.8 L2022.7,144.5 L2029.6,143.1 L2037.4,143.4 L2044.3,142.7 L2051.4,140.8 L2058.7,141.6 L2063.5,144.2 L2067.1,145.1 L2074.6,147.6 L2079.4,149.0 L2086.0,150.5 L2089.8,154.2 L2084.3,158.0 L2081.0,160.5 M2081.0,160.5 L2088.6,158.6 L2095.5,156.8 L2099.7,155.8 L2105.2,154.2 L2110.1,151.2 L2111.0,145.5 M2081.0,160.5 L2076.3,163.7 L2071.5,166.2 L2070.3,168.3 L2074.2,169.0 L2074.5,171.0 L2071.2,175.0 L2071.2,178.5 L2074.5,182.5 L2079.6,185.1 L2087.4,187.1 L2094.6,190.1 L2099.1,192.8 L2102.4,194.6 L2103.0,198.9 L2096.5,203.4 L2091.1,207.9 L2085.9,213.1 L2085.9,217.9 L2091.1,223.1 L2095.9,227.6 L2101.1,232.1 L2104.7,236.6 L2107.3,241.9 L2106.4,244.9 L2099.8,246.8 L2101.0,253.0 L2097.2,258.7 L2097.8,262.0 L2101.7,265.2 L2105.0,267.4 L2108.2,268.6 L2109.2,270.8 L2107.8,274.0 L2110.2,277.0 L2113.4,278.5 L2119.8,281.8 L2116.0,286.8 L2109.3,290.5 L2110.6,293.2 L2117.7,296.5 L2124.0,299.5 L2130.5,302.8 L2135.9,305.8 L2141.1,309.0 L2141.7,312.9 L2137.8,318.1 L2131.2,323.5 L2126.7,326.0 L2120.8,330.0 L2116.8,332.4 L2110.9,336.1 L2105.3,339.9 L2100.7,341.5 L2096.1,344.9 L2090.3,348.3 L2085.7,350.7 L2079.1,353.7 L2077.0,356.0 L2072.0,359.0 L2067.0,360.0 L2063.5,362.0 M2063.5,362.0 L2056.0,366.5 M1687.0,362.0 L1689.5,369.6 L1688.8,373.8 L1685.5,377.7 L1681.6,380.4 L1676.4,382.4 L1672.8,384.8 L1670.2,388.0 L1669.6,391.3 L1670.9,395.2 L1670.6,399.3 L1667.8,406.5 L1661.5,405.8 L1655.2,403.2 M1449.8,594.0 L1452.0,599.1 L1455.8,601.0 L1462.2,601.7 L1466.2,603.5 L1468.1,606.8 L1471.4,608.8 L1476.6,610.2 L1481.4,611.3 L1489.0,613.2 L1490.2,619.5 L1498.8,617.6 L1502.7,618.8 L1505.3,622.7 L1509.5,626.0 L1516.0,629.2 L1521.4,630.8 L1529.0,630.8 M1469.0,587.0 L1474.9,587.4 L1481.3,588.0 L1488.6,587.4 L1495.7,585.4 L1501.4,585.7 L1506.6,588.3 L1512.0,589.8 L1518.5,590.5 L1523.0,592.0 L1526.2,594.5 L1529.2,595.1 L1534.0,593.2 M1560.2,538.2 L1561.2,544.9 L1560.3,549.1 L1557.7,553.6 L1554.7,556.6 L1550.8,558.6 L1550.5,561.0 L1553.8,564.2 L1553.2,567.9 L1548.6,572.4 L1543.5,575.1 L1537.0,576.4 L1534.6,578.8 L1535.9,582.7 L1535.9,586.6 L1534.0,593.2 M1534.0,593.2 L1528.3,597.0 L1528.3,599.1 L1532.2,601.1 L1535.8,604.1 L1539.7,608.7 L1539.7,612.2 L1534.0,617.0 M1534.0,617.0 L1528.3,622.7 L1527.1,626.0 L1528.4,629.2 L1532.3,631.0 L1538.3,631.6 L1542.8,632.0 L1544.0,625.8 L1539.7,622.2 L1534.0,617.0 M1542.8,632.0 L1549.4,637.7 L1555.7,639.8 L1561.8,639.8 L1564.8,640.5 L1572.9,641.7 L1581.3,643.6 L1583.2,646.9 L1578.6,652.1 L1575.3,657.5 L1572.7,664.0 L1570.9,669.4 L1569.0,677.0 M1569.0,677.0 L1563.1,678.2 L1559.8,679.9 L1554.0,680.8 L1556.5,684.5 L1551.2,687.6 L1547.0,690.2 L1542.8,694.1 L1540.2,698.7 L1537.5,703.2 L1532.8,710.8 L1537.8,707.0 L1546.3,706.0 L1549.9,707.8 L1552.8,714.5 L1556.5,717.0 M1569.0,677.0 L1576.2,675.9 L1580.4,676.0 L1586.4,675.2 L1594.0,673.2 L1599.0,674.5 L1608.0,675.1 L1613.5,677.5 L1619.0,679.0 M1619.0,679.0 L1617.1,686.0 L1619.5,689.8 L1626.0,693.0 L1631.4,694.2 L1639.0,693.2 M1556.5,717.0 L1561.5,715.9 L1567.9,716.0 L1575.7,713.3 L1580.2,711.3 L1584.8,708.2 L1590.2,707.0 L1592.8,709.5 L1596.4,712.8 L1601.6,717.4 L1606.4,716.2 L1611.6,709.0 L1616.4,706.0 L1621.6,706.7 L1625.5,707.9 L1628.8,709.8 L1631.8,708.7 L1635.0,704.1 L1637.1,699.9 L1639.0,693.2 M1619.0,679.0 L1625.6,682.0 L1630.4,683.2 L1635.8,683.3 L1639.7,680.7 L1645.7,680.1 L1651.1,680.8 L1654.8,681.4 L1658.1,681.4 L1663.8,680.5 L1669.9,679.0 L1674.2,677.2 L1677.4,676.0 L1683.2,675.5 L1688.2,674.7 L1696.5,674.5 L1700.2,679.5 L1697.5,675.3 L1695.5,668.1 L1697.0,663.0 L1703.5,659.8 L1709.5,656.8 L1713.4,654.4 L1719.0,652.0 M1719.0,652.0 L1714.5,648.3 L1710.7,646.5 L1707.6,644.4 L1700.4,639.0 L1697.7,636.3 L1692.6,632.5 L1688.4,627.4 L1687.1,622.8 L1684.7,619.0 L1680.8,615.0 L1681.4,612.7 L1686.6,611.3 L1693.8,609.2 L1699.9,607.8 L1704.2,606.0 L1708.0,604.1 L1714.4,602.7 L1718.6,600.9 L1726.1,598.8 L1734.5,597.3 L1738.1,596.8 L1744.0,598.2 M1734.0,525.8 L1733.1,534.3 L1731.2,540.0 L1728.0,546.5 L1728.9,551.9 L1734.1,557.1 L1737.7,562.5 L1740.3,569.0 L1741.2,574.4 L1740.6,579.6 L1742.1,583.8 L1745.9,587.7 L1746.8,591.6 L1744.0,598.2 M1744.0,598.2 L1749.0,595.8 L1753.6,598.2 L1757.3,599.5 L1762.3,600.5 L1768.9,603.5 L1774.1,606.8 L1779.2,610.3 L1785.1,614.9 L1789.6,615.5 L1793.4,612.2 L1799.2,611.7 L1807.6,613.6 L1812.7,616.0 L1815.3,619.2 L1820.7,622.2 L1825.9,623.2 L1829.8,625.5 L1835.2,628.2 L1839.0,632.0 M1719.0,652.0 L1723.1,651.8 L1728.5,653.0 L1735.7,651.2 L1740.1,649.4 L1744.8,646.6 L1748.0,647.0 L1753.8,645.4 L1759.1,646.1 L1764.2,647.3 L1769.2,647.7 L1774.9,649.1 L1783.4,650.5 L1789.7,651.2 L1794.0,652.0 M1794.0,652.0 L1797.6,650.0 L1802.7,649.4 L1807.3,647.2 L1815.1,643.0 L1818.3,641.6 L1822.9,637.2 L1829.5,633.9 L1834.2,632.7 L1839.0,632.0 M1794.0,652.0 L1792.1,657.7 L1793.3,661.6 L1799.0,668.2 M1799.0,668.2 L1796.2,673.0 L1792.6,674.8 L1786.7,675.5 L1784.6,677.8 L1785.9,682.4 L1784.7,686.9 L1781.9,689.9 L1779.0,694.5 M1639.0,693.2 L1643.2,694.6 L1648.5,696.1 L1657.4,695.8 L1662.7,695.6 L1670.6,693.2 L1678.9,693.5 L1684.1,696.8 L1691.9,699.2 L1697.2,700.0 L1703.6,701.1 L1711.0,701.7 L1715.0,702.6 L1722.6,703.2 L1728.0,703.9 L1731.4,704.2 L1737.6,703.0 L1745.4,699.8 L1749.2,698.1 L1755.0,697.5 L1759.4,696.8 L1764.1,696.2 L1770.8,696.1 L1773.8,694.8 L1779.0,694.5 M1709.0,702.0 L1709.9,707.7 L1711.8,711.3 L1715.0,715.2 L1715.0,718.5 L1710.2,723.2 M1716.5,717.0 L1721.1,720.6 L1726.0,722.7 L1733.2,723.9 L1737.6,723.9 L1742.3,722.6 L1750.1,720.8 L1757.9,718.2 L1762.7,715.2 L1765.3,711.3 L1770.1,708.0 L1777.9,704.8 L1780.9,701.2 L1779.0,694.5 M1599.0,508.2 L1604.7,509.6 L1609.5,510.5 L1613.5,511.6 L1619.0,512.0 M1972.2,430.0 L1977.3,430.0 L1981.6,429.4 L1986.5,428.1 L1994.6,428.6 L2002.4,430.9 L2010.2,433.7 L2014.3,435.2 L2019.3,437.3 L2022.9,438.3 L2028.6,438.8 L2035.0,439.1 L2040.2,438.4 L2044.8,438.2 M2061.0,394.5 L2056.6,397.6 L2053.2,400.8 L2049.6,405.0 L2046.9,412.1 L2048.8,420.6 L2048.6,427.8 L2047.0,432.6 L2044.8,438.2 M2044.8,438.2 L2051.4,444.0 L2052.9,448.1 L2051.6,453.4 L2053.4,457.9 L2058.6,462.4 L2061.6,466.3 L2063.5,472.0 M1892.2,473.2 L1897.7,471.3 L1902.7,469.5 L1909.6,468.0 L1917.4,467.3 L1925.8,467.5 L1929.5,467.3 L1936.2,468.5 L1940.7,469.3 L1947.0,469.2 L1953.0,468.7 L1958.9,469.6 L1962.5,469.8 L1965.8,469.2 L1972.1,469.3 L1979.9,467.7 L1985.3,468.2 L1989.2,470.8 L1994.6,472.9 L2002.4,474.9 L2010.8,477.7 L2015.3,480.3 L2021.7,482.7 L2026.0,484.0 M2026.0,484.0 L2031.7,481.8 L2035.0,482.7 L2041.2,480.6 L2047.3,478.6 L2050.2,477.8 L2056.1,476.1 L2059.1,474.5 L2063.5,472.5 M2026.0,484.0 L2023.5,492.0 L2027.2,494.5 L2022.6,496.0 L2018.7,497.4 L2013.6,499.8 L2008.4,503.0 L2004.8,506.9 L2001.0,514.5 L2006.0,518.2 L1999.8,520.0 L1993.5,518.2 L1989.8,518.9 L1984.0,522.0 L1978.6,524.1 L1973.4,526.1 L1966.5,526.7 L1961.7,525.9 L1957.2,525.3 L1952.2,525.8 M1897.2,494.0 L1901.1,495.1 L1907.7,497.2 L1915.2,498.4 L1920.8,498.7 L1924.3,498.8 L1930.2,500.3 L1933.8,503.2 L1934.7,506.9 L1932.2,514.5 M1859.8,513.8 L1866.9,513.4 L1870.6,514.1 L1877.1,515.7 L1883.4,515.2 L1890.0,514.4 L1896.9,514.5 L1902.0,514.6 L1907.6,514.6 L1912.3,515.8 L1915.4,516.1 L1921.8,516.7 L1928.2,516.4 L1932.2,515.2 M1932.2,515.2 L1936.1,516.4 L1942.7,518.5 L1947.5,521.0 L1952.2,525.8 M1952.2,525.8 L1954.2,534.3 L1956.2,539.4 L1959.5,544.6 L1960.7,549.1 L1960.1,553.6 L1956.2,557.5 L1948.3,561.5 L1947.2,564.8 L1952.3,568.0 L1954.4,572.2 L1953.5,580.8 M1953.5,580.8 L1955.5,585.4 L1957.3,589.3 L1960.3,593.8 L1964.2,597.7 L1965.4,601.6 L1964.1,606.2 L1959.3,610.3 L1955.6,611.3 L1950.2,614.9 L1945.9,617.3 L1942.4,620.3 L1938.1,623.2 L1934.6,627.5 L1932.2,633.8 L1934.1,637.0 L1936.0,643.2 M1953.5,580.8 L1959.4,577.9 L1964.9,576.4 L1967.8,575.6 L1973.9,574.6 L1979.9,574.2 L1985.6,573.7 L1992.9,573.1 L1997.0,573.8 L2004.3,574.5 L2010.0,575.2 L2015.4,575.8 L2020.8,576.4 L2027.3,577.5 L2031.2,577.6 L2039.6,579.5 L2047.4,582.0 L2055.8,583.0 L2060.3,583.1 L2065.5,583.2 L2071.0,582.0 L2076.0,585.8 L2083.6,582.0 L2087.8,582.0 L2091.7,584.5 L2097.7,585.5 L2101.7,585.6 L2106.8,584.8 L2113.1,585.7 L2117.7,588.3 L2120.1,587.1 L2120.7,581.9 L2123.4,577.1 L2128.6,571.9 L2134.9,569.2 L2141.1,568.0 L2147.2,568.2 M2063.5,472.5 L2067.6,473.5 L2073.0,473.9 L2078.7,475.0 L2085.9,477.5 L2091.1,481.5 L2097.1,482.4 L2104.9,480.4 L2113.3,481.0 L2117.2,481.8 L2123.7,484.2 L2129.1,488.5 L2130.4,494.3 L2129.8,498.8 L2127.2,502.7 L2128.4,506.9 L2133.6,512.1 L2139.6,516.3 L2147.4,520.2 L2150.4,523.5 L2149.1,526.8 L2152.7,529.1 L2158.0,529.7 L2161.8,531.1 L2167.5,533.5 L2170.8,536.8 L2169.6,540.0 L2163.7,544.0 L2156.8,545.5 L2152.4,545.5 L2147.7,544.8 L2142.0,545.4 L2138.8,547.4 L2139.1,550.0 L2142.9,554.0 L2145.3,558.8 L2145.6,562.4 L2147.2,568.2 M2147.2,568.2 L2155.8,569.2 L2159.7,568.3 L2162.3,565.7 L2167.7,564.1 L2172.2,563.8 L2176.8,563.2 L2185.2,563.2 L2189.6,563.3 L2194.3,564.1 L2201.5,567.5 L2206.4,572.4 L2211.0,577.0 L2207.2,580.8 L2208.2,587.4 L2213.9,590.1 L2219.2,590.2 L2225.6,591.4 L2232.8,594.7 L2236.1,599.5 L2238.5,603.2 L2239.8,609.5 L2245.4,609.9 L2252.1,610.5 L2258.4,611.3 L2263.6,612.7 L2269.6,612.8 L2274.6,612.2 L2281.0,611.5 M1838.5,630.8 L1844.3,632.0 L1848.0,631.7 L1853.4,633.5 L1858.6,636.8 L1865.8,637.0 L1871.6,635.5 L1876.2,634.5 L1883.0,633.7 L1886.4,633.1 L1891.1,633.2 L1898.1,632.7 L1903.6,633.6 L1907.7,634.2 L1911.9,636.7 L1916.8,637.8 L1924.6,640.4 L1931.3,641.7 L1936.0,643.2 M1798.5,668.2 L1804.0,669.4 L1809.9,672.0 L1818.3,673.0 L1823.9,672.9 L1828.7,672.3 L1834.7,670.8 L1837.3,668.2 L1844.4,666.1 L1849.6,665.3 L1857.6,664.1 L1862.2,662.8 L1867.7,661.2 L1873.2,658.6 L1876.8,656.6 L1880.4,656.7 L1885.8,654.8 L1890.3,654.9 L1896.2,655.5 L1903.4,656.7 L1908.6,658.6 L1912.8,659.2 L1918.5,658.2 M1936.0,643.2 L1928.4,644.2 L1924.2,646.9 L1921.6,650.5 L1918.5,654.5 L1918.5,658.2 M1918.5,658.2 L1926.1,663.0 L1930.3,665.2 L1936.0,667.5 M1936.0,667.5 L1931.0,670.6 L1924.6,672.8 L1919.2,676.3 L1915.3,680.2 L1911.1,685.6 L1908.1,689.6 L1905.9,693.4 L1901.1,699.4 L1895.9,704.6 L1891.1,707.9 L1883.5,710.8 M1936.0,667.5 L1941.3,666.8 L1947.7,667.8 L1953.1,667.5 L1957.3,668.0 L1964.3,669.0 L1969.2,670.3 L1975.8,672.1 L1980.2,673.0 L1985.0,673.9 L1991.9,673.2 L1996.4,671.9 L2003.3,670.4 L2007.6,669.6 L2013.5,667.6 L2017.7,666.5 L2024.0,664.4 L2025.8,662.9 L2031.0,660.8 M2031.0,660.8 L2034.3,660.7 L2039.6,659.3 L2044.3,657.9 L2052.7,658.8 L2058.4,661.9 L2061.8,662.7 L2069.6,665.7 L2077.4,668.3 L2083.4,672.5 L2088.6,679.0 L2092.8,685.0 L2096.7,691.5 L2100.6,697.2 L2105.2,703.0 L2103.9,705.5 L2096.8,704.8 L2091.1,705.1 L2085.9,706.4 L2082.6,709.4 L2080.7,714.6 L2077.7,719.2 L2075.1,721.4 L2071.0,726.0 L2068.5,732.0 M2031.0,660.8 L2033.4,664.9 L2037.0,669.6 L2040.5,675.0 L2043.2,677.4 L2047.1,682.5 L2051.9,685.8 L2054.9,689.0 L2059.7,695.6 L2062.3,703.4 L2063.2,711.6 L2063.3,716.3 L2062.6,721.4 L2063.8,727.4 L2067.0,730.6 L2072.7,732.6 L2076.0,733.5 L2081.8,733.9 L2088.4,732.5 L2092.4,729.0 L2096.0,726.0 M1778.5,694.5 L1781.4,698.3 L1786.1,703.0 L1789.2,705.3 L1793.3,708.5 L1797.4,710.3 L1803.7,714.3 L1809.0,715.8 L1812.7,717.9 L1817.1,718.5 L1821.8,719.8 L1829.6,719.8 L1837.4,717.9 L1845.8,715.8 L1849.9,715.2 L1856.2,713.2 L1861.6,712.4 L1866.4,711.7 L1870.5,710.9 L1876.7,711.1 L1883.5,710.8 M1778.5,694.5 L1780.4,701.2 L1776.8,704.8 L1772.3,706.2 L1767.7,708.0 L1761.7,713.5 L1760.2,717.6 L1757.8,722.0 L1756.0,726.0 M1766.0,736.0 L1773.4,734.8 L1777.4,735.0 L1785.8,734.9 L1790.1,735.4 L1796.2,735.3 L1801.8,735.7 L1805.8,735.9 L1811.3,736.4 L1816.2,736.8 L1821.1,737.2 L1826.4,737.0 L1831.6,737.4 L1838.1,736.3 L1845.3,735.4 L1849.2,734.1 L1849.8,735.9 L1847.2,741.1 L1848.4,745.3 L1853.6,749.2 L1856.3,753.7 L1856.9,759.5 L1855.8,763.2 L1852.5,765.1 L1851.9,767.5 L1853.8,770.8 L1852.1,772.8 L1846.2,774.2 L1841.1,777.2 L1835.9,782.3 L1832.9,787.8 L1831.6,794.2 L1826.2,794.8 L1822.1,792.9 L1815.8,789.7 L1810.7,786.8 L1807.4,784.5 L1804.3,782.7 L1799.6,778.7 L1794.5,775.0 L1791.2,772.4 L1785.7,768.5 L1780.8,764.6 L1778.4,761.8 L1774.2,758.0 L1770.3,751.5 L1767.9,745.5 L1766.3,741.7 L1766.0,736.0 M1756.0,726.0 L1761.7,724.1 L1764.1,726.5 L1765.8,732.7 L1766.0,736.0 M1851.0,733.5 L1845.3,727.8 L1844.1,724.2 L1846.0,718.5 L1841.0,717.0 M1883.5,710.8 L1884.3,717.8 L1885.4,722.3 L1889.6,728.4 L1892.9,730.6 L1897.4,733.6 L1901.6,737.8 L1902.9,741.7 L1907.7,745.0 L1913.7,746.4 L1916.8,748.2 L1923.4,750.0 L1928.6,750.7 L1930.7,752.8 L1929.8,758.5 M1929.8,758.5 L1925.9,764.2 L1925.7,768.4 L1927.6,773.6 L1930.6,777.8 L1935.2,781.7 L1934.6,785.6 L1928.7,790.2 L1925.7,794.7 L1924.8,802.2 M1843.5,774.8 L1848.4,778.1 L1851.1,781.4 L1856.5,784.7 L1863.0,787.3 L1868.1,788.8 L1872.7,789.5 L1873.2,790.7 L1870.0,792.6 L1866.7,794.4 L1862.8,796.3 L1859.2,798.8 L1855.3,802.0 L1853.2,805.6 L1852.2,812.2 M1874.8,789.8 L1879.6,786.9 L1883.3,783.5 L1888.4,782.6 L1893.6,784.9 L1899.0,788.1 L1905.5,792.7 L1907.3,796.8 L1904.7,801.4 L1899.3,804.4 L1893.4,806.5 L1890.2,806.3 L1884.8,808.5 L1882.2,811.0 L1880.4,809.5 L1879.1,803.7 L1876.1,799.2 L1871.6,796.6 L1868.5,793.5 M1908.5,794.8 L1910.4,801.4 L1914.3,803.2 L1920.7,803.0 L1924.8,802.2 M1881.0,812.2 L1879.1,820.8 L1879.4,825.9 L1881.3,831.1 L1884.7,835.0 L1889.8,838.2 L1891.7,841.8 L1890.3,846.4 L1887.7,849.7 L1883.1,852.3 L1879.8,855.6 L1876.0,862.2 L1872.2,866.0 M1903.5,804.8 L1910.7,804.5 L1915.9,804.4 L1919.7,803.4 L1927.8,805.2 L1934.2,810.0 L1937.6,815.5 L1938.2,822.7 L1935.5,827.2 L1929.0,829.8 L1921.8,832.2 L1919.0,833.4 L1912.7,834.8 L1904.6,836.7 L1898.3,837.9 L1892.2,839.0 M1938.5,826.0 L1945.2,823.7 L1949.9,823.2 L1957.1,822.0 L1964.9,821.3 L1969.7,822.5 L1973.9,822.8 L1981.3,825.0 L1985.6,826.7 L1990.8,827.1 L1995.2,827.9 L2001.3,827.1 L2004.3,826.6 L2010.3,826.3 L2014.2,827.0 L2015.4,825.2 L2013.5,818.5 M2016.0,839.8 L2017.9,833.1 L2017.3,828.0 L2014.7,821.5 L2015.3,817.9 L2019.2,816.6 L2024.6,814.5 L2032.4,811.2 L2038.0,810.1 L2041.4,810.3 L2047.4,811.4 L2054.3,811.5 L2058.5,812.2 M1929.8,758.5 L1936.4,764.2 L1943.3,766.3 L1949.3,766.5 L1953.7,767.0 L1957.1,767.7 L1963.3,767.8 L1969.3,769.2 L1973.7,769.2 L1977.6,769.5 L1983.3,770.0 L1989.3,770.4 L1993.7,770.7 L2002.1,769.5 L2009.9,766.2 L2017.7,763.5 L2022.5,762.8 L2026.8,761.0 L2032.9,760.9 L2035.8,760.7 L2040.3,761.3 L2046.2,762.6 L2049.9,763.5 L2055.8,765.0 L2060.7,767.0 L2066.0,768.1 L2071.0,769.8 M1991.0,1059.8 L1985.3,1064.5 L1984.1,1069.6 L1985.4,1077.4 L1985.7,1083.2 L1984.8,1090.0 M1983.5,1065.5 L1985.5,1072.4 L1985.4,1076.9 L1984.5,1083.5 L1981.2,1090.0 L1980.7,1096.0 L1982.6,1102.5 L1984.2,1108.5 L1985.8,1115.0 L1985.7,1118.2 L1986.5,1124.0 L1985.0,1131.8 L1986.2,1137.4 L1986.4,1142.3 L1985.4,1150.6 L1985.8,1156.0 L1985.8,1162.2 L1986.3,1167.3 L1986.1,1174.4 L1986.5,1178.0 M2251.0,956.0 L2256.7,953.2 L2259.7,950.2 L2262.3,945.6 L2267.7,942.9 L2276.0,941.1 L2281.0,941.0 M2246.0,987.2 L2253.6,986.3 L2258.1,988.4 L2262.7,993.6 L2263.2,997.8 L2260.0,1001.7 L2256.7,1004.7 L2252.8,1007.3 L2249.8,1010.6 L2247.2,1015.2 L2242.4,1018.2 L2235.9,1019.6 L2231.0,1021.0 M2246.0,1017.2 L2246.4,1022.5 L2246.0,1029.6 L2244.8,1034.7 L2242.2,1037.3 L2244.6,1039.4 L2252.4,1041.3 L2258.2,1041.3 L2261.9,1041.4 L2268.6,1038.7 L2274.9,1038.3 L2281.0,1038.5 M2241.0,1038.5 L2239.1,1046.1 L2237.9,1051.5 L2236.6,1058.0 L2234.8,1065.8 L2234.1,1070.1 L2232.1,1076.9 L2231.0,1081.0 M2226.0,1038.5 L2231.7,1037.5 L2233.2,1040.5 L2232.6,1047.7 L2230.8,1052.8 L2227.5,1056.7 L2225.4,1056.7 L2223.5,1051.0 M2207.2,1068.0 L2209.6,1073.9 L2211.2,1077.0 L2213.9,1083.2 L2215.7,1087.9 L2217.8,1093.1 L2219.5,1096.6 L2221.5,1103.1 L2223.5,1109.2 M2239.8,1048.0 L2239.5,1054.0 L2237.9,1056.8 L2236.9,1063.2 L2235.6,1067.7 L2234.8,1072.8 L2233.9,1079.9 L2232.2,1083.2 L2231.4,1087.7 L2229.7,1093.1 L2228.8,1099.3 L2226.5,1105.5 L2225.5,1109.2 M2225.5,1115.5 L2231.9,1115.1 L2237.8,1116.3 L2243.3,1116.8 L2247.5,1116.5 L2255.9,1114.0 L2261.1,1108.2 L2267.7,1104.0 L2273.9,1102.5 L2278.4,1100.5 L2281.0,1099.2 M1335.2,976.0 L1338.3,978.6 L1343.8,983.6 L1347.1,990.8 L1348.5,997.5 L1348.4,1001.2 L1349.6,1009.6 L1350.9,1017.4 L1352.7,1023.7 L1355.3,1029.5 L1358.3,1033.6 L1362.2,1036.6 L1362.8,1040.2 L1360.2,1045.0 L1353.0,1047.2 L1346.9,1046.2 L1339.2,1046.7 L1335.0,1047.2 L1326.9,1047.8 L1320.2,1049.8 L1321.5,1054.8 L1318.1,1056.0 L1309.9,1056.6 L1306.3,1057.6 L1300.6,1060.6 L1298.7,1065.2 L1299.2,1068.8 L1302.5,1072.0 L1302.8,1075.9 L1300.2,1081.1 L1294.5,1085.1 L1288.6,1087.2 L1284.8,1088.4 L1278.5,1090.7 L1274.7,1092.3 L1270.0,1095.4 L1263.5,1100.6 L1258.7,1104.5 L1253.0,1109.2 L1246.8,1108.0 M1181.0,1146.0 L1181.0,1153.0 L1179.0,1153.5 L1179.0,1159.6 L1179.0,1165.5 L1181.0,1166.0 L1181.5,1171.9 L1181.0,1178.0 M1181.0,1161.8 L1193.0,1168.0 M1163.0,1168.0 L1179.0,1165.5 M1594.0,931.8 L1589.2,938.8 L1588.1,944.6 L1588.7,952.4 L1588.7,959.9 L1588.1,968.3 L1586.8,975.8 L1584.9,983.7 L1580.7,990.0 L1577.2,992.7 L1573.6,995.8 L1569.9,1000.9 L1569.3,1006.1 L1570.2,1011.5 L1572.8,1018.0 L1576.4,1022.5 L1581.6,1025.8 L1585.2,1029.7 L1587.8,1034.8 L1592.9,1039.7 L1598.3,1043.1 L1601.3,1044.8 L1602.9,1048.4 L1606.8,1053.1 L1609.0,1057.0 L1611.3,1063.3 L1612.9,1069.2 L1614.4,1077.6 L1616.4,1084.8 L1616.5,1090.0 M1616.8,1091.8 L1611.8,1094.2 L1614.0,1098.2 L1618.2,1103.4 L1620.3,1106.6 L1623.9,1114.7 L1625.0,1117.7 L1625.8,1123.8 L1626.2,1131.6 L1624.8,1139.4 L1625.2,1145.4 L1627.1,1150.6 L1626.8,1157.8 L1626.0,1162.5 L1624.1,1168.9 L1623.0,1173.0 M1664.0,1022.2 L1664.3,1028.9 L1664.9,1034.6 L1661.3,1040.9 L1657.4,1043.3 L1652.9,1046.1 L1649.3,1049.1 L1645.1,1051.5 L1641.7,1053.6 L1636.7,1058.0 L1633.3,1064.6 L1634.7,1072.4 L1632.6,1079.4 L1630.5,1082.6 L1626.7,1086.6 L1622.3,1090.4 L1617.0,1091.5 M1346.5,777.8 L1353.2,783.1 L1358.5,786.0 L1365.7,788.5 L1372.6,790.3 L1380.4,791.7 L1388.8,792.5 L1392.9,793.7 L1398.9,793.4 L1404.0,793.5 L1409.0,791.5 L1413.0,792.5 L1418.6,794.5 L1424.0,796.0 L1426.5,799.8 L1434.1,800.7 L1440.1,801.0 L1447.9,801.0 L1454.8,800.7 L1461.3,799.7 L1465.2,799.8 M1556.5,717.0 L1558.4,723.8 L1556.6,728.4 L1551.4,733.6 L1550.8,737.8 L1554.7,741.7 L1555.6,745.9 L1553.7,751.1 L1557.6,755.0 L1564.3,757.1 L1567.9,758.2 L1572.2,761.5 L1570.2,767.2 M1710.2,724.0 L1716.9,725.0 L1720.2,726.6 L1724.0,731.0"/>
<g shape-rendering="crispEdges">
<rect x="528.4" y="331.8" width="96.3" height="48.4" fill="#fcfcfc"/>
<rect x="624.1" y="331.8" width="48.4" height="48.4" fill="#fbfbfb"/>
<rect x="672.0" y="331.8" width="48.4" height="48.4" fill="#fafafa"/>
<rect x="719.9" y="331.8" width="96.3" height="48.4" fill="#f9f9f9"/>
<rect x="815.6" y="331.8" width="48.4" height="48.4" fill="#f8f8f8"/>
<rect x="863.5" y="331.8" width="96.3" height="48.4" fill="#f7f7f7"/>
<rect x="959.2" y="331.8" width="96.3" height="48.4" fill="#f6f6f6"/>
<rect x="1055.0" y="331.8" width="191.5" height="48.4" fill="#f5f5f5"/>
<rect x="432.6" y="379.7" width="48.4" height="48.4" fill="#efefef"/>
<rect x="480.5" y="379.7" width="48.4" height="48.4" fill="#eeeeee"/>
<rect x="528.4" y="379.7" width="48.4" height="48.4" fill="#ececec"/>
<rect x="576.2" y="379.7" width="48.4" height="48.4" fill="#ebebeb"/>
<rect x="624.1" y="379.7" width="48.4" height="48.4" fill="#eaeaea"/>
<rect x="672.0" y="379.7" width="48.4" height="48.4" fill="#e9e9e9"/>
<rect x="719.9" y="379.7" width="48.4" height="48.4" fill="#e8e8e8"/>
<rect x="767.7" y="379.7" width="48.4" height="48.4" fill="#e7e7e7"/>
<rect x="815.6" y="379.7" width="48.4" height="48.4" fill="#e6e6e6"/>
<rect x="863.5" y="379.7" width="96.3" height="48.4" fill="#e5e5e5"/>
<rect x="959.2" y="379.7" width="287.3" height="48.4" fill="#e4e4e4"/>
<rect x="432.6" y="427.5" width="48.4" height="48.4" fill="#dedede"/>
<rect x="480.5" y="427.5" width="48.4" height="48.4" fill="#dddddd"/>
<rect x="528.4" y="427.5" width="48.4" height="48.4" fill="#dadada"/>
<rect x="576.2" y="427.5" width="48.4" height="48.4" fill="#d9d9d9"/>
<rect x="624.1" y="427.5" width="48.4" height="48.4" fill="#d8d8d8"/>
<rect x="672.0" y="427.5" width="48.4" height="48.4" fill="#d7d7d7"/>
<rect x="719.9" y="427.5" width="48.4" height="48.4" fill="#d6d6d6"/>
<rect x="767.7" y="427.5" width="48.4" height="48.4" fill="#d5d5d5"/>
<rect x="815.6" y="427.5" width="48.4" height="48.4" fill="#d4d4d4"/>
<rect x="863.5" y="427.5" width="48.4" height="48.4" fill="#d3d3d3"/>
<rect x="911.4" y="427.5" width="96.3" height="48.4" fill="#d2d2d2"/>
<rect x="1007.1" y="427.5" width="96.3" height="48.4" fill="#d1d1d1"/>
<rect x="1102.9" y="427.5" width="143.6" height="48.4" fill="#d0d0d0"/>
<rect x="432.6" y="475.4" width="48.4" height="48.4" fill="#cfcfcf"/>
<rect x="480.5" y="475.4" width="48.4" height="48.4" fill="#cecece"/>
<rect x="528.4" y="475.4" width="48.4" height="48.4" fill="#d0d0d0"/>
<rect x="576.2" y="475.4" width="48.4" height="48.4" fill="#cccccc"/>
<rect x="624.1" y="475.4" width="48.4" height="48.4" fill="#cbcbcb"/>
<rect x="672.0" y="475.4" width="48.4" height="48.4" fill="#cacaca"/>
<rect x="719.9" y="475.4" width="48.4" height="48.4" fill="#c9c9c9"/>
<rect x="767.7" y="475.4" width="48.4" height="48.4" fill="#c8c8c8"/>
<rect x="815.6" y="475.4" width="48.4" height="48.4" fill="#c7c7c7"/>
<rect x="863.5" y="475.4" width="48.4" height="48.4" fill="#c5c5c5"/>
<rect x="911.4" y="475.4" width="48.4" height="48.4" fill="#c4c4c4"/>
<rect x="959.2" y="475.4" width="48.4" height="48.4" fill="#c3c3c3"/>
<rect x="1007.1" y="475.4" width="48.4" height="48.4" fill="#c2c2c2"/>
<rect x="1055.0" y="475.4" width="48.4" height="48.4" fill="#c1c1c1"/>
<rect x="1102.9" y="475.4" width="48.4" height="48.4" fill="#c0c0c0"/>
<rect x="1150.7" y="475.4" width="48.4" height="48.4" fill="#bfbfbf"/>
<rect x="1198.6" y="475.4" width="47.9" height="48.4" fill="#bebebe"/>
<rect x="432.6" y="523.3" width="96.3" height="48.4" fill="#bababa"/>
<rect x="528.4" y="523.3" width="144.1" height="48.4" fill="#b9b9b9"/>
<rect x="672.0" y="523.3" width="96.3" height="48.4" fill="#b8b8b8"/>
<rect x="767.7" y="523.3" width="48.4" height="48.4" fill="#b7b7b7"/>
<rect x="815.6" y="523.3" width="96.3" height="48.4" fill="#b4b4b4"/>
<rect x="911.4" y="523.3" width="48.4" height="48.4" fill="#b3b3b3"/>
<rect x="959.2" y="523.3" width="48.4" height="48.4" fill="#b2b2b2"/>
<rect x="1007.1" y="523.3" width="48.4" height="48.4" fill="#b1b1b1"/>
<rect x="1055.0" y="523.3" width="48.4" height="48.4" fill="#b0b0b0"/>
<rect x="1102.9" y="523.3" width="48.4" height="48.4" fill="#afafaf"/>
<rect x="1150.7" y="523.3" width="48.4" height="48.4" fill="#aeaeae"/>
<rect x="1198.6" y="523.3" width="47.9" height="48.4" fill="#adadad"/>
<rect x="432.6" y="571.2" width="144.1" height="48.4" fill="#a0a0a0"/>
<rect x="576.2" y="571.2" width="96.3" height="48.4" fill="#a4a4a4"/>
<rect x="672.0" y="571.2" width="48.4" height="48.4" fill="#a3a3a3"/>
<rect x="719.9" y="571.2" width="48.4" height="48.4" fill="#a4a4a4"/>
<rect x="767.7" y="571.2" width="48.4" height="48.4" fill="#a0a0a0"/>
<rect x="815.6" y="571.2" width="96.3" height="48.4" fill="#9f9f9f"/>
<rect x="911.4" y="571.2" width="96.3" height="48.4" fill="#a1a1a1"/>
<rect x="1007.1" y="571.2" width="96.3" height="48.4" fill="#9d9d9d"/>
<rect x="1102.9" y="571.2" width="143.6" height="48.4" fill="#9c9c9c"/>
<rect x="432.6" y="619.0" width="144.1" height="48.4" fill="#7a7a7a"/>
<rect x="576.2" y="619.0" width="48.4" height="48.4" fill="#888888"/>
<rect x="624.1" y="619.0" width="48.4" height="48.4" fill="#898989"/>
<rect x="672.0" y="619.0" width="48.4" height="48.4" fill="#8a8a8a"/>
<rect x="719.9" y="619.0" width="48.4" height="48.4" fill="#898989"/>
<rect x="767.7" y="619.0" width="96.3" height="48.4" fill="#888888"/>
<rect x="863.5" y="619.0" width="48.4" height="48.4" fill="#898989"/>
<rect x="911.4" y="619.0" width="144.1" height="48.4" fill="#888888"/>
<rect x="1055.0" y="619.0" width="96.3" height="48.4" fill="#878787"/>
<rect x="1150.7" y="619.0" width="95.8" height="48.4" fill="#888888"/>
<rect x="432.6" y="666.9" width="96.3" height="48.4" fill="#555555"/>
<rect x="528.4" y="666.9" width="48.4" height="48.4" fill="#545454"/>
<rect x="576.2" y="666.9" width="96.3" height="48.4" fill="#525252"/>
<rect x="672.0" y="666.9" width="48.4" height="48.4" fill="#5e5e5e"/>
<rect x="719.9" y="666.9" width="48.4" height="48.4" fill="#646464"/>
<rect x="767.7" y="666.9" width="48.4" height="48.4" fill="#686868"/>
<rect x="815.6" y="666.9" width="144.1" height="48.4" fill="#727272"/>
<rect x="959.2" y="666.9" width="192.0" height="48.4" fill="#737373"/>
<rect x="1150.7" y="666.9" width="95.8" height="48.4" fill="#747474"/>
<rect x="432.6" y="714.8" width="48.4" height="48.4" fill="#353535"/>
<rect x="480.5" y="714.8" width="96.3" height="48.4" fill="#3d3d3d"/>
<rect x="576.2" y="714.8" width="96.3" height="48.4" fill="#3c3c3c"/>
<rect x="672.0" y="714.8" width="48.4" height="48.4" fill="#414141"/>
<rect x="719.9" y="714.8" width="48.4" height="48.4" fill="#474747"/>
<rect x="767.7" y="714.8" width="48.4" height="48.4" fill="#484848"/>
<rect x="815.6" y="714.8" width="96.3" height="48.4" fill="#525252"/>
<rect x="911.4" y="714.8" width="48.4" height="48.4" fill="#545454"/>
<rect x="959.2" y="714.8" width="48.4" height="48.4" fill="#555555"/>
<rect x="1007.1" y="714.8" width="48.4" height="48.4" fill="#575757"/>
<rect x="1055.0" y="714.8" width="48.4" height="48.4" fill="#585858"/>
<rect x="1102.9" y="714.8" width="96.3" height="48.4" fill="#5a5a5a"/>
<rect x="1198.6" y="714.8" width="47.9" height="48.4" fill="#5b5b5b"/>
<rect x="432.6" y="762.6" width="48.4" height="48.4" fill="#222222"/>
<rect x="480.5" y="762.6" width="48.4" height="48.4" fill="#292929"/>
<rect x="528.4" y="762.6" width="48.4" height="48.4" fill="#2a2a2a"/>
<rect x="576.2" y="762.6" width="96.3" height="48.4" fill="#292929"/>
<rect x="672.0" y="762.6" width="48.4" height="48.4" fill="#303030"/>
<rect x="719.9" y="762.6" width="48.4" height="48.4" fill="#313131"/>
<rect x="767.7" y="762.6" width="48.4" height="48.4" fill="#343434"/>
<rect x="815.6" y="762.6" width="48.4" height="48.4" fill="#353535"/>
<rect x="863.5" y="762.6" width="48.4" height="48.4" fill="#3c3c3c"/>
<rect x="911.4" y="762.6" width="48.4" height="48.4" fill="#3e3e3e"/>
<rect x="959.2" y="762.6" width="48.4" height="48.4" fill="#404040"/>
<rect x="1007.1" y="762.6" width="48.4" height="48.4" fill="#414141"/>
<rect x="1055.0" y="762.6" width="48.4" height="48.4" fill="#424242"/>
<rect x="1102.9" y="762.6" width="48.4" height="48.4" fill="#444444"/>
<rect x="1150.7" y="762.6" width="48.4" height="48.4" fill="#474747"/>
<rect x="1198.6" y="762.6" width="47.9" height="48.4" fill="#494949"/>
<rect x="432.6" y="810.5" width="96.3" height="48.4" fill="#1e1e1e"/>
<rect x="528.4" y="810.5" width="48.4" height="48.4" fill="#232323"/>
<rect x="576.2" y="810.5" width="96.3" height="48.4" fill="#292929"/>
<rect x="672.0" y="810.5" width="48.4" height="48.4" fill="#2c2c2c"/>
<rect x="719.9" y="810.5" width="48.4" height="48.4" fill="#2d2d2d"/>
<rect x="767.7" y="810.5" width="48.4" height="48.4" fill="#2f2f2f"/>
<rect x="815.6" y="810.5" width="48.4" height="48.4" fill="#303030"/>
<rect x="863.5" y="810.5" width="96.3" height="48.4" fill="#323232"/>
<rect x="959.2" y="810.5" width="48.4" height="48.4" fill="#333333"/>
<rect x="1007.1" y="810.5" width="96.3" height="48.4" fill="#363636"/>
<rect x="1102.9" y="810.5" width="48.4" height="48.4" fill="#373737"/>
<rect x="1150.7" y="810.5" width="48.4" height="48.4" fill="#3b3b3b"/>
<rect x="1198.6" y="810.5" width="47.9" height="48.4" fill="#3d3d3d"/>
<rect x="432.6" y="858.4" width="48.4" height="48.4" fill="#181818"/>
<rect x="480.5" y="858.4" width="48.4" height="48.4" fill="#232323"/>
<rect x="528.4" y="858.4" width="48.4" height="48.4" fill="#252525"/>
<rect x="576.2" y="858.4" width="48.4" height="48.4" fill="#262626"/>
<rect x="624.1" y="858.4" width="96.3" height="48.4" fill="#292929"/>
<rect x="719.9" y="858.4" width="48.4" height="48.4" fill="#2a2a2a"/>
<rect x="767.7" y="858.4" width="48.4" height="48.4" fill="#2e2e2e"/>
<rect x="815.6" y="858.4" width="48.4" height="48.4" fill="#303030"/>
<rect x="863.5" y="858.4" width="48.4" height="48.4" fill="#2f2f2f"/>
<rect x="911.4" y="858.4" width="48.4" height="48.4" fill="#323232"/>
<rect x="959.2" y="858.4" width="48.4" height="48.4" fill="#333333"/>
<rect x="1007.1" y="858.4" width="48.4" height="48.4" fill="#323232"/>
<rect x="1055.0" y="858.4" width="96.3" height="48.4" fill="#333333"/>
<rect x="1150.7" y="858.4" width="48.4" height="48.4" fill="#363636"/>
<rect x="1198.6" y="858.4" width="47.9" height="48.4" fill="#383838"/>
<rect x="432.6" y="906.2" width="48.4" height="48.4" fill="#080808"/>
<rect x="480.5" y="906.2" width="48.4" height="48.4" fill="#1c1c1c"/>
<rect x="528.4" y="906.2" width="48.4" height="48.4" fill="#1f1f1f"/>
<rect x="576.2" y="906.2" width="48.4" height="48.4" fill="#252525"/>
<rect x="624.1" y="906.2" width="96.3" height="48.4" fill="#282828"/>
<rect x="719.9" y="906.2" width="96.3" height="48.4" fill="#292929"/>
<rect x="815.6" y="906.2" width="96.3" height="48.4" fill="#2b2b2b"/>
<rect x="911.4" y="906.2" width="96.3" height="48.4" fill="#2c2c2c"/>
<rect x="1007.1" y="906.2" width="48.4" height="48.4" fill="#303030"/>
<rect x="1055.0" y="906.2" width="48.4" height="48.4" fill="#313131"/>
<rect x="1102.9" y="906.2" width="96.3" height="48.4" fill="#333333"/>
<rect x="1198.6" y="906.2" width="47.9" height="48.4" fill="#343434"/>
<rect x="432.6" y="954.1" width="96.3" height="48.4" fill="#030303"/>
<rect x="528.4" y="954.1" width="48.4" height="48.4" fill="#0b0b0b"/>
<rect x="576.2" y="954.1" width="48.4" height="48.4" fill="#1c1c1c"/>
<rect x="624.1" y="954.1" width="48.4" height="48.4" fill="#111111"/>
<rect x="672.0" y="954.1" width="48.4" height="48.4" fill="#1f1f1f"/>
<rect x="719.9" y="954.1" width="48.4" height="48.4" fill="#222222"/>
<rect x="767.7" y="954.1" width="48.4" height="48.4" fill="#232323"/>
<rect x="815.6" y="954.1" width="48.4" height="48.4" fill="#252525"/>
<rect x="863.5" y="954.1" width="96.3" height="48.4" fill="#262626"/>
<rect x="959.2" y="954.1" width="48.4" height="48.4" fill="#272727"/>
<rect x="1007.1" y="954.1" width="96.3" height="48.4" fill="#2a2a2a"/>
<rect x="1102.9" y="954.1" width="96.3" height="48.4" fill="#2b2b2b"/>
<rect x="1198.6" y="954.1" width="47.9" height="48.4" fill="#2e2e2e"/>
<rect x="432.6" y="1002.0" width="48.4" height="48.4" fill="#080808"/>
<rect x="480.5" y="1002.0" width="48.4" height="48.4" fill="#020202"/>
<rect x="528.4" y="1002.0" width="48.4" height="48.4" fill="#0a0a0a"/>
<rect x="576.2" y="1002.0" width="144.1" height="48.4" fill="#121212"/>
<rect x="719.9" y="1002.0" width="96.3" height="48.4" fill="#191919"/>
<rect x="815.6" y="1002.0" width="48.4" height="48.4" fill="#1d1d1d"/>
<rect x="863.5" y="1002.0" width="48.4" height="48.4" fill="#1b1b1b"/>
<rect x="911.4" y="1002.0" width="96.3" height="48.4" fill="#1f1f1f"/>
<rect x="1007.1" y="1002.0" width="96.3" height="48.4" fill="#222222"/>
<rect x="1102.9" y="1002.0" width="96.3" height="48.4" fill="#212121"/>
<rect x="1198.6" y="1002.0" width="47.9" height="48.4" fill="#232323"/>
<rect x="432.6" y="1049.9" width="48.4" height="48.4" fill="#0a0a0a"/>
<rect x="480.5" y="1049.9" width="48.4" height="48.4" fill="#020202"/>
<rect x="528.4" y="1049.9" width="144.1" height="48.4" fill="#000000"/>
<rect x="672.0" y="1049.9" width="48.4" height="48.4" fill="#030303"/>
<rect x="719.9" y="1049.9" width="48.4" height="48.4" fill="#0c0c0c"/>
<rect x="767.7" y="1049.9" width="48.4" height="48.4" fill="#0e0e0e"/>
<rect x="815.6" y="1049.9" width="48.4" height="48.4" fill="#101010"/>
<rect x="863.5" y="1049.9" width="96.3" height="48.4" fill="#121212"/>
<rect x="959.2" y="1049.9" width="48.4" height="48.4" fill="#141414"/>
<rect x="1007.1" y="1049.9" width="48.4" height="48.4" fill="#1a1a1a"/>
<rect x="1055.0" y="1049.9" width="96.3" height="48.4" fill="#0e0e0e"/>
<rect x="1150.7" y="1049.9" width="48.4" height="48.4" fill="#0a0a0a"/>
<rect x="1198.6" y="1049.9" width="47.9" height="48.4" fill="#000000"/>
<rect x="432.6" y="1097.7" width="48.4" height="47.9" fill="#000000"/>
<rect x="480.5" y="1097.7" width="48.4" height="47.9" fill="#1a1a1a"/>
<rect x="528.4" y="1097.7" width="239.9" height="47.9" fill="#000000"/>
<rect x="767.7" y="1097.7" width="48.4" height="47.9" fill="#020202"/>
<rect x="815.6" y="1097.7" width="48.4" height="47.9" fill="#070707"/>
<rect x="863.5" y="1097.7" width="96.3" height="47.9" fill="#050505"/>
<rect x="959.2" y="1097.7" width="48.4" height="47.9" fill="#080808"/>
<rect x="1007.1" y="1097.7" width="239.4" height="47.9" fill="#000000"/>
</g></svg></body></html>
